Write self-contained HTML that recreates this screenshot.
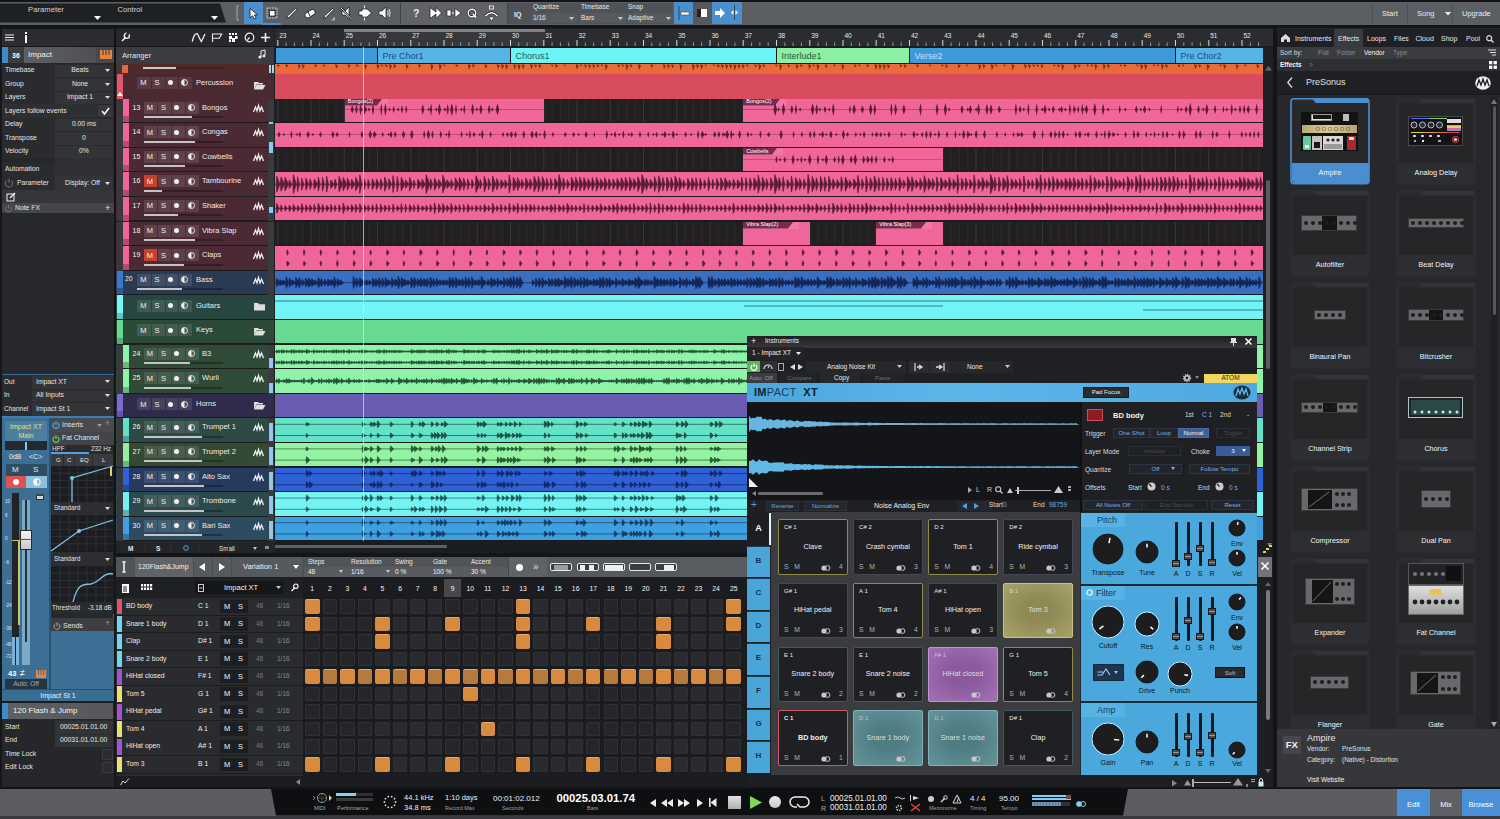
<!DOCTYPE html><html><head><meta charset="utf-8"><style>
html,body{margin:0;padding:0;width:1500px;height:819px;overflow:hidden;background:#1b1c1f;}
body{position:relative;font-family:"Liberation Sans",sans-serif;}
div{position:absolute;box-sizing:border-box;}
.t{white-space:nowrap;line-height:1;}
svg{position:absolute;overflow:visible;}
</style></head><body>

<div style="left:0px;top:0px;width:1500px;height:28px;background:#131417;"></div>
<div style="left:0px;top:2px;width:1500px;height:23px;background:#5b5e63;"></div>
<svg style="left:0px;top:0px;" width="240" height="28" viewBox="0 0 240 28"><polygon points="0,3.5 220,3.5 226,22.5 0,22.5" fill="#1f2024"/></svg>
<div class="t" style="left:28px;top:5.5px;font-size:7.7px;color:#d4d4d4;">Parameter</div>
<div class="t" style="left:117.5px;top:5.5px;font-size:7.7px;color:#d4d4d4;">Control</div>
<svg style="left:94px;top:16px;" width="8" height="5" viewBox="0 0 8 5"><polygon points="0,0 7,0 3.5,4" fill="#fff"/></svg>
<svg style="left:211px;top:16px;" width="8" height="5" viewBox="0 0 8 5"><polygon points="0,0 7,0 3.5,4" fill="#fff"/></svg>
<svg style="left:236px;top:6px;" width="4" height="15" viewBox="0 0 4 15"><path d="M3,0 L1,0 L1,14 L3,14" stroke="#aaa" fill="none" stroke-width="1"/></svg>
<div style="left:244px;top:2px;width:19px;height:22px;background:#4a90d0;"></div>
<svg style="left:249px;top:8px;" width="10" height="12" viewBox="0 0 10 12"><path d="M1,0.5 L1,10 L3.5,7.8 L5.5,11 L7.2,10 L5.3,7 L8.5,6.8 Z" fill="#fff" stroke="#111" stroke-width="0.8"/></svg>
<div style="left:262px;top:23px;width:19px;height:2px;background:#4a90d0;"></div>
<svg style="left:266px;top:7px;" width="13" height="13" viewBox="0 0 13 13"><rect x="1" y="1" width="10" height="10" fill="none" stroke="#eee" stroke-width="1" stroke-dasharray="1.4,1.2"/><rect x="3.5" y="3.5" width="5.5" height="5.5" fill="#fff" stroke="#111" stroke-width="0.7"/></svg>
<svg style="left:285px;top:7px;" width="13" height="13" viewBox="0 0 13 13"><path d="M1.5,11.5 L2.5,9 L10.5,1.5 L11.8,2.6 L4,10.5 Z" fill="#fff" stroke="#111" stroke-width="0.8"/></svg>
<svg style="left:303px;top:7px;" width="14" height="13" viewBox="0 0 14 13"><rect x="1.5" y="4" width="11" height="5.5" rx="2.7" fill="#fff" stroke="#111" stroke-width="0.8" transform="rotate(-32 7 6.7)"/><path d="M5,5 L7,9" stroke="#111" stroke-width="0.9"/></svg>
<svg style="left:322px;top:7px;" width="14" height="15" viewBox="0 0 14 15"><path d="M1.5,11.5 L2.5,9 L10.5,1.5 L11.8,2.6 L4,10.5 Z" fill="#fff" stroke="#111" stroke-width="0.8"/><path d="M9,13.5 L13,13.5 L13,9.5 Z" fill="#aaa"/></svg>
<svg style="left:340px;top:6px;" width="13" height="14" viewBox="0 0 13 14"><path d="M2,5 L5,5 L9,1 L9,13 L5,9 L2,9 Z" fill="#fff" stroke="#111" stroke-width="0.7"/><path d="M1,2 L11.5,13" stroke="#111" stroke-width="2"/><path d="M1,2 L11.5,13" stroke="#eee" stroke-width="1"/></svg>
<svg style="left:358px;top:5px;" width="15" height="16" viewBox="0 0 15 16"><path d="M6.5,0.5 L6.5,15.5" stroke="#eee" stroke-width="1"/><path d="M1,6 L4,6 L4,4 L9,4 L13.5,8 L9,12 L4,12 L4,10 L1,10 Z" fill="#fff" stroke="#111" stroke-width="0.7"/></svg>
<svg style="left:378px;top:6px;" width="13" height="14" viewBox="0 0 13 14"><path d="M1,5 L4,5 L8,1 L8,13 L4,9 L1,9 Z" fill="#fff" stroke="#111" stroke-width="0.7"/><path d="M9.5,4.5 Q11,7 9.5,9.5 M11,3 Q13.5,7 11,11" stroke="#eee" fill="none" stroke-width="0.9"/></svg>
<div style="left:400px;top:3px;width:1px;height:21px;background:#3e4045;"></div>
<div style="left:401px;top:2px;width:106px;height:23px;background:#606267;"></div>
<div class="t" style="left:413px;top:7.5px;font-size:10.5px;color:#ececec;font-weight:bold;">?</div>
<svg style="left:429px;top:6px;" width="14" height="14" viewBox="0 0 14 14"><path d="M1,1.5 L7,6 L7,1.5 L12.5,7 L7,12.5 L7,8 L1,12.5 Z" fill="#fff" stroke="#111" stroke-width="0.7"/></svg>
<svg style="left:446px;top:7px;" width="16" height="12" viewBox="0 0 16 12"><rect x="1" y="3" width="4" height="6" fill="#fff" stroke="#111" stroke-width="0.6"/><circle cx="7" cy="6" r="1" fill="#ddd"/><path d="M9,1.5 L15,6 L9,10.5 Z" fill="#fff" stroke="#111" stroke-width="0.6"/></svg>
<svg style="left:467px;top:8px;" width="11" height="11" viewBox="0 0 11 11"><circle cx="5" cy="5" r="3.8" stroke="#111" fill="none" stroke-width="2.4"/><circle cx="5" cy="5" r="3.8" stroke="#fff" fill="none" stroke-width="1.4"/><path d="M6,6 L9,9.5" stroke="#fff" stroke-width="1.4"/></svg>
<svg style="left:484px;top:5px;" width="15" height="17" viewBox="0 0 15 17"><rect x="5.5" y="1" width="4" height="3" fill="none" stroke="#eee" stroke-width="0.9"/><path d="M1.5,11 Q7.5,4.5 13.5,11" stroke="#111" fill="none" stroke-width="2.6"/><path d="M1.5,11 Q7.5,4.5 13.5,11" stroke="#fff" fill="none" stroke-width="1.6"/><path d="M5,12 L10,12 L7.5,16 Z" fill="#fff" stroke="#111" stroke-width="0.5"/></svg>
<div style="left:507px;top:3px;width:2px;height:21px;background:#46494e;"></div>
<div style="left:509px;top:3px;width:164px;height:21px;background:#4f5257;"></div>
<div class="t" style="left:514px;top:11px;font-size:7px;color:#ececec;font-weight:bold;">IQ</div>
<div class="t" style="left:533px;top:4px;font-size:6.5px;color:#e8e8e8;">Quantize</div>
<div style="left:532px;top:13px;width:45px;height:10px;background:#56595e;"></div>
<div class="t" style="left:533px;top:15px;font-size:6.5px;color:#e8e8e8;">1/16</div>
<svg style="left:569px;top:17px;" width="6" height="4" viewBox="0 0 6 4"><polygon points="0,0 5,0 2.5,3" fill="#ccc"/></svg>
<div class="t" style="left:581px;top:4px;font-size:6.5px;color:#e8e8e8;">Timebase</div>
<div style="left:580px;top:13px;width:46px;height:10px;background:#56595e;"></div>
<div class="t" style="left:581px;top:15px;font-size:6.5px;color:#e8e8e8;">Bars</div>
<svg style="left:618px;top:17px;" width="6" height="4" viewBox="0 0 6 4"><polygon points="0,0 5,0 2.5,3" fill="#ccc"/></svg>
<div class="t" style="left:628px;top:4px;font-size:6.5px;color:#e8e8e8;">Snap</div>
<div style="left:627px;top:13px;width:47px;height:10px;background:#56595e;"></div>
<div class="t" style="left:628px;top:15px;font-size:6.5px;color:#e8e8e8;">Adaptive</div>
<svg style="left:666px;top:17px;" width="6" height="4" viewBox="0 0 6 4"><polygon points="0,0 5,0 2.5,3" fill="#ccc"/></svg>
<div style="left:674px;top:2px;width:19px;height:22px;background:#4a90d0;"></div>
<svg style="left:677px;top:6px;" width="13" height="14" viewBox="0 0 13 14"><path d="M2,0 L2,14" stroke="#333" stroke-width="0.8"/><rect x="4" y="6" width="8" height="3" fill="#fff" stroke="#333" stroke-width="0.5"/></svg>
<div style="left:693px;top:2px;width:19px;height:22px;background:#55585d;"></div>
<svg style="left:696px;top:8px;" width="13" height="10" viewBox="0 0 13 10"><rect x="1" y="1" width="4" height="8" fill="#222"/><rect x="5" y="1" width="6" height="8" fill="#fff"/></svg>
<div style="left:712px;top:2px;width:30px;height:22px;background:#4a90d0;"></div>
<svg style="left:715px;top:7px;" width="11" height="12" viewBox="0 0 11 12"><path d="M0,4 L5,4 L5,1 L10,6 L5,11 L5,8 L0,8 Z" fill="#fff"/></svg>
<svg style="left:729px;top:5px;" width="11" height="15" viewBox="0 0 11 15"><path d="M5.5,0 L5.5,15" stroke="#333" stroke-width="0.8"/><path d="M2,7.5 L4.5,5 L4.5,10 Z M9,7.5 L6.5,5 L6.5,10 Z" fill="#fff"/></svg>
<div style="left:1372px;top:3px;width:1px;height:21px;background:#4b4e53;"></div>
<div style="left:1407px;top:3px;width:1px;height:21px;background:#4b4e53;"></div>
<div style="left:1452px;top:3px;width:1px;height:21px;background:#4b4e53;"></div>
<div class="t" style="left:1382px;top:10px;font-size:7.5px;color:#ececec;">Start</div>
<div class="t" style="left:1417px;top:10px;font-size:7.5px;color:#ececec;">Song</div>
<svg style="left:1445px;top:12px;" width="7" height="4" viewBox="0 0 7 4"><polygon points="0,0 6,0 3,3.5" fill="#eee"/></svg>
<div class="t" style="left:1462px;top:10px;font-size:7.5px;color:#ececec;">Upgrade</div>
<div style="left:0px;top:28px;width:116px;height:761px;background:#161719;"></div>
<div style="left:2px;top:29px;width:112px;height:759px;background:#26272b;"></div>
<div style="left:2px;top:29px;width:112px;height:17px;background:#2c2d31;"></div>
<svg style="left:5px;top:34px;" width="10" height="8" viewBox="0 0 10 8"><path d="M0,1 H9 M0,3.5 H9 M0,6 H9" stroke="#eee" stroke-width="1.2"/></svg>
<div style="left:25px;top:35px;width:2.2px;height:8px;background:#fff;"></div>
<div style="left:25px;top:31.5px;width:2.2px;height:2px;background:#fff;"></div>
<div style="left:2px;top:46px;width:112px;height:1px;background:#161719;"></div>
<div style="left:2px;top:47px;width:6px;height:16px;background:#3a8ccc;"></div>
<div style="left:8px;top:47px;width:16px;height:16px;background:#3b3c40;"></div>
<div class="t" style="left:12px;top:52px;font-size:7px;color:#fff;font-weight:bold;">36</div>
<div style="left:24px;top:47px;width:72px;height:16px;background:linear-gradient(90deg,#5d5f63,#4f5055);"></div>
<div class="t" style="left:28px;top:51px;font-size:8px;color:#f2f2f2;">Impact</div>
<div style="left:96px;top:47px;width:18px;height:16px;background:#47484c;"></div>
<svg style="left:100px;top:50px;" width="12" height="9" viewBox="0 0 12 9"><rect x="0" y="0" width="12" height="9" fill="#e8843a"/><path d="M3,0 V5 M6,0 V5 M9,0 V5" stroke="#47484c" stroke-width="1.2"/></svg>
<div style="left:2px;top:63.5px;width:53px;height:13.5px;background:#2a2b2f;"></div>
<div style="left:55px;top:63.5px;width:58px;height:13.5px;background:#333438;border-top:1px solid #2a2b2e;"></div>
<div class="t" style="left:55px;top:67.0px;width:50px;text-align:center;font-size:6.8px;color:#e4e4e4">Beats</div>
<svg style="left:105px;top:69.0px;" width="6" height="4" viewBox="0 0 6 4"><polygon points="0,0 5,0 2.5,3" fill="#ddd"/></svg>
<div class="t" style="left:5px;top:67.0px;font-size:6.8px;color:#e4e4e4;">Timebase</div>
<div style="left:2px;top:77.0px;width:53px;height:13.5px;background:#2a2b2f;"></div>
<div style="left:55px;top:77.0px;width:58px;height:13.5px;background:#333438;border-top:1px solid #2a2b2e;"></div>
<div class="t" style="left:55px;top:80.5px;width:50px;text-align:center;font-size:6.8px;color:#e4e4e4">None</div>
<svg style="left:105px;top:82.5px;" width="6" height="4" viewBox="0 0 6 4"><polygon points="0,0 5,0 2.5,3" fill="#ddd"/></svg>
<div class="t" style="left:5px;top:80.5px;font-size:6.8px;color:#e4e4e4;">Group</div>
<div style="left:2px;top:90.5px;width:53px;height:13.5px;background:#2a2b2f;"></div>
<div style="left:55px;top:90.5px;width:58px;height:13.5px;background:#333438;border-top:1px solid #2a2b2e;"></div>
<div class="t" style="left:55px;top:94.0px;width:50px;text-align:center;font-size:6.8px;color:#e4e4e4">Impact 1</div>
<svg style="left:105px;top:96.0px;" width="6" height="4" viewBox="0 0 6 4"><polygon points="0,0 5,0 2.5,3" fill="#ddd"/></svg>
<div class="t" style="left:5px;top:94.0px;font-size:6.8px;color:#e4e4e4;">Layers</div>
<div style="left:2px;top:104.0px;width:53px;height:13.5px;background:#2a2b2f;"></div>
<div style="left:2px;top:104.0px;width:96px;height:13.5px;background:#2e2f33;"></div>
<div style="left:98px;top:105.0px;width:15px;height:12px;background:#39393d;"></div>
<svg style="left:101px;top:107.0px;" width="9" height="8" viewBox="0 0 9 8"><path d="M1,4 L3.5,7 L8,1" stroke="#fff" stroke-width="1.5" fill="none"/></svg>
<div class="t" style="left:5px;top:107.5px;font-size:6.8px;color:#e4e4e4;">Layers follow events</div>
<div style="left:2px;top:117.5px;width:53px;height:13.5px;background:#2a2b2f;"></div>
<div style="left:55px;top:117.5px;width:58px;height:13.5px;background:#333438;border-top:1px solid #2a2b2e;"></div>
<div class="t" style="left:55px;top:121.0px;width:58px;text-align:center;font-size:6.8px;color:#e4e4e4">0.00 ms</div>
<div class="t" style="left:5px;top:121.0px;font-size:6.8px;color:#e4e4e4;">Delay</div>
<div style="left:2px;top:131.0px;width:53px;height:13.5px;background:#2a2b2f;"></div>
<div style="left:55px;top:131.0px;width:58px;height:13.5px;background:#333438;border-top:1px solid #2a2b2e;"></div>
<div class="t" style="left:55px;top:134.5px;width:58px;text-align:center;font-size:6.8px;color:#e4e4e4">0</div>
<div class="t" style="left:5px;top:134.5px;font-size:6.8px;color:#e4e4e4;">Transpose</div>
<div style="left:2px;top:144.5px;width:53px;height:13.5px;background:#2a2b2f;"></div>
<div style="left:55px;top:144.5px;width:58px;height:13.5px;background:#333438;border-top:1px solid #2a2b2e;"></div>
<div class="t" style="left:55px;top:148.0px;width:58px;text-align:center;font-size:6.8px;color:#e4e4e4">0%</div>
<div class="t" style="left:5px;top:148.0px;font-size:6.8px;color:#e4e4e4;">Velocity</div>
<div style="left:55px;top:158px;width:58px;height:6px;background:#2f3034;"></div>
<div style="left:2px;top:163px;width:53px;height:13px;background:#2a2b2f;"></div>
<div style="left:55px;top:163px;width:58px;height:13px;background:#2f3034;"></div>
<div class="t" style="left:5px;top:166px;font-size:6.8px;color:#e4e4e4;">Automation</div>
<div style="left:2px;top:176px;width:53px;height:14px;background:#2a2b2f;"></div>
<div style="left:55px;top:176px;width:58px;height:14px;background:#333438;"></div>
<svg style="left:4px;top:178px;" width="10" height="10" viewBox="0 0 10 10"><path d="M3,2.5 A3.6,3.6 0 1 0 7,2.5" stroke="#777" fill="none" stroke-width="1"/><path d="M5,1 V5" stroke="#777"/></svg>
<div class="t" style="left:17px;top:179.5px;font-size:6.8px;color:#e4e4e4;">Parameter</div>
<div class="t" style="left:65px;top:179.5px;font-size:6.8px;color:#e4e4e4;">Display: Off</div>
<svg style="left:105px;top:182px;" width="6" height="4" viewBox="0 0 6 4"><polygon points="0,0 5,0 2.5,3" fill="#ddd"/></svg>
<div style="left:2px;top:190px;width:112px;height:13px;background:#35363a;"></div>
<svg style="left:6px;top:192px;" width="10" height="10" viewBox="0 0 10 10"><rect x="1" y="2" width="7" height="7" fill="none" stroke="#eee"/><path d="M4,6 L9,1" stroke="#eee" stroke-width="1.5"/></svg>
<div style="left:2px;top:203px;width:112px;height:10px;background:#45464b;"></div>
<svg style="left:4px;top:204px;" width="9" height="9" viewBox="0 0 9 9"><path d="M2.5,2.5 A3,3 0 1 0 6.5,2.5" stroke="#777" fill="none"/><path d="M4.5,1 V4.5" stroke="#777"/></svg>
<div class="t" style="left:15px;top:205px;font-size:6.8px;color:#e4e4e4;">Note FX</div>
<div class="t" style="left:105px;top:203.5px;font-size:9px;color:#e4e4e4;">+</div>
<div style="left:2px;top:213px;width:112px;height:158px;background:#27282c;"></div>
<div style="left:2px;top:371px;width:112px;height:3px;background:#1d2a36;"></div>
<div style="left:2px;top:373.5px;width:112px;height:1px;background:#3a6c92;"></div>
<div style="left:2px;top:375.0px;width:30px;height:13.6px;background:#2a2b2f;"></div>
<div style="left:32px;top:375.0px;width:81px;height:13.6px;background:#333438;border-top:1px solid #2a2b2e;"></div>
<div class="t" style="left:4px;top:378.5px;font-size:6.5px;color:#e4e4e4;">Out</div>
<div class="t" style="left:36px;top:378.5px;font-size:6.8px;color:#e4e4e4;">Impact XT</div>
<svg style="left:105px;top:380.0px;" width="6" height="4" viewBox="0 0 6 4"><polygon points="0,0 5,0 2.5,3" fill="#ddd"/></svg>
<div style="left:2px;top:388.6px;width:30px;height:13.6px;background:#2a2b2f;"></div>
<div style="left:32px;top:388.6px;width:81px;height:13.6px;background:#333438;border-top:1px solid #2a2b2e;"></div>
<div class="t" style="left:4px;top:392.1px;font-size:6.5px;color:#e4e4e4;">In</div>
<div class="t" style="left:36px;top:392.1px;font-size:6.8px;color:#e4e4e4;">All Inputs</div>
<svg style="left:105px;top:393.6px;" width="6" height="4" viewBox="0 0 6 4"><polygon points="0,0 5,0 2.5,3" fill="#ddd"/></svg>
<div style="left:2px;top:402.2px;width:30px;height:13.6px;background:#2a2b2f;"></div>
<div style="left:32px;top:402.2px;width:81px;height:13.6px;background:#333438;border-top:1px solid #2a2b2e;"></div>
<div class="t" style="left:4px;top:405.7px;font-size:6.5px;color:#e4e4e4;">Channel</div>
<div class="t" style="left:36px;top:405.7px;font-size:6.8px;color:#e4e4e4;">Impact St 1</div>
<svg style="left:105px;top:407.2px;" width="6" height="4" viewBox="0 0 6 4"><polygon points="0,0 5,0 2.5,3" fill="#ddd"/></svg>
<div style="left:2px;top:416px;width:112px;height:2.5px;background:#3d7fb5;"></div>
<div style="left:2px;top:418px;width:112px;height:283px;background:#3c6f93;"></div>
<div style="left:49px;top:418px;width:2px;height:272px;background:#2c5270;"></div>
<div style="left:5px;top:421px;width:42px;height:20px;background:#4c7e9f;"></div>
<div class="t" style="left:5px;top:423px;font-size:7px;color:#eadf86;width:42px;text-align:center;">Impact XT</div>
<div class="t" style="left:5px;top:432px;font-size:7px;color:#eadf86;width:42px;text-align:center;">Main</div>
<div style="left:5px;top:441px;width:42px;height:9px;background:#23292f;"></div>
<div style="left:25px;top:442px;width:2px;height:8px;background:#8cc6ec;"></div>
<div class="t" style="left:9px;top:453px;font-size:7px;color:#f0f0f0;">0dB</div>
<div class="t" style="left:29px;top:453px;font-size:7px;color:#f0f0f0;">&lt;C&gt;</div>
<div style="left:6px;top:464px;width:41px;height:12px;background:#2e4e66;"></div>
<div class="t" style="left:12px;top:466px;font-size:8px;color:#e8e8e8;">M</div>
<div class="t" style="left:33px;top:466px;font-size:8px;color:#e8e8e8;">S</div>
<div style="left:6px;top:476px;width:20px;height:12px;background:#e05252;"></div>
<div style="left:13px;top:479px;width:6px;height:6px;background:#fff;border-radius:3px;"></div>
<div style="left:26px;top:476px;width:21px;height:12px;background:#8ec2dc;"></div>
<svg style="left:33px;top:478px;" width="8" height="8" viewBox="0 0 8 8"><circle cx="4" cy="4" r="3.3" fill="none" stroke="#fff"/><path d="M4,0.7 A3.3,3.3 0 0 0 4,7.3 Z" fill="#fff"/></svg>
<div style="left:36px;top:494px;width:8px;height:6px;background:#cfd8de;border:1px solid #333;border-top:2px solid #444;"></div>
<div class="t" style="left:5px;top:500px;font-size:4.5px;color:#e0e8f0;">10</div>
<div class="t" style="left:5px;top:514px;font-size:4.5px;color:#e0e8f0;">6</div>
<div class="t" style="left:5px;top:537px;font-size:4.5px;color:#e0e8f0;">0</div>
<div class="t" style="left:5px;top:561px;font-size:4.5px;color:#e0e8f0;">-6</div>
<div class="t" style="left:5px;top:581px;font-size:4.5px;color:#e0e8f0;">-12</div>
<div class="t" style="left:5px;top:604px;font-size:4.5px;color:#e0e8f0;">-24</div>
<div class="t" style="left:5px;top:627px;font-size:4.5px;color:#e0e8f0;">-36</div>
<div class="t" style="left:5px;top:643px;font-size:4.5px;color:#e0e8f0;">-48</div>
<div class="t" style="left:5px;top:655px;font-size:4.5px;color:#e0e8f0;">-72</div>
<div style="left:12px;top:493px;width:7px;height:172px;background:#1f2428;"></div>
<div style="left:18px;top:540px;width:1.5px;height:85px;background:#c8c27a;"></div>
<div style="left:12px;top:540px;width:7px;height:1px;background:#c8c27a;"></div>
<div style="left:12px;top:637px;width:3px;height:28px;background:#79b3db;"></div>
<div style="left:16px;top:637px;width:3px;height:28px;background:#79b3db;"></div>
<div style="left:22px;top:500px;width:8px;height:165px;background:#7aaac6;"></div>
<div style="left:25px;top:500px;width:2px;height:142px;background:#26323b;"></div>
<div style="left:20px;top:530px;width:12px;height:20px;background:linear-gradient(#f4f4f4,#c9c9c9);border:1px solid #2a2a2a;"></div>
<div style="left:20px;top:539px;width:12px;height:1px;background:#555;"></div>
<div class="t" style="left:8px;top:670px;font-size:7.5px;color:#fff;font-weight:bold;">43</div>
<div class="t" style="left:20px;top:669px;font-size:9px;color:#fff;">&#x2260;</div>
<svg style="left:36px;top:670px;" width="10" height="8" viewBox="0 0 10 8"><rect x="0" y="0" width="10" height="8" fill="#e8843a"/><path d="M2.5,0 V5 M5,0 V5 M7.5,0 V5" stroke="#3c6f93" stroke-width="1"/></svg>
<div style="left:5px;top:679px;width:42px;height:10px;background:#243644;"></div>
<div class="t" style="left:5px;top:681px;font-size:6.5px;color:#9fb0bd;width:42px;text-align:center;">Auto: Off</div>
<div style="left:51px;top:418px;width:63px;height:14px;background:#4a4b50;"></div>
<svg style="left:52px;top:421px;" width="8" height="8" viewBox="0 0 8 8"><path d="M2.4,1.8 A3,3 0 1 0 5.6,1.8" stroke="#4aa3e8" fill="none" stroke-width="1.2"/><path d="M4,0.3 V4" stroke="#4aa3e8" stroke-width="1.2"/></svg>
<div class="t" style="left:62px;top:421px;font-size:7px;color:#e4e4e4;">Inserts</div>
<svg style="left:97px;top:424px;" width="6" height="4" viewBox="0 0 6 4"><polygon points="0,0 5,0 2.5,3" fill="#999"/></svg>
<div class="t" style="left:105px;top:419px;font-size:9px;color:#999;">+</div>
<div style="left:51px;top:432px;width:63px;height:13px;background:#434448;"></div>
<svg style="left:52px;top:435px;" width="8" height="8" viewBox="0 0 8 8"><path d="M2.4,1.8 A3,3 0 1 0 5.6,1.8" stroke="#5fd05f" fill="none" stroke-width="1.2"/><path d="M4,0.3 V4" stroke="#5fd05f" stroke-width="1.2"/></svg>
<div class="t" style="left:62px;top:435px;font-size:6.8px;color:#e4e4e4;">Fat Channel</div>
<div style="left:51px;top:445px;width:63px;height:169px;background:#1c1d20;"></div>
<div style="left:51px;top:445px;width:62px;height:9px;background:#2a2b2f;"></div>
<div class="t" style="left:52px;top:446px;font-size:6.3px;color:#e4e4e4;">HPF</div>
<div class="t" style="left:91px;top:446px;font-size:6.3px;color:#e4e4e4;">232 Hz</div>
<div style="left:51px;top:452px;width:38px;height:1.5px;background:#4aa3e8;"></div>
<div style="left:51px;top:454px;width:62px;height:12px;background:#3a3b40;"></div>
<div class="t" style="left:56px;top:457px;font-size:6px;color:#e4e4e4;">G</div>
<div class="t" style="left:67px;top:457px;font-size:6px;color:#e4e4e4;">C</div>
<div class="t" style="left:80px;top:457px;font-size:6px;color:#e4e4e4;">EQ</div>
<div class="t" style="left:102px;top:457px;font-size:6px;color:#e4e4e4;">L</div>
<div style="left:63px;top:454px;width:1px;height:12px;background:#2a2b2f;"></div>
<div style="left:74px;top:454px;width:1px;height:12px;background:#2a2b2f;"></div>
<div style="left:92px;top:454px;width:1px;height:12px;background:#2a2b2f;"></div>
<div style="left:51px;top:466px;width:63px;height:36px;background:#1c1d20;"></div>
<svg style="left:51px;top:466px;" width="62" height="36" viewBox="0 0 62 36"><path d="M9,0 V36" stroke="#2e3034" stroke-width="1"/><path d="M18,0 V36" stroke="#2e3034" stroke-width="1"/><path d="M27,0 V36" stroke="#2e3034" stroke-width="1"/><path d="M36,0 V36" stroke="#2e3034" stroke-width="1"/><path d="M45,0 V36" stroke="#2e3034" stroke-width="1"/><path d="M54,0 V36" stroke="#2e3034" stroke-width="1"/><path d="M0,7.2 H62" stroke="#2e3034" stroke-width="1"/><path d="M0,14.4 H62" stroke="#2e3034" stroke-width="1"/><path d="M0,21.6 H62" stroke="#2e3034" stroke-width="1"/><path d="M0,28.8 H62" stroke="#2e3034" stroke-width="1"/><path d="M21,36 V12 L62,0" stroke="#7fc4e8" fill="none" stroke-width="1.3"/><circle cx="21" cy="12" r="2" fill="#7fc4e8"/></svg>
<div style="left:110px;top:467px;width:2px;height:9px;background:#e5d070;"></div>
<div style="left:51px;top:502px;width:62px;height:13px;background:#2d2e32;"></div>
<div class="t" style="left:54px;top:505px;font-size:6.5px;color:#e4e4e4;">Standard</div>
<svg style="left:105px;top:507px;" width="6" height="4" viewBox="0 0 6 4"><polygon points="0,0 5,0 2.5,3" fill="#ddd"/></svg>
<div style="left:51px;top:515px;width:63px;height:36px;background:#1c1d20;"></div>
<svg style="left:51px;top:515px;" width="62" height="36" viewBox="0 0 62 36"><path d="M9,0 V36" stroke="#2e3034" stroke-width="1"/><path d="M18,0 V36" stroke="#2e3034" stroke-width="1"/><path d="M27,0 V36" stroke="#2e3034" stroke-width="1"/><path d="M36,0 V36" stroke="#2e3034" stroke-width="1"/><path d="M45,0 V36" stroke="#2e3034" stroke-width="1"/><path d="M54,0 V36" stroke="#2e3034" stroke-width="1"/><path d="M0,7.2 H62" stroke="#2e3034" stroke-width="1"/><path d="M0,14.4 H62" stroke="#2e3034" stroke-width="1"/><path d="M0,21.6 H62" stroke="#2e3034" stroke-width="1"/><path d="M0,28.8 H62" stroke="#2e3034" stroke-width="1"/><path d="M0,36 L28,16 L62,5" stroke="#7fc4e8" fill="none" stroke-width="1.3"/><circle cx="28" cy="16" r="2" fill="#7fc4e8"/></svg>
<div style="left:51px;top:552px;width:62px;height:14px;background:#2d2e32;"></div>
<div class="t" style="left:54px;top:556px;font-size:6.5px;color:#e4e4e4;">Standard</div>
<svg style="left:105px;top:558px;" width="6" height="4" viewBox="0 0 6 4"><polygon points="0,0 5,0 2.5,3" fill="#ddd"/></svg>
<div style="left:51px;top:566px;width:63px;height:36px;background:#1c1d20;"></div>
<svg style="left:51px;top:566px;" width="62" height="36" viewBox="0 0 62 36"><path d="M9,0 V36" stroke="#2e3034" stroke-width="1"/><path d="M18,0 V36" stroke="#2e3034" stroke-width="1"/><path d="M27,0 V36" stroke="#2e3034" stroke-width="1"/><path d="M36,0 V36" stroke="#2e3034" stroke-width="1"/><path d="M45,0 V36" stroke="#2e3034" stroke-width="1"/><path d="M54,0 V36" stroke="#2e3034" stroke-width="1"/><path d="M0,7.2 H62" stroke="#2e3034" stroke-width="1"/><path d="M0,14.4 H62" stroke="#2e3034" stroke-width="1"/><path d="M0,21.6 H62" stroke="#2e3034" stroke-width="1"/><path d="M0,28.8 H62" stroke="#2e3034" stroke-width="1"/><path d="M22,36 C26,20 30,18 40,18 C48,17 52,6 62,8" stroke="#7fc4e8" fill="none" stroke-width="1.3"/></svg>
<div style="left:51px;top:602px;width:62px;height:12px;background:#2a2b2f;"></div>
<div class="t" style="left:52px;top:604.5px;font-size:6.3px;color:#e4e4e4;">Threshold</div>
<div class="t" style="left:88px;top:604.5px;font-size:6.3px;color:#e4e4e4;">-3.18 dB</div>
<div style="left:51px;top:613px;width:55px;height:1.5px;background:#4aa3e8;"></div>
<div style="left:51px;top:613px;width:62px;height:5px;background:#27282c;"></div>
<div style="left:51px;top:618px;width:63px;height:13px;background:#3d3e42;"></div>
<svg style="left:53px;top:622px;" width="8" height="8" viewBox="0 0 8 8"><path d="M2.4,1.8 A3,3 0 1 0 5.6,1.8" stroke="#aaa" fill="none" stroke-width="1"/><path d="M4,0.3 V4" stroke="#aaa"/></svg>
<div class="t" style="left:63px;top:621.5px;font-size:7px;color:#e4e4e4;">Sends</div>
<div class="t" style="left:105px;top:619px;font-size:9px;color:#999;">+</div>
<div style="left:51px;top:631px;width:62px;height:59px;background:#3c6f93;"></div>
<div style="left:2px;top:689px;width:112px;height:1px;background:#2a506c;"></div>
<div style="left:2px;top:690px;width:112px;height:11px;background:#3a6d92;"></div>
<div class="t" style="left:2px;top:692px;font-size:7px;color:#e8f0f6;width:112px;text-align:center;">Impact St 1</div>
<div style="left:2px;top:701px;width:112px;height:2px;background:#1c1d20;"></div>
<div style="left:2px;top:703px;width:6px;height:16px;background:#3a8ccc;"></div>
<div style="left:8px;top:703px;width:105px;height:16px;background:linear-gradient(90deg,#5e6065,#55575b);"></div>
<div class="t" style="left:13px;top:707px;font-size:8px;color:#f4f4f4;">120 Flash &amp; Jump</div>
<div style="left:55px;top:720.0px;width:58px;height:13.5px;background:#333438;border-top:1px solid #2a2b2e;"></div>
<div class="t" style="left:5px;top:723.5px;font-size:6.8px;color:#e4e4e4;">Start</div>
<div class="t" style="left:60px;top:723.5px;font-size:6.8px;color:#e4e4e4;">00025.01.01.00</div>
<div style="left:55px;top:733.5px;width:58px;height:13.5px;background:#333438;border-top:1px solid #2a2b2e;"></div>
<div class="t" style="left:5px;top:737.0px;font-size:6.8px;color:#e4e4e4;">End</div>
<div class="t" style="left:60px;top:737.0px;font-size:6.8px;color:#e4e4e4;">00031.01.01.00</div>
<div class="t" style="left:5px;top:750.5px;font-size:6.8px;color:#e4e4e4;">Time Lock</div>
<div style="left:102px;top:748.5px;width:11px;height:11px;background:#2c2d31;border:1px solid #3a3b3f;"></div>
<div class="t" style="left:5px;top:764.0px;font-size:6.8px;color:#e4e4e4;">Edit Lock</div>
<div style="left:102px;top:762.0px;width:11px;height:11px;background:#2c2d31;border:1px solid #3a3b3f;"></div>
<div style="left:114px;top:28px;width:2px;height:526px;background:#131416;"></div>
<div style="left:116px;top:28px;width:159px;height:526px;background:#1e1f22;"></div>
<div style="left:116px;top:29px;width:158px;height:17px;background:#27282c;"></div>
<svg style="left:120px;top:32px;" width="10" height="11" viewBox="0 0 10 11"><path d="M2,9 L6,5" stroke="#eee" stroke-width="1.6"/><circle cx="6.8" cy="3.8" r="2.6" fill="none" stroke="#eee" stroke-width="1.4"/><rect x="6.5" y="0" width="3" height="3" fill="#27282c" transform="rotate(45 8 1.5)"/></svg>
<svg style="left:190px;top:32px;" width="17" height="11" viewBox="0 0 17 11"><path d="M2.3,9.7 Q4,1 7.3,1.7 L11.3,9.7 L15,2" stroke="#eee" fill="none" stroke-width="1.3" stroke-linejoin="round"/></svg>
<svg style="left:210px;top:32px;" width="13" height="11" viewBox="0 0 13 11"><path d="M2.5,10 V2 H11.7 L9.3,6.2 H2.5" stroke="#eee" fill="none" stroke-width="1.1"/></svg>
<svg style="left:228px;top:32px;" width="11" height="11" viewBox="0 0 11 11"><rect x="1" y="1" width="2" height="2" fill="#fff"/><rect x="4" y="1" width="2" height="2" fill="#fff"/><rect x="7" y="1" width="2" height="2" fill="#fff"/><rect x="1" y="4" width="3" height="3" fill="#fff"/><rect x="7" y="4" width="2.5" height="3" fill="#fff"/><rect x="1" y="7.5" width="2" height="2.5" fill="#fff"/><rect x="4" y="6" width="3" height="4" fill="#fff"/></svg>
<svg style="left:244px;top:32px;" width="11" height="11" viewBox="0 0 11 11"><circle cx="5.5" cy="5.5" r="4.3" fill="none" stroke="#eee" stroke-width="1.2"/><path d="M5.5,5.5 L3.5,7.8" stroke="#eee" stroke-width="1.2"/></svg>
<svg style="left:260px;top:32px;" width="11" height="11" viewBox="0 0 11 11"><path d="M5.5,1 V10 M1,5.5 H10" stroke="#eee" stroke-width="1.6"/></svg>
<div style="left:116px;top:46px;width:158px;height:1px;background:#18191b;"></div>
<div style="left:116px;top:47px;width:158px;height:16.5px;background:#3b3c40;"></div>
<div class="t" style="left:122px;top:51.5px;font-size:7.5px;color:#e8e8e8;">Arranger</div>
<svg style="left:258px;top:50px;" width="8" height="9" viewBox="0 0 8 9"><path d="M3,7 V1 L7,0 V5" stroke="#eee" fill="none" stroke-width="1"/><circle cx="2" cy="7" r="1.6" fill="#eee"/><circle cx="6" cy="6" r="1.4" fill="#eee"/></svg>
<div style="left:116px;top:63.5px;width:158px;height:0.5px;background:#18191b;"></div>
<div style="left:275px;top:29px;width:998px;height:17px;background:#2b2c30;"></div>
<div style="left:344px;top:31px;width:201px;height:15px;background:#37383c;"></div>
<div style="left:344px;top:29px;width:201px;height:2.5px;background:#7f8287;"></div>
<svg style="left:275px;top:29px;" width="990" height="17" viewBox="0 0 990 17"><path d="M2.8,11 V17" stroke="#d8d8d8" stroke-width="1"/><path d="M11.1,13.5 V17" stroke="#9a9a9a" stroke-width="1"/><path d="M19.4,13.5 V17" stroke="#9a9a9a" stroke-width="1"/><path d="M27.7,13.5 V17" stroke="#9a9a9a" stroke-width="1"/><path d="M36.0,11 V17" stroke="#d8d8d8" stroke-width="1"/><path d="M44.3,13.5 V17" stroke="#9a9a9a" stroke-width="1"/><path d="M52.6,13.5 V17" stroke="#9a9a9a" stroke-width="1"/><path d="M60.9,13.5 V17" stroke="#9a9a9a" stroke-width="1"/><path d="M69.2,11 V17" stroke="#d8d8d8" stroke-width="1"/><path d="M77.6,13.5 V17" stroke="#9a9a9a" stroke-width="1"/><path d="M85.9,13.5 V17" stroke="#9a9a9a" stroke-width="1"/><path d="M94.2,13.5 V17" stroke="#9a9a9a" stroke-width="1"/><path d="M102.5,11 V17" stroke="#d8d8d8" stroke-width="1"/><path d="M110.8,13.5 V17" stroke="#9a9a9a" stroke-width="1"/><path d="M119.1,13.5 V17" stroke="#9a9a9a" stroke-width="1"/><path d="M127.4,13.5 V17" stroke="#9a9a9a" stroke-width="1"/><path d="M135.8,11 V17" stroke="#d8d8d8" stroke-width="1"/><path d="M144.1,13.5 V17" stroke="#9a9a9a" stroke-width="1"/><path d="M152.4,13.5 V17" stroke="#9a9a9a" stroke-width="1"/><path d="M160.7,13.5 V17" stroke="#9a9a9a" stroke-width="1"/><path d="M169.0,11 V17" stroke="#d8d8d8" stroke-width="1"/><path d="M177.3,13.5 V17" stroke="#9a9a9a" stroke-width="1"/><path d="M185.6,13.5 V17" stroke="#9a9a9a" stroke-width="1"/><path d="M193.9,13.5 V17" stroke="#9a9a9a" stroke-width="1"/><path d="M202.2,11 V17" stroke="#d8d8d8" stroke-width="1"/><path d="M210.6,13.5 V17" stroke="#9a9a9a" stroke-width="1"/><path d="M218.9,13.5 V17" stroke="#9a9a9a" stroke-width="1"/><path d="M227.2,13.5 V17" stroke="#9a9a9a" stroke-width="1"/><path d="M235.5,11 V17" stroke="#d8d8d8" stroke-width="1"/><path d="M243.8,13.5 V17" stroke="#9a9a9a" stroke-width="1"/><path d="M252.1,13.5 V17" stroke="#9a9a9a" stroke-width="1"/><path d="M260.4,13.5 V17" stroke="#9a9a9a" stroke-width="1"/><path d="M268.8,11 V17" stroke="#d8d8d8" stroke-width="1"/><path d="M277.1,13.5 V17" stroke="#9a9a9a" stroke-width="1"/><path d="M285.4,13.5 V17" stroke="#9a9a9a" stroke-width="1"/><path d="M293.7,13.5 V17" stroke="#9a9a9a" stroke-width="1"/><path d="M302.0,11 V17" stroke="#d8d8d8" stroke-width="1"/><path d="M310.3,13.5 V17" stroke="#9a9a9a" stroke-width="1"/><path d="M318.6,13.5 V17" stroke="#9a9a9a" stroke-width="1"/><path d="M326.9,13.5 V17" stroke="#9a9a9a" stroke-width="1"/><path d="M335.2,11 V17" stroke="#d8d8d8" stroke-width="1"/><path d="M343.6,13.5 V17" stroke="#9a9a9a" stroke-width="1"/><path d="M351.9,13.5 V17" stroke="#9a9a9a" stroke-width="1"/><path d="M360.2,13.5 V17" stroke="#9a9a9a" stroke-width="1"/><path d="M368.5,11 V17" stroke="#d8d8d8" stroke-width="1"/><path d="M376.8,13.5 V17" stroke="#9a9a9a" stroke-width="1"/><path d="M385.1,13.5 V17" stroke="#9a9a9a" stroke-width="1"/><path d="M393.4,13.5 V17" stroke="#9a9a9a" stroke-width="1"/><path d="M401.8,11 V17" stroke="#d8d8d8" stroke-width="1"/><path d="M410.1,13.5 V17" stroke="#9a9a9a" stroke-width="1"/><path d="M418.4,13.5 V17" stroke="#9a9a9a" stroke-width="1"/><path d="M426.7,13.5 V17" stroke="#9a9a9a" stroke-width="1"/><path d="M435.0,11 V17" stroke="#d8d8d8" stroke-width="1"/><path d="M443.3,13.5 V17" stroke="#9a9a9a" stroke-width="1"/><path d="M451.6,13.5 V17" stroke="#9a9a9a" stroke-width="1"/><path d="M459.9,13.5 V17" stroke="#9a9a9a" stroke-width="1"/><path d="M468.2,11 V17" stroke="#d8d8d8" stroke-width="1"/><path d="M476.6,13.5 V17" stroke="#9a9a9a" stroke-width="1"/><path d="M484.9,13.5 V17" stroke="#9a9a9a" stroke-width="1"/><path d="M493.2,13.5 V17" stroke="#9a9a9a" stroke-width="1"/><path d="M501.5,11 V17" stroke="#d8d8d8" stroke-width="1"/><path d="M509.8,13.5 V17" stroke="#9a9a9a" stroke-width="1"/><path d="M518.1,13.5 V17" stroke="#9a9a9a" stroke-width="1"/><path d="M526.4,13.5 V17" stroke="#9a9a9a" stroke-width="1"/><path d="M534.8,11 V17" stroke="#d8d8d8" stroke-width="1"/><path d="M543.1,13.5 V17" stroke="#9a9a9a" stroke-width="1"/><path d="M551.4,13.5 V17" stroke="#9a9a9a" stroke-width="1"/><path d="M559.7,13.5 V17" stroke="#9a9a9a" stroke-width="1"/><path d="M568.0,11 V17" stroke="#d8d8d8" stroke-width="1"/><path d="M576.3,13.5 V17" stroke="#9a9a9a" stroke-width="1"/><path d="M584.6,13.5 V17" stroke="#9a9a9a" stroke-width="1"/><path d="M592.9,13.5 V17" stroke="#9a9a9a" stroke-width="1"/><path d="M601.2,11 V17" stroke="#d8d8d8" stroke-width="1"/><path d="M609.6,13.5 V17" stroke="#9a9a9a" stroke-width="1"/><path d="M617.9,13.5 V17" stroke="#9a9a9a" stroke-width="1"/><path d="M626.2,13.5 V17" stroke="#9a9a9a" stroke-width="1"/><path d="M634.5,11 V17" stroke="#d8d8d8" stroke-width="1"/><path d="M642.8,13.5 V17" stroke="#9a9a9a" stroke-width="1"/><path d="M651.1,13.5 V17" stroke="#9a9a9a" stroke-width="1"/><path d="M659.4,13.5 V17" stroke="#9a9a9a" stroke-width="1"/><path d="M667.8,11 V17" stroke="#d8d8d8" stroke-width="1"/><path d="M676.1,13.5 V17" stroke="#9a9a9a" stroke-width="1"/><path d="M684.4,13.5 V17" stroke="#9a9a9a" stroke-width="1"/><path d="M692.7,13.5 V17" stroke="#9a9a9a" stroke-width="1"/><path d="M701.0,11 V17" stroke="#d8d8d8" stroke-width="1"/><path d="M709.3,13.5 V17" stroke="#9a9a9a" stroke-width="1"/><path d="M717.6,13.5 V17" stroke="#9a9a9a" stroke-width="1"/><path d="M725.9,13.5 V17" stroke="#9a9a9a" stroke-width="1"/><path d="M734.2,11 V17" stroke="#d8d8d8" stroke-width="1"/><path d="M742.6,13.5 V17" stroke="#9a9a9a" stroke-width="1"/><path d="M750.9,13.5 V17" stroke="#9a9a9a" stroke-width="1"/><path d="M759.2,13.5 V17" stroke="#9a9a9a" stroke-width="1"/><path d="M767.5,11 V17" stroke="#d8d8d8" stroke-width="1"/><path d="M775.8,13.5 V17" stroke="#9a9a9a" stroke-width="1"/><path d="M784.1,13.5 V17" stroke="#9a9a9a" stroke-width="1"/><path d="M792.4,13.5 V17" stroke="#9a9a9a" stroke-width="1"/><path d="M800.8,11 V17" stroke="#d8d8d8" stroke-width="1"/><path d="M809.1,13.5 V17" stroke="#9a9a9a" stroke-width="1"/><path d="M817.4,13.5 V17" stroke="#9a9a9a" stroke-width="1"/><path d="M825.7,13.5 V17" stroke="#9a9a9a" stroke-width="1"/><path d="M834.0,11 V17" stroke="#d8d8d8" stroke-width="1"/><path d="M842.3,13.5 V17" stroke="#9a9a9a" stroke-width="1"/><path d="M850.6,13.5 V17" stroke="#9a9a9a" stroke-width="1"/><path d="M858.9,13.5 V17" stroke="#9a9a9a" stroke-width="1"/><path d="M867.2,11 V17" stroke="#d8d8d8" stroke-width="1"/><path d="M875.6,13.5 V17" stroke="#9a9a9a" stroke-width="1"/><path d="M883.9,13.5 V17" stroke="#9a9a9a" stroke-width="1"/><path d="M892.2,13.5 V17" stroke="#9a9a9a" stroke-width="1"/><path d="M900.5,11 V17" stroke="#d8d8d8" stroke-width="1"/><path d="M908.8,13.5 V17" stroke="#9a9a9a" stroke-width="1"/><path d="M917.1,13.5 V17" stroke="#9a9a9a" stroke-width="1"/><path d="M925.4,13.5 V17" stroke="#9a9a9a" stroke-width="1"/><path d="M933.8,11 V17" stroke="#d8d8d8" stroke-width="1"/><path d="M942.1,13.5 V17" stroke="#9a9a9a" stroke-width="1"/><path d="M950.4,13.5 V17" stroke="#9a9a9a" stroke-width="1"/><path d="M958.7,13.5 V17" stroke="#9a9a9a" stroke-width="1"/><path d="M967.0,11 V17" stroke="#d8d8d8" stroke-width="1"/><path d="M975.3,13.5 V17" stroke="#9a9a9a" stroke-width="1"/><path d="M983.6,13.5 V17" stroke="#9a9a9a" stroke-width="1"/></svg>
<div class="t" style="left:279.25px;top:33.3px;font-size:6.5px;color:#e6e6e6;">23</div>
<div class="t" style="left:312.5px;top:33.3px;font-size:6.5px;color:#e6e6e6;">24</div>
<div class="t" style="left:345.75px;top:33.3px;font-size:6.5px;color:#e6e6e6;">25</div>
<div class="t" style="left:379.0px;top:33.3px;font-size:6.5px;color:#e6e6e6;">26</div>
<div class="t" style="left:412.25px;top:33.3px;font-size:6.5px;color:#e6e6e6;">27</div>
<div class="t" style="left:445.5px;top:33.3px;font-size:6.5px;color:#e6e6e6;">28</div>
<div class="t" style="left:478.75px;top:33.3px;font-size:6.5px;color:#e6e6e6;">29</div>
<div class="t" style="left:512.0px;top:33.3px;font-size:6.5px;color:#e6e6e6;">30</div>
<div class="t" style="left:545.25px;top:33.3px;font-size:6.5px;color:#e6e6e6;">31</div>
<div class="t" style="left:578.5px;top:33.3px;font-size:6.5px;color:#e6e6e6;">32</div>
<div class="t" style="left:611.75px;top:33.3px;font-size:6.5px;color:#e6e6e6;">33</div>
<div class="t" style="left:645.0px;top:33.3px;font-size:6.5px;color:#e6e6e6;">34</div>
<div class="t" style="left:678.25px;top:33.3px;font-size:6.5px;color:#e6e6e6;">35</div>
<div class="t" style="left:711.5px;top:33.3px;font-size:6.5px;color:#e6e6e6;">36</div>
<div class="t" style="left:744.75px;top:33.3px;font-size:6.5px;color:#e6e6e6;">37</div>
<div class="t" style="left:778.0px;top:33.3px;font-size:6.5px;color:#e6e6e6;">38</div>
<div class="t" style="left:811.25px;top:33.3px;font-size:6.5px;color:#e6e6e6;">39</div>
<div class="t" style="left:844.5px;top:33.3px;font-size:6.5px;color:#e6e6e6;">40</div>
<div class="t" style="left:877.75px;top:33.3px;font-size:6.5px;color:#e6e6e6;">41</div>
<div class="t" style="left:911.0px;top:33.3px;font-size:6.5px;color:#e6e6e6;">42</div>
<div class="t" style="left:944.25px;top:33.3px;font-size:6.5px;color:#e6e6e6;">43</div>
<div class="t" style="left:977.5px;top:33.3px;font-size:6.5px;color:#e6e6e6;">44</div>
<div class="t" style="left:1010.75px;top:33.3px;font-size:6.5px;color:#e6e6e6;">45</div>
<div class="t" style="left:1044.0px;top:33.3px;font-size:6.5px;color:#e6e6e6;">46</div>
<div class="t" style="left:1077.25px;top:33.3px;font-size:6.5px;color:#e6e6e6;">47</div>
<div class="t" style="left:1110.5px;top:33.3px;font-size:6.5px;color:#e6e6e6;">48</div>
<div class="t" style="left:1143.75px;top:33.3px;font-size:6.5px;color:#e6e6e6;">49</div>
<div class="t" style="left:1177.0px;top:33.3px;font-size:6.5px;color:#e6e6e6;">50</div>
<div class="t" style="left:1210.25px;top:33.3px;font-size:6.5px;color:#e6e6e6;">51</div>
<div class="t" style="left:1243.5px;top:33.3px;font-size:6.5px;color:#e6e6e6;">52</div>
<div style="left:1265px;top:29px;width:8px;height:17px;background:#2b2c30;"></div>
<div style="left:275px;top:47px;width:990px;height:16.5px;background:#1c1d20;"></div>
<div style="left:275.5px;top:47.5px;width:101.5px;height:15.5px;background:#3d9ad9;"></div>
<div style="left:378.0px;top:47.5px;width:132.0px;height:15.5px;background:#55b3e6;"></div>
<div class="t" style="left:382.5px;top:51.5px;font-size:9px;color:#1e4f80;">Pre Chor1</div>
<div style="left:511.0px;top:47.5px;width:265.0px;height:15.5px;background:#6df4f6;"></div>
<div class="t" style="left:515.5px;top:51.5px;font-size:9px;color:#1d5a62;">Chorus1</div>
<div style="left:777.0px;top:47.5px;width:132.0px;height:15.5px;background:#8cf0a5;"></div>
<div class="t" style="left:781.5px;top:51.5px;font-size:9px;color:#25613a;">Interlude1</div>
<div style="left:910.0px;top:47.5px;width:265.0px;height:15.5px;background:#3d9ad9;"></div>
<div class="t" style="left:914.5px;top:51.5px;font-size:9px;color:#bfe3ff;">Verse2</div>
<div style="left:1176.0px;top:47.5px;width:86.5px;height:15.5px;background:#55b3e6;"></div>
<div class="t" style="left:1180.5px;top:51.5px;font-size:9px;color:#1e4f80;">Pre Chor2</div>
<div style="left:1263px;top:47px;width:12px;height:507px;background:#1f2023;"></div>
<div style="left:1273px;top:28px;width:4px;height:761px;background:#131416;"></div>
<svg style="left:1265px;top:66px;" width="7" height="5" viewBox="0 0 7 5"><polygon points="3.5,0 7,4.5 0,4.5" fill="#666"/></svg>
<div style="left:1266px;top:180px;width:4px;height:189px;background:#5a5b5f;border-radius:2px;"></div>
<div style="left:116px;top:64px;width:158px;height:10px;background:#50292a;"></div>
<div style="left:117px;top:64px;width:6px;height:10px;background:#38393d;"></div>
<div style="left:122px;top:65px;width:6px;height:8px;background:#e2663c;"></div>
<div style="left:143px;top:67px;width:33px;height:2px;background:#c9c9c9;"></div>
<div style="left:176px;top:67px;width:47px;height:2px;background:#3b2325;"></div>
<div style="left:269px;top:65px;width:2px;height:8px;background:#a8d4f0;"></div>
<div style="left:272px;top:65px;width:2px;height:8px;background:#a8d4f0;"></div>
<div style="left:116px;top:74px;width:158px;height:24.5px;background:#4a2931;"></div>
<div style="left:117px;top:74px;width:6px;height:24.5px;background:#e0566b;"></div>
<svg style="left:117px;top:92px;" width="6" height="5" viewBox="0 0 6 5"><polygon points="3,0 6,4 0,4" fill="#fff"/></svg>
<div style="left:137px;top:76.5px;width:55px;height:12px;background:#5c3a43;border-radius:1px;"></div>
<div style="left:150.75px;top:76.5px;width:1px;height:12px;background:#4a2931;"></div>
<div style="left:164.5px;top:76.5px;width:1px;height:12px;background:#4a2931;"></div>
<div style="left:178.25px;top:76.5px;width:1px;height:12px;background:#4a2931;"></div>
<div class="t" style="left:140.2px;top:79.0px;font-size:7.5px;color:#f0f0f0;">M</div>
<div class="t" style="left:154.5px;top:79.0px;font-size:7.5px;color:#f0f0f0;">S</div>
<div style="left:167.5px;top:80.0px;width:5px;height:5px;background:#f2f2f2;border-radius:3px;"></div>
<svg style="left:181px;top:79.0px;" width="7" height="7" viewBox="0 0 7 7"><circle cx="3.5" cy="3.5" r="3" fill="none" stroke="#eee" stroke-width="0.9"/><path d="M3.5,0.5 A3,3 0 0 0 3.5,6.5 Z" fill="#eee"/></svg>
<div class="t" style="left:196px;top:79px;font-size:7.5px;color:#ececec;">Percussion</div>
<svg style="left:254px;top:81px;" width="12" height="9" viewBox="0 0 12 9"><path d="M0,1 H4 L5,2 H9 V3.5 H2.5 L0,8.5 Z" fill="#ddd"/><path d="M2.5,4 H11.5 L9,8.5 H0 Z" fill="#ddd"/></svg>
<div style="left:275px;top:64px;width:988px;height:10px;background:#ea6a3a;"></div>
<svg style="left:275px;top:64px;" width="988" height="10" viewBox="0 0 988 10"><path d="M2.0,0 L3.0,3.2 L5.0,1.5" fill="#7a2e14" /><path d="M10.3,0 L11.3,3.8 L13.3,1.5" fill="#7a2e14" /><path d="M22.8,0 L23.8,5.1 L25.8,1.5" fill="#7a2e14" /><path d="M26.9,0 L27.9,5.0 L29.9,1.5" fill="#7a2e14" /><path d="M39.3,0 L40.3,3.3 L42.3,1.5" fill="#7a2e14" /><path d="M47.6,0 L48.6,3.0 L50.6,1.5" fill="#7a2e14" /><path d="M60.1,0 L61.1,4.7 L63.1,1.5" fill="#7a2e14" /><path d="M72.5,0 L73.5,4.0 L75.5,1.5" fill="#7a2e14" /><path d="M80.8,0 L81.8,3.2 L83.8,1.5" fill="#7a2e14" /><path d="M89.1,0 L90.1,6.3 L92.1,1.5" fill="#7a2e14" /><path d="M101.6,0 L102.6,5.7 L104.6,1.5" fill="#7a2e14" /><path d="M105.7,0 L106.7,2.8 L108.7,1.5" fill="#7a2e14" /><path d="M109.9,0 L110.9,3.5 L112.9,1.5" fill="#7a2e14" /><path d="M114.0,0 L115.0,6.1 L117.0,1.5" fill="#7a2e14" /><path d="M118.2,0 L119.2,4.4 L121.2,1.5" fill="#7a2e14" /><path d="M130.6,0 L131.6,5.6 L133.6,1.5" fill="#7a2e14" /><path d="M143.1,0 L144.1,4.0 L146.1,1.5" fill="#7a2e14" /><path d="M155.5,0 L156.5,6.8 L158.5,1.5" fill="#7a2e14" /><path d="M163.8,0 L164.8,6.4 L166.8,1.5" fill="#7a2e14" /><path d="M168.0,0 L169.0,2.2 L171.0,1.5" fill="#7a2e14" /><path d="M180.4,0 L181.4,3.1 L183.4,1.5" fill="#7a2e14" /><path d="M192.9,0 L193.9,5.9 L195.9,1.5" fill="#7a2e14" /><path d="M197.0,0 L198.0,4.1 L200.0,1.5" fill="#7a2e14" /><path d="M209.5,0 L210.5,4.9 L212.5,1.5" fill="#7a2e14" /><path d="M221.9,0 L222.9,4.9 L224.9,1.5" fill="#7a2e14" /><path d="M226.1,0 L227.1,5.4 L229.1,1.5" fill="#7a2e14" /><path d="M230.2,0 L231.2,6.3 L233.2,1.5" fill="#7a2e14" /><path d="M238.5,0 L239.5,5.5 L241.5,1.5" fill="#7a2e14" /><path d="M242.7,0 L243.7,6.8 L245.7,1.5" fill="#7a2e14" /><path d="M246.8,0 L247.8,5.6 L249.8,1.5" fill="#7a2e14" /><path d="M255.1,0 L256.1,5.2 L258.1,1.5" fill="#7a2e14" /><path d="M259.3,0 L260.3,3.4 L262.3,1.5" fill="#7a2e14" /><path d="M263.4,0 L264.4,4.4 L266.4,1.5" fill="#7a2e14" /><path d="M275.9,0 L276.9,2.4 L278.9,1.5" fill="#7a2e14" /><path d="M280.0,0 L281.0,4.1 L283.0,1.5" fill="#7a2e14" /><path d="M288.3,0 L289.3,2.1 L291.3,1.5" fill="#7a2e14" /><path d="M300.8,0 L301.8,5.8 L303.8,1.5" fill="#7a2e14" /><path d="M304.9,0 L305.9,2.2 L307.9,1.5" fill="#7a2e14" /><path d="M309.1,0 L310.1,3.9 L312.1,1.5" fill="#7a2e14" /><path d="M313.2,0 L314.2,4.8 L316.2,1.5" fill="#7a2e14" /><path d="M317.4,0 L318.4,4.5 L320.4,1.5" fill="#7a2e14" /><path d="M321.5,0 L322.5,3.5 L324.5,1.5" fill="#7a2e14" /><path d="M325.7,0 L326.7,2.5 L328.7,1.5" fill="#7a2e14" /><path d="M329.8,0 L330.8,6.7 L332.8,1.5" fill="#7a2e14" /><path d="M342.3,0 L343.3,3.5 L345.3,1.5" fill="#7a2e14" /><path d="M346.4,0 L347.4,2.8 L349.4,1.5" fill="#7a2e14" /><path d="M350.6,0 L351.6,6.9 L353.6,1.5" fill="#7a2e14" /><path d="M354.7,0 L355.7,3.6 L357.7,1.5" fill="#7a2e14" /><path d="M363.0,0 L364.0,6.5 L366.0,1.5" fill="#7a2e14" /><path d="M375.5,0 L376.5,3.9 L378.5,1.5" fill="#7a2e14" /><path d="M387.9,0 L388.9,5.2 L390.9,1.5" fill="#7a2e14" /><path d="M392.1,0 L393.1,5.1 L395.1,1.5" fill="#7a2e14" /><path d="M396.2,0 L397.2,4.2 L399.2,1.5" fill="#7a2e14" /><path d="M404.5,0 L405.5,6.7 L407.5,1.5" fill="#7a2e14" /><path d="M417.0,0 L418.0,6.9 L420.0,1.5" fill="#7a2e14" /><path d="M421.1,0 L422.1,4.7 L424.1,1.5" fill="#7a2e14" /><path d="M425.3,0 L426.3,5.9 L428.3,1.5" fill="#7a2e14" /><path d="M429.4,0 L430.4,2.1 L432.4,1.5" fill="#7a2e14" /><path d="M437.7,0 L438.7,2.3 L440.7,1.5" fill="#7a2e14" /><path d="M441.9,0 L442.9,4.3 L444.9,1.5" fill="#7a2e14" /><path d="M446.0,0 L447.0,5.0 L449.0,1.5" fill="#7a2e14" /><path d="M450.2,0 L451.2,5.7 L453.2,1.5" fill="#7a2e14" /><path d="M454.3,0 L455.3,4.9 L457.3,1.5" fill="#7a2e14" /><path d="M458.5,0 L459.5,6.8 L461.5,1.5" fill="#7a2e14" /><path d="M462.6,0 L463.6,5.1 L465.6,1.5" fill="#7a2e14" /><path d="M466.8,0 L467.8,5.0 L469.8,1.5" fill="#7a2e14" /><path d="M470.9,0 L471.9,2.9 L473.9,1.5" fill="#7a2e14" /><path d="M479.2,0 L480.2,3.6 L482.2,1.5" fill="#7a2e14" /><path d="M483.4,0 L484.4,6.2 L486.4,1.5" fill="#7a2e14" /><path d="M487.5,0 L488.5,3.5 L490.5,1.5" fill="#7a2e14" /><path d="M500.0,0 L501.0,2.5 L503.0,1.5" fill="#7a2e14" /><path d="M504.1,0 L505.1,6.9 L507.1,1.5" fill="#7a2e14" /><path d="M512.4,0 L513.4,3.6 L515.4,1.5" fill="#7a2e14" /><path d="M520.7,0 L521.7,5.3 L523.7,1.5" fill="#7a2e14" /><path d="M524.9,0 L525.9,3.2 L527.9,1.5" fill="#7a2e14" /><path d="M533.2,0 L534.2,5.4 L536.2,1.5" fill="#7a2e14" /><path d="M537.3,0 L538.3,2.5 L540.3,1.5" fill="#7a2e14" /><path d="M541.5,0 L542.5,6.7 L544.5,1.5" fill="#7a2e14" /><path d="M549.8,0 L550.8,4.2 L552.8,1.5" fill="#7a2e14" /><path d="M558.1,0 L559.1,2.4 L561.1,1.5" fill="#7a2e14" /><path d="M566.4,0 L567.4,6.4 L569.4,1.5" fill="#7a2e14" /><path d="M578.8,0 L579.8,3.4 L581.8,1.5" fill="#7a2e14" /><path d="M583.0,0 L584.0,2.2 L586.0,1.5" fill="#7a2e14" /><path d="M591.3,0 L592.3,3.6 L594.3,1.5" fill="#7a2e14" /><path d="M599.6,0 L600.6,6.3 L602.6,1.5" fill="#7a2e14" /><path d="M603.7,0 L604.7,6.0 L606.7,1.5" fill="#7a2e14" /><path d="M607.9,0 L608.9,6.0 L610.9,1.5" fill="#7a2e14" /><path d="M612.0,0 L613.0,4.9 L615.0,1.5" fill="#7a2e14" /><path d="M624.5,0 L625.5,3.5 L627.5,1.5" fill="#7a2e14" /><path d="M628.6,0 L629.6,4.3 L631.6,1.5" fill="#7a2e14" /><path d="M641.1,0 L642.1,3.5 L644.1,1.5" fill="#7a2e14" /><path d="M653.5,0 L654.5,2.2 L656.5,1.5" fill="#7a2e14" /><path d="M666.0,0 L667.0,2.8 L669.0,1.5" fill="#7a2e14" /><path d="M670.1,0 L671.1,4.4 L673.1,1.5" fill="#7a2e14" /><path d="M682.6,0 L683.6,4.8 L685.6,1.5" fill="#7a2e14" /><path d="M690.9,0 L691.9,2.2 L693.9,1.5" fill="#7a2e14" /><path d="M703.3,0 L704.3,6.2 L706.3,1.5" fill="#7a2e14" /><path d="M707.5,0 L708.5,4.7 L710.5,1.5" fill="#7a2e14" /><path d="M715.8,0 L716.8,6.3 L718.8,1.5" fill="#7a2e14" /><path d="M719.9,0 L720.9,2.6 L722.9,1.5" fill="#7a2e14" /><path d="M728.2,0 L729.2,2.2 L731.2,1.5" fill="#7a2e14" /><path d="M736.5,0 L737.5,6.5 L739.5,1.5" fill="#7a2e14" /><path d="M749.0,0 L750.0,4.9 L752.0,1.5" fill="#7a2e14" /><path d="M753.1,0 L754.1,4.4 L756.1,1.5" fill="#7a2e14" /><path d="M757.3,0 L758.3,2.9 L760.3,1.5" fill="#7a2e14" /><path d="M761.4,0 L762.4,3.2 L764.4,1.5" fill="#7a2e14" /><path d="M765.6,0 L766.6,4.6 L768.6,1.5" fill="#7a2e14" /><path d="M778.0,0 L779.0,2.3 L781.0,1.5" fill="#7a2e14" /><path d="M782.2,0 L783.2,3.7 L785.2,1.5" fill="#7a2e14" /><path d="M786.3,0 L787.3,6.9 L789.3,1.5" fill="#7a2e14" /><path d="M798.8,0 L799.8,6.1 L801.8,1.5" fill="#7a2e14" /><path d="M802.9,0 L803.9,3.8 L805.9,1.5" fill="#7a2e14" /><path d="M811.2,0 L812.2,2.6 L814.2,1.5" fill="#7a2e14" /><path d="M815.4,0 L816.4,2.9 L818.4,1.5" fill="#7a2e14" /><path d="M819.5,0 L820.5,6.6 L822.5,1.5" fill="#7a2e14" /><path d="M827.8,0 L828.8,6.1 L830.8,1.5" fill="#7a2e14" /><path d="M832.0,0 L833.0,4.4 L835.0,1.5" fill="#7a2e14" /><path d="M844.4,0 L845.4,2.2 L847.4,1.5" fill="#7a2e14" /><path d="M848.6,0 L849.6,3.2 L851.6,1.5" fill="#7a2e14" /><path d="M861.0,0 L862.0,2.3 L864.0,1.5" fill="#7a2e14" /><path d="M865.2,0 L866.2,5.9 L868.2,1.5" fill="#7a2e14" /><path d="M869.3,0 L870.3,6.3 L872.3,1.5" fill="#7a2e14" /><path d="M877.6,0 L878.6,2.2 L880.6,1.5" fill="#7a2e14" /><path d="M881.8,0 L882.8,2.3 L884.8,1.5" fill="#7a2e14" /><path d="M886.0,0 L887.0,6.3 L889.0,1.5" fill="#7a2e14" /><path d="M890.1,0 L891.1,4.6 L893.1,1.5" fill="#7a2e14" /><path d="M902.6,0 L903.6,3.6 L905.6,1.5" fill="#7a2e14" /><path d="M906.7,0 L907.7,2.4 L909.7,1.5" fill="#7a2e14" /><path d="M919.2,0 L920.2,5.2 L922.2,1.5" fill="#7a2e14" /><path d="M923.3,0 L924.3,3.8 L926.3,1.5" fill="#7a2e14" /><path d="M931.6,0 L932.6,6.9 L934.6,1.5" fill="#7a2e14" /><path d="M944.1,0 L945.1,2.6 L947.1,1.5" fill="#7a2e14" /><path d="M948.2,0 L949.2,5.6 L951.2,1.5" fill="#7a2e14" /><path d="M960.7,0 L961.7,6.0 L963.7,1.5" fill="#7a2e14" /><path d="M969.0,0 L970.0,2.2 L972.0,1.5" fill="#7a2e14" /><path d="M981.4,0 L982.4,5.0 L984.4,1.5" fill="#7a2e14" /></svg>
<div style="left:275px;top:74px;width:988px;height:24.5px;background:#d94c5f;"></div>
<div style="left:116px;top:98.5px;width:158px;height:24.6px;background:#4b2a33;"></div>
<div style="left:116px;top:121.89999999999999px;width:158px;height:1.2px;background:#1b1b1d;"></div>
<div style="left:117px;top:98.5px;width:5.5px;height:24.6px;background:#38393d;"></div>
<div style="left:122.5px;top:98.5px;width:6px;height:23.8px;background:#f0649a;"></div>
<div style="left:122.5px;top:116.1px;width:6px;height:6px;background:rgba(0,0,0,0.25);"></div>
<div class="t" style="left:132.5px;top:103.5px;font-size:7px;color:#f4f4f4;">13</div>
<div style="left:143.5px;top:101.5px;width:55px;height:12px;background:rgba(255,255,255,0.11);border-radius:1px;"></div>
<div style="left:157.25px;top:101.5px;width:1px;height:12px;background:#4b2a33;"></div>
<div style="left:171.0px;top:101.5px;width:1px;height:12px;background:#4b2a33;"></div>
<div style="left:184.75px;top:101.5px;width:1px;height:12px;background:#4b2a33;"></div>
<div class="t" style="left:146.7px;top:104.0px;font-size:7.5px;color:#f0f0f0;">M</div>
<div class="t" style="left:161.0px;top:104.0px;font-size:7.5px;color:#f0f0f0;">S</div>
<div style="left:174.0px;top:105.0px;width:5px;height:5px;background:#f2f2f2;border-radius:3px;"></div>
<svg style="left:187.5px;top:104.0px;" width="7" height="7" viewBox="0 0 7 7"><circle cx="3.5" cy="3.5" r="3" fill="none" stroke="#eee" stroke-width="0.9"/><path d="M3.5,0.5 A3,3 0 0 0 3.5,6.5 Z" fill="#eee"/></svg>
<div class="t" style="left:202px;top:103.5px;font-size:7.5px;color:#ececec;">Bongos</div>
<svg style="left:253px;top:104.5px;" width="11" height="8" viewBox="0 0 11 8"><path d="M0.5,7 L2.5,2 L4,6 L5.5,0.5 L7,6 L8.5,2 L10.5,7" stroke="#eee" fill="none" stroke-width="1.3"/></svg>
<div style="left:143.5px;top:116.0px;width:79.5px;height:2px;background:rgba(0,0,0,0.3);"></div>
<div style="left:143.5px;top:116.0px;width:48.5px;height:2px;background:#c4c4c4;"></div>
<div style="left:268px;top:98.5px;width:6px;height:24.6px;background:#3a3b3f;"></div>
<svg style="left:275px;top:98.5px;" width="988" height="23.8" viewBox="0 0 988 23.8"><rect x="0" y="0" width="988" height="23.8" fill="#221f21"/><path d="M2.8,0 V23.8" stroke="#3a3839" stroke-width="1"/><path d="M11.1,0 V23.8" stroke="#2d2a2c" stroke-width="1"/><path d="M19.4,0 V23.8" stroke="#2d2a2c" stroke-width="1"/><path d="M27.7,0 V23.8" stroke="#2d2a2c" stroke-width="1"/><path d="M36.0,0 V23.8" stroke="#3a3839" stroke-width="1"/><path d="M44.3,0 V23.8" stroke="#2d2a2c" stroke-width="1"/><path d="M52.6,0 V23.8" stroke="#2d2a2c" stroke-width="1"/><path d="M60.9,0 V23.8" stroke="#2d2a2c" stroke-width="1"/><path d="M69.2,0 V23.8" stroke="#3a3839" stroke-width="1"/><path d="M77.6,0 V23.8" stroke="#2d2a2c" stroke-width="1"/><path d="M85.9,0 V23.8" stroke="#2d2a2c" stroke-width="1"/><path d="M94.2,0 V23.8" stroke="#2d2a2c" stroke-width="1"/><path d="M102.5,0 V23.8" stroke="#3a3839" stroke-width="1"/><path d="M110.8,0 V23.8" stroke="#2d2a2c" stroke-width="1"/><path d="M119.1,0 V23.8" stroke="#2d2a2c" stroke-width="1"/><path d="M127.4,0 V23.8" stroke="#2d2a2c" stroke-width="1"/><path d="M135.8,0 V23.8" stroke="#3a3839" stroke-width="1"/><path d="M144.1,0 V23.8" stroke="#2d2a2c" stroke-width="1"/><path d="M152.4,0 V23.8" stroke="#2d2a2c" stroke-width="1"/><path d="M160.7,0 V23.8" stroke="#2d2a2c" stroke-width="1"/><path d="M169.0,0 V23.8" stroke="#3a3839" stroke-width="1"/><path d="M177.3,0 V23.8" stroke="#2d2a2c" stroke-width="1"/><path d="M185.6,0 V23.8" stroke="#2d2a2c" stroke-width="1"/><path d="M193.9,0 V23.8" stroke="#2d2a2c" stroke-width="1"/><path d="M202.2,0 V23.8" stroke="#3a3839" stroke-width="1"/><path d="M210.6,0 V23.8" stroke="#2d2a2c" stroke-width="1"/><path d="M218.9,0 V23.8" stroke="#2d2a2c" stroke-width="1"/><path d="M227.2,0 V23.8" stroke="#2d2a2c" stroke-width="1"/><path d="M235.5,0 V23.8" stroke="#3a3839" stroke-width="1"/><path d="M243.8,0 V23.8" stroke="#2d2a2c" stroke-width="1"/><path d="M252.1,0 V23.8" stroke="#2d2a2c" stroke-width="1"/><path d="M260.4,0 V23.8" stroke="#2d2a2c" stroke-width="1"/><path d="M268.8,0 V23.8" stroke="#3a3839" stroke-width="1"/><path d="M277.1,0 V23.8" stroke="#2d2a2c" stroke-width="1"/><path d="M285.4,0 V23.8" stroke="#2d2a2c" stroke-width="1"/><path d="M293.7,0 V23.8" stroke="#2d2a2c" stroke-width="1"/><path d="M302.0,0 V23.8" stroke="#3a3839" stroke-width="1"/><path d="M310.3,0 V23.8" stroke="#2d2a2c" stroke-width="1"/><path d="M318.6,0 V23.8" stroke="#2d2a2c" stroke-width="1"/><path d="M326.9,0 V23.8" stroke="#2d2a2c" stroke-width="1"/><path d="M335.2,0 V23.8" stroke="#3a3839" stroke-width="1"/><path d="M343.6,0 V23.8" stroke="#2d2a2c" stroke-width="1"/><path d="M351.9,0 V23.8" stroke="#2d2a2c" stroke-width="1"/><path d="M360.2,0 V23.8" stroke="#2d2a2c" stroke-width="1"/><path d="M368.5,0 V23.8" stroke="#3a3839" stroke-width="1"/><path d="M376.8,0 V23.8" stroke="#2d2a2c" stroke-width="1"/><path d="M385.1,0 V23.8" stroke="#2d2a2c" stroke-width="1"/><path d="M393.4,0 V23.8" stroke="#2d2a2c" stroke-width="1"/><path d="M401.8,0 V23.8" stroke="#3a3839" stroke-width="1"/><path d="M410.1,0 V23.8" stroke="#2d2a2c" stroke-width="1"/><path d="M418.4,0 V23.8" stroke="#2d2a2c" stroke-width="1"/><path d="M426.7,0 V23.8" stroke="#2d2a2c" stroke-width="1"/><path d="M435.0,0 V23.8" stroke="#3a3839" stroke-width="1"/><path d="M443.3,0 V23.8" stroke="#2d2a2c" stroke-width="1"/><path d="M451.6,0 V23.8" stroke="#2d2a2c" stroke-width="1"/><path d="M459.9,0 V23.8" stroke="#2d2a2c" stroke-width="1"/><path d="M468.2,0 V23.8" stroke="#3a3839" stroke-width="1"/><path d="M476.6,0 V23.8" stroke="#2d2a2c" stroke-width="1"/><path d="M484.9,0 V23.8" stroke="#2d2a2c" stroke-width="1"/><path d="M493.2,0 V23.8" stroke="#2d2a2c" stroke-width="1"/><path d="M501.5,0 V23.8" stroke="#3a3839" stroke-width="1"/><path d="M509.8,0 V23.8" stroke="#2d2a2c" stroke-width="1"/><path d="M518.1,0 V23.8" stroke="#2d2a2c" stroke-width="1"/><path d="M526.4,0 V23.8" stroke="#2d2a2c" stroke-width="1"/><path d="M534.8,0 V23.8" stroke="#3a3839" stroke-width="1"/><path d="M543.1,0 V23.8" stroke="#2d2a2c" stroke-width="1"/><path d="M551.4,0 V23.8" stroke="#2d2a2c" stroke-width="1"/><path d="M559.7,0 V23.8" stroke="#2d2a2c" stroke-width="1"/><path d="M568.0,0 V23.8" stroke="#3a3839" stroke-width="1"/><path d="M576.3,0 V23.8" stroke="#2d2a2c" stroke-width="1"/><path d="M584.6,0 V23.8" stroke="#2d2a2c" stroke-width="1"/><path d="M592.9,0 V23.8" stroke="#2d2a2c" stroke-width="1"/><path d="M601.2,0 V23.8" stroke="#3a3839" stroke-width="1"/><path d="M609.6,0 V23.8" stroke="#2d2a2c" stroke-width="1"/><path d="M617.9,0 V23.8" stroke="#2d2a2c" stroke-width="1"/><path d="M626.2,0 V23.8" stroke="#2d2a2c" stroke-width="1"/><path d="M634.5,0 V23.8" stroke="#3a3839" stroke-width="1"/><path d="M642.8,0 V23.8" stroke="#2d2a2c" stroke-width="1"/><path d="M651.1,0 V23.8" stroke="#2d2a2c" stroke-width="1"/><path d="M659.4,0 V23.8" stroke="#2d2a2c" stroke-width="1"/><path d="M667.8,0 V23.8" stroke="#3a3839" stroke-width="1"/><path d="M676.1,0 V23.8" stroke="#2d2a2c" stroke-width="1"/><path d="M684.4,0 V23.8" stroke="#2d2a2c" stroke-width="1"/><path d="M692.7,0 V23.8" stroke="#2d2a2c" stroke-width="1"/><path d="M701.0,0 V23.8" stroke="#3a3839" stroke-width="1"/><path d="M709.3,0 V23.8" stroke="#2d2a2c" stroke-width="1"/><path d="M717.6,0 V23.8" stroke="#2d2a2c" stroke-width="1"/><path d="M725.9,0 V23.8" stroke="#2d2a2c" stroke-width="1"/><path d="M734.2,0 V23.8" stroke="#3a3839" stroke-width="1"/><path d="M742.6,0 V23.8" stroke="#2d2a2c" stroke-width="1"/><path d="M750.9,0 V23.8" stroke="#2d2a2c" stroke-width="1"/><path d="M759.2,0 V23.8" stroke="#2d2a2c" stroke-width="1"/><path d="M767.5,0 V23.8" stroke="#3a3839" stroke-width="1"/><path d="M775.8,0 V23.8" stroke="#2d2a2c" stroke-width="1"/><path d="M784.1,0 V23.8" stroke="#2d2a2c" stroke-width="1"/><path d="M792.4,0 V23.8" stroke="#2d2a2c" stroke-width="1"/><path d="M800.8,0 V23.8" stroke="#3a3839" stroke-width="1"/><path d="M809.1,0 V23.8" stroke="#2d2a2c" stroke-width="1"/><path d="M817.4,0 V23.8" stroke="#2d2a2c" stroke-width="1"/><path d="M825.7,0 V23.8" stroke="#2d2a2c" stroke-width="1"/><path d="M834.0,0 V23.8" stroke="#3a3839" stroke-width="1"/><path d="M842.3,0 V23.8" stroke="#2d2a2c" stroke-width="1"/><path d="M850.6,0 V23.8" stroke="#2d2a2c" stroke-width="1"/><path d="M858.9,0 V23.8" stroke="#2d2a2c" stroke-width="1"/><path d="M867.2,0 V23.8" stroke="#3a3839" stroke-width="1"/><path d="M875.6,0 V23.8" stroke="#2d2a2c" stroke-width="1"/><path d="M883.9,0 V23.8" stroke="#2d2a2c" stroke-width="1"/><path d="M892.2,0 V23.8" stroke="#2d2a2c" stroke-width="1"/><path d="M900.5,0 V23.8" stroke="#3a3839" stroke-width="1"/><path d="M908.8,0 V23.8" stroke="#2d2a2c" stroke-width="1"/><path d="M917.1,0 V23.8" stroke="#2d2a2c" stroke-width="1"/><path d="M925.4,0 V23.8" stroke="#2d2a2c" stroke-width="1"/><path d="M933.8,0 V23.8" stroke="#3a3839" stroke-width="1"/><path d="M942.1,0 V23.8" stroke="#2d2a2c" stroke-width="1"/><path d="M950.4,0 V23.8" stroke="#2d2a2c" stroke-width="1"/><path d="M958.7,0 V23.8" stroke="#2d2a2c" stroke-width="1"/><path d="M967.0,0 V23.8" stroke="#3a3839" stroke-width="1"/><path d="M975.3,0 V23.8" stroke="#2d2a2c" stroke-width="1"/><path d="M983.6,0 V23.8" stroke="#2d2a2c" stroke-width="1"/></svg>
<div style="left:275px;top:121.89999999999999px;width:988px;height:1.2px;background:#1b1b1d;"></div>
<div style="left:116px;top:123.1px;width:158px;height:24.6px;background:#4b2a33;"></div>
<div style="left:116px;top:146.5px;width:158px;height:1.2px;background:#1b1b1d;"></div>
<div style="left:117px;top:123.1px;width:5.5px;height:24.6px;background:#38393d;"></div>
<div style="left:122.5px;top:123.1px;width:6px;height:23.8px;background:#f0649a;"></div>
<div style="left:122.5px;top:140.7px;width:6px;height:6px;background:rgba(0,0,0,0.25);"></div>
<div class="t" style="left:132.5px;top:128.1px;font-size:7px;color:#f4f4f4;">14</div>
<div style="left:143.5px;top:126.1px;width:55px;height:12px;background:rgba(255,255,255,0.11);border-radius:1px;"></div>
<div style="left:157.25px;top:126.1px;width:1px;height:12px;background:#4b2a33;"></div>
<div style="left:171.0px;top:126.1px;width:1px;height:12px;background:#4b2a33;"></div>
<div style="left:184.75px;top:126.1px;width:1px;height:12px;background:#4b2a33;"></div>
<div class="t" style="left:146.7px;top:128.6px;font-size:7.5px;color:#f0f0f0;">M</div>
<div class="t" style="left:161.0px;top:128.6px;font-size:7.5px;color:#f0f0f0;">S</div>
<div style="left:174.0px;top:129.6px;width:5px;height:5px;background:#f2f2f2;border-radius:3px;"></div>
<svg style="left:187.5px;top:128.6px;" width="7" height="7" viewBox="0 0 7 7"><circle cx="3.5" cy="3.5" r="3" fill="none" stroke="#eee" stroke-width="0.9"/><path d="M3.5,0.5 A3,3 0 0 0 3.5,6.5 Z" fill="#eee"/></svg>
<div class="t" style="left:202px;top:128.1px;font-size:7.5px;color:#ececec;">Congas</div>
<svg style="left:253px;top:129.1px;" width="11" height="8" viewBox="0 0 11 8"><path d="M0.5,7 L2.5,2 L4,6 L5.5,0.5 L7,6 L8.5,2 L10.5,7" stroke="#eee" fill="none" stroke-width="1.3"/></svg>
<div style="left:143.5px;top:140.6px;width:79.5px;height:2px;background:rgba(0,0,0,0.3);"></div>
<div style="left:143.5px;top:140.6px;width:51.5px;height:2px;background:#c4c4c4;"></div>
<div style="left:268px;top:123.1px;width:6px;height:24.6px;background:#3a3b3f;"></div>
<div style="left:275px;top:123.1px;width:988px;height:23.8px;background:#f0669a;"></div>
<div style="left:275px;top:146.5px;width:988px;height:1.2px;background:#1b1b1d;"></div>
<div style="left:116px;top:147.7px;width:158px;height:24.6px;background:#4b2a33;"></div>
<div style="left:116px;top:171.1px;width:158px;height:1.2px;background:#1b1b1d;"></div>
<div style="left:117px;top:147.7px;width:5.5px;height:24.6px;background:#38393d;"></div>
<div style="left:122.5px;top:147.7px;width:6px;height:23.8px;background:#f0649a;"></div>
<div style="left:122.5px;top:165.29999999999998px;width:6px;height:6px;background:rgba(0,0,0,0.25);"></div>
<div class="t" style="left:132.5px;top:152.7px;font-size:7px;color:#f4f4f4;">15</div>
<div style="left:143.5px;top:150.7px;width:55px;height:12px;background:rgba(255,255,255,0.11);border-radius:1px;"></div>
<div style="left:157.25px;top:150.7px;width:1px;height:12px;background:#4b2a33;"></div>
<div style="left:171.0px;top:150.7px;width:1px;height:12px;background:#4b2a33;"></div>
<div style="left:184.75px;top:150.7px;width:1px;height:12px;background:#4b2a33;"></div>
<div class="t" style="left:146.7px;top:153.2px;font-size:7.5px;color:#f0f0f0;">M</div>
<div class="t" style="left:161.0px;top:153.2px;font-size:7.5px;color:#f0f0f0;">S</div>
<div style="left:174.0px;top:154.2px;width:5px;height:5px;background:#f2f2f2;border-radius:3px;"></div>
<svg style="left:187.5px;top:153.2px;" width="7" height="7" viewBox="0 0 7 7"><circle cx="3.5" cy="3.5" r="3" fill="none" stroke="#eee" stroke-width="0.9"/><path d="M3.5,0.5 A3,3 0 0 0 3.5,6.5 Z" fill="#eee"/></svg>
<div class="t" style="left:202px;top:152.7px;font-size:7.5px;color:#ececec;">Cowbells</div>
<svg style="left:253px;top:153.7px;" width="11" height="8" viewBox="0 0 11 8"><path d="M0.5,7 L2.5,2 L4,6 L5.5,0.5 L7,6 L8.5,2 L10.5,7" stroke="#eee" fill="none" stroke-width="1.3"/></svg>
<div style="left:143.5px;top:165.2px;width:79.5px;height:2px;background:rgba(0,0,0,0.3);"></div>
<div style="left:143.5px;top:165.2px;width:41.5px;height:2px;background:#c4c4c4;"></div>
<div style="left:268px;top:147.7px;width:6px;height:24.6px;background:#3a3b3f;"></div>
<svg style="left:275px;top:147.7px;" width="988" height="23.8" viewBox="0 0 988 23.8"><rect x="0" y="0" width="988" height="23.8" fill="#221f21"/><path d="M2.8,0 V23.8" stroke="#3a3839" stroke-width="1"/><path d="M11.1,0 V23.8" stroke="#2d2a2c" stroke-width="1"/><path d="M19.4,0 V23.8" stroke="#2d2a2c" stroke-width="1"/><path d="M27.7,0 V23.8" stroke="#2d2a2c" stroke-width="1"/><path d="M36.0,0 V23.8" stroke="#3a3839" stroke-width="1"/><path d="M44.3,0 V23.8" stroke="#2d2a2c" stroke-width="1"/><path d="M52.6,0 V23.8" stroke="#2d2a2c" stroke-width="1"/><path d="M60.9,0 V23.8" stroke="#2d2a2c" stroke-width="1"/><path d="M69.2,0 V23.8" stroke="#3a3839" stroke-width="1"/><path d="M77.6,0 V23.8" stroke="#2d2a2c" stroke-width="1"/><path d="M85.9,0 V23.8" stroke="#2d2a2c" stroke-width="1"/><path d="M94.2,0 V23.8" stroke="#2d2a2c" stroke-width="1"/><path d="M102.5,0 V23.8" stroke="#3a3839" stroke-width="1"/><path d="M110.8,0 V23.8" stroke="#2d2a2c" stroke-width="1"/><path d="M119.1,0 V23.8" stroke="#2d2a2c" stroke-width="1"/><path d="M127.4,0 V23.8" stroke="#2d2a2c" stroke-width="1"/><path d="M135.8,0 V23.8" stroke="#3a3839" stroke-width="1"/><path d="M144.1,0 V23.8" stroke="#2d2a2c" stroke-width="1"/><path d="M152.4,0 V23.8" stroke="#2d2a2c" stroke-width="1"/><path d="M160.7,0 V23.8" stroke="#2d2a2c" stroke-width="1"/><path d="M169.0,0 V23.8" stroke="#3a3839" stroke-width="1"/><path d="M177.3,0 V23.8" stroke="#2d2a2c" stroke-width="1"/><path d="M185.6,0 V23.8" stroke="#2d2a2c" stroke-width="1"/><path d="M193.9,0 V23.8" stroke="#2d2a2c" stroke-width="1"/><path d="M202.2,0 V23.8" stroke="#3a3839" stroke-width="1"/><path d="M210.6,0 V23.8" stroke="#2d2a2c" stroke-width="1"/><path d="M218.9,0 V23.8" stroke="#2d2a2c" stroke-width="1"/><path d="M227.2,0 V23.8" stroke="#2d2a2c" stroke-width="1"/><path d="M235.5,0 V23.8" stroke="#3a3839" stroke-width="1"/><path d="M243.8,0 V23.8" stroke="#2d2a2c" stroke-width="1"/><path d="M252.1,0 V23.8" stroke="#2d2a2c" stroke-width="1"/><path d="M260.4,0 V23.8" stroke="#2d2a2c" stroke-width="1"/><path d="M268.8,0 V23.8" stroke="#3a3839" stroke-width="1"/><path d="M277.1,0 V23.8" stroke="#2d2a2c" stroke-width="1"/><path d="M285.4,0 V23.8" stroke="#2d2a2c" stroke-width="1"/><path d="M293.7,0 V23.8" stroke="#2d2a2c" stroke-width="1"/><path d="M302.0,0 V23.8" stroke="#3a3839" stroke-width="1"/><path d="M310.3,0 V23.8" stroke="#2d2a2c" stroke-width="1"/><path d="M318.6,0 V23.8" stroke="#2d2a2c" stroke-width="1"/><path d="M326.9,0 V23.8" stroke="#2d2a2c" stroke-width="1"/><path d="M335.2,0 V23.8" stroke="#3a3839" stroke-width="1"/><path d="M343.6,0 V23.8" stroke="#2d2a2c" stroke-width="1"/><path d="M351.9,0 V23.8" stroke="#2d2a2c" stroke-width="1"/><path d="M360.2,0 V23.8" stroke="#2d2a2c" stroke-width="1"/><path d="M368.5,0 V23.8" stroke="#3a3839" stroke-width="1"/><path d="M376.8,0 V23.8" stroke="#2d2a2c" stroke-width="1"/><path d="M385.1,0 V23.8" stroke="#2d2a2c" stroke-width="1"/><path d="M393.4,0 V23.8" stroke="#2d2a2c" stroke-width="1"/><path d="M401.8,0 V23.8" stroke="#3a3839" stroke-width="1"/><path d="M410.1,0 V23.8" stroke="#2d2a2c" stroke-width="1"/><path d="M418.4,0 V23.8" stroke="#2d2a2c" stroke-width="1"/><path d="M426.7,0 V23.8" stroke="#2d2a2c" stroke-width="1"/><path d="M435.0,0 V23.8" stroke="#3a3839" stroke-width="1"/><path d="M443.3,0 V23.8" stroke="#2d2a2c" stroke-width="1"/><path d="M451.6,0 V23.8" stroke="#2d2a2c" stroke-width="1"/><path d="M459.9,0 V23.8" stroke="#2d2a2c" stroke-width="1"/><path d="M468.2,0 V23.8" stroke="#3a3839" stroke-width="1"/><path d="M476.6,0 V23.8" stroke="#2d2a2c" stroke-width="1"/><path d="M484.9,0 V23.8" stroke="#2d2a2c" stroke-width="1"/><path d="M493.2,0 V23.8" stroke="#2d2a2c" stroke-width="1"/><path d="M501.5,0 V23.8" stroke="#3a3839" stroke-width="1"/><path d="M509.8,0 V23.8" stroke="#2d2a2c" stroke-width="1"/><path d="M518.1,0 V23.8" stroke="#2d2a2c" stroke-width="1"/><path d="M526.4,0 V23.8" stroke="#2d2a2c" stroke-width="1"/><path d="M534.8,0 V23.8" stroke="#3a3839" stroke-width="1"/><path d="M543.1,0 V23.8" stroke="#2d2a2c" stroke-width="1"/><path d="M551.4,0 V23.8" stroke="#2d2a2c" stroke-width="1"/><path d="M559.7,0 V23.8" stroke="#2d2a2c" stroke-width="1"/><path d="M568.0,0 V23.8" stroke="#3a3839" stroke-width="1"/><path d="M576.3,0 V23.8" stroke="#2d2a2c" stroke-width="1"/><path d="M584.6,0 V23.8" stroke="#2d2a2c" stroke-width="1"/><path d="M592.9,0 V23.8" stroke="#2d2a2c" stroke-width="1"/><path d="M601.2,0 V23.8" stroke="#3a3839" stroke-width="1"/><path d="M609.6,0 V23.8" stroke="#2d2a2c" stroke-width="1"/><path d="M617.9,0 V23.8" stroke="#2d2a2c" stroke-width="1"/><path d="M626.2,0 V23.8" stroke="#2d2a2c" stroke-width="1"/><path d="M634.5,0 V23.8" stroke="#3a3839" stroke-width="1"/><path d="M642.8,0 V23.8" stroke="#2d2a2c" stroke-width="1"/><path d="M651.1,0 V23.8" stroke="#2d2a2c" stroke-width="1"/><path d="M659.4,0 V23.8" stroke="#2d2a2c" stroke-width="1"/><path d="M667.8,0 V23.8" stroke="#3a3839" stroke-width="1"/><path d="M676.1,0 V23.8" stroke="#2d2a2c" stroke-width="1"/><path d="M684.4,0 V23.8" stroke="#2d2a2c" stroke-width="1"/><path d="M692.7,0 V23.8" stroke="#2d2a2c" stroke-width="1"/><path d="M701.0,0 V23.8" stroke="#3a3839" stroke-width="1"/><path d="M709.3,0 V23.8" stroke="#2d2a2c" stroke-width="1"/><path d="M717.6,0 V23.8" stroke="#2d2a2c" stroke-width="1"/><path d="M725.9,0 V23.8" stroke="#2d2a2c" stroke-width="1"/><path d="M734.2,0 V23.8" stroke="#3a3839" stroke-width="1"/><path d="M742.6,0 V23.8" stroke="#2d2a2c" stroke-width="1"/><path d="M750.9,0 V23.8" stroke="#2d2a2c" stroke-width="1"/><path d="M759.2,0 V23.8" stroke="#2d2a2c" stroke-width="1"/><path d="M767.5,0 V23.8" stroke="#3a3839" stroke-width="1"/><path d="M775.8,0 V23.8" stroke="#2d2a2c" stroke-width="1"/><path d="M784.1,0 V23.8" stroke="#2d2a2c" stroke-width="1"/><path d="M792.4,0 V23.8" stroke="#2d2a2c" stroke-width="1"/><path d="M800.8,0 V23.8" stroke="#3a3839" stroke-width="1"/><path d="M809.1,0 V23.8" stroke="#2d2a2c" stroke-width="1"/><path d="M817.4,0 V23.8" stroke="#2d2a2c" stroke-width="1"/><path d="M825.7,0 V23.8" stroke="#2d2a2c" stroke-width="1"/><path d="M834.0,0 V23.8" stroke="#3a3839" stroke-width="1"/><path d="M842.3,0 V23.8" stroke="#2d2a2c" stroke-width="1"/><path d="M850.6,0 V23.8" stroke="#2d2a2c" stroke-width="1"/><path d="M858.9,0 V23.8" stroke="#2d2a2c" stroke-width="1"/><path d="M867.2,0 V23.8" stroke="#3a3839" stroke-width="1"/><path d="M875.6,0 V23.8" stroke="#2d2a2c" stroke-width="1"/><path d="M883.9,0 V23.8" stroke="#2d2a2c" stroke-width="1"/><path d="M892.2,0 V23.8" stroke="#2d2a2c" stroke-width="1"/><path d="M900.5,0 V23.8" stroke="#3a3839" stroke-width="1"/><path d="M908.8,0 V23.8" stroke="#2d2a2c" stroke-width="1"/><path d="M917.1,0 V23.8" stroke="#2d2a2c" stroke-width="1"/><path d="M925.4,0 V23.8" stroke="#2d2a2c" stroke-width="1"/><path d="M933.8,0 V23.8" stroke="#3a3839" stroke-width="1"/><path d="M942.1,0 V23.8" stroke="#2d2a2c" stroke-width="1"/><path d="M950.4,0 V23.8" stroke="#2d2a2c" stroke-width="1"/><path d="M958.7,0 V23.8" stroke="#2d2a2c" stroke-width="1"/><path d="M967.0,0 V23.8" stroke="#3a3839" stroke-width="1"/><path d="M975.3,0 V23.8" stroke="#2d2a2c" stroke-width="1"/><path d="M983.6,0 V23.8" stroke="#2d2a2c" stroke-width="1"/></svg>
<div style="left:275px;top:171.1px;width:988px;height:1.2px;background:#1b1b1d;"></div>
<div style="left:116px;top:172.3px;width:158px;height:24.6px;background:#4b2a33;"></div>
<div style="left:116px;top:195.70000000000002px;width:158px;height:1.2px;background:#1b1b1d;"></div>
<div style="left:117px;top:172.3px;width:5.5px;height:24.6px;background:#38393d;"></div>
<div style="left:122.5px;top:172.3px;width:6px;height:23.8px;background:#f0649a;"></div>
<div style="left:122.5px;top:189.9px;width:6px;height:6px;background:rgba(0,0,0,0.25);"></div>
<div class="t" style="left:132.5px;top:177.3px;font-size:7px;color:#f4f4f4;">16</div>
<div style="left:143.5px;top:175.3px;width:55px;height:12px;background:rgba(255,255,255,0.11);border-radius:1px;"></div>
<div style="left:157.25px;top:175.3px;width:1px;height:12px;background:#4b2a33;"></div>
<div style="left:171.0px;top:175.3px;width:1px;height:12px;background:#4b2a33;"></div>
<div style="left:184.75px;top:175.3px;width:1px;height:12px;background:#4b2a33;"></div>
<div class="t" style="left:146.7px;top:177.8px;font-size:7.5px;color:#f0f0f0;">M</div>
<div class="t" style="left:161.0px;top:177.8px;font-size:7.5px;color:#f0f0f0;">S</div>
<div style="left:174.0px;top:178.8px;width:5px;height:5px;background:#f2f2f2;border-radius:3px;"></div>
<svg style="left:187.5px;top:177.8px;" width="7" height="7" viewBox="0 0 7 7"><circle cx="3.5" cy="3.5" r="3" fill="none" stroke="#eee" stroke-width="0.9"/><path d="M3.5,0.5 A3,3 0 0 0 3.5,6.5 Z" fill="#eee"/></svg>
<div style="left:143.5px;top:175.3px;width:13.5px;height:12px;background:#c8412e;"></div>
<div class="t" style="left:146.7px;top:177.8px;font-size:7.5px;color:#f0f0f0;">M</div>
<div class="t" style="left:202px;top:177.3px;font-size:7.5px;color:#ececec;">Tambourine</div>
<svg style="left:253px;top:178.3px;" width="11" height="8" viewBox="0 0 11 8"><path d="M0.5,7 L2.5,2 L4,6 L5.5,0.5 L7,6 L8.5,2 L10.5,7" stroke="#eee" fill="none" stroke-width="1.3"/></svg>
<div style="left:143.5px;top:189.8px;width:79.5px;height:2px;background:rgba(0,0,0,0.3);"></div>
<div style="left:143.5px;top:189.8px;width:18.5px;height:2px;background:#c4c4c4;"></div>
<div style="left:268px;top:172.3px;width:6px;height:24.6px;background:#3a3b3f;"></div>
<div style="left:275px;top:172.3px;width:988px;height:23.8px;background:#f0669a;"></div>
<div style="left:275px;top:195.70000000000002px;width:988px;height:1.2px;background:#1b1b1d;"></div>
<div style="left:116px;top:196.9px;width:158px;height:24.6px;background:#4b2a33;"></div>
<div style="left:116px;top:220.3px;width:158px;height:1.2px;background:#1b1b1d;"></div>
<div style="left:117px;top:196.9px;width:5.5px;height:24.6px;background:#38393d;"></div>
<div style="left:122.5px;top:196.9px;width:6px;height:23.8px;background:#f0649a;"></div>
<div style="left:122.5px;top:214.5px;width:6px;height:6px;background:rgba(0,0,0,0.25);"></div>
<div class="t" style="left:132.5px;top:201.9px;font-size:7px;color:#f4f4f4;">17</div>
<div style="left:143.5px;top:199.9px;width:55px;height:12px;background:rgba(255,255,255,0.11);border-radius:1px;"></div>
<div style="left:157.25px;top:199.9px;width:1px;height:12px;background:#4b2a33;"></div>
<div style="left:171.0px;top:199.9px;width:1px;height:12px;background:#4b2a33;"></div>
<div style="left:184.75px;top:199.9px;width:1px;height:12px;background:#4b2a33;"></div>
<div class="t" style="left:146.7px;top:202.4px;font-size:7.5px;color:#f0f0f0;">M</div>
<div class="t" style="left:161.0px;top:202.4px;font-size:7.5px;color:#f0f0f0;">S</div>
<div style="left:174.0px;top:203.4px;width:5px;height:5px;background:#f2f2f2;border-radius:3px;"></div>
<svg style="left:187.5px;top:202.4px;" width="7" height="7" viewBox="0 0 7 7"><circle cx="3.5" cy="3.5" r="3" fill="none" stroke="#eee" stroke-width="0.9"/><path d="M3.5,0.5 A3,3 0 0 0 3.5,6.5 Z" fill="#eee"/></svg>
<div class="t" style="left:202px;top:201.9px;font-size:7.5px;color:#ececec;">Shaker</div>
<svg style="left:253px;top:202.9px;" width="11" height="8" viewBox="0 0 11 8"><path d="M0.5,7 L2.5,2 L4,6 L5.5,0.5 L7,6 L8.5,2 L10.5,7" stroke="#eee" fill="none" stroke-width="1.3"/></svg>
<div style="left:143.5px;top:214.4px;width:79.5px;height:2px;background:rgba(0,0,0,0.3);"></div>
<div style="left:143.5px;top:214.4px;width:34.5px;height:2px;background:#c4c4c4;"></div>
<div style="left:268px;top:196.9px;width:6px;height:24.6px;background:#3a3b3f;"></div>
<div style="left:275px;top:196.9px;width:988px;height:23.8px;background:#f0669a;"></div>
<div style="left:275px;top:220.3px;width:988px;height:1.2px;background:#1b1b1d;"></div>
<div style="left:116px;top:221.5px;width:158px;height:24.6px;background:#4b2a33;"></div>
<div style="left:116px;top:244.9px;width:158px;height:1.2px;background:#1b1b1d;"></div>
<div style="left:117px;top:221.5px;width:5.5px;height:24.6px;background:#38393d;"></div>
<div style="left:122.5px;top:221.5px;width:6px;height:23.8px;background:#f0649a;"></div>
<div style="left:122.5px;top:239.1px;width:6px;height:6px;background:rgba(0,0,0,0.25);"></div>
<div class="t" style="left:132.5px;top:226.5px;font-size:7px;color:#f4f4f4;">18</div>
<div style="left:143.5px;top:224.5px;width:55px;height:12px;background:rgba(255,255,255,0.11);border-radius:1px;"></div>
<div style="left:157.25px;top:224.5px;width:1px;height:12px;background:#4b2a33;"></div>
<div style="left:171.0px;top:224.5px;width:1px;height:12px;background:#4b2a33;"></div>
<div style="left:184.75px;top:224.5px;width:1px;height:12px;background:#4b2a33;"></div>
<div class="t" style="left:146.7px;top:227.0px;font-size:7.5px;color:#f0f0f0;">M</div>
<div class="t" style="left:161.0px;top:227.0px;font-size:7.5px;color:#f0f0f0;">S</div>
<div style="left:174.0px;top:228.0px;width:5px;height:5px;background:#f2f2f2;border-radius:3px;"></div>
<svg style="left:187.5px;top:227.0px;" width="7" height="7" viewBox="0 0 7 7"><circle cx="3.5" cy="3.5" r="3" fill="none" stroke="#eee" stroke-width="0.9"/><path d="M3.5,0.5 A3,3 0 0 0 3.5,6.5 Z" fill="#eee"/></svg>
<div class="t" style="left:202px;top:226.5px;font-size:7.5px;color:#ececec;">Vibra Slap</div>
<svg style="left:253px;top:227.5px;" width="11" height="8" viewBox="0 0 11 8"><path d="M0.5,7 L2.5,2 L4,6 L5.5,0.5 L7,6 L8.5,2 L10.5,7" stroke="#eee" fill="none" stroke-width="1.3"/></svg>
<div style="left:143.5px;top:239.0px;width:79.5px;height:2px;background:rgba(0,0,0,0.3);"></div>
<div style="left:143.5px;top:239.0px;width:51.5px;height:2px;background:#c4c4c4;"></div>
<div style="left:268px;top:221.5px;width:6px;height:24.6px;background:#3a3b3f;"></div>
<svg style="left:275px;top:221.5px;" width="988" height="23.8" viewBox="0 0 988 23.8"><rect x="0" y="0" width="988" height="23.8" fill="#221f21"/><path d="M2.8,0 V23.8" stroke="#3a3839" stroke-width="1"/><path d="M11.1,0 V23.8" stroke="#2d2a2c" stroke-width="1"/><path d="M19.4,0 V23.8" stroke="#2d2a2c" stroke-width="1"/><path d="M27.7,0 V23.8" stroke="#2d2a2c" stroke-width="1"/><path d="M36.0,0 V23.8" stroke="#3a3839" stroke-width="1"/><path d="M44.3,0 V23.8" stroke="#2d2a2c" stroke-width="1"/><path d="M52.6,0 V23.8" stroke="#2d2a2c" stroke-width="1"/><path d="M60.9,0 V23.8" stroke="#2d2a2c" stroke-width="1"/><path d="M69.2,0 V23.8" stroke="#3a3839" stroke-width="1"/><path d="M77.6,0 V23.8" stroke="#2d2a2c" stroke-width="1"/><path d="M85.9,0 V23.8" stroke="#2d2a2c" stroke-width="1"/><path d="M94.2,0 V23.8" stroke="#2d2a2c" stroke-width="1"/><path d="M102.5,0 V23.8" stroke="#3a3839" stroke-width="1"/><path d="M110.8,0 V23.8" stroke="#2d2a2c" stroke-width="1"/><path d="M119.1,0 V23.8" stroke="#2d2a2c" stroke-width="1"/><path d="M127.4,0 V23.8" stroke="#2d2a2c" stroke-width="1"/><path d="M135.8,0 V23.8" stroke="#3a3839" stroke-width="1"/><path d="M144.1,0 V23.8" stroke="#2d2a2c" stroke-width="1"/><path d="M152.4,0 V23.8" stroke="#2d2a2c" stroke-width="1"/><path d="M160.7,0 V23.8" stroke="#2d2a2c" stroke-width="1"/><path d="M169.0,0 V23.8" stroke="#3a3839" stroke-width="1"/><path d="M177.3,0 V23.8" stroke="#2d2a2c" stroke-width="1"/><path d="M185.6,0 V23.8" stroke="#2d2a2c" stroke-width="1"/><path d="M193.9,0 V23.8" stroke="#2d2a2c" stroke-width="1"/><path d="M202.2,0 V23.8" stroke="#3a3839" stroke-width="1"/><path d="M210.6,0 V23.8" stroke="#2d2a2c" stroke-width="1"/><path d="M218.9,0 V23.8" stroke="#2d2a2c" stroke-width="1"/><path d="M227.2,0 V23.8" stroke="#2d2a2c" stroke-width="1"/><path d="M235.5,0 V23.8" stroke="#3a3839" stroke-width="1"/><path d="M243.8,0 V23.8" stroke="#2d2a2c" stroke-width="1"/><path d="M252.1,0 V23.8" stroke="#2d2a2c" stroke-width="1"/><path d="M260.4,0 V23.8" stroke="#2d2a2c" stroke-width="1"/><path d="M268.8,0 V23.8" stroke="#3a3839" stroke-width="1"/><path d="M277.1,0 V23.8" stroke="#2d2a2c" stroke-width="1"/><path d="M285.4,0 V23.8" stroke="#2d2a2c" stroke-width="1"/><path d="M293.7,0 V23.8" stroke="#2d2a2c" stroke-width="1"/><path d="M302.0,0 V23.8" stroke="#3a3839" stroke-width="1"/><path d="M310.3,0 V23.8" stroke="#2d2a2c" stroke-width="1"/><path d="M318.6,0 V23.8" stroke="#2d2a2c" stroke-width="1"/><path d="M326.9,0 V23.8" stroke="#2d2a2c" stroke-width="1"/><path d="M335.2,0 V23.8" stroke="#3a3839" stroke-width="1"/><path d="M343.6,0 V23.8" stroke="#2d2a2c" stroke-width="1"/><path d="M351.9,0 V23.8" stroke="#2d2a2c" stroke-width="1"/><path d="M360.2,0 V23.8" stroke="#2d2a2c" stroke-width="1"/><path d="M368.5,0 V23.8" stroke="#3a3839" stroke-width="1"/><path d="M376.8,0 V23.8" stroke="#2d2a2c" stroke-width="1"/><path d="M385.1,0 V23.8" stroke="#2d2a2c" stroke-width="1"/><path d="M393.4,0 V23.8" stroke="#2d2a2c" stroke-width="1"/><path d="M401.8,0 V23.8" stroke="#3a3839" stroke-width="1"/><path d="M410.1,0 V23.8" stroke="#2d2a2c" stroke-width="1"/><path d="M418.4,0 V23.8" stroke="#2d2a2c" stroke-width="1"/><path d="M426.7,0 V23.8" stroke="#2d2a2c" stroke-width="1"/><path d="M435.0,0 V23.8" stroke="#3a3839" stroke-width="1"/><path d="M443.3,0 V23.8" stroke="#2d2a2c" stroke-width="1"/><path d="M451.6,0 V23.8" stroke="#2d2a2c" stroke-width="1"/><path d="M459.9,0 V23.8" stroke="#2d2a2c" stroke-width="1"/><path d="M468.2,0 V23.8" stroke="#3a3839" stroke-width="1"/><path d="M476.6,0 V23.8" stroke="#2d2a2c" stroke-width="1"/><path d="M484.9,0 V23.8" stroke="#2d2a2c" stroke-width="1"/><path d="M493.2,0 V23.8" stroke="#2d2a2c" stroke-width="1"/><path d="M501.5,0 V23.8" stroke="#3a3839" stroke-width="1"/><path d="M509.8,0 V23.8" stroke="#2d2a2c" stroke-width="1"/><path d="M518.1,0 V23.8" stroke="#2d2a2c" stroke-width="1"/><path d="M526.4,0 V23.8" stroke="#2d2a2c" stroke-width="1"/><path d="M534.8,0 V23.8" stroke="#3a3839" stroke-width="1"/><path d="M543.1,0 V23.8" stroke="#2d2a2c" stroke-width="1"/><path d="M551.4,0 V23.8" stroke="#2d2a2c" stroke-width="1"/><path d="M559.7,0 V23.8" stroke="#2d2a2c" stroke-width="1"/><path d="M568.0,0 V23.8" stroke="#3a3839" stroke-width="1"/><path d="M576.3,0 V23.8" stroke="#2d2a2c" stroke-width="1"/><path d="M584.6,0 V23.8" stroke="#2d2a2c" stroke-width="1"/><path d="M592.9,0 V23.8" stroke="#2d2a2c" stroke-width="1"/><path d="M601.2,0 V23.8" stroke="#3a3839" stroke-width="1"/><path d="M609.6,0 V23.8" stroke="#2d2a2c" stroke-width="1"/><path d="M617.9,0 V23.8" stroke="#2d2a2c" stroke-width="1"/><path d="M626.2,0 V23.8" stroke="#2d2a2c" stroke-width="1"/><path d="M634.5,0 V23.8" stroke="#3a3839" stroke-width="1"/><path d="M642.8,0 V23.8" stroke="#2d2a2c" stroke-width="1"/><path d="M651.1,0 V23.8" stroke="#2d2a2c" stroke-width="1"/><path d="M659.4,0 V23.8" stroke="#2d2a2c" stroke-width="1"/><path d="M667.8,0 V23.8" stroke="#3a3839" stroke-width="1"/><path d="M676.1,0 V23.8" stroke="#2d2a2c" stroke-width="1"/><path d="M684.4,0 V23.8" stroke="#2d2a2c" stroke-width="1"/><path d="M692.7,0 V23.8" stroke="#2d2a2c" stroke-width="1"/><path d="M701.0,0 V23.8" stroke="#3a3839" stroke-width="1"/><path d="M709.3,0 V23.8" stroke="#2d2a2c" stroke-width="1"/><path d="M717.6,0 V23.8" stroke="#2d2a2c" stroke-width="1"/><path d="M725.9,0 V23.8" stroke="#2d2a2c" stroke-width="1"/><path d="M734.2,0 V23.8" stroke="#3a3839" stroke-width="1"/><path d="M742.6,0 V23.8" stroke="#2d2a2c" stroke-width="1"/><path d="M750.9,0 V23.8" stroke="#2d2a2c" stroke-width="1"/><path d="M759.2,0 V23.8" stroke="#2d2a2c" stroke-width="1"/><path d="M767.5,0 V23.8" stroke="#3a3839" stroke-width="1"/><path d="M775.8,0 V23.8" stroke="#2d2a2c" stroke-width="1"/><path d="M784.1,0 V23.8" stroke="#2d2a2c" stroke-width="1"/><path d="M792.4,0 V23.8" stroke="#2d2a2c" stroke-width="1"/><path d="M800.8,0 V23.8" stroke="#3a3839" stroke-width="1"/><path d="M809.1,0 V23.8" stroke="#2d2a2c" stroke-width="1"/><path d="M817.4,0 V23.8" stroke="#2d2a2c" stroke-width="1"/><path d="M825.7,0 V23.8" stroke="#2d2a2c" stroke-width="1"/><path d="M834.0,0 V23.8" stroke="#3a3839" stroke-width="1"/><path d="M842.3,0 V23.8" stroke="#2d2a2c" stroke-width="1"/><path d="M850.6,0 V23.8" stroke="#2d2a2c" stroke-width="1"/><path d="M858.9,0 V23.8" stroke="#2d2a2c" stroke-width="1"/><path d="M867.2,0 V23.8" stroke="#3a3839" stroke-width="1"/><path d="M875.6,0 V23.8" stroke="#2d2a2c" stroke-width="1"/><path d="M883.9,0 V23.8" stroke="#2d2a2c" stroke-width="1"/><path d="M892.2,0 V23.8" stroke="#2d2a2c" stroke-width="1"/><path d="M900.5,0 V23.8" stroke="#3a3839" stroke-width="1"/><path d="M908.8,0 V23.8" stroke="#2d2a2c" stroke-width="1"/><path d="M917.1,0 V23.8" stroke="#2d2a2c" stroke-width="1"/><path d="M925.4,0 V23.8" stroke="#2d2a2c" stroke-width="1"/><path d="M933.8,0 V23.8" stroke="#3a3839" stroke-width="1"/><path d="M942.1,0 V23.8" stroke="#2d2a2c" stroke-width="1"/><path d="M950.4,0 V23.8" stroke="#2d2a2c" stroke-width="1"/><path d="M958.7,0 V23.8" stroke="#2d2a2c" stroke-width="1"/><path d="M967.0,0 V23.8" stroke="#3a3839" stroke-width="1"/><path d="M975.3,0 V23.8" stroke="#2d2a2c" stroke-width="1"/><path d="M983.6,0 V23.8" stroke="#2d2a2c" stroke-width="1"/></svg>
<div style="left:275px;top:244.9px;width:988px;height:1.2px;background:#1b1b1d;"></div>
<div style="left:116px;top:246.10000000000002px;width:158px;height:24.6px;background:#4b2a33;"></div>
<div style="left:116px;top:269.50000000000006px;width:158px;height:1.2px;background:#1b1b1d;"></div>
<div style="left:117px;top:246.10000000000002px;width:5.5px;height:24.6px;background:#38393d;"></div>
<div style="left:122.5px;top:246.10000000000002px;width:6px;height:23.8px;background:#f0649a;"></div>
<div style="left:122.5px;top:263.70000000000005px;width:6px;height:6px;background:rgba(0,0,0,0.25);"></div>
<div class="t" style="left:132.5px;top:251.10000000000002px;font-size:7px;color:#f4f4f4;">19</div>
<div style="left:143.5px;top:249.10000000000002px;width:55px;height:12px;background:rgba(255,255,255,0.11);border-radius:1px;"></div>
<div style="left:157.25px;top:249.10000000000002px;width:1px;height:12px;background:#4b2a33;"></div>
<div style="left:171.0px;top:249.10000000000002px;width:1px;height:12px;background:#4b2a33;"></div>
<div style="left:184.75px;top:249.10000000000002px;width:1px;height:12px;background:#4b2a33;"></div>
<div class="t" style="left:146.7px;top:251.60000000000002px;font-size:7.5px;color:#f0f0f0;">M</div>
<div class="t" style="left:161.0px;top:251.60000000000002px;font-size:7.5px;color:#f0f0f0;">S</div>
<div style="left:174.0px;top:252.60000000000002px;width:5px;height:5px;background:#f2f2f2;border-radius:3px;"></div>
<svg style="left:187.5px;top:251.60000000000002px;" width="7" height="7" viewBox="0 0 7 7"><circle cx="3.5" cy="3.5" r="3" fill="none" stroke="#eee" stroke-width="0.9"/><path d="M3.5,0.5 A3,3 0 0 0 3.5,6.5 Z" fill="#eee"/></svg>
<div style="left:143.5px;top:249.10000000000002px;width:13.5px;height:12px;background:#c8412e;"></div>
<div class="t" style="left:146.7px;top:251.60000000000002px;font-size:7.5px;color:#f0f0f0;">M</div>
<div class="t" style="left:202px;top:251.10000000000002px;font-size:7.5px;color:#ececec;">Claps</div>
<svg style="left:253px;top:252.10000000000002px;" width="11" height="8" viewBox="0 0 11 8"><path d="M0.5,7 L2.5,2 L4,6 L5.5,0.5 L7,6 L8.5,2 L10.5,7" stroke="#eee" fill="none" stroke-width="1.3"/></svg>
<div style="left:143.5px;top:263.6px;width:79.5px;height:2px;background:rgba(0,0,0,0.3);"></div>
<div style="left:143.5px;top:263.6px;width:40.5px;height:2px;background:#c4c4c4;"></div>
<div style="left:268px;top:246.10000000000002px;width:6px;height:24.6px;background:#3a3b3f;"></div>
<div style="left:275px;top:246.10000000000002px;width:988px;height:23.8px;background:#f0669a;"></div>
<div style="left:275px;top:269.50000000000006px;width:988px;height:1.2px;background:#1b1b1d;"></div>
<div style="left:116px;top:270.70000000000005px;width:158px;height:24.6px;background:#293a53;"></div>
<div style="left:116px;top:294.1000000000001px;width:158px;height:1.2px;background:#1b1b1d;"></div>
<div style="left:117px;top:270.70000000000005px;width:5.5px;height:23.8px;background:#3a78c8;"></div>
<div style="left:117px;top:288.30000000000007px;width:5.5px;height:6px;background:rgba(0,0,0,0.25);"></div>
<div class="t" style="left:125px;top:275.70000000000005px;font-size:6.8px;color:#f0f0f0;">20</div>
<div style="left:137px;top:273.70000000000005px;width:55px;height:12px;background:rgba(255,255,255,0.11);border-radius:1px;"></div>
<div style="left:150.75px;top:273.70000000000005px;width:1px;height:12px;background:#293a53;"></div>
<div style="left:164.5px;top:273.70000000000005px;width:1px;height:12px;background:#293a53;"></div>
<div style="left:178.25px;top:273.70000000000005px;width:1px;height:12px;background:#293a53;"></div>
<div class="t" style="left:140.2px;top:276.20000000000005px;font-size:7.5px;color:#f0f0f0;">M</div>
<div class="t" style="left:154.5px;top:276.20000000000005px;font-size:7.5px;color:#f0f0f0;">S</div>
<div style="left:167.5px;top:277.20000000000005px;width:5px;height:5px;background:#f2f2f2;border-radius:3px;"></div>
<svg style="left:181px;top:276.20000000000005px;" width="7" height="7" viewBox="0 0 7 7"><circle cx="3.5" cy="3.5" r="3" fill="none" stroke="#eee" stroke-width="0.9"/><path d="M3.5,0.5 A3,3 0 0 0 3.5,6.5 Z" fill="#eee"/></svg>
<div class="t" style="left:196px;top:275.70000000000005px;font-size:7.5px;color:#ececec;">Bass</div>
<svg style="left:253px;top:276.70000000000005px;" width="11" height="8" viewBox="0 0 11 8"><path d="M0.5,7 L2.5,2 L4,6 L5.5,0.5 L7,6 L8.5,2 L10.5,7" stroke="#eee" fill="none" stroke-width="1.3"/></svg>
<div style="left:137px;top:288.20000000000005px;width:86px;height:2px;background:rgba(0,0,0,0.3);"></div>
<div style="left:137px;top:288.20000000000005px;width:45px;height:2px;background:#c4c4c4;"></div>
<div style="left:268px;top:270.70000000000005px;width:6px;height:24.6px;background:#3a3b3f;"></div>
<div style="left:275px;top:270.70000000000005px;width:988px;height:23.8px;background:#3a6fc0;"></div>
<div style="left:275px;top:294.1000000000001px;width:988px;height:1.2px;background:#1b1b1d;"></div>
<div style="left:116px;top:295.3px;width:158px;height:24.6px;background:#27463f;"></div>
<div style="left:116px;top:318.70000000000005px;width:158px;height:1.2px;background:#1b1b1d;"></div>
<div style="left:117px;top:295.3px;width:5.5px;height:23.8px;background:#7af5f7;"></div>
<div style="left:117px;top:312.90000000000003px;width:5.5px;height:6px;background:rgba(0,0,0,0.2);"></div>
<div style="left:137px;top:299.8px;width:55px;height:12px;background:rgba(255,255,255,0.11);border-radius:1px;"></div>
<div style="left:150.75px;top:299.8px;width:1px;height:12px;background:#27463f;"></div>
<div style="left:164.5px;top:299.8px;width:1px;height:12px;background:#27463f;"></div>
<div style="left:178.25px;top:299.8px;width:1px;height:12px;background:#27463f;"></div>
<div class="t" style="left:140.2px;top:302.3px;font-size:7.5px;color:#f0f0f0;">M</div>
<div class="t" style="left:154.5px;top:302.3px;font-size:7.5px;color:#f0f0f0;">S</div>
<div style="left:167.5px;top:303.3px;width:5px;height:5px;background:#f2f2f2;border-radius:3px;"></div>
<svg style="left:181px;top:302.3px;" width="7" height="7" viewBox="0 0 7 7"><circle cx="3.5" cy="3.5" r="3" fill="none" stroke="#eee" stroke-width="0.9"/><path d="M3.5,0.5 A3,3 0 0 0 3.5,6.5 Z" fill="#eee"/></svg>
<div class="t" style="left:196px;top:301.8px;font-size:7.5px;color:#ececec;">Guitars</div>
<svg style="left:254px;top:302.3px;" width="12" height="9" viewBox="0 0 12 9"><path d="M0,1 H4 L5,2.2 H11 V8.5 H0 Z" fill="#ddd"/></svg>
<div style="left:275px;top:295.3px;width:988px;height:23.8px;background:#72f4f6;"></div>
<div style="left:275px;top:318.70000000000005px;width:988px;height:1.2px;background:#1b1b1d;"></div>
<div style="left:116px;top:319.9px;width:158px;height:24.6px;background:#2b4a38;"></div>
<div style="left:116px;top:343.3px;width:158px;height:1.2px;background:#1b1b1d;"></div>
<div style="left:117px;top:319.9px;width:5.5px;height:23.8px;background:#66db90;"></div>
<div style="left:117px;top:337.5px;width:5.5px;height:6px;background:rgba(0,0,0,0.2);"></div>
<div style="left:137px;top:324.4px;width:55px;height:12px;background:rgba(255,255,255,0.11);border-radius:1px;"></div>
<div style="left:150.75px;top:324.4px;width:1px;height:12px;background:#2b4a38;"></div>
<div style="left:164.5px;top:324.4px;width:1px;height:12px;background:#2b4a38;"></div>
<div style="left:178.25px;top:324.4px;width:1px;height:12px;background:#2b4a38;"></div>
<div class="t" style="left:140.2px;top:326.9px;font-size:7.5px;color:#f0f0f0;">M</div>
<div class="t" style="left:154.5px;top:326.9px;font-size:7.5px;color:#f0f0f0;">S</div>
<div style="left:167.5px;top:327.9px;width:5px;height:5px;background:#f2f2f2;border-radius:3px;"></div>
<svg style="left:181px;top:326.9px;" width="7" height="7" viewBox="0 0 7 7"><circle cx="3.5" cy="3.5" r="3" fill="none" stroke="#eee" stroke-width="0.9"/><path d="M3.5,0.5 A3,3 0 0 0 3.5,6.5 Z" fill="#eee"/></svg>
<div class="t" style="left:196px;top:326.4px;font-size:7.5px;color:#ececec;">Keys</div>
<svg style="left:254px;top:326.9px;" width="12" height="9" viewBox="0 0 12 9"><path d="M0,1 H4 L5,2 H9 V3.5 H2.5 L0,8.5 Z" fill="#ddd"/><path d="M2.5,4 H11.5 L9,8.5 H0 Z" fill="#ddd"/></svg>
<div style="left:275px;top:319.9px;width:988px;height:23.8px;background:#66da90;"></div>
<div style="left:275px;top:343.3px;width:988px;height:1.2px;background:#1b1b1d;"></div>
<div style="left:116px;top:344.5px;width:158px;height:24.6px;background:#2f4a37;"></div>
<div style="left:116px;top:367.90000000000003px;width:158px;height:1.2px;background:#1b1b1d;"></div>
<div style="left:117px;top:344.5px;width:5.5px;height:24.6px;background:#38393d;"></div>
<div style="left:122.5px;top:344.5px;width:6px;height:23.8px;background:#8ff3a8;"></div>
<div style="left:122.5px;top:362.1px;width:6px;height:6px;background:rgba(0,0,0,0.25);"></div>
<div class="t" style="left:132.5px;top:349.5px;font-size:7px;color:#f4f4f4;">24</div>
<div style="left:143.5px;top:347.5px;width:55px;height:12px;background:rgba(255,255,255,0.11);border-radius:1px;"></div>
<div style="left:157.25px;top:347.5px;width:1px;height:12px;background:#2f4a37;"></div>
<div style="left:171.0px;top:347.5px;width:1px;height:12px;background:#2f4a37;"></div>
<div style="left:184.75px;top:347.5px;width:1px;height:12px;background:#2f4a37;"></div>
<div class="t" style="left:146.7px;top:350.0px;font-size:7.5px;color:#f0f0f0;">M</div>
<div class="t" style="left:161.0px;top:350.0px;font-size:7.5px;color:#f0f0f0;">S</div>
<div style="left:174.0px;top:351.0px;width:5px;height:5px;background:#f2f2f2;border-radius:3px;"></div>
<svg style="left:187.5px;top:350.0px;" width="7" height="7" viewBox="0 0 7 7"><circle cx="3.5" cy="3.5" r="3" fill="none" stroke="#eee" stroke-width="0.9"/><path d="M3.5,0.5 A3,3 0 0 0 3.5,6.5 Z" fill="#eee"/></svg>
<div class="t" style="left:202px;top:349.5px;font-size:7.5px;color:#ececec;">B3</div>
<svg style="left:253px;top:350.5px;" width="11" height="8" viewBox="0 0 11 8"><path d="M0.5,7 L2.5,2 L4,6 L5.5,0.5 L7,6 L8.5,2 L10.5,7" stroke="#eee" fill="none" stroke-width="1.3"/></svg>
<div style="left:143.5px;top:362.0px;width:79.5px;height:2px;background:rgba(0,0,0,0.3);"></div>
<div style="left:143.5px;top:362.0px;width:46.5px;height:2px;background:#c4c4c4;"></div>
<div style="left:268px;top:344.5px;width:6px;height:24.6px;background:#3a3b3f;"></div>
<div style="left:275px;top:344.5px;width:988px;height:23.8px;background:#90f4a8;"></div>
<div style="left:275px;top:367.90000000000003px;width:988px;height:1.2px;background:#1b1b1d;"></div>
<div style="left:116px;top:369.1px;width:158px;height:24.6px;background:#2f4a37;"></div>
<div style="left:116px;top:392.50000000000006px;width:158px;height:1.2px;background:#1b1b1d;"></div>
<div style="left:117px;top:369.1px;width:5.5px;height:24.6px;background:#38393d;"></div>
<div style="left:122.5px;top:369.1px;width:6px;height:23.8px;background:#8ff3a8;"></div>
<div style="left:122.5px;top:386.70000000000005px;width:6px;height:6px;background:rgba(0,0,0,0.25);"></div>
<div class="t" style="left:132.5px;top:374.1px;font-size:7px;color:#f4f4f4;">25</div>
<div style="left:143.5px;top:372.1px;width:55px;height:12px;background:rgba(255,255,255,0.11);border-radius:1px;"></div>
<div style="left:157.25px;top:372.1px;width:1px;height:12px;background:#2f4a37;"></div>
<div style="left:171.0px;top:372.1px;width:1px;height:12px;background:#2f4a37;"></div>
<div style="left:184.75px;top:372.1px;width:1px;height:12px;background:#2f4a37;"></div>
<div class="t" style="left:146.7px;top:374.6px;font-size:7.5px;color:#f0f0f0;">M</div>
<div class="t" style="left:161.0px;top:374.6px;font-size:7.5px;color:#f0f0f0;">S</div>
<div style="left:174.0px;top:375.6px;width:5px;height:5px;background:#f2f2f2;border-radius:3px;"></div>
<svg style="left:187.5px;top:374.6px;" width="7" height="7" viewBox="0 0 7 7"><circle cx="3.5" cy="3.5" r="3" fill="none" stroke="#eee" stroke-width="0.9"/><path d="M3.5,0.5 A3,3 0 0 0 3.5,6.5 Z" fill="#eee"/></svg>
<div class="t" style="left:202px;top:374.1px;font-size:7.5px;color:#ececec;">Wurli</div>
<svg style="left:253px;top:375.1px;" width="11" height="8" viewBox="0 0 11 8"><path d="M0.5,7 L2.5,2 L4,6 L5.5,0.5 L7,6 L8.5,2 L10.5,7" stroke="#eee" fill="none" stroke-width="1.3"/></svg>
<div style="left:143.5px;top:386.6px;width:79.5px;height:2px;background:rgba(0,0,0,0.3);"></div>
<div style="left:143.5px;top:386.6px;width:47.5px;height:2px;background:#c4c4c4;"></div>
<div style="left:268px;top:369.1px;width:6px;height:24.6px;background:#3a3b3f;"></div>
<div style="left:275px;top:369.1px;width:988px;height:23.8px;background:#90f4a8;"></div>
<div style="left:275px;top:392.50000000000006px;width:988px;height:1.2px;background:#1b1b1d;"></div>
<div style="left:116px;top:393.70000000000005px;width:158px;height:24.6px;background:#2e2b4b;"></div>
<div style="left:116px;top:417.1000000000001px;width:158px;height:1.2px;background:#1b1b1d;"></div>
<div style="left:117px;top:393.70000000000005px;width:5.5px;height:23.8px;background:#7b6cd0;"></div>
<div style="left:117px;top:411.30000000000007px;width:5.5px;height:6px;background:rgba(0,0,0,0.2);"></div>
<div style="left:137px;top:398.20000000000005px;width:55px;height:12px;background:rgba(255,255,255,0.11);border-radius:1px;"></div>
<div style="left:150.75px;top:398.20000000000005px;width:1px;height:12px;background:#2e2b4b;"></div>
<div style="left:164.5px;top:398.20000000000005px;width:1px;height:12px;background:#2e2b4b;"></div>
<div style="left:178.25px;top:398.20000000000005px;width:1px;height:12px;background:#2e2b4b;"></div>
<div class="t" style="left:140.2px;top:400.70000000000005px;font-size:7.5px;color:#f0f0f0;">M</div>
<div class="t" style="left:154.5px;top:400.70000000000005px;font-size:7.5px;color:#f0f0f0;">S</div>
<div style="left:167.5px;top:401.70000000000005px;width:5px;height:5px;background:#f2f2f2;border-radius:3px;"></div>
<svg style="left:181px;top:400.70000000000005px;" width="7" height="7" viewBox="0 0 7 7"><circle cx="3.5" cy="3.5" r="3" fill="none" stroke="#eee" stroke-width="0.9"/><path d="M3.5,0.5 A3,3 0 0 0 3.5,6.5 Z" fill="#eee"/></svg>
<div class="t" style="left:196px;top:400.20000000000005px;font-size:7.5px;color:#ececec;">Horns</div>
<svg style="left:254px;top:400.70000000000005px;" width="12" height="9" viewBox="0 0 12 9"><path d="M0,1 H4 L5,2 H9 V3.5 H2.5 L0,8.5 Z" fill="#ddd"/><path d="M2.5,4 H11.5 L9,8.5 H0 Z" fill="#ddd"/></svg>
<div style="left:275px;top:393.70000000000005px;width:988px;height:23.8px;background:#6a5cb2;"></div>
<div style="left:275px;top:417.1000000000001px;width:988px;height:1.2px;background:#1b1b1d;"></div>
<div style="left:116px;top:418.3px;width:158px;height:24.6px;background:#2d4a45;"></div>
<div style="left:116px;top:441.70000000000005px;width:158px;height:1.2px;background:#1b1b1d;"></div>
<div style="left:117px;top:418.3px;width:5.5px;height:24.6px;background:#38393d;"></div>
<div style="left:122.5px;top:418.3px;width:6px;height:23.8px;background:#62e0c6;"></div>
<div style="left:122.5px;top:435.90000000000003px;width:6px;height:6px;background:rgba(0,0,0,0.25);"></div>
<div class="t" style="left:132.5px;top:423.3px;font-size:7px;color:#f4f4f4;">26</div>
<div style="left:143.5px;top:421.3px;width:55px;height:12px;background:rgba(255,255,255,0.11);border-radius:1px;"></div>
<div style="left:157.25px;top:421.3px;width:1px;height:12px;background:#2d4a45;"></div>
<div style="left:171.0px;top:421.3px;width:1px;height:12px;background:#2d4a45;"></div>
<div style="left:184.75px;top:421.3px;width:1px;height:12px;background:#2d4a45;"></div>
<div class="t" style="left:146.7px;top:423.8px;font-size:7.5px;color:#f0f0f0;">M</div>
<div class="t" style="left:161.0px;top:423.8px;font-size:7.5px;color:#f0f0f0;">S</div>
<div style="left:174.0px;top:424.8px;width:5px;height:5px;background:#f2f2f2;border-radius:3px;"></div>
<svg style="left:187.5px;top:423.8px;" width="7" height="7" viewBox="0 0 7 7"><circle cx="3.5" cy="3.5" r="3" fill="none" stroke="#eee" stroke-width="0.9"/><path d="M3.5,0.5 A3,3 0 0 0 3.5,6.5 Z" fill="#eee"/></svg>
<div class="t" style="left:202px;top:423.3px;font-size:7.5px;color:#ececec;">Trumpet 1</div>
<svg style="left:253px;top:424.3px;" width="11" height="8" viewBox="0 0 11 8"><path d="M0.5,7 L2.5,2 L4,6 L5.5,0.5 L7,6 L8.5,2 L10.5,7" stroke="#eee" fill="none" stroke-width="1.3"/></svg>
<div style="left:143.5px;top:435.8px;width:79.5px;height:2px;background:rgba(0,0,0,0.3);"></div>
<div style="left:143.5px;top:435.8px;width:58.5px;height:2px;background:#c4c4c4;"></div>
<div style="left:268px;top:418.3px;width:6px;height:24.6px;background:#3a3b3f;"></div>
<div style="left:275px;top:418.3px;width:988px;height:23.8px;background:#62e2c7;"></div>
<div style="left:275px;top:441.70000000000005px;width:988px;height:1.2px;background:#1b1b1d;"></div>
<div style="left:116px;top:442.90000000000003px;width:158px;height:24.6px;background:#334b35;"></div>
<div style="left:116px;top:466.30000000000007px;width:158px;height:1.2px;background:#1b1b1d;"></div>
<div style="left:117px;top:442.90000000000003px;width:5.5px;height:24.6px;background:#38393d;"></div>
<div style="left:122.5px;top:442.90000000000003px;width:6px;height:23.8px;background:#93f0a0;"></div>
<div style="left:122.5px;top:460.50000000000006px;width:6px;height:6px;background:rgba(0,0,0,0.25);"></div>
<div class="t" style="left:132.5px;top:447.90000000000003px;font-size:7px;color:#f4f4f4;">27</div>
<div style="left:143.5px;top:445.90000000000003px;width:55px;height:12px;background:rgba(255,255,255,0.11);border-radius:1px;"></div>
<div style="left:157.25px;top:445.90000000000003px;width:1px;height:12px;background:#334b35;"></div>
<div style="left:171.0px;top:445.90000000000003px;width:1px;height:12px;background:#334b35;"></div>
<div style="left:184.75px;top:445.90000000000003px;width:1px;height:12px;background:#334b35;"></div>
<div class="t" style="left:146.7px;top:448.40000000000003px;font-size:7.5px;color:#f0f0f0;">M</div>
<div class="t" style="left:161.0px;top:448.40000000000003px;font-size:7.5px;color:#f0f0f0;">S</div>
<div style="left:174.0px;top:449.40000000000003px;width:5px;height:5px;background:#f2f2f2;border-radius:3px;"></div>
<svg style="left:187.5px;top:448.40000000000003px;" width="7" height="7" viewBox="0 0 7 7"><circle cx="3.5" cy="3.5" r="3" fill="none" stroke="#eee" stroke-width="0.9"/><path d="M3.5,0.5 A3,3 0 0 0 3.5,6.5 Z" fill="#eee"/></svg>
<div class="t" style="left:202px;top:447.90000000000003px;font-size:7.5px;color:#ececec;">Trumpet 2</div>
<svg style="left:253px;top:448.90000000000003px;" width="11" height="8" viewBox="0 0 11 8"><path d="M0.5,7 L2.5,2 L4,6 L5.5,0.5 L7,6 L8.5,2 L10.5,7" stroke="#eee" fill="none" stroke-width="1.3"/></svg>
<div style="left:143.5px;top:460.40000000000003px;width:79.5px;height:2px;background:rgba(0,0,0,0.3);"></div>
<div style="left:143.5px;top:460.40000000000003px;width:58.5px;height:2px;background:#c4c4c4;"></div>
<div style="left:268px;top:442.90000000000003px;width:6px;height:24.6px;background:#3a3b3f;"></div>
<div style="left:275px;top:442.90000000000003px;width:988px;height:23.8px;background:#93f3a2;"></div>
<div style="left:275px;top:466.30000000000007px;width:988px;height:1.2px;background:#1b1b1d;"></div>
<div style="left:116px;top:467.5px;width:158px;height:24.6px;background:#263a5e;"></div>
<div style="left:116px;top:490.90000000000003px;width:158px;height:1.2px;background:#1b1b1d;"></div>
<div style="left:117px;top:467.5px;width:5.5px;height:24.6px;background:#38393d;"></div>
<div style="left:122.5px;top:467.5px;width:6px;height:23.8px;background:#2f62d8;"></div>
<div style="left:122.5px;top:485.1px;width:6px;height:6px;background:rgba(0,0,0,0.25);"></div>
<div class="t" style="left:132.5px;top:472.5px;font-size:7px;color:#f4f4f4;">28</div>
<div style="left:143.5px;top:470.5px;width:55px;height:12px;background:rgba(255,255,255,0.11);border-radius:1px;"></div>
<div style="left:157.25px;top:470.5px;width:1px;height:12px;background:#263a5e;"></div>
<div style="left:171.0px;top:470.5px;width:1px;height:12px;background:#263a5e;"></div>
<div style="left:184.75px;top:470.5px;width:1px;height:12px;background:#263a5e;"></div>
<div class="t" style="left:146.7px;top:473.0px;font-size:7.5px;color:#f0f0f0;">M</div>
<div class="t" style="left:161.0px;top:473.0px;font-size:7.5px;color:#f0f0f0;">S</div>
<div style="left:174.0px;top:474.0px;width:5px;height:5px;background:#f2f2f2;border-radius:3px;"></div>
<svg style="left:187.5px;top:473.0px;" width="7" height="7" viewBox="0 0 7 7"><circle cx="3.5" cy="3.5" r="3" fill="none" stroke="#eee" stroke-width="0.9"/><path d="M3.5,0.5 A3,3 0 0 0 3.5,6.5 Z" fill="#eee"/></svg>
<div class="t" style="left:202px;top:472.5px;font-size:7.5px;color:#ececec;">Alto Sax</div>
<svg style="left:253px;top:473.5px;" width="11" height="8" viewBox="0 0 11 8"><path d="M0.5,7 L2.5,2 L4,6 L5.5,0.5 L7,6 L8.5,2 L10.5,7" stroke="#eee" fill="none" stroke-width="1.3"/></svg>
<div style="left:143.5px;top:485.0px;width:79.5px;height:2px;background:rgba(0,0,0,0.3);"></div>
<div style="left:143.5px;top:485.0px;width:60.5px;height:2px;background:#c4c4c4;"></div>
<div style="left:268px;top:467.5px;width:6px;height:24.6px;background:#3a3b3f;"></div>
<div style="left:275px;top:467.5px;width:988px;height:23.8px;background:#2e60d6;"></div>
<div style="left:275px;top:490.90000000000003px;width:988px;height:1.2px;background:#1b1b1d;"></div>
<div style="left:116px;top:492.1px;width:158px;height:24.6px;background:#2c4a4d;"></div>
<div style="left:116px;top:515.5px;width:158px;height:1.2px;background:#1b1b1d;"></div>
<div style="left:117px;top:492.1px;width:5.5px;height:24.6px;background:#38393d;"></div>
<div style="left:122.5px;top:492.1px;width:6px;height:23.8px;background:#74f0f2;"></div>
<div style="left:122.5px;top:509.70000000000005px;width:6px;height:6px;background:rgba(0,0,0,0.25);"></div>
<div class="t" style="left:132.5px;top:497.1px;font-size:7px;color:#f4f4f4;">29</div>
<div style="left:143.5px;top:495.1px;width:55px;height:12px;background:rgba(255,255,255,0.11);border-radius:1px;"></div>
<div style="left:157.25px;top:495.1px;width:1px;height:12px;background:#2c4a4d;"></div>
<div style="left:171.0px;top:495.1px;width:1px;height:12px;background:#2c4a4d;"></div>
<div style="left:184.75px;top:495.1px;width:1px;height:12px;background:#2c4a4d;"></div>
<div class="t" style="left:146.7px;top:497.6px;font-size:7.5px;color:#f0f0f0;">M</div>
<div class="t" style="left:161.0px;top:497.6px;font-size:7.5px;color:#f0f0f0;">S</div>
<div style="left:174.0px;top:498.6px;width:5px;height:5px;background:#f2f2f2;border-radius:3px;"></div>
<svg style="left:187.5px;top:497.6px;" width="7" height="7" viewBox="0 0 7 7"><circle cx="3.5" cy="3.5" r="3" fill="none" stroke="#eee" stroke-width="0.9"/><path d="M3.5,0.5 A3,3 0 0 0 3.5,6.5 Z" fill="#eee"/></svg>
<div class="t" style="left:202px;top:497.1px;font-size:7.5px;color:#ececec;">Trombone</div>
<svg style="left:253px;top:498.1px;" width="11" height="8" viewBox="0 0 11 8"><path d="M0.5,7 L2.5,2 L4,6 L5.5,0.5 L7,6 L8.5,2 L10.5,7" stroke="#eee" fill="none" stroke-width="1.3"/></svg>
<div style="left:143.5px;top:509.6px;width:79.5px;height:2px;background:rgba(0,0,0,0.3);"></div>
<div style="left:143.5px;top:509.6px;width:60.5px;height:2px;background:#c4c4c4;"></div>
<div style="left:268px;top:492.1px;width:6px;height:24.6px;background:#3a3b3f;"></div>
<div style="left:275px;top:492.1px;width:988px;height:23.8px;background:#74f3f3;"></div>
<div style="left:275px;top:515.5px;width:988px;height:1.2px;background:#1b1b1d;"></div>
<div style="left:116px;top:516.7px;width:158px;height:24.6px;background:#2c4a60;"></div>
<div style="left:116px;top:540.1px;width:158px;height:1.2px;background:#1b1b1d;"></div>
<div style="left:117px;top:516.7px;width:5.5px;height:24.6px;background:#38393d;"></div>
<div style="left:122.5px;top:516.7px;width:6px;height:23.8px;background:#3ea0e2;"></div>
<div style="left:122.5px;top:534.3000000000001px;width:6px;height:6px;background:rgba(0,0,0,0.25);"></div>
<div class="t" style="left:132.5px;top:521.7px;font-size:7px;color:#f4f4f4;">30</div>
<div style="left:143.5px;top:519.7px;width:55px;height:12px;background:rgba(255,255,255,0.11);border-radius:1px;"></div>
<div style="left:157.25px;top:519.7px;width:1px;height:12px;background:#2c4a60;"></div>
<div style="left:171.0px;top:519.7px;width:1px;height:12px;background:#2c4a60;"></div>
<div style="left:184.75px;top:519.7px;width:1px;height:12px;background:#2c4a60;"></div>
<div class="t" style="left:146.7px;top:522.2px;font-size:7.5px;color:#f0f0f0;">M</div>
<div class="t" style="left:161.0px;top:522.2px;font-size:7.5px;color:#f0f0f0;">S</div>
<div style="left:174.0px;top:523.2px;width:5px;height:5px;background:#f2f2f2;border-radius:3px;"></div>
<svg style="left:187.5px;top:522.2px;" width="7" height="7" viewBox="0 0 7 7"><circle cx="3.5" cy="3.5" r="3" fill="none" stroke="#eee" stroke-width="0.9"/><path d="M3.5,0.5 A3,3 0 0 0 3.5,6.5 Z" fill="#eee"/></svg>
<div class="t" style="left:202px;top:521.7px;font-size:7.5px;color:#ececec;">Bari Sax</div>
<svg style="left:253px;top:522.7px;" width="11" height="8" viewBox="0 0 11 8"><path d="M0.5,7 L2.5,2 L4,6 L5.5,0.5 L7,6 L8.5,2 L10.5,7" stroke="#eee" fill="none" stroke-width="1.3"/></svg>
<div style="left:143.5px;top:534.2px;width:79.5px;height:2px;background:rgba(0,0,0,0.3);"></div>
<div style="left:143.5px;top:534.2px;width:58.5px;height:2px;background:#c4c4c4;"></div>
<div style="left:268px;top:516.7px;width:6px;height:24.6px;background:#3a3b3f;"></div>
<div style="left:275px;top:516.7px;width:988px;height:23.8px;background:#3ea0e0;"></div>
<div style="left:275px;top:540.1px;width:988px;height:1.2px;background:#1b1b1d;"></div>
<div style="left:269px;top:122px;width:4px;height:2px;background:#8cc8ee;"></div>
<div style="left:269px;top:142px;width:4px;height:11px;background:#8cc8ee;"></div>
<div style="left:269px;top:207px;width:4px;height:6px;background:#8cc8ee;"></div>
<div style="left:269px;top:358px;width:4px;height:10px;background:#8cc8ee;"></div>
<div style="left:269px;top:383px;width:4px;height:10px;background:#8cc8ee;"></div>
<div style="left:269px;top:423px;width:4px;height:18px;background:#8cc8ee;"></div>
<div style="left:269px;top:447px;width:4px;height:18px;background:#8cc8ee;"></div>
<div style="left:269px;top:472px;width:4px;height:18px;background:#8cc8ee;"></div>
<div style="left:269px;top:496px;width:4px;height:18px;background:#8cc8ee;"></div>
<div style="left:269px;top:521px;width:4px;height:18px;background:#8cc8ee;"></div>
<div style="left:344.75px;top:98.5px;width:199.0px;height:23.8px;background:#f0669a;"></div>
<div style="left:344.75px;top:98.5px;width:42.8px;height:7px;background:rgba(255,255,255,0.12);"></div>
<svg style="left:344.75px;top:98.5px;" width="42.8" height="7" viewBox="0 0 42.8 7"><polygon points="0,0 37,0 32,6.5 0,6.5" fill="#6a2444" opacity="0.9"/></svg>
<div class="t" style="left:347.75px;top:99.3px;font-size:5.5px;color:#fff;">Bongos(2)</div>
<div style="left:743.25px;top:98.5px;width:519.75px;height:23.8px;background:#f0669a;"></div>
<div style="left:743.25px;top:98.5px;width:42.8px;height:7px;background:rgba(255,255,255,0.12);"></div>
<svg style="left:743.25px;top:98.5px;" width="42.8" height="7" viewBox="0 0 42.8 7"><polygon points="0,0 37,0 32,6.5 0,6.5" fill="#6a2444" opacity="0.9"/></svg>
<div class="t" style="left:746.25px;top:99.3px;font-size:5.5px;color:#fff;">Bongos(2)</div>
<div style="left:743.25px;top:147.7px;width:199.5px;height:23.8px;background:#f0669a;"></div>
<div style="left:743.25px;top:147.7px;width:39.6px;height:7px;background:rgba(255,255,255,0.12);"></div>
<svg style="left:743.25px;top:147.7px;" width="39.6" height="7" viewBox="0 0 39.6 7"><polygon points="0,0 34,0 29,6.5 0,6.5" fill="#6a2444" opacity="0.9"/></svg>
<div class="t" style="left:746.25px;top:148.5px;font-size:5.5px;color:#fff;">Cowbells</div>
<div style="left:743.25px;top:221.5px;width:66.5px;height:23.8px;background:#f0669a;"></div>
<div style="left:743.25px;top:221.5px;width:55.6px;height:7px;background:rgba(255,255,255,0.12);"></div>
<svg style="left:743.25px;top:221.5px;" width="55.6" height="7" viewBox="0 0 55.6 7"><polygon points="0,0 50,0 45,6.5 0,6.5" fill="#6a2444" opacity="0.9"/></svg>
<div class="t" style="left:746.25px;top:222.3px;font-size:5.5px;color:#fff;">Vibra Slap(2)</div>
<div style="left:876.25px;top:221.5px;width:66.5px;height:23.8px;background:#f0669a;"></div>
<div style="left:876.25px;top:221.5px;width:55.6px;height:7px;background:rgba(255,255,255,0.12);"></div>
<svg style="left:876.25px;top:221.5px;" width="55.6" height="7" viewBox="0 0 55.6 7"><polygon points="0,0 50,0 45,6.5 0,6.5" fill="#6a2444" opacity="0.9"/></svg>
<div class="t" style="left:879.25px;top:222.3px;font-size:5.5px;color:#fff;">Vibra Slap(3)</div>
<svg style="left:0px;top:0px;" width="1500" height="819" viewBox="0 0 1500 819"><path d="M344.25,109.5H543.75" stroke="#5c1c36" stroke-width="0.6" opacity="0.6"/><path d="M352.2,105.5l1.7 4.0-1.7 4.0-1.7-4.0zM356.4,105.1l1.4 4.4-1.4 4.4-1.4-4.4zM361.4,107.4l1.2 2.1-1.2 2.1-1.2-2.1zM360.5,103.2l1.1 6.3-1.1 6.3-1.1-6.3zM366.1,107.4l1.2 2.1-1.2 2.1-1.2-2.1zM364.7,104.5l1.6 5.0-1.6 5.0-1.6-5.0zM369.0,107.4l1.2 2.1-1.2 2.1-1.2-2.1zM373.0,103.5l1.2 6.0-1.2 6.0-1.2-6.0zM381.3,102.8l1.0 6.7-1.0 6.7-1.0-6.7zM385.9,107.4l1.2 2.1-1.2 2.1-1.2-2.1zM385.4,102.7l1.3 6.8-1.3 6.8-1.3-6.8zM389.7,107.4l1.2 2.1-1.2 2.1-1.2-2.1zM393.7,105.9l1.2 3.6-1.2 3.6-1.2-3.6zM398.2,107.4l1.2 2.1-1.2 2.1-1.2-2.1zM402.0,105.2l1.2 4.3-1.2 4.3-1.2-4.3zM406.4,107.4l1.2 2.1-1.2 2.1-1.2-2.1zM406.2,105.0l1.0 4.5-1.0 4.5-1.0-4.5zM422.8,104.1l1.5 5.4-1.5 5.4-1.5-5.4zM428.8,107.4l1.2 2.1-1.2 2.1-1.2-2.1zM431.1,103.0l1.1 6.5-1.1 6.5-1.1-6.5zM436.3,107.4l1.2 2.1-1.2 2.1-1.2-2.1zM439.4,103.5l1.7 6.0-1.7 6.0-1.7-6.0zM444.9,107.4l1.2 2.1-1.2 2.1-1.2-2.1zM447.7,103.7l1.2 5.8-1.2 5.8-1.2-5.8zM451.8,102.9l1.7 6.6-1.7 6.6-1.7-6.6zM456.0,103.9l1.0 5.6-1.0 5.6-1.0-5.6zM461.4,107.4l1.2 2.1-1.2 2.1-1.2-2.1zM464.3,104.5l1.1 5.0-1.1 5.0-1.1-5.0zM472.6,103.5l1.5 6.0-1.5 6.0-1.5-6.0zM476.9,107.4l1.2 2.1-1.2 2.1-1.2-2.1zM480.9,104.2l1.6 5.3-1.6 5.3-1.6-5.3zM489.2,104.6l1.4 4.9-1.4 4.9-1.4-4.9zM492.3,107.4l1.2 2.1-1.2 2.1-1.2-2.1zM497.5,103.5l1.8 6.0-1.8 6.0-1.8-6.0z" fill="#5c1c36"/><path d="M743.25,109.5H1263" stroke="#5c1c36" stroke-width="0.6" opacity="0.6"/><path d="M775.2,102.7l1.8 6.8-1.8 6.8-1.8-6.8zM778.5,107.4l1.2 2.1-1.2 2.1-1.2-2.1zM783.5,103.1l1.6 6.4-1.6 6.4-1.6-6.4zM791.8,104.9l1.5 4.6-1.5 4.6-1.5-4.6zM796.0,104.0l1.1 5.5-1.1 5.5-1.1-5.5zM800.2,107.4l1.2 2.1-1.2 2.1-1.2-2.1zM812.6,103.5l1.8 6.0-1.8 6.0-1.8-6.0zM816.7,104.1l1.4 5.4-1.4 5.4-1.4-5.4zM819.9,107.4l1.2 2.1-1.2 2.1-1.2-2.1zM825.0,105.9l1.4 3.6-1.4 3.6-1.4-3.6zM829.2,107.4l1.2 2.1-1.2 2.1-1.2-2.1zM833.3,102.9l1.4 6.6-1.4 6.6-1.4-6.6zM849.9,105.2l1.0 4.3-1.0 4.3-1.0-4.3zM853.4,107.4l1.2 2.1-1.2 2.1-1.2-2.1zM854.1,104.2l1.8 5.3-1.8 5.3-1.8-5.3zM862.4,105.4l1.7 4.1-1.7 4.1-1.7-4.1zM870.7,103.4l1.7 6.1-1.7 6.1-1.7-6.1zM874.8,103.2l1.3 6.3-1.3 6.3-1.3-6.3zM891.4,102.6l1.1 6.9-1.1 6.9-1.1-6.9zM895.6,103.5l1.4 6.0-1.4 6.0-1.4-6.0zM903.9,104.3l1.7 5.2-1.7 5.2-1.7-5.2zM920.5,103.1l1.3 6.4-1.3 6.4-1.3-6.4zM937.1,102.9l1.4 6.6-1.4 6.6-1.4-6.6zM945.4,102.8l1.6 6.7-1.6 6.7-1.6-6.7zM949.1,107.4l1.2 2.1-1.2 2.1-1.2-2.1zM962.0,104.9l1.6 4.6-1.6 4.6-1.6-4.6zM967.7,107.4l1.2 2.1-1.2 2.1-1.2-2.1zM970.3,105.1l1.7 4.4-1.7 4.4-1.7-4.4zM976.2,107.4l1.2 2.1-1.2 2.1-1.2-2.1zM978.6,103.5l1.4 6.0-1.4 6.0-1.4-6.0zM986.9,103.7l1.5 5.8-1.5 5.8-1.5-5.8zM990.5,107.4l1.2 2.1-1.2 2.1-1.2-2.1zM991.0,104.2l1.7 5.3-1.7 5.3-1.7-5.3zM999.3,105.7l1.7 3.8-1.7 3.8-1.7-3.8zM1015.9,102.8l1.2 6.7-1.2 6.7-1.2-6.7zM1020.1,105.8l1.5 3.7-1.5 3.7-1.5-3.7zM1023.8,107.4l1.2 2.1-1.2 2.1-1.2-2.1zM1028.4,102.9l1.1 6.6-1.1 6.6-1.1-6.6zM1036.7,103.0l1.2 6.5-1.2 6.5-1.2-6.5zM1042.3,107.4l1.2 2.1-1.2 2.1-1.2-2.1zM1045.0,104.5l1.6 5.0-1.6 5.0-1.6-5.0zM1049.1,107.4l1.2 2.1-1.2 2.1-1.2-2.1zM1053.3,105.4l1.5 4.1-1.5 4.1-1.5-4.1zM1059.2,107.4l1.2 2.1-1.2 2.1-1.2-2.1zM1061.6,105.9l1.6 3.6-1.6 3.6-1.6-3.6zM1065.4,107.4l1.2 2.1-1.2 2.1-1.2-2.1zM1069.9,103.2l1.1 6.3-1.1 6.3-1.1-6.3zM1075.0,107.4l1.2 2.1-1.2 2.1-1.2-2.1zM1074.0,104.7l1.0 4.8-1.0 4.8-1.0-4.8zM1078.2,105.5l1.0 4.0-1.0 4.0-1.0-4.0zM1083.0,107.4l1.2 2.1-1.2 2.1-1.2-2.1zM1082.3,103.4l1.1 6.1-1.1 6.1-1.1-6.1zM1085.4,107.4l1.2 2.1-1.2 2.1-1.2-2.1zM1086.5,104.4l1.6 5.1-1.6 5.1-1.6-5.1zM1094.8,102.8l1.6 6.7-1.6 6.7-1.6-6.7zM1103.1,103.5l1.4 6.0-1.4 6.0-1.4-6.0zM1108.1,107.4l1.2 2.1-1.2 2.1-1.2-2.1zM1119.7,104.9l1.1 4.6-1.1 4.6-1.1-4.6zM1125.3,107.4l1.2 2.1-1.2 2.1-1.2-2.1zM1136.3,105.6l1.5 3.9-1.5 3.9-1.5-3.9zM1140.8,107.4l1.2 2.1-1.2 2.1-1.2-2.1zM1144.6,105.5l1.8 4.0-1.8 4.0-1.8-4.0zM1149.4,107.4l1.2 2.1-1.2 2.1-1.2-2.1zM1161.2,104.5l1.0 5.0-1.0 5.0-1.0-5.0zM1177.8,105.5l1.0 4.0-1.0 4.0-1.0-4.0zM1181.3,107.4l1.2 2.1-1.2 2.1-1.2-2.1zM1186.1,105.7l1.5 3.8-1.5 3.8-1.5-3.8zM1190.2,102.6l1.7 6.9-1.7 6.9-1.7-6.9zM1198.5,105.2l1.4 4.3-1.4 4.3-1.4-4.3zM1203.3,107.4l1.2 2.1-1.2 2.1-1.2-2.1zM1206.8,103.8l1.6 5.7-1.6 5.7-1.6-5.7zM1215.1,105.1l1.3 4.4-1.3 4.4-1.3-4.4zM1223.4,106.0l1.0 3.5-1.0 3.5-1.0-3.5zM1226.8,107.4l1.2 2.1-1.2 2.1-1.2-2.1zM1231.7,103.5l1.2 6.0-1.2 6.0-1.2-6.0zM1235.3,107.4l1.2 2.1-1.2 2.1-1.2-2.1zM1240.0,105.2l1.2 4.3-1.2 4.3-1.2-4.3zM1244.2,104.4l1.2 5.1-1.2 5.1-1.2-5.1zM1248.3,105.3l1.7 4.2-1.7 4.2-1.7-4.2zM1256.6,103.4l1.3 6.1-1.3 6.1-1.3-6.1z" fill="#5c1c36"/><path d="M275,134.6H1263" stroke="#5c1c36" stroke-width="0.6" opacity="0.6"/><path d="M279.0,131.5l1.4 3.1-1.4 3.1-1.4-3.1zM283.8,133.1l1.2 1.5-1.2 1.5-1.2-1.5zM291.4,130.5l1.1 4.1-1.1 4.1-1.1-4.1zM297.0,133.1l1.2 1.5-1.2 1.5-1.2-1.5zM299.8,131.5l1.2 3.1-1.2 3.1-1.2-3.1zM308.1,130.9l1.7 3.7-1.7 3.7-1.7-3.7zM313.0,133.1l1.2 1.5-1.2 1.5-1.2-1.5zM320.5,131.7l1.5 2.9-1.5 2.9-1.5-2.9zM332.9,130.8l1.6 3.8-1.6 3.8-1.6-3.8zM337.1,131.9l1.6 2.7-1.6 2.7-1.6-2.7zM349.5,131.3l1.0 3.3-1.0 3.3-1.0-3.3zM362.0,130.9l1.6 3.7-1.6 3.7-1.6-3.7zM370.3,130.3l1.7 4.3-1.7 4.3-1.7-4.3zM375.7,133.1l1.2 1.5-1.2 1.5-1.2-1.5zM374.4,131.0l1.7 3.6-1.7 3.6-1.7-3.6zM382.7,131.9l1.1 2.7-1.1 2.7-1.1-2.7zM388.6,133.1l1.2 1.5-1.2 1.5-1.2-1.5zM391.0,131.0l1.5 3.6-1.5 3.6-1.5-3.6zM395.6,133.1l1.2 1.5-1.2 1.5-1.2-1.5zM395.2,131.1l1.3 3.5-1.3 3.5-1.3-3.5zM403.5,130.6l1.7 4.0-1.7 4.0-1.7-4.0zM411.8,129.8l1.7 4.8-1.7 4.8-1.7-4.8zM424.2,130.4l1.1 4.2-1.1 4.2-1.1-4.2zM428.4,129.7l1.7 4.9-1.7 4.9-1.7-4.9zM432.5,130.3l1.2 4.3-1.2 4.3-1.2-4.3zM440.8,130.7l1.2 3.9-1.2 3.9-1.2-3.9zM446.4,133.1l1.2 1.5-1.2 1.5-1.2-1.5zM449.1,129.6l1.1 5.0-1.1 5.0-1.1-5.0zM461.6,131.1l1.1 3.5-1.1 3.5-1.1-3.5zM466.9,133.1l1.2 1.5-1.2 1.5-1.2-1.5zM469.9,129.9l1.0 4.7-1.0 4.7-1.0-4.7zM474.0,132.0l1.6 2.6-1.6 2.6-1.6-2.6zM479.7,133.1l1.2 1.5-1.2 1.5-1.2-1.5zM482.3,129.6l1.4 5.0-1.4 5.0-1.4-5.0zM490.6,131.3l1.1 3.3-1.1 3.3-1.1-3.3zM503.1,132.0l1.2 2.6-1.2 2.6-1.2-2.6zM507.9,133.1l1.2 1.5-1.2 1.5-1.2-1.5zM507.2,131.7l1.0 2.9-1.0 2.9-1.0-2.9zM511.4,131.3l1.8 3.3-1.8 3.3-1.8-3.3zM515.5,131.2l1.4 3.4-1.4 3.4-1.4-3.4zM523.8,130.5l1.5 4.1-1.5 4.1-1.5-4.1zM532.1,130.5l1.8 4.1-1.8 4.1-1.8-4.1zM536.3,131.0l1.6 3.6-1.6 3.6-1.6-3.6zM540.2,133.1l1.2 1.5-1.2 1.5-1.2-1.5zM544.6,129.7l1.4 4.9-1.4 4.9-1.4-4.9zM552.9,132.1l1.3 2.5-1.3 2.5-1.3-2.5zM565.3,132.0l1.5 2.6-1.5 2.6-1.5-2.6zM573.6,131.9l1.5 2.7-1.5 2.7-1.5-2.7zM578.7,133.1l1.2 1.5-1.2 1.5-1.2-1.5zM586.1,131.2l1.6 3.4-1.6 3.4-1.6-3.4zM594.4,132.0l1.0 2.6-1.0 2.6-1.0-2.6zM606.8,129.7l1.2 4.9-1.2 4.9-1.2-4.9zM611.6,133.1l1.2 1.5-1.2 1.5-1.2-1.5zM615.1,131.3l1.3 3.3-1.3 3.3-1.3-3.3zM619.3,133.1l1.2 1.5-1.2 1.5-1.2-1.5zM623.4,130.6l1.2 4.0-1.2 4.0-1.2-4.0zM628.8,133.1l1.2 1.5-1.2 1.5-1.2-1.5zM631.7,132.0l1.5 2.6-1.5 2.6-1.5-2.6zM640.0,131.3l1.2 3.3-1.2 3.3-1.2-3.3zM648.3,131.5l1.1 3.1-1.1 3.1-1.1-3.1zM653.4,133.1l1.2 1.5-1.2 1.5-1.2-1.5zM656.6,131.8l1.3 2.8-1.3 2.8-1.3-2.8zM662.2,133.1l1.2 1.5-1.2 1.5-1.2-1.5zM664.9,131.0l1.7 3.6-1.7 3.6-1.7-3.6zM669.0,133.1l1.2 1.5-1.2 1.5-1.2-1.5zM673.2,130.5l1.7 4.1-1.7 4.1-1.7-4.1zM676.9,133.1l1.2 1.5-1.2 1.5-1.2-1.5zM685.7,131.8l1.4 2.8-1.4 2.8-1.4-2.8zM691.1,133.1l1.2 1.5-1.2 1.5-1.2-1.5zM698.1,130.0l1.1 4.6-1.1 4.6-1.1-4.6zM703.6,133.1l1.2 1.5-1.2 1.5-1.2-1.5zM702.3,130.5l1.6 4.1-1.6 4.1-1.6-4.1zM705.7,133.1l1.2 1.5-1.2 1.5-1.2-1.5zM714.7,131.4l1.6 3.2-1.6 3.2-1.6-3.2zM718.8,133.1l1.2 1.5-1.2 1.5-1.2-1.5zM718.9,131.1l1.3 3.5-1.3 3.5-1.3-3.5zM724.7,133.1l1.2 1.5-1.2 1.5-1.2-1.5zM723.0,131.7l1.0 2.9-1.0 2.9-1.0-2.9zM727.2,129.9l1.8 4.7-1.8 4.7-1.8-4.7zM733.1,133.1l1.2 1.5-1.2 1.5-1.2-1.5zM731.3,129.8l1.2 4.8-1.2 4.8-1.2-4.8zM739.6,130.0l1.5 4.6-1.5 4.6-1.5-4.6zM747.9,131.4l1.3 3.2-1.3 3.2-1.3-3.2zM751.2,133.1l1.2 1.5-1.2 1.5-1.2-1.5zM760.4,130.6l1.2 4.0-1.2 4.0-1.2-4.0zM768.7,132.0l1.7 2.6-1.7 2.6-1.7-2.6zM781.1,129.8l1.7 4.8-1.7 4.8-1.7-4.8zM793.6,130.7l1.0 3.9-1.0 3.9-1.0-3.9zM801.9,131.7l1.2 2.9-1.2 2.9-1.2-2.9zM810.2,130.8l1.3 3.8-1.3 3.8-1.3-3.8zM814.3,130.6l1.3 4.0-1.3 4.0-1.3-4.0zM819.9,133.1l1.2 1.5-1.2 1.5-1.2-1.5zM822.6,130.9l1.6 3.7-1.6 3.7-1.6-3.7zM826.2,133.1l1.2 1.5-1.2 1.5-1.2-1.5zM830.9,130.8l1.7 3.8-1.7 3.8-1.7-3.8zM836.3,133.1l1.2 1.5-1.2 1.5-1.2-1.5zM843.4,129.8l1.6 4.8-1.6 4.8-1.6-4.8zM847.5,132.1l1.5 2.5-1.5 2.5-1.5-2.5zM855.8,132.0l1.2 2.6-1.2 2.6-1.2-2.6zM860.4,133.1l1.2 1.5-1.2 1.5-1.2-1.5zM864.1,131.0l1.4 3.6-1.4 3.6-1.4-3.6zM872.4,132.1l1.0 2.5-1.0 2.5-1.0-2.5zM875.8,133.1l1.2 1.5-1.2 1.5-1.2-1.5zM876.6,131.9l1.8 2.7-1.8 2.7-1.8-2.7zM880.7,131.9l1.4 2.7-1.4 2.7-1.4-2.7zM884.7,133.1l1.2 1.5-1.2 1.5-1.2-1.5zM889.0,131.2l1.5 3.4-1.5 3.4-1.5-3.4zM901.5,131.2l1.2 3.4-1.2 3.4-1.2-3.4zM904.9,133.1l1.2 1.5-1.2 1.5-1.2-1.5zM913.9,130.7l1.6 3.9-1.6 3.9-1.6-3.9zM917.2,133.1l1.2 1.5-1.2 1.5-1.2-1.5zM922.2,131.7l1.3 2.9-1.3 2.9-1.3-2.9zM926.4,130.1l1.3 4.5-1.3 4.5-1.3-4.5zM930.5,130.5l1.3 4.1-1.3 4.1-1.3-4.1zM935.0,133.1l1.2 1.5-1.2 1.5-1.2-1.5zM938.8,130.3l1.3 4.3-1.3 4.3-1.3-4.3zM947.1,130.9l1.2 3.7-1.2 3.7-1.2-3.7zM955.4,130.4l1.1 4.2-1.1 4.2-1.1-4.2zM959.7,133.1l1.2 1.5-1.2 1.5-1.2-1.5zM963.7,129.9l1.7 4.7-1.7 4.7-1.7-4.7zM969.4,133.1l1.2 1.5-1.2 1.5-1.2-1.5zM967.9,130.1l1.2 4.5-1.2 4.5-1.2-4.5zM971.3,133.1l1.2 1.5-1.2 1.5-1.2-1.5zM976.2,130.1l1.5 4.5-1.5 4.5-1.5-4.5zM984.5,130.1l1.5 4.5-1.5 4.5-1.5-4.5zM996.9,130.7l1.1 3.9-1.1 3.9-1.1-3.9zM1005.2,132.1l1.1 2.5-1.1 2.5-1.1-2.5zM1013.5,132.0l1.1 2.6-1.1 2.6-1.1-2.6zM1019.2,133.1l1.2 1.5-1.2 1.5-1.2-1.5zM1017.7,131.7l1.0 2.9-1.0 2.9-1.0-2.9zM1021.8,131.8l1.7 2.8-1.7 2.8-1.7-2.8zM1034.3,130.0l1.8 4.6-1.8 4.6-1.8-4.6zM1042.6,130.1l1.0 4.5-1.0 4.5-1.0-4.5zM1050.9,130.8l1.6 3.8-1.6 3.8-1.6-3.8zM1056.1,133.1l1.2 1.5-1.2 1.5-1.2-1.5zM1055.0,129.8l1.0 4.8-1.0 4.8-1.0-4.8zM1059.7,133.1l1.2 1.5-1.2 1.5-1.2-1.5zM1059.2,130.0l1.2 4.6-1.2 4.6-1.2-4.6zM1062.9,133.1l1.2 1.5-1.2 1.5-1.2-1.5zM1063.3,130.6l1.6 4.0-1.6 4.0-1.6-4.0zM1067.5,133.1l1.2 1.5-1.2 1.5-1.2-1.5zM1075.8,131.1l1.3 3.5-1.3 3.5-1.3-3.5zM1079.0,133.1l1.2 1.5-1.2 1.5-1.2-1.5zM1079.9,130.8l1.8 3.8-1.8 3.8-1.8-3.8zM1085.2,133.1l1.2 1.5-1.2 1.5-1.2-1.5zM1088.2,131.7l1.6 2.9-1.6 2.9-1.6-2.9zM1096.5,130.4l1.4 4.2-1.4 4.2-1.4-4.2zM1101.5,133.1l1.2 1.5-1.2 1.5-1.2-1.5zM1104.8,129.9l1.1 4.7-1.1 4.7-1.1-4.7zM1110.1,133.1l1.2 1.5-1.2 1.5-1.2-1.5zM1109.0,129.8l1.4 4.8-1.4 4.8-1.4-4.8zM1114.2,133.1l1.2 1.5-1.2 1.5-1.2-1.5zM1113.1,131.6l1.2 3.0-1.2 3.0-1.2-3.0zM1117.9,133.1l1.2 1.5-1.2 1.5-1.2-1.5zM1125.6,131.3l1.2 3.3-1.2 3.3-1.2-3.3zM1133.9,129.7l1.2 4.9-1.2 4.9-1.2-4.9zM1138.0,131.1l1.7 3.5-1.7 3.5-1.7-3.5zM1146.3,131.4l1.2 3.2-1.2 3.2-1.2-3.2zM1150.8,133.1l1.2 1.5-1.2 1.5-1.2-1.5zM1154.6,131.1l1.1 3.5-1.1 3.5-1.1-3.5zM1158.6,133.1l1.2 1.5-1.2 1.5-1.2-1.5zM1162.9,130.2l1.1 4.4-1.1 4.4-1.1-4.4zM1167.1,130.9l1.5 3.7-1.5 3.7-1.5-3.7zM1172.6,133.1l1.2 1.5-1.2 1.5-1.2-1.5zM1179.5,130.0l1.4 4.6-1.4 4.6-1.4-4.6zM1184.7,133.1l1.2 1.5-1.2 1.5-1.2-1.5zM1183.7,130.0l1.3 4.6-1.3 4.6-1.3-4.6zM1196.1,129.7l1.4 4.9-1.4 4.9-1.4-4.9zM1199.9,133.1l1.2 1.5-1.2 1.5-1.2-1.5zM1200.3,130.3l1.5 4.3-1.5 4.3-1.5-4.3zM1212.7,130.0l1.2 4.6-1.2 4.6-1.2-4.6zM1216.5,133.1l1.2 1.5-1.2 1.5-1.2-1.5zM1216.9,131.6l1.6 3.0-1.6 3.0-1.6-3.0zM1229.3,129.9l1.2 4.7-1.2 4.7-1.2-4.7zM1241.8,131.3l1.3 3.3-1.3 3.3-1.3-3.3zM1245.9,131.9l1.1 2.7-1.1 2.7-1.1-2.7zM1250.1,131.4l1.3 3.2-1.3 3.2-1.3-3.2zM1254.2,130.4l1.0 4.2-1.0 4.2-1.0-4.2zM1258.6,133.1l1.2 1.5-1.2 1.5-1.2-1.5zM1258.4,130.9l1.2 3.7-1.2 3.7-1.2-3.7z" fill="#5c1c36"/><path d="M743.25,159.7H942.75" stroke="#5c1c36" stroke-width="0.6" opacity="0.6"/><path d="M776.5,156.0l1.1 3.7-1.1 3.7-1.1-3.7zM780.0,157.9l1.2 1.8-1.2 1.8-1.2-1.8zM784.8,156.5l1.3 3.2-1.3 3.2-1.3-3.2zM793.1,154.3l1.6 5.4-1.6 5.4-1.6-5.4zM797.7,157.9l1.2 1.8-1.2 1.8-1.2-1.8zM801.4,155.9l1.1 3.8-1.1 3.8-1.1-3.8zM805.0,157.9l1.2 1.8-1.2 1.8-1.2-1.8zM809.7,153.9l1.7 5.8-1.7 5.8-1.7-5.8zM818.0,154.3l1.2 5.4-1.2 5.4-1.2-5.4zM822.9,157.9l1.2 1.8-1.2 1.8-1.2-1.8zM826.3,154.5l1.7 5.2-1.7 5.2-1.7-5.2zM834.6,156.4l1.5 3.3-1.5 3.3-1.5-3.3zM838.7,155.2l1.1 4.5-1.1 4.5-1.1-4.5zM842.0,157.9l1.2 1.8-1.2 1.8-1.2-1.8zM842.9,153.9l1.7 5.8-1.7 5.8-1.7-5.8zM851.2,155.8l1.7 3.9-1.7 3.9-1.7-3.9zM855.3,154.1l1.7 5.6-1.7 5.6-1.7-5.6zM863.6,155.5l1.5 4.2-1.5 4.2-1.5-4.2zM867.1,157.9l1.2 1.8-1.2 1.8-1.2-1.8zM867.8,155.8l1.7 3.9-1.7 3.9-1.7-3.9zM870.9,157.9l1.2 1.8-1.2 1.8-1.2-1.8zM871.9,154.8l1.2 4.9-1.2 4.9-1.2-4.9zM876.1,155.3l1.3 4.4-1.3 4.4-1.3-4.4zM884.4,156.1l1.3 3.6-1.3 3.6-1.3-3.6zM889.3,157.9l1.2 1.8-1.2 1.8-1.2-1.8zM892.7,155.9l1.3 3.8-1.3 3.8-1.3-3.8z" fill="#5c1c36"/><path d="M275,184.3H1263M276.2,184.3l.6-8.3 3.1 8.3-3.1 7.9zM280.4,184.3l.6-7.3 3.4 7.3-3.4 6.9zM284.5,184.3l.6-7.1 3.4 7.1-3.4 6.7zM288.7,184.3l.6-4.5 2.5 4.5-2.5 4.3zM292.8,184.3l.6-9.7 2.9 9.7-2.9 9.3zM297.0,184.3l.6-7.6 1.9 7.6-1.9 7.3zM301.1,184.3l.6-6.1 2.1 6.1-2.1 5.8zM305.3,184.3l.6-6.4 2.7 6.4-2.7 6.0zM309.4,184.3l.6-5.6 2.1 5.6-2.1 5.3zM313.6,184.3l.6-5.4 3.4 5.4-3.4 5.1zM317.7,184.3l.6-7.2 1.9 7.2-1.9 6.8zM321.9,184.3l.6-7.3 1.9 7.3-1.9 6.9zM326.0,184.3l.6-8.3 1.9 8.3-1.9 7.9zM330.2,184.3l.6-4.4 3.3 4.4-3.3 4.2zM334.3,184.3l.6-5.2 2.1 5.2-2.1 4.9zM338.5,184.3l.6-7.9 3.3 7.9-3.3 7.5zM342.6,184.3l.6-6.8 3.5 6.8-3.5 6.5zM346.8,184.3l.6-6.3 2.9 6.3-2.9 6.0zM350.9,184.3l.6-5.1 3.4 5.1-3.4 4.9zM355.1,184.3l.6-6.9 3.5 6.9-3.5 6.5zM359.2,184.3l.6-9.5 2.2 9.5-2.2 9.0zM363.4,184.3l.6-5.7 2.0 5.7-2.0 5.4zM367.5,184.3l.6-4.9 1.8 4.9-1.8 4.7zM371.7,184.3l.6-5.5 2.8 5.5-2.8 5.2zM375.8,184.3l.6-5.5 2.9 5.5-2.9 5.2zM380.0,184.3l.6-5.6 2.2 5.6-2.2 5.3zM384.1,184.3l.6-7.3 2.6 7.3-2.6 7.0zM388.3,184.3l.6-5.5 2.6 5.5-2.6 5.3zM392.4,184.3l.6-8.7 1.7 8.7-1.7 8.2zM396.6,184.3l.6-7.9 1.7 7.9-1.7 7.5zM400.7,184.3l.6-7.1 3.3 7.1-3.3 6.7zM404.9,184.3l.6-4.5 3.2 4.5-3.2 4.2zM409.0,184.3l.6-7.1 2.8 7.1-2.8 6.8zM413.2,184.3l.6-4.4 1.7 4.4-1.7 4.2zM417.3,184.3l.6-5.1 3.5 5.1-3.5 4.8zM421.5,184.3l.6-5.1 3.1 5.1-3.1 4.9zM425.6,184.3l.6-9.7 3.4 9.7-3.4 9.2zM429.8,184.3l.6-5.6 2.3 5.6-2.3 5.4zM433.9,184.3l.6-6.3 3.1 6.3-3.1 6.0zM438.1,184.3l.6-4.8 3.1 4.8-3.1 4.5zM442.2,184.3l.6-9.1 3.3 9.1-3.3 8.6zM446.4,184.3l.6-4.5 3.5 4.5-3.5 4.3zM450.5,184.3l.6-4.7 2.3 4.7-2.3 4.5zM454.7,184.3l.6-6.6 3.4 6.6-3.4 6.3zM458.8,184.3l.6-7.0 3.4 7.0-3.4 6.7zM463.0,184.3l.6-6.4 2.2 6.4-2.2 6.0zM467.1,184.3l.6-5.5 2.0 5.5-2.0 5.3zM471.3,184.3l.6-4.7 1.9 4.7-1.9 4.4zM475.4,184.3l.6-8.6 3.6 8.6-3.6 8.2zM479.6,184.3l.6-5.0 1.7 5.0-1.7 4.7zM483.7,184.3l.6-8.0 2.7 8.0-2.7 7.6zM487.9,184.3l.6-5.9 2.1 5.9-2.1 5.6zM492.0,184.3l.6-8.2 3.2 8.2-3.2 7.8zM496.2,184.3l.6-6.0 2.4 6.0-2.4 5.7zM500.3,184.3l.6-4.6 3.4 4.6-3.4 4.4zM504.5,184.3l.6-4.5 2.6 4.5-2.6 4.3zM508.6,184.3l.6-9.3 1.9 9.3-1.9 8.8zM512.8,184.3l.6-7.0 3.5 7.0-3.5 6.7zM516.9,184.3l.6-6.7 3.2 6.7-3.2 6.3zM521.1,184.3l.6-4.8 2.5 4.8-2.5 4.5zM525.2,184.3l.6-6.2 3.3 6.2-3.3 5.9zM529.4,184.3l.6-5.5 2.5 5.5-2.5 5.2zM533.5,184.3l.6-8.0 3.3 8.0-3.3 7.6zM537.7,184.3l.6-7.9 2.5 7.9-2.5 7.5zM541.8,184.3l.6-7.7 3.0 7.7-3.0 7.3zM546.0,184.3l.6-6.1 2.2 6.1-2.2 5.8zM550.1,184.3l.6-5.9 1.9 5.9-1.9 5.6zM554.3,184.3l.6-5.8 3.5 5.8-3.5 5.5zM558.4,184.3l.6-9.8 2.8 9.8-2.8 9.3zM562.6,184.3l.6-6.2 2.3 6.2-2.3 5.9zM566.7,184.3l.6-4.7 2.2 4.7-2.2 4.5zM570.9,184.3l.6-7.2 3.3 7.2-3.3 6.9zM575.0,184.3l.6-7.1 3.1 7.1-3.1 6.8zM579.2,184.3l.6-7.2 3.0 7.2-3.0 6.8zM583.3,184.3l.6-6.8 3.1 6.8-3.1 6.5zM587.5,184.3l.6-5.7 3.0 5.7-3.0 5.4zM591.6,184.3l.6-6.8 2.6 6.8-2.6 6.4zM595.8,184.3l.6-7.2 3.0 7.2-3.0 6.8zM599.9,184.3l.6-5.5 3.5 5.5-3.5 5.2zM604.1,184.3l.6-6.7 2.8 6.7-2.8 6.4zM608.2,184.3l.6-5.6 2.7 5.6-2.7 5.3zM612.4,184.3l.6-5.3 2.9 5.3-2.9 5.0zM616.5,184.3l.6-6.1 3.2 6.1-3.2 5.8zM620.7,184.3l.6-6.7 3.2 6.7-3.2 6.4zM624.8,184.3l.6-7.1 2.9 7.1-2.9 6.7zM629.0,184.3l.6-7.1 3.2 7.1-3.2 6.7zM633.1,184.3l.6-5.7 3.3 5.7-3.3 5.4zM637.3,184.3l.6-7.5 3.0 7.5-3.0 7.2zM641.4,184.3l.6-9.9 3.5 9.9-3.5 9.4zM645.6,184.3l.6-6.3 2.7 6.3-2.7 6.0zM649.7,184.3l.6-5.0 3.2 5.0-3.2 4.7zM653.9,184.3l.6-7.8 2.6 7.8-2.6 7.4zM658.0,184.3l.6-8.6 3.0 8.6-3.0 8.2zM662.2,184.3l.6-7.0 2.0 7.0-2.0 6.7zM666.3,184.3l.6-7.2 2.8 7.2-2.8 6.8zM670.5,184.3l.6-6.8 2.4 6.8-2.4 6.5zM674.6,184.3l.6-8.3 3.1 8.3-3.1 7.9zM678.8,184.3l.6-6.7 3.0 6.7-3.0 6.4zM682.9,184.3l.6-4.5 1.9 4.5-1.9 4.3zM687.1,184.3l.6-6.0 2.9 6.0-2.9 5.7zM691.2,184.3l.6-6.5 3.0 6.5-3.0 6.2zM695.4,184.3l.6-6.7 1.7 6.7-1.7 6.3zM699.5,184.3l.6-6.1 2.1 6.1-2.1 5.8zM703.7,184.3l.6-4.6 1.9 4.6-1.9 4.4zM707.8,184.3l.6-6.9 2.0 6.9-2.0 6.6zM712.0,184.3l.6-5.1 1.7 5.1-1.7 4.8zM716.1,184.3l.6-6.1 2.4 6.1-2.4 5.8zM720.3,184.3l.6-6.6 2.8 6.6-2.8 6.3zM724.4,184.3l.6-6.6 3.4 6.6-3.4 6.2zM728.6,184.3l.6-4.4 2.4 4.4-2.4 4.2zM732.7,184.3l.6-5.4 2.4 5.4-2.4 5.1zM736.9,184.3l.6-4.8 3.2 4.8-3.2 4.6zM741.0,184.3l.6-7.2 1.7 7.2-1.7 6.8zM745.2,184.3l.6-6.6 1.8 6.6-1.8 6.3zM749.3,184.3l.6-6.4 2.3 6.4-2.3 6.0zM753.5,184.3l.6-6.5 3.5 6.5-3.5 6.2zM757.6,184.3l.6-9.2 2.4 9.2-2.4 8.7zM761.8,184.3l.6-7.3 2.9 7.3-2.9 7.0zM765.9,184.3l.6-5.7 1.9 5.7-1.9 5.4zM770.1,184.3l.6-6.5 2.7 6.5-2.7 6.2zM774.2,184.3l.6-9.8 3.5 9.8-3.5 9.3zM778.4,184.3l.6-6.6 2.3 6.6-2.3 6.3zM782.5,184.3l.6-7.6 1.6 7.6-1.6 7.2zM786.7,184.3l.6-4.8 2.7 4.8-2.7 4.5zM790.8,184.3l.6-8.3 1.9 8.3-1.9 7.9zM795.0,184.3l.6-6.7 3.4 6.7-3.4 6.3zM799.1,184.3l.6-5.8 2.5 5.8-2.5 5.5zM803.3,184.3l.6-5.2 2.2 5.2-2.2 5.0zM807.4,184.3l.6-9.9 2.4 9.9-2.4 9.4zM811.6,184.3l.6-7.9 3.4 7.9-3.4 7.5zM815.7,184.3l.6-6.5 2.1 6.5-2.1 6.2zM819.9,184.3l.6-7.9 2.6 7.9-2.6 7.5zM824.0,184.3l.6-7.4 2.3 7.4-2.3 7.0zM828.2,184.3l.6-7.9 2.6 7.9-2.6 7.5zM832.3,184.3l.6-5.4 2.6 5.4-2.6 5.2zM836.5,184.3l.6-4.8 2.8 4.8-2.8 4.6zM840.6,184.3l.6-7.5 2.2 7.5-2.2 7.1zM844.8,184.3l.6-7.2 3.2 7.2-3.2 6.9zM848.9,184.3l.6-4.4 2.7 4.4-2.7 4.2zM853.1,184.3l.6-5.4 3.4 5.4-3.4 5.1zM857.2,184.3l.6-9.0 2.1 9.0-2.1 8.6zM861.4,184.3l.6-5.4 1.9 5.4-1.9 5.1zM865.5,184.3l.6-8.0 2.2 8.0-2.2 7.6zM869.7,184.3l.6-6.6 2.6 6.6-2.6 6.3zM873.8,184.3l.6-8.4 2.8 8.4-2.8 8.0zM878.0,184.3l.6-7.1 1.9 7.1-1.9 6.7zM882.1,184.3l.6-7.1 2.2 7.1-2.2 6.8zM886.3,184.3l.6-6.3 2.3 6.3-2.3 6.0zM890.4,184.3l.6-6.8 2.7 6.8-2.7 6.5zM894.6,184.3l.6-6.1 2.3 6.1-2.3 5.8zM898.7,184.3l.6-7.1 2.8 7.1-2.8 6.7zM902.9,184.3l.6-4.5 2.1 4.5-2.1 4.3zM907.0,184.3l.6-7.6 3.4 7.6-3.4 7.2zM911.2,184.3l.6-7.6 2.7 7.6-2.7 7.2zM915.3,184.3l.6-4.5 3.1 4.5-3.1 4.2zM919.5,184.3l.6-5.9 2.7 5.9-2.7 5.6zM923.6,184.3l.6-8.7 2.9 8.7-2.9 8.3zM927.8,184.3l.6-6.1 3.4 6.1-3.4 5.8zM931.9,184.3l.6-5.8 2.4 5.8-2.4 5.5zM936.1,184.3l.6-7.5 2.0 7.5-2.0 7.1zM940.2,184.3l.6-6.8 3.2 6.8-3.2 6.5zM944.4,184.3l.6-4.6 3.2 4.6-3.2 4.4zM948.5,184.3l.6-6.9 2.5 6.9-2.5 6.6zM952.7,184.3l.6-5.4 3.1 5.4-3.1 5.2zM956.8,184.3l.6-9.6 1.9 9.6-1.9 9.1zM961.0,184.3l.6-6.1 2.7 6.1-2.7 5.8zM965.1,184.3l.6-6.2 2.3 6.2-2.3 5.9zM969.3,184.3l.6-5.0 2.8 5.0-2.8 4.7zM973.4,184.3l.6-9.2 1.8 9.2-1.8 8.7zM977.6,184.3l.6-5.2 3.2 5.2-3.2 5.0zM981.7,184.3l.6-7.3 2.9 7.3-2.9 6.9zM985.9,184.3l.6-4.5 3.0 4.5-3.0 4.3zM990.0,184.3l.6-9.9 3.6 9.9-3.6 9.4zM994.2,184.3l.6-6.9 1.7 6.9-1.7 6.6zM998.3,184.3l.6-7.4 2.1 7.4-2.1 7.1zM1002.5,184.3l.6-6.7 3.5 6.7-3.5 6.4zM1006.6,184.3l.6-8.7 1.9 8.7-1.9 8.3zM1010.8,184.3l.6-5.5 3.4 5.5-3.4 5.2zM1014.9,184.3l.6-4.9 2.8 4.9-2.8 4.7zM1019.1,184.3l.6-5.9 1.9 5.9-1.9 5.6zM1023.2,184.3l.6-8.3 1.7 8.3-1.7 7.9zM1027.4,184.3l.6-4.8 2.4 4.8-2.4 4.6zM1031.5,184.3l.6-4.7 1.8 4.7-1.8 4.4zM1035.7,184.3l.6-6.5 3.1 6.5-3.1 6.1zM1039.8,184.3l.6-9.5 1.9 9.5-1.9 9.0zM1044.0,184.3l.6-6.0 2.2 6.0-2.2 5.7zM1048.1,184.3l.6-6.6 2.6 6.6-2.6 6.2zM1052.3,184.3l.6-7.8 2.4 7.8-2.4 7.4zM1056.4,184.3l.6-5.8 3.0 5.8-3.0 5.5zM1060.6,184.3l.6-4.9 2.9 4.9-2.9 4.7zM1064.7,184.3l.6-6.2 3.4 6.2-3.4 5.9zM1068.9,184.3l.6-6.4 2.8 6.4-2.8 6.1zM1073.0,184.3l.6-6.7 2.7 6.7-2.7 6.4zM1077.2,184.3l.6-5.3 3.1 5.3-3.1 5.0zM1081.3,184.3l.6-6.3 1.9 6.3-1.9 5.9zM1085.5,184.3l.6-5.2 2.4 5.2-2.4 5.0zM1089.6,184.3l.6-8.8 2.0 8.8-2.0 8.4zM1093.8,184.3l.6-7.0 2.9 7.0-2.9 6.6zM1097.9,184.3l.6-4.7 2.9 4.7-2.9 4.5zM1102.1,184.3l.6-4.7 1.9 4.7-1.9 4.5zM1106.2,184.3l.6-8.2 2.1 8.2-2.1 7.8zM1110.4,184.3l.6-7.6 2.6 7.6-2.6 7.2zM1114.5,184.3l.6-5.6 3.2 5.6-3.2 5.3zM1118.7,184.3l.6-4.5 3.0 4.5-3.0 4.3zM1122.8,184.3l.6-5.7 1.9 5.7-1.9 5.5zM1127.0,184.3l.6-7.8 2.9 7.8-2.9 7.4zM1131.1,184.3l.6-5.2 1.9 5.2-1.9 4.9zM1135.3,184.3l.6-7.9 2.9 7.9-2.9 7.5zM1139.4,184.3l.6-9.2 1.9 9.2-1.9 8.7zM1143.6,184.3l.6-6.6 2.3 6.6-2.3 6.3zM1147.7,184.3l.6-5.2 2.3 5.2-2.3 5.0zM1151.9,184.3l.6-6.6 2.3 6.6-2.3 6.3zM1156.0,184.3l.6-7.2 1.9 7.2-1.9 6.9zM1160.2,184.3l.6-7.4 2.9 7.4-2.9 7.0zM1164.3,184.3l.6-7.3 2.5 7.3-2.5 6.9zM1168.5,184.3l.6-7.5 2.6 7.5-2.6 7.1zM1172.6,184.3l.6-8.2 2.7 8.2-2.7 7.8zM1176.8,184.3l.6-7.1 2.4 7.1-2.4 6.7zM1180.9,184.3l.6-4.7 1.7 4.7-1.7 4.5zM1185.1,184.3l.6-5.1 1.7 5.1-1.7 4.9zM1189.2,184.3l.6-9.5 2.6 9.5-2.6 9.0zM1193.4,184.3l.6-7.1 1.6 7.1-1.6 6.8zM1197.5,184.3l.6-6.1 3.3 6.1-3.3 5.8zM1201.7,184.3l.6-6.6 2.5 6.6-2.5 6.3zM1205.8,184.3l.6-7.6 1.8 7.6-1.8 7.2zM1210.0,184.3l.6-5.0 1.9 5.0-1.9 4.7zM1214.1,184.3l.6-5.7 2.4 5.7-2.4 5.5zM1218.3,184.3l.6-7.6 1.9 7.6-1.9 7.2zM1222.4,184.3l.6-6.6 2.2 6.6-2.2 6.3zM1226.6,184.3l.6-5.0 2.2 5.0-2.2 4.7zM1230.7,184.3l.6-5.2 2.6 5.2-2.6 5.0zM1234.9,184.3l.6-4.5 3.4 4.5-3.4 4.3zM1239.0,184.3l.6-7.2 3.4 7.2-3.4 6.8zM1243.2,184.3l.6-6.9 2.9 6.9-2.9 6.5zM1247.3,184.3l.6-6.1 3.5 6.1-3.5 5.8zM1251.5,184.3l.6-4.8 2.9 4.8-2.9 4.6zM1255.6,184.3l.6-6.8 2.9 6.8-2.9 6.5zM1259.8,184.3l.6-7.0 2.0 7.0-2.0 6.7z" stroke="#5c1c36" stroke-width="0.7" fill="#5c1c36"/><path d="M275,208.4H1263M276.2,208.4l.6-5.1 2.4 5.1-2.4 4.8zM280.4,208.4l.6-3.5 1.5 3.5-1.5 3.3zM284.5,208.4l.6-3.1 2.1 3.1-2.1 2.9zM288.7,208.4l.6-3.4 2.3 3.4-2.3 3.3zM292.8,208.4l.6-4.0 2.3 4.0-2.3 3.8zM297.0,208.4l.6-3.0 2.4 3.0-2.4 2.9zM301.1,208.4l.6-4.9 1.8 4.9-1.8 4.7zM305.3,208.4l.6-3.6 2.2 3.6-2.2 3.4zM309.4,208.4l.6-3.6 2.0 3.6-2.0 3.4zM313.6,208.4l.6-4.1 1.5 4.1-1.5 3.9zM317.7,208.4l.6-5.1 2.2 5.1-2.2 4.9zM321.9,208.4l.6-4.2 1.7 4.2-1.7 4.0zM326.0,208.4l.6-3.3 2.4 3.3-2.4 3.2zM330.2,208.4l.6-4.1 1.8 4.1-1.8 3.9zM334.3,208.4l.6-3.3 1.4 3.3-1.4 3.2zM338.5,208.4l.6-3.8 1.6 3.8-1.6 3.6zM342.6,208.4l.6-5.5 2.0 5.5-2.0 5.2zM346.8,208.4l.6-2.9 2.1 2.9-2.1 2.7zM350.9,208.4l.6-4.0 2.5 4.0-2.5 3.8zM355.1,208.4l.6-4.3 1.9 4.3-1.9 4.1zM359.2,208.4l.6-4.7 2.2 4.7-2.2 4.5zM363.4,208.4l.6-4.1 2.6 4.1-2.6 3.9zM367.5,208.4l.6-3.2 1.7 3.2-1.7 3.0zM371.7,208.4l.6-3.7 1.6 3.7-1.6 3.5zM375.8,208.4l.6-4.6 1.3 4.6-1.3 4.4zM380.0,208.4l.6-4.3 1.9 4.3-1.9 4.0zM384.1,208.4l.6-3.4 2.1 3.4-2.1 3.2zM388.3,208.4l.6-3.1 1.4 3.1-1.4 3.0zM392.4,208.4l.6-4.3 1.4 4.3-1.4 4.1zM396.6,208.4l.6-2.9 2.4 2.9-2.4 2.8zM400.7,208.4l.6-4.9 1.2 4.9-1.2 4.6zM404.9,208.4l.6-4.1 1.2 4.1-1.2 3.8zM409.0,208.4l.6-3.9 2.5 3.9-2.5 3.7zM413.2,208.4l.6-3.7 1.6 3.7-1.6 3.5zM417.3,208.4l.6-4.0 1.7 4.0-1.7 3.8zM421.5,208.4l.6-2.7 2.6 2.7-2.6 2.6zM425.6,208.4l.6-3.2 1.8 3.2-1.8 3.1zM429.8,208.4l.6-4.0 1.7 4.0-1.7 3.8zM433.9,208.4l.6-5.6 1.5 5.6-1.5 5.3zM438.1,208.4l.6-4.5 2.5 4.5-2.5 4.2zM442.2,208.4l.6-4.8 2.5 4.8-2.5 4.6zM446.4,208.4l.6-3.4 2.4 3.4-2.4 3.2zM450.5,208.4l.6-5.1 1.9 5.1-1.9 4.9zM454.7,208.4l.6-3.4 2.2 3.4-2.2 3.3zM458.8,208.4l.6-4.1 1.3 4.1-1.3 3.9zM463.0,208.4l.6-4.0 1.5 4.0-1.5 3.8zM467.1,208.4l.6-4.3 2.3 4.3-2.3 4.1zM471.3,208.4l.6-2.8 1.2 2.8-1.2 2.7zM475.4,208.4l.6-3.4 2.0 3.4-2.0 3.2zM479.6,208.4l.6-3.2 1.5 3.2-1.5 3.0zM483.7,208.4l.6-4.2 2.5 4.2-2.5 4.0zM487.9,208.4l.6-3.0 1.8 3.0-1.8 2.8zM492.0,208.4l.6-5.3 2.1 5.3-2.1 5.1zM496.2,208.4l.6-3.0 1.9 3.0-1.9 2.9zM500.3,208.4l.6-4.3 1.4 4.3-1.4 4.1zM504.5,208.4l.6-3.2 1.6 3.2-1.6 3.1zM508.6,208.4l.6-5.1 1.6 5.1-1.6 4.9zM512.8,208.4l.6-3.8 2.6 3.8-2.6 3.6zM516.9,208.4l.6-5.4 1.7 5.4-1.7 5.2zM521.1,208.4l.6-3.7 1.6 3.7-1.6 3.5zM525.2,208.4l.6-4.1 1.9 4.1-1.9 3.9zM529.4,208.4l.6-4.1 2.6 4.1-2.6 3.9zM533.5,208.4l.6-3.8 1.2 3.8-1.2 3.6zM537.7,208.4l.6-3.4 1.2 3.4-1.2 3.2zM541.8,208.4l.6-3.2 2.3 3.2-2.3 3.0zM546.0,208.4l.6-2.7 2.2 2.7-2.2 2.6zM550.1,208.4l.6-4.0 2.6 4.0-2.6 3.8zM554.3,208.4l.6-4.2 1.2 4.2-1.2 4.0zM558.4,208.4l.6-3.6 2.6 3.6-2.6 3.4zM562.6,208.4l.6-3.7 1.8 3.7-1.8 3.5zM566.7,208.4l.6-5.1 2.4 5.1-2.4 4.8zM570.9,208.4l.6-3.5 1.9 3.5-1.9 3.3zM575.0,208.4l.6-3.3 1.7 3.3-1.7 3.2zM579.2,208.4l.6-2.8 2.1 2.8-2.1 2.6zM583.3,208.4l.6-4.6 1.4 4.6-1.4 4.4zM587.5,208.4l.6-3.7 1.3 3.7-1.3 3.6zM591.6,208.4l.6-3.4 2.1 3.4-2.1 3.2zM595.8,208.4l.6-3.4 2.5 3.4-2.5 3.2zM599.9,208.4l.6-4.7 2.2 4.7-2.2 4.5zM604.1,208.4l.6-2.7 2.4 2.7-2.4 2.6zM608.2,208.4l.6-3.3 2.1 3.3-2.1 3.1zM612.4,208.4l.6-4.3 2.5 4.3-2.5 4.1zM616.5,208.4l.6-5.4 1.8 5.4-1.8 5.1zM620.7,208.4l.6-3.9 2.3 3.9-2.3 3.7zM624.8,208.4l.6-3.4 2.6 3.4-2.6 3.3zM629.0,208.4l.6-4.3 1.8 4.3-1.8 4.1zM633.1,208.4l.6-5.1 1.8 5.1-1.8 4.8zM637.3,208.4l.6-3.0 2.2 3.0-2.2 2.9zM641.4,208.4l.6-3.3 2.4 3.3-2.4 3.1zM645.6,208.4l.6-4.5 1.6 4.5-1.6 4.2zM649.7,208.4l.6-5.5 1.3 5.5-1.3 5.2zM653.9,208.4l.6-4.2 1.6 4.2-1.6 4.0zM658.0,208.4l.6-5.5 1.8 5.5-1.8 5.3zM662.2,208.4l.6-4.3 1.2 4.3-1.2 4.1zM666.3,208.4l.6-3.3 2.4 3.3-2.4 3.1zM670.5,208.4l.6-3.8 2.0 3.8-2.0 3.6zM674.6,208.4l.6-3.2 1.4 3.2-1.4 3.0zM678.8,208.4l.6-3.2 1.2 3.2-1.2 3.1zM682.9,208.4l.6-5.6 2.3 5.6-2.3 5.3zM687.1,208.4l.6-4.4 2.2 4.4-2.2 4.2zM691.2,208.4l.6-4.0 1.3 4.0-1.3 3.8zM695.4,208.4l.6-4.0 1.3 4.0-1.3 3.8zM699.5,208.4l.6-4.5 1.8 4.5-1.8 4.3zM703.7,208.4l.6-3.5 1.3 3.5-1.3 3.3zM707.8,208.4l.6-3.3 1.9 3.3-1.9 3.1zM712.0,208.4l.6-2.5 1.9 2.5-1.9 2.4zM716.1,208.4l.6-3.5 1.6 3.5-1.6 3.3zM720.3,208.4l.6-2.8 2.0 2.8-2.0 2.6zM724.4,208.4l.6-4.1 1.5 4.1-1.5 3.9zM728.6,208.4l.6-2.9 2.0 2.9-2.0 2.8zM732.7,208.4l.6-5.4 1.8 5.4-1.8 5.1zM736.9,208.4l.6-2.8 1.6 2.8-1.6 2.7zM741.0,208.4l.6-3.7 2.0 3.7-2.0 3.5zM745.2,208.4l.6-4.1 2.0 4.1-2.0 3.9zM749.3,208.4l.6-3.6 1.6 3.6-1.6 3.4zM753.5,208.4l.6-3.2 1.8 3.2-1.8 3.1zM757.6,208.4l.6-4.1 2.6 4.1-2.6 3.9zM761.8,208.4l.6-3.6 2.1 3.6-2.1 3.4zM765.9,208.4l.6-4.9 2.1 4.9-2.1 4.7zM770.1,208.4l.6-4.1 1.7 4.1-1.7 3.9zM774.2,208.4l.6-4.8 2.6 4.8-2.6 4.5zM778.4,208.4l.6-2.8 2.1 2.8-2.1 2.7zM782.5,208.4l.6-4.1 1.2 4.1-1.2 3.9zM786.7,208.4l.6-2.6 2.3 2.6-2.3 2.4zM790.8,208.4l.6-3.4 2.2 3.4-2.2 3.2zM795.0,208.4l.6-2.7 1.7 2.7-1.7 2.5zM799.1,208.4l.6-3.2 2.0 3.2-2.0 3.0zM803.3,208.4l.6-4.1 1.5 4.1-1.5 3.9zM807.4,208.4l.6-4.5 2.5 4.5-2.5 4.3zM811.6,208.4l.6-3.1 1.9 3.1-1.9 2.9zM815.7,208.4l.6-4.9 2.4 4.9-2.4 4.7zM819.9,208.4l.6-2.8 2.1 2.8-2.1 2.7zM824.0,208.4l.6-3.4 1.3 3.4-1.3 3.2zM828.2,208.4l.6-4.5 1.2 4.5-1.2 4.2zM832.3,208.4l.6-5.4 2.3 5.4-2.3 5.2zM836.5,208.4l.6-3.8 2.2 3.8-2.2 3.7zM840.6,208.4l.6-4.7 1.6 4.7-1.6 4.5zM844.8,208.4l.6-3.4 1.5 3.4-1.5 3.2zM848.9,208.4l.6-5.3 2.3 5.3-2.3 5.0zM853.1,208.4l.6-4.1 1.5 4.1-1.5 3.9zM857.2,208.4l.6-4.6 1.5 4.6-1.5 4.4zM861.4,208.4l.6-4.1 2.3 4.1-2.3 3.9zM865.5,208.4l.6-5.6 2.2 5.6-2.2 5.3zM869.7,208.4l.6-3.9 2.3 3.9-2.3 3.7zM873.8,208.4l.6-3.3 2.0 3.3-2.0 3.2zM878.0,208.4l.6-2.5 1.7 2.5-1.7 2.4zM882.1,208.4l.6-3.4 2.6 3.4-2.6 3.2zM886.3,208.4l.6-2.5 2.5 2.5-2.5 2.4zM890.4,208.4l.6-5.5 1.8 5.5-1.8 5.2zM894.6,208.4l.6-4.2 1.2 4.2-1.2 4.0zM898.7,208.4l.6-3.4 1.2 3.4-1.2 3.3zM902.9,208.4l.6-2.6 1.2 2.6-1.2 2.5zM907.0,208.4l.6-5.2 1.3 5.2-1.3 4.9zM911.2,208.4l.6-3.7 1.6 3.7-1.6 3.5zM915.3,208.4l.6-3.4 1.8 3.4-1.8 3.3zM919.5,208.4l.6-2.8 2.6 2.8-2.6 2.7zM923.6,208.4l.6-4.1 2.0 4.1-2.0 3.9zM927.8,208.4l.6-3.6 2.1 3.6-2.1 3.4zM931.9,208.4l.6-4.3 1.6 4.3-1.6 4.1zM936.1,208.4l.6-2.8 2.5 2.8-2.5 2.6zM940.2,208.4l.6-3.6 1.8 3.6-1.8 3.4zM944.4,208.4l.6-4.1 2.0 4.1-2.0 3.9zM948.5,208.4l.6-5.5 2.4 5.5-2.4 5.2zM952.7,208.4l.6-3.5 1.3 3.5-1.3 3.3zM956.8,208.4l.6-4.6 1.9 4.6-1.9 4.4zM961.0,208.4l.6-4.2 1.9 4.2-1.9 4.0zM965.1,208.4l.6-4.9 2.4 4.9-2.4 4.6zM969.3,208.4l.6-3.4 2.4 3.4-2.4 3.3zM973.4,208.4l.6-5.4 1.4 5.4-1.4 5.1zM977.6,208.4l.6-4.3 2.5 4.3-2.5 4.1zM981.7,208.4l.6-5.3 1.7 5.3-1.7 5.0zM985.9,208.4l.6-3.0 1.3 3.0-1.3 2.8zM990.0,208.4l.6-4.0 2.4 4.0-2.4 3.8zM994.2,208.4l.6-3.2 1.2 3.2-1.2 3.0zM998.3,208.4l.6-3.9 1.3 3.9-1.3 3.7zM1002.5,208.4l.6-3.7 2.3 3.7-2.3 3.5zM1006.6,208.4l.6-5.4 1.3 5.4-1.3 5.2zM1010.8,208.4l.6-3.2 1.3 3.2-1.3 3.1zM1014.9,208.4l.6-5.4 2.4 5.4-2.4 5.1zM1019.1,208.4l.6-3.5 2.6 3.5-2.6 3.4zM1023.2,208.4l.6-4.4 2.3 4.4-2.3 4.2zM1027.4,208.4l.6-3.5 1.7 3.5-1.7 3.3zM1031.5,208.4l.6-5.6 2.4 5.6-2.4 5.3zM1035.7,208.4l.6-3.7 2.5 3.7-2.5 3.5zM1039.8,208.4l.6-4.7 2.3 4.7-2.3 4.5zM1044.0,208.4l.6-2.6 1.3 2.6-1.3 2.5zM1048.1,208.4l.6-3.4 2.1 3.4-2.1 3.2zM1052.3,208.4l.6-3.9 1.4 3.9-1.4 3.7zM1056.4,208.4l.6-4.4 1.3 4.4-1.3 4.2zM1060.6,208.4l.6-3.9 2.3 3.9-2.3 3.7zM1064.7,208.4l.6-3.3 2.6 3.3-2.6 3.1zM1068.9,208.4l.6-3.8 1.3 3.8-1.3 3.6zM1073.0,208.4l.6-4.0 1.4 4.0-1.4 3.8zM1077.2,208.4l.6-3.9 2.5 3.9-2.5 3.8zM1081.3,208.4l.6-3.5 1.4 3.5-1.4 3.4zM1085.5,208.4l.6-3.7 2.4 3.7-2.4 3.6zM1089.6,208.4l.6-5.0 1.8 5.0-1.8 4.7zM1093.8,208.4l.6-2.7 2.1 2.7-2.1 2.6zM1097.9,208.4l.6-4.2 2.4 4.2-2.4 4.0zM1102.1,208.4l.6-3.6 2.3 3.6-2.3 3.5zM1106.2,208.4l.6-5.6 2.1 5.6-2.1 5.3zM1110.4,208.4l.6-4.3 1.6 4.3-1.6 4.1zM1114.5,208.4l.6-3.1 2.5 3.1-2.5 2.9zM1118.7,208.4l.6-2.5 2.6 2.5-2.6 2.4zM1122.8,208.4l.6-4.2 1.2 4.2-1.2 4.0zM1127.0,208.4l.6-3.0 2.2 3.0-2.2 2.9zM1131.1,208.4l.6-4.1 2.1 4.1-2.1 3.9zM1135.3,208.4l.6-2.7 2.4 2.7-2.4 2.5zM1139.4,208.4l.6-4.0 2.4 4.0-2.4 3.8zM1143.6,208.4l.6-2.8 2.2 2.8-2.2 2.6zM1147.7,208.4l.6-4.3 1.8 4.3-1.8 4.1zM1151.9,208.4l.6-2.5 1.9 2.5-1.9 2.4zM1156.0,208.4l.6-5.2 1.3 5.2-1.3 5.0zM1160.2,208.4l.6-3.4 1.2 3.4-1.2 3.2zM1164.3,208.4l.6-5.6 2.6 5.6-2.6 5.3zM1168.5,208.4l.6-3.8 1.9 3.8-1.9 3.7zM1172.6,208.4l.6-3.3 1.3 3.3-1.3 3.1zM1176.8,208.4l.6-3.9 2.3 3.9-2.3 3.7zM1180.9,208.4l.6-5.6 2.4 5.6-2.4 5.3zM1185.1,208.4l.6-3.4 1.5 3.4-1.5 3.2zM1189.2,208.4l.6-4.5 1.7 4.5-1.7 4.2zM1193.4,208.4l.6-3.6 2.5 3.6-2.5 3.4zM1197.5,208.4l.6-4.2 2.6 4.2-2.6 4.0zM1201.7,208.4l.6-3.9 1.2 3.9-1.2 3.7zM1205.8,208.4l.6-5.0 2.1 5.0-2.1 4.7zM1210.0,208.4l.6-3.7 1.2 3.7-1.2 3.5zM1214.1,208.4l.6-5.3 1.9 5.3-1.9 5.1zM1218.3,208.4l.6-3.6 1.4 3.6-1.4 3.4zM1222.4,208.4l.6-3.2 1.2 3.2-1.2 3.0zM1226.6,208.4l.6-2.9 1.6 2.9-1.6 2.8zM1230.7,208.4l.6-3.5 1.2 3.5-1.2 3.3zM1234.9,208.4l.6-3.9 2.2 3.9-2.2 3.8zM1239.0,208.4l.6-5.3 1.5 5.3-1.5 5.1zM1243.2,208.4l.6-4.0 2.0 4.0-2.0 3.8zM1247.3,208.4l.6-3.3 2.5 3.3-2.5 3.2zM1251.5,208.4l.6-3.2 1.4 3.2-1.4 3.0zM1255.6,208.4l.6-3.6 2.5 3.6-2.5 3.4zM1259.8,208.4l.6-2.9 1.7 2.9-1.7 2.8z" stroke="#5c1c36" stroke-width="0.7" fill="#5c1c36"/><path d="M286.7,252.6l.6-2.8 1.1 2.8-1.1 2.6zM303.4,252.6l.6-3.0 1.0 3.0-1.0 2.8zM320.0,252.6l.6-2.9 1.4 2.9-1.4 2.8zM336.6,252.6l.6-2.6 1.6 2.6-1.6 2.5zM353.2,252.6l.6-2.6 1.5 2.6-1.5 2.5zM369.9,252.6l.6-2.6 1.1 2.6-1.1 2.5zM386.5,252.6l.6-2.8 2.0 2.8-2.0 2.7zM403.1,252.6l.6-2.6 1.2 2.6-1.2 2.5zM419.7,252.6l.6-3.0 2.2 3.0-2.2 2.8zM436.4,252.6l.6-2.9 1.5 2.9-1.5 2.8zM453.0,252.6l.6-3.2 1.0 3.2-1.0 3.0zM469.6,252.6l.6-3.1 1.3 3.1-1.3 3.0zM486.2,252.6l.6-2.7 1.1 2.7-1.1 2.5zM502.9,252.6l.6-2.8 2.0 2.8-2.0 2.6zM519.5,252.6l.6-2.7 1.7 2.7-1.7 2.5zM536.1,252.6l.6-3.0 1.4 3.0-1.4 2.8zM552.7,252.6l.6-2.9 1.0 2.9-1.0 2.8zM569.4,252.6l.6-2.6 1.2 2.6-1.2 2.5zM586.0,252.6l.6-3.0 1.5 3.0-1.5 2.8zM602.6,252.6l.6-2.8 1.7 2.8-1.7 2.6zM619.2,252.6l.6-2.9 1.3 2.9-1.3 2.7zM635.9,252.6l.6-3.1 1.9 3.1-1.9 2.9zM652.5,252.6l.6-2.7 1.7 2.7-1.7 2.6zM669.1,252.6l.6-2.9 2.1 2.9-2.1 2.8zM685.7,252.6l.6-3.0 1.3 3.0-1.3 2.9zM702.4,252.6l.6-3.2 1.1 3.2-1.1 3.0zM719.0,252.6l.6-2.8 1.9 2.8-1.9 2.7zM735.6,252.6l.6-2.7 1.6 2.7-1.6 2.5zM752.2,252.6l.6-2.6 1.8 2.6-1.8 2.5zM768.9,252.6l.6-3.0 1.7 3.0-1.7 2.9zM785.5,252.6l.6-3.1 1.4 3.1-1.4 3.0zM802.1,252.6l.6-3.0 1.7 3.0-1.7 2.9zM818.7,252.6l.6-2.9 1.5 2.9-1.5 2.8zM835.4,252.6l.6-3.1 2.2 3.1-2.2 2.9zM852.0,252.6l.6-2.9 1.8 2.9-1.8 2.7zM868.6,252.6l.6-2.6 1.9 2.6-1.9 2.5zM885.2,252.6l.6-3.0 2.3 3.0-2.3 2.8zM901.9,252.6l.6-3.1 1.3 3.1-1.3 2.9zM918.5,252.6l.6-2.8 1.8 2.8-1.8 2.7zM935.1,252.6l.6-2.6 1.5 2.6-1.5 2.4zM951.7,252.6l.6-2.7 1.1 2.7-1.1 2.5zM968.4,252.6l.6-2.6 2.0 2.6-2.0 2.5zM985.0,252.6l.6-2.6 1.3 2.6-1.3 2.5zM1001.6,252.6l.6-2.8 2.1 2.8-2.1 2.7zM1018.2,252.6l.6-2.6 1.5 2.6-1.5 2.5zM1034.9,252.6l.6-2.9 2.1 2.9-2.1 2.8zM1051.5,252.6l.6-3.1 2.1 3.1-2.1 2.9zM1068.1,252.6l.6-2.7 1.5 2.7-1.5 2.6zM1084.7,252.6l.6-2.8 2.1 2.8-2.1 2.7zM1101.4,252.6l.6-3.2 1.1 3.2-1.1 3.0zM1118.0,252.6l.6-2.7 1.2 2.7-1.2 2.5zM1134.6,252.6l.6-2.7 1.6 2.7-1.6 2.6zM1151.2,252.6l.6-2.9 1.3 2.9-1.3 2.8zM1167.9,252.6l.6-2.6 1.5 2.6-1.5 2.4zM1184.5,252.6l.6-2.8 1.7 2.8-1.7 2.7zM1201.1,252.6l.6-3.2 1.9 3.2-1.9 3.0zM1217.7,252.6l.6-2.9 1.8 2.9-1.8 2.7zM1234.4,252.6l.6-3.0 1.0 3.0-1.0 2.8zM1251.0,252.6l.6-3.1 2.0 3.1-2.0 3.0z" stroke="#5c1c36" stroke-width="0.7" fill="#5c1c36"/><path d="M286.7,263.6l.6-2.7 2.2 2.7-2.2 2.6zM303.4,263.6l.6-2.6 1.9 2.6-1.9 2.5zM320.0,263.6l.6-2.6 1.3 2.6-1.3 2.5zM336.6,263.6l.6-3.2 1.2 3.2-1.2 3.0zM353.2,263.6l.6-3.0 1.5 3.0-1.5 2.8zM369.9,263.6l.6-2.9 1.6 2.9-1.6 2.7zM386.5,263.6l.6-2.7 2.0 2.7-2.0 2.5zM403.1,263.6l.6-2.6 1.2 2.6-1.2 2.5zM419.7,263.6l.6-2.6 1.3 2.6-1.3 2.4zM436.4,263.6l.6-2.8 2.1 2.8-2.1 2.7zM453.0,263.6l.6-2.8 1.1 2.8-1.1 2.7zM469.6,263.6l.6-2.7 2.2 2.7-2.2 2.6zM486.2,263.6l.6-2.6 1.8 2.6-1.8 2.5zM502.9,263.6l.6-2.8 1.8 2.8-1.8 2.7zM519.5,263.6l.6-2.8 1.9 2.8-1.9 2.6zM536.1,263.6l.6-2.9 1.8 2.9-1.8 2.7zM552.7,263.6l.6-3.1 1.7 3.1-1.7 3.0zM569.4,263.6l.6-2.7 1.0 2.7-1.0 2.5zM586.0,263.6l.6-3.2 1.6 3.2-1.6 3.0zM602.6,263.6l.6-2.7 2.2 2.7-2.2 2.5zM619.2,263.6l.6-2.9 1.9 2.9-1.9 2.8zM635.9,263.6l.6-3.1 1.3 3.1-1.3 3.0zM652.5,263.6l.6-2.8 2.1 2.8-2.1 2.6zM669.1,263.6l.6-2.6 1.9 2.6-1.9 2.5zM685.7,263.6l.6-2.6 1.9 2.6-1.9 2.5zM702.4,263.6l.6-3.0 2.2 3.0-2.2 2.9zM719.0,263.6l.6-3.1 1.6 3.1-1.6 2.9zM735.6,263.6l.6-2.7 1.1 2.7-1.1 2.6zM752.2,263.6l.6-2.9 1.6 2.9-1.6 2.8zM768.9,263.6l.6-2.6 2.1 2.6-2.1 2.5zM785.5,263.6l.6-2.9 1.9 2.9-1.9 2.7zM802.1,263.6l.6-2.7 1.3 2.7-1.3 2.6zM818.7,263.6l.6-2.6 1.4 2.6-1.4 2.4zM835.4,263.6l.6-2.7 1.5 2.7-1.5 2.6zM852.0,263.6l.6-2.8 2.0 2.8-2.0 2.7zM868.6,263.6l.6-3.1 1.2 3.1-1.2 3.0zM885.2,263.6l.6-2.8 1.2 2.8-1.2 2.7zM901.9,263.6l.6-3.0 2.2 3.0-2.2 2.8zM918.5,263.6l.6-2.7 2.0 2.7-2.0 2.6zM935.1,263.6l.6-2.8 1.0 2.8-1.0 2.6zM951.7,263.6l.6-3.0 1.4 3.0-1.4 2.9zM968.4,263.6l.6-2.7 1.5 2.7-1.5 2.5zM985.0,263.6l.6-2.7 1.5 2.7-1.5 2.6zM1001.6,263.6l.6-2.8 1.5 2.8-1.5 2.7zM1018.2,263.6l.6-2.9 1.3 2.9-1.3 2.8zM1034.9,263.6l.6-2.6 1.1 2.6-1.1 2.5zM1051.5,263.6l.6-2.6 1.6 2.6-1.6 2.5zM1068.1,263.6l.6-2.8 2.0 2.8-2.0 2.7zM1084.7,263.6l.6-2.9 1.9 2.9-1.9 2.7zM1101.4,263.6l.6-3.2 1.0 3.2-1.0 3.0zM1118.0,263.6l.6-2.6 1.1 2.6-1.1 2.4zM1134.6,263.6l.6-2.8 1.7 2.8-1.7 2.7zM1151.2,263.6l.6-3.0 1.4 3.0-1.4 2.9zM1167.9,263.6l.6-3.2 0.9 3.2-0.9 3.0zM1184.5,263.6l.6-3.1 1.2 3.1-1.2 2.9zM1201.1,263.6l.6-3.1 1.0 3.1-1.0 3.0zM1217.7,263.6l.6-3.2 1.9 3.2-1.9 3.0zM1234.4,263.6l.6-3.2 1.7 3.2-1.7 3.0zM1251.0,263.6l.6-2.7 2.2 2.7-2.2 2.5z" stroke="#5c1c36" stroke-width="0.7" fill="#5c1c36"/><path d="M275,282.7H1263M276.0,282.7l.6-4.4 3.1 4.4-3.1 4.2zM279.2,282.7l.6-3.1 4.3 3.1-4.3 3.0zM282.4,282.7l.6-2.6 3.4 2.6-3.4 2.5zM285.6,282.7l.6-6.1 2.4 6.1-2.4 5.8zM288.8,282.7l.6-4.8 3.7 4.8-3.7 4.5zM292.0,282.7l.6-2.8 3.1 2.8-3.1 2.6zM295.2,282.7l.6-5.3 3.3 5.3-3.3 5.1zM298.4,282.7l.6-5.4 2.6 5.4-2.6 5.2zM301.6,282.7l.6-3.5 2.5 3.5-2.5 3.4zM304.8,282.7l.6-4.6 4.4 4.6-4.4 4.3zM308.0,282.7l.6-4.9 4.1 4.9-4.1 4.7zM311.2,282.7l.6-4.1 4.0 4.1-4.0 3.9zM314.4,282.7l.6-3.0 2.9 3.0-2.9 2.8zM317.6,282.7l.6-5.2 3.9 5.2-3.9 5.0zM320.8,282.7l.6-4.2 2.4 4.2-2.4 4.0zM324.0,282.7l.6-3.6 2.7 3.6-2.7 3.5zM327.2,282.7l.6-3.7 4.1 3.7-4.1 3.5zM330.4,282.7l.6-3.4 4.3 3.4-4.3 3.2zM333.6,282.7l.6-6.0 2.3 6.0-2.3 5.7zM336.8,282.7l.6-4.1 3.4 4.1-3.4 3.9zM340.0,282.7l.6-2.7 3.2 2.7-3.2 2.6zM352.8,282.7l.6-6.1 2.5 6.1-2.5 5.8zM356.0,282.7l.6-4.9 2.5 4.9-2.5 4.7zM359.2,282.7l.6-4.9 4.3 4.9-4.3 4.6zM362.4,282.7l.6-3.4 2.2 3.4-2.2 3.2zM365.6,282.7l.6-2.9 3.5 2.9-3.5 2.8zM368.8,282.7l.6-2.7 2.4 2.7-2.4 2.5zM372.0,282.7l.6-4.5 4.4 4.5-4.4 4.3zM375.2,282.7l.6-4.2 3.2 4.2-3.2 4.0zM378.4,282.7l.6-5.1 2.4 5.1-2.4 4.8zM381.6,282.7l.6-4.9 2.6 4.9-2.6 4.6zM384.8,282.7l.6-5.0 4.5 5.0-4.5 4.7zM388.0,282.7l.6-2.8 3.5 2.8-3.5 2.7zM391.2,282.7l.6-5.0 2.6 5.0-2.6 4.7zM394.4,282.7l.6-3.6 4.6 3.6-4.6 3.5zM397.6,282.7l.6-6.5 2.5 6.5-2.5 6.2zM400.8,282.7l.6-5.4 4.5 5.4-4.5 5.1zM404.0,282.7l.6-3.5 3.7 3.5-3.7 3.3zM407.2,282.7l.6-2.8 3.1 2.8-3.1 2.6zM410.4,282.7l.6-5.2 3.6 5.2-3.6 5.0zM413.6,282.7l.6-5.6 2.4 5.6-2.4 5.3zM416.8,282.7l.6-4.0 4.3 4.0-4.3 3.8zM420.0,282.7l.6-4.9 3.3 4.9-3.3 4.6zM423.2,282.7l.6-4.2 4.6 4.2-4.6 4.0zM426.4,282.7l.6-4.8 2.2 4.8-2.2 4.6zM429.6,282.7l.6-5.7 3.0 5.7-3.0 5.4zM432.8,282.7l.6-4.3 2.7 4.3-2.7 4.1zM436.0,282.7l.6-4.3 3.0 4.3-3.0 4.1zM439.2,282.7l.6-2.9 3.7 2.9-3.7 2.8zM442.4,282.7l.6-3.0 4.1 3.0-4.1 2.9zM445.6,282.7l.6-2.7 4.1 2.7-4.1 2.6zM448.8,282.7l.6-5.7 3.4 5.7-3.4 5.5zM452.0,282.7l.6-5.4 2.8 5.4-2.8 5.1zM455.2,282.7l.6-5.5 3.2 5.5-3.2 5.2zM458.4,282.7l.6-3.5 4.5 3.5-4.5 3.3zM461.6,282.7l.6-4.2 3.1 4.2-3.1 4.0zM464.8,282.7l.6-6.0 3.1 6.0-3.1 5.7zM468.0,282.7l.6-5.2 2.6 5.2-2.6 4.9zM471.2,282.7l.6-5.9 2.8 5.9-2.8 5.6zM474.4,282.7l.6-2.8 4.5 2.8-4.5 2.7zM477.6,282.7l.6-3.3 4.5 3.3-4.5 3.1zM480.8,282.7l.6-6.4 3.7 6.4-3.7 6.1zM484.0,282.7l.6-2.6 2.3 2.6-2.3 2.5zM487.2,282.7l.6-3.4 3.1 3.4-3.1 3.2zM490.4,282.7l.6-5.0 4.5 5.0-4.5 4.7zM493.6,282.7l.6-4.0 2.5 4.0-2.5 3.8zM496.8,282.7l.6-4.8 2.5 4.8-2.5 4.6zM500.0,282.7l.6-2.9 3.5 2.9-3.5 2.8zM503.2,282.7l.6-5.3 2.4 5.3-2.4 5.0zM506.4,282.7l.6-4.4 3.9 4.4-3.9 4.1zM509.6,282.7l.6-5.6 3.1 5.6-3.1 5.3zM512.8,282.7l.6-6.1 2.6 6.1-2.6 5.8zM516.0,282.7l.6-5.4 4.1 5.4-4.1 5.1zM519.2,282.7l.6-6.0 3.4 6.0-3.4 5.7zM532.0,282.7l.6-3.0 2.3 3.0-2.3 2.8zM535.2,282.7l.6-4.7 2.6 4.7-2.6 4.4zM538.4,282.7l.6-5.1 2.4 5.1-2.4 4.8zM541.6,282.7l.6-5.6 2.7 5.6-2.7 5.4zM544.8,282.7l.6-2.7 2.6 2.7-2.6 2.5zM548.0,282.7l.6-4.4 3.5 4.4-3.5 4.2zM551.2,282.7l.6-4.1 2.6 4.1-2.6 3.9zM554.4,282.7l.6-4.5 4.5 4.5-4.5 4.3zM557.6,282.7l.6-4.7 4.5 4.7-4.5 4.5zM560.8,282.7l.6-2.7 4.6 2.7-4.6 2.6zM564.0,282.7l.6-6.1 3.5 6.1-3.5 5.8zM567.2,282.7l.6-4.6 3.5 4.6-3.5 4.4zM570.4,282.7l.6-6.1 2.4 6.1-2.4 5.8zM573.6,282.7l.6-5.1 3.5 5.1-3.5 4.9zM576.8,282.7l.6-3.8 3.9 3.8-3.9 3.6zM580.0,282.7l.6-5.4 2.4 5.4-2.4 5.1zM583.2,282.7l.6-5.3 3.3 5.3-3.3 5.1zM586.4,282.7l.6-4.5 3.7 4.5-3.7 4.3zM589.6,282.7l.6-2.8 3.6 2.8-3.6 2.7zM592.8,282.7l.6-4.1 4.3 4.1-4.3 3.9zM596.0,282.7l.6-3.5 4.2 3.5-4.2 3.3zM599.2,282.7l.6-5.4 3.7 5.4-3.7 5.2zM602.4,282.7l.6-6.0 2.3 6.0-2.3 5.7zM605.6,282.7l.6-4.9 3.7 4.9-3.7 4.7zM608.8,282.7l.6-5.2 3.2 5.2-3.2 5.0zM612.0,282.7l.6-2.9 2.7 2.9-2.7 2.7zM615.2,282.7l.6-5.0 2.6 5.0-2.6 4.7zM618.4,282.7l.6-2.9 3.1 2.9-3.1 2.7zM621.6,282.7l.6-4.4 3.5 4.4-3.5 4.2zM624.8,282.7l.6-2.7 4.1 2.7-4.1 2.6zM628.0,282.7l.6-3.9 4.1 3.9-4.1 3.7zM631.2,282.7l.6-2.6 4.5 2.6-4.5 2.5zM634.4,282.7l.6-4.9 4.5 4.9-4.5 4.7zM637.6,282.7l.6-6.4 4.2 6.4-4.2 6.1zM640.8,282.7l.6-3.0 3.0 3.0-3.0 2.9zM644.0,282.7l.6-3.5 4.1 3.5-4.1 3.3zM647.2,282.7l.6-3.3 2.7 3.3-2.7 3.2zM650.4,282.7l.6-3.0 2.5 3.0-2.5 2.9zM653.6,282.7l.6-6.3 4.5 6.3-4.5 5.9zM656.8,282.7l.6-4.1 4.0 4.1-4.0 3.8zM660.0,282.7l.6-4.4 3.5 4.4-3.5 4.2zM663.2,282.7l.6-4.0 3.7 4.0-3.7 3.8zM666.4,282.7l.6-3.5 2.8 3.5-2.8 3.3zM669.6,282.7l.6-4.6 2.7 4.6-2.7 4.4zM672.8,282.7l.6-4.3 4.5 4.3-4.5 4.1zM676.0,282.7l.6-2.7 2.4 2.7-2.4 2.6zM679.2,282.7l.6-5.7 2.3 5.7-2.3 5.4zM682.4,282.7l.6-3.6 4.2 3.6-4.2 3.4zM685.6,282.7l.6-5.0 2.7 5.0-2.7 4.7zM688.8,282.7l.6-2.8 2.9 2.8-2.9 2.7zM692.0,282.7l.6-3.8 4.1 3.8-4.1 3.6zM695.2,282.7l.6-6.4 4.1 6.4-4.1 6.1zM698.4,282.7l.6-6.1 4.4 6.1-4.4 5.8zM708.0,282.7l.6-6.0 4.4 6.0-4.4 5.7zM711.2,282.7l.6-6.4 2.4 6.4-2.4 6.1zM714.4,282.7l.6-3.8 2.8 3.8-2.8 3.6zM717.6,282.7l.6-5.0 3.4 5.0-3.4 4.7zM720.8,282.7l.6-4.0 4.2 4.0-4.2 3.8zM724.0,282.7l.6-4.2 2.7 4.2-2.7 3.9zM727.2,282.7l.6-3.7 3.3 3.7-3.3 3.5zM730.4,282.7l.6-5.0 3.6 5.0-3.6 4.7zM733.6,282.7l.6-4.3 2.6 4.3-2.6 4.1zM736.8,282.7l.6-4.2 3.0 4.2-3.0 4.0zM740.0,282.7l.6-3.3 3.5 3.3-3.5 3.1zM743.2,282.7l.6-3.3 3.9 3.3-3.9 3.2zM746.4,282.7l.6-5.2 2.5 5.2-2.5 4.9zM749.6,282.7l.6-5.0 3.0 5.0-3.0 4.8zM752.8,282.7l.6-4.3 3.7 4.3-3.7 4.1zM756.0,282.7l.6-5.6 4.3 5.6-4.3 5.3zM759.2,282.7l.6-5.5 2.7 5.5-2.7 5.2zM762.4,282.7l.6-4.7 3.0 4.7-3.0 4.5zM765.6,282.7l.6-2.7 3.5 2.7-3.5 2.5zM768.8,282.7l.6-4.4 4.3 4.4-4.3 4.2zM772.0,282.7l.6-3.9 4.2 3.9-4.2 3.7zM775.2,282.7l.6-4.6 2.4 4.6-2.4 4.4zM778.4,282.7l.6-5.4 2.9 5.4-2.9 5.1zM781.6,282.7l.6-4.7 2.4 4.7-2.4 4.4zM784.8,282.7l.6-2.6 4.4 2.6-4.4 2.5zM788.0,282.7l.6-2.8 2.6 2.8-2.6 2.6zM791.2,282.7l.6-3.2 2.4 3.2-2.4 3.1zM794.4,282.7l.6-5.8 4.6 5.8-4.6 5.5zM797.6,282.7l.6-5.1 3.1 5.1-3.1 4.9zM800.8,282.7l.6-6.1 3.4 6.1-3.4 5.8zM804.0,282.7l.6-3.1 3.9 3.1-3.9 3.0zM807.2,282.7l.6-4.0 2.8 4.0-2.8 3.8zM810.4,282.7l.6-3.8 3.1 3.8-3.1 3.7zM813.6,282.7l.6-3.3 3.7 3.3-3.7 3.1zM816.8,282.7l.6-6.0 3.6 6.0-3.6 5.7zM820.0,282.7l.6-2.6 3.8 2.6-3.8 2.5zM823.2,282.7l.6-2.7 3.3 2.7-3.3 2.5zM826.4,282.7l.6-6.0 3.8 6.0-3.8 5.7zM829.6,282.7l.6-6.1 4.0 6.1-4.0 5.8zM832.8,282.7l.6-3.7 2.5 3.7-2.5 3.5zM836.0,282.7l.6-4.4 3.8 4.4-3.8 4.1zM839.2,282.7l.6-3.5 3.0 3.5-3.0 3.3zM842.4,282.7l.6-5.5 3.0 5.5-3.0 5.2zM845.6,282.7l.6-4.9 3.5 4.9-3.5 4.7zM848.8,282.7l.6-6.2 2.3 6.2-2.3 5.9zM852.0,282.7l.6-3.3 4.1 3.3-4.1 3.2zM855.2,282.7l.6-5.2 2.4 5.2-2.4 4.9zM858.4,282.7l.6-3.1 2.7 3.1-2.7 3.0zM861.6,282.7l.6-4.7 4.4 4.7-4.4 4.5zM864.8,282.7l.6-3.4 2.7 3.4-2.7 3.3zM868.0,282.7l.6-5.3 3.2 5.3-3.2 5.0zM871.2,282.7l.6-5.9 4.6 5.9-4.6 5.6zM874.4,282.7l.6-6.3 3.9 6.3-3.9 5.9zM877.6,282.7l.6-4.5 2.3 4.5-2.3 4.3zM880.8,282.7l.6-5.8 3.2 5.8-3.2 5.5zM884.0,282.7l.6-4.4 3.7 4.4-3.7 4.2zM887.2,282.7l.6-6.4 3.5 6.4-3.5 6.0zM890.4,282.7l.6-6.2 4.5 6.2-4.5 5.9zM893.6,282.7l.6-2.9 3.1 2.9-3.1 2.8zM896.8,282.7l.6-6.1 4.0 6.1-4.0 5.8zM900.0,282.7l.6-6.4 2.6 6.4-2.6 6.1zM903.2,282.7l.6-4.7 4.4 4.7-4.4 4.4zM912.8,282.7l.6-4.7 3.8 4.7-3.8 4.5zM916.0,282.7l.6-6.4 2.6 6.4-2.6 6.1zM919.2,282.7l.6-2.8 4.2 2.8-4.2 2.7zM922.4,282.7l.6-4.9 2.7 4.9-2.7 4.6zM925.6,282.7l.6-5.8 2.9 5.8-2.9 5.6zM928.8,282.7l.6-3.1 2.9 3.1-2.9 3.0zM932.0,282.7l.6-2.7 3.2 2.7-3.2 2.6zM935.2,282.7l.6-5.6 3.3 5.6-3.3 5.4zM938.4,282.7l.6-6.4 2.3 6.4-2.3 6.0zM941.6,282.7l.6-3.3 2.5 3.3-2.5 3.1zM944.8,282.7l.6-4.8 2.7 4.8-2.7 4.6zM948.0,282.7l.6-5.2 3.5 5.2-3.5 4.9zM951.2,282.7l.6-4.9 4.2 4.9-4.2 4.6zM954.4,282.7l.6-5.7 4.4 5.7-4.4 5.4zM957.6,282.7l.6-3.2 3.1 3.2-3.1 3.0zM960.8,282.7l.6-6.3 3.2 6.3-3.2 6.0zM964.0,282.7l.6-3.7 3.4 3.7-3.4 3.5zM967.2,282.7l.6-3.3 4.2 3.3-4.2 3.1zM970.4,282.7l.6-5.1 2.4 5.1-2.4 4.8zM973.6,282.7l.6-6.4 3.4 6.4-3.4 6.0zM976.8,282.7l.6-3.6 3.7 3.6-3.7 3.4zM980.0,282.7l.6-6.3 3.0 6.3-3.0 6.0zM983.2,282.7l.6-2.7 2.7 2.7-2.7 2.5zM986.4,282.7l.6-2.8 3.5 2.8-3.5 2.7zM989.6,282.7l.6-3.8 4.2 3.8-4.2 3.6zM992.8,282.7l.6-3.4 2.2 3.4-2.2 3.2zM996.0,282.7l.6-4.4 2.5 4.4-2.5 4.2zM999.2,282.7l.6-3.8 2.7 3.8-2.7 3.6zM1005.6,282.7l.6-3.3 3.7 3.3-3.7 3.1zM1008.8,282.7l.6-6.3 3.1 6.3-3.1 5.9zM1012.0,282.7l.6-5.1 3.0 5.1-3.0 4.8zM1015.2,282.7l.6-6.2 3.5 6.2-3.5 5.9zM1018.4,282.7l.6-2.7 4.0 2.7-4.0 2.6zM1021.6,282.7l.6-3.4 2.3 3.4-2.3 3.2zM1024.8,282.7l.6-2.7 4.2 2.7-4.2 2.5zM1028.0,282.7l.6-5.4 3.1 5.4-3.1 5.1zM1031.2,282.7l.6-4.8 3.9 4.8-3.9 4.5zM1034.4,282.7l.6-2.9 3.9 2.9-3.9 2.7zM1037.6,282.7l.6-5.4 4.5 5.4-4.5 5.1zM1040.8,282.7l.6-2.8 3.6 2.8-3.6 2.7zM1044.0,282.7l.6-4.6 4.2 4.6-4.2 4.4zM1047.2,282.7l.6-4.0 3.8 4.0-3.8 3.8zM1050.4,282.7l.6-6.1 3.0 6.1-3.0 5.8zM1053.6,282.7l.6-4.6 4.3 4.6-4.3 4.4zM1056.8,282.7l.6-2.7 4.5 2.7-4.5 2.6zM1060.0,282.7l.6-3.8 3.3 3.8-3.3 3.6zM1063.2,282.7l.6-3.7 4.1 3.7-4.1 3.5zM1066.4,282.7l.6-4.7 4.0 4.7-4.0 4.4zM1069.6,282.7l.6-3.0 4.3 3.0-4.3 2.9zM1072.8,282.7l.6-5.8 3.8 5.8-3.8 5.5zM1076.0,282.7l.6-3.5 2.8 3.5-2.8 3.3zM1079.2,282.7l.6-4.4 2.4 4.4-2.4 4.1zM1082.4,282.7l.6-6.3 3.2 6.3-3.2 6.0zM1085.6,282.7l.6-6.3 2.6 6.3-2.6 6.0zM1088.8,282.7l.6-5.1 4.1 5.1-4.1 4.9zM1092.0,282.7l.6-5.1 3.2 5.1-3.2 4.9zM1095.2,282.7l.6-2.7 3.2 2.7-3.2 2.5zM1098.4,282.7l.6-4.1 4.5 4.1-4.5 3.9zM1101.6,282.7l.6-6.4 4.5 6.4-4.5 6.1zM1104.8,282.7l.6-6.4 2.6 6.4-2.6 6.1zM1108.0,282.7l.6-2.7 2.9 2.7-2.9 2.6zM1111.2,282.7l.6-2.6 2.5 2.6-2.5 2.5zM1114.4,282.7l.6-4.9 2.7 4.9-2.7 4.6zM1117.6,282.7l.6-5.0 3.1 5.0-3.1 4.7zM1120.8,282.7l.6-3.7 4.5 3.7-4.5 3.5zM1124.0,282.7l.6-3.3 4.3 3.3-4.3 3.2zM1127.2,282.7l.6-4.7 3.8 4.7-3.8 4.4zM1130.4,282.7l.6-3.2 4.0 3.2-4.0 3.0zM1133.6,282.7l.6-6.1 2.7 6.1-2.7 5.8zM1136.8,282.7l.6-4.4 3.8 4.4-3.8 4.2zM1140.0,282.7l.6-4.5 4.0 4.5-4.0 4.2zM1143.2,282.7l.6-5.1 3.0 5.1-3.0 4.9zM1146.4,282.7l.6-5.3 4.1 5.3-4.1 5.0zM1149.6,282.7l.6-4.4 3.6 4.4-3.6 4.2zM1152.8,282.7l.6-5.1 3.3 5.1-3.3 4.8zM1156.0,282.7l.6-2.9 3.2 2.9-3.2 2.8zM1159.2,282.7l.6-5.6 3.9 5.6-3.9 5.4zM1162.4,282.7l.6-2.9 3.3 2.9-3.3 2.7zM1165.6,282.7l.6-4.9 3.5 4.9-3.5 4.6zM1168.8,282.7l.6-3.2 3.8 3.2-3.8 3.0zM1172.0,282.7l.6-5.3 3.5 5.3-3.5 5.1zM1175.2,282.7l.6-6.3 3.6 6.3-3.6 6.0zM1178.4,282.7l.6-2.6 2.9 2.6-2.9 2.5zM1181.6,282.7l.6-5.3 2.4 5.3-2.4 5.1zM1184.8,282.7l.6-6.4 3.9 6.4-3.9 6.0zM1188.0,282.7l.6-5.6 2.6 5.6-2.6 5.3zM1191.2,282.7l.6-2.6 4.3 2.6-4.3 2.5zM1194.4,282.7l.6-4.6 3.3 4.6-3.3 4.4zM1197.6,282.7l.6-4.6 4.0 4.6-4.0 4.4zM1200.8,282.7l.6-4.1 4.1 4.1-4.1 3.9zM1204.0,282.7l.6-3.2 4.6 3.2-4.6 3.1zM1207.2,282.7l.6-5.3 3.0 5.3-3.0 5.0zM1210.4,282.7l.6-4.5 4.3 4.5-4.3 4.2zM1213.6,282.7l.6-3.9 3.9 3.9-3.9 3.7zM1216.8,282.7l.6-6.1 4.5 6.1-4.5 5.8zM1220.0,282.7l.6-3.6 4.1 3.6-4.1 3.4zM1223.2,282.7l.6-5.0 4.1 5.0-4.1 4.7zM1226.4,282.7l.6-2.9 3.2 2.9-3.2 2.7zM1229.6,282.7l.6-4.4 4.2 4.4-4.2 4.1zM1232.8,282.7l.6-4.4 2.3 4.4-2.3 4.1zM1236.0,282.7l.6-3.4 4.2 3.4-4.2 3.2zM1239.2,282.7l.6-6.0 3.6 6.0-3.6 5.7zM1242.4,282.7l.6-2.9 4.1 2.9-4.1 2.8zM1245.6,282.7l.6-6.0 2.9 6.0-2.9 5.7zM1248.8,282.7l.6-4.5 2.9 4.5-2.9 4.3zM1252.0,282.7l.6-2.8 4.0 2.8-4.0 2.7zM1255.2,282.7l.6-3.2 2.4 3.2-2.4 3.1zM1258.4,282.7l.6-6.1 2.4 6.1-2.4 5.8z" stroke="#13275a" stroke-width="0.7" fill="#13275a"/><path d="M275,301.0 H1263" stroke="#2c7f86" stroke-width="1"/><path d="M744,306.0 H943 M1143,310.0 H1263" stroke="#2c7f86" stroke-width="1"/><path d="M275,351.5H1263M275.8,351.5l.6-1.5 2.3 1.5-2.3 1.5zM278.2,351.5l.6-1.6 1.9 1.6-1.9 1.5zM280.8,351.5l.6-1.9 3.0 1.9-3.0 1.8zM283.2,351.5l.6-1.7 1.8 1.7-1.8 1.6zM285.8,351.5l.6-1.5 2.1 1.5-2.1 1.4zM288.2,351.5l.6-1.0 3.2 1.0-3.2 1.0zM290.8,351.5l.6-2.2 1.6 2.2-1.6 2.1zM293.2,351.5l.6-2.0 2.6 2.0-2.6 1.9zM295.8,351.5l.6-1.2 2.0 1.2-2.0 1.2zM298.2,351.5l.6-1.7 2.3 1.7-2.3 1.6zM300.8,351.5l.6-1.7 2.7 1.7-2.7 1.6zM303.2,351.5l.6-0.9 2.9 0.9-2.9 0.8zM305.8,351.5l.6-2.2 3.2 2.2-3.2 2.1zM308.2,351.5l.6-1.6 1.6 1.6-1.6 1.5zM310.8,351.5l.6-0.8 1.7 0.8-1.7 0.8zM313.2,351.5l.6-2.1 2.0 2.1-2.0 2.0zM315.8,351.5l.6-1.2 3.1 1.2-3.1 1.2zM318.2,351.5l.6-1.1 2.5 1.1-2.5 1.1zM320.8,351.5l.6-1.3 1.6 1.3-1.6 1.3zM323.2,351.5l.6-1.6 3.0 1.6-3.0 1.5zM325.8,351.5l.6-0.9 1.9 0.9-1.9 0.9zM328.2,351.5l.6-1.3 1.6 1.3-1.6 1.2zM330.8,351.5l.6-1.4 3.0 1.4-3.0 1.4zM333.2,351.5l.6-1.7 2.5 1.7-2.5 1.6zM335.8,351.5l.6-2.0 1.8 2.0-1.8 1.9zM338.2,351.5l.6-1.5 2.2 1.5-2.2 1.5zM340.8,351.5l.6-1.6 1.7 1.6-1.7 1.5zM343.2,351.5l.6-1.9 1.7 1.9-1.7 1.8zM345.8,351.5l.6-0.9 3.0 0.9-3.0 0.9zM348.2,351.5l.6-2.1 2.3 2.1-2.3 2.0zM350.8,351.5l.6-1.3 1.9 1.3-1.9 1.2zM353.2,351.5l.6-1.1 2.6 1.1-2.6 1.0zM355.8,351.5l.6-0.9 1.7 0.9-1.7 0.9zM358.2,351.5l.6-1.4 1.8 1.4-1.8 1.3zM360.8,351.5l.6-1.7 3.0 1.7-3.0 1.6zM363.2,351.5l.6-1.9 2.4 1.9-2.4 1.8zM365.8,351.5l.6-1.2 2.3 1.2-2.3 1.1zM368.2,351.5l.6-0.8 2.8 0.8-2.8 0.8zM370.8,351.5l.6-1.2 2.1 1.2-2.1 1.1zM373.2,351.5l.6-0.8 2.3 0.8-2.3 0.8zM375.8,351.5l.6-1.6 2.2 1.6-2.2 1.5zM378.2,351.5l.6-2.0 2.7 2.0-2.7 1.9zM380.8,351.5l.6-1.0 2.4 1.0-2.4 1.0zM383.2,351.5l.6-2.1 2.4 2.1-2.4 2.0zM385.8,351.5l.6-1.6 1.6 1.6-1.6 1.5zM388.2,351.5l.6-1.4 2.3 1.4-2.3 1.3zM390.8,351.5l.6-1.3 2.3 1.3-2.3 1.2zM393.2,351.5l.6-1.6 2.5 1.6-2.5 1.5zM395.8,351.5l.6-1.4 1.8 1.4-1.8 1.3zM398.2,351.5l.6-1.3 3.2 1.3-3.2 1.3zM400.8,351.5l.6-1.3 1.6 1.3-1.6 1.2zM403.2,351.5l.6-0.8 2.5 0.8-2.5 0.8zM405.8,351.5l.6-0.8 1.7 0.8-1.7 0.8zM408.2,351.5l.6-0.8 2.3 0.8-2.3 0.8zM410.8,351.5l.6-2.2 2.4 2.2-2.4 2.1zM413.2,351.5l.6-1.4 2.3 1.4-2.3 1.3zM415.8,351.5l.6-1.4 2.3 1.4-2.3 1.4zM418.2,351.5l.6-1.8 3.1 1.8-3.1 1.7zM420.8,351.5l.6-1.7 2.3 1.7-2.3 1.6zM423.2,351.5l.6-1.7 3.1 1.7-3.1 1.6zM425.8,351.5l.6-0.9 1.9 0.9-1.9 0.9zM428.2,351.5l.6-1.6 2.7 1.6-2.7 1.5zM430.8,351.5l.6-1.6 2.6 1.6-2.6 1.6zM433.2,351.5l.6-1.9 2.4 1.9-2.4 1.8zM435.8,351.5l.6-1.9 3.2 1.9-3.2 1.8zM438.2,351.5l.6-1.3 3.0 1.3-3.0 1.3zM440.8,351.5l.6-1.8 3.1 1.8-3.1 1.7zM443.2,351.5l.6-0.8 3.1 0.8-3.1 0.8zM445.8,351.5l.6-1.8 3.2 1.8-3.2 1.7zM448.2,351.5l.6-2.2 2.0 2.2-2.0 2.1zM450.8,351.5l.6-1.7 1.8 1.7-1.8 1.6zM453.2,351.5l.6-1.6 3.2 1.6-3.2 1.5zM455.8,351.5l.6-1.0 2.1 1.0-2.1 0.9zM458.2,351.5l.6-0.8 1.9 0.8-1.9 0.8zM460.8,351.5l.6-1.0 1.7 1.0-1.7 0.9zM463.2,351.5l.6-2.2 3.1 2.2-3.1 2.1zM465.8,351.5l.6-1.4 2.8 1.4-2.8 1.3zM468.2,351.5l.6-1.7 2.4 1.7-2.4 1.6zM470.8,351.5l.6-1.3 2.7 1.3-2.7 1.2zM473.2,351.5l.6-1.5 2.0 1.5-2.0 1.4zM475.8,351.5l.6-1.2 2.6 1.2-2.6 1.2zM478.2,351.5l.6-1.6 1.9 1.6-1.9 1.5zM480.8,351.5l.6-1.6 3.1 1.6-3.1 1.5zM483.2,351.5l.6-2.0 2.7 2.0-2.7 1.9zM485.8,351.5l.6-0.8 2.3 0.8-2.3 0.8zM488.2,351.5l.6-0.8 1.6 0.8-1.6 0.8zM490.8,351.5l.6-1.1 2.3 1.1-2.3 1.0zM493.2,351.5l.6-1.8 2.6 1.8-2.6 1.7zM495.8,351.5l.6-1.1 2.8 1.1-2.8 1.0zM498.2,351.5l.6-1.4 2.4 1.4-2.4 1.4zM500.8,351.5l.6-1.1 2.3 1.1-2.3 1.0zM503.2,351.5l.6-1.2 2.8 1.2-2.8 1.1zM505.8,351.5l.6-1.4 2.3 1.4-2.3 1.3zM508.2,351.5l.6-1.4 2.4 1.4-2.4 1.3zM510.8,351.5l.6-1.7 2.8 1.7-2.8 1.6zM513.2,351.5l.6-1.9 2.2 1.9-2.2 1.8zM515.8,351.5l.6-1.9 3.2 1.9-3.2 1.8zM518.2,351.5l.6-2.2 2.8 2.2-2.8 2.1zM520.8,351.5l.6-0.8 3.0 0.8-3.0 0.8zM523.2,351.5l.6-1.9 1.5 1.9-1.5 1.9zM525.8,351.5l.6-1.2 2.1 1.2-2.1 1.1zM528.2,351.5l.6-1.8 2.6 1.8-2.6 1.7zM530.8,351.5l.6-1.1 1.8 1.1-1.8 1.0zM533.2,351.5l.6-0.9 1.7 0.9-1.7 0.9zM535.8,351.5l.6-1.9 3.2 1.9-3.2 1.8zM538.2,351.5l.6-1.0 2.8 1.0-2.8 0.9zM540.8,351.5l.6-2.1 1.8 2.1-1.8 2.0zM543.2,351.5l.6-1.5 2.3 1.5-2.3 1.5zM545.8,351.5l.6-2.2 3.1 2.2-3.1 2.1zM548.2,351.5l.6-0.8 1.9 0.8-1.9 0.8zM550.8,351.5l.6-2.0 2.5 2.0-2.5 1.9zM553.2,351.5l.6-1.5 3.0 1.5-3.0 1.4zM555.8,351.5l.6-1.8 3.2 1.8-3.2 1.7zM558.2,351.5l.6-1.2 1.6 1.2-1.6 1.1zM560.8,351.5l.6-1.7 1.6 1.7-1.6 1.6zM563.2,351.5l.6-1.5 3.0 1.5-3.0 1.5zM565.8,351.5l.6-1.3 2.6 1.3-2.6 1.2zM568.2,351.5l.6-0.9 1.8 0.9-1.8 0.9zM570.8,351.5l.6-1.6 3.1 1.6-3.1 1.5zM573.2,351.5l.6-2.2 1.6 2.2-1.6 2.1zM575.8,351.5l.6-2.1 2.4 2.1-2.4 2.0zM578.2,351.5l.6-1.2 2.2 1.2-2.2 1.1zM580.8,351.5l.6-1.5 2.1 1.5-2.1 1.5zM583.2,351.5l.6-0.9 3.1 0.9-3.1 0.8zM585.8,351.5l.6-1.7 2.6 1.7-2.6 1.7zM588.2,351.5l.6-1.8 3.3 1.8-3.3 1.7zM590.8,351.5l.6-0.9 3.0 0.9-3.0 0.9zM593.2,351.5l.6-1.9 2.1 1.9-2.1 1.8zM595.8,351.5l.6-1.5 2.3 1.5-2.3 1.4zM598.2,351.5l.6-1.0 2.3 1.0-2.3 0.9zM600.8,351.5l.6-0.9 3.2 0.9-3.2 0.9zM603.2,351.5l.6-0.9 2.6 0.9-2.6 0.9zM605.8,351.5l.6-1.5 3.3 1.5-3.3 1.5zM608.2,351.5l.6-1.9 2.1 1.9-2.1 1.8zM610.8,351.5l.6-1.2 1.6 1.2-1.6 1.2zM613.2,351.5l.6-0.8 2.1 0.8-2.1 0.8zM615.8,351.5l.6-2.1 1.6 2.1-1.6 2.0zM618.2,351.5l.6-0.9 2.6 0.9-2.6 0.9zM620.8,351.5l.6-1.2 1.8 1.2-1.8 1.2zM623.2,351.5l.6-2.1 1.6 2.1-1.6 2.0zM625.8,351.5l.6-1.6 2.3 1.6-2.3 1.5zM628.2,351.5l.6-1.2 1.9 1.2-1.9 1.1zM630.8,351.5l.6-0.9 2.2 0.9-2.2 0.9zM633.2,351.5l.6-1.8 2.3 1.8-2.3 1.7zM635.8,351.5l.6-1.9 3.1 1.9-3.1 1.8zM638.2,351.5l.6-0.9 3.1 0.9-3.1 0.9zM640.8,351.5l.6-1.6 2.3 1.6-2.3 1.5zM643.2,351.5l.6-1.5 3.1 1.5-3.1 1.4zM645.8,351.5l.6-1.3 1.7 1.3-1.7 1.2zM648.2,351.5l.6-2.1 1.7 2.1-1.7 2.0zM650.8,351.5l.6-0.8 2.8 0.8-2.8 0.8zM653.2,351.5l.6-1.1 2.0 1.1-2.0 1.1zM655.8,351.5l.6-1.7 3.1 1.7-3.1 1.6zM658.2,351.5l.6-1.2 3.1 1.2-3.1 1.1zM660.8,351.5l.6-1.6 2.6 1.6-2.6 1.5zM663.2,351.5l.6-1.5 1.5 1.5-1.5 1.4zM665.8,351.5l.6-0.9 2.7 0.9-2.7 0.9zM668.2,351.5l.6-1.7 1.7 1.7-1.7 1.6zM670.8,351.5l.6-1.6 2.4 1.6-2.4 1.6zM673.2,351.5l.6-1.5 2.2 1.5-2.2 1.5zM675.8,351.5l.6-1.0 2.1 1.0-2.1 0.9zM678.2,351.5l.6-2.2 1.8 2.2-1.8 2.0zM680.8,351.5l.6-2.0 2.5 2.0-2.5 1.9zM683.2,351.5l.6-0.8 3.0 0.8-3.0 0.8zM685.8,351.5l.6-0.8 3.0 0.8-3.0 0.8zM688.2,351.5l.6-1.2 3.2 1.2-3.2 1.1zM690.8,351.5l.6-1.8 2.1 1.8-2.1 1.7zM693.2,351.5l.6-1.6 3.3 1.6-3.3 1.5zM695.8,351.5l.6-0.9 1.9 0.9-1.9 0.9zM698.2,351.5l.6-1.1 3.0 1.1-3.0 1.1zM700.8,351.5l.6-1.0 1.9 1.0-1.9 1.0zM703.2,351.5l.6-1.6 2.6 1.6-2.6 1.5zM705.8,351.5l.6-1.3 2.5 1.3-2.5 1.2zM708.2,351.5l.6-0.8 1.5 0.8-1.5 0.8zM710.8,351.5l.6-0.8 1.6 0.8-1.6 0.8zM713.2,351.5l.6-1.8 3.3 1.8-3.3 1.8zM715.8,351.5l.6-0.9 2.2 0.9-2.2 0.8zM718.2,351.5l.6-0.8 2.3 0.8-2.3 0.8zM720.8,351.5l.6-1.7 2.6 1.7-2.6 1.6zM723.2,351.5l.6-2.0 2.5 2.0-2.5 1.9zM725.8,351.5l.6-0.8 2.2 0.8-2.2 0.8zM728.2,351.5l.6-1.4 2.1 1.4-2.1 1.3zM730.8,351.5l.6-0.8 2.6 0.8-2.6 0.8zM733.2,351.5l.6-1.4 2.8 1.4-2.8 1.3zM735.8,351.5l.6-1.2 1.6 1.2-1.6 1.2zM738.2,351.5l.6-1.1 1.8 1.1-1.8 1.0zM740.8,351.5l.6-1.4 1.8 1.4-1.8 1.3zM743.2,351.5l.6-0.8 2.4 0.8-2.4 0.8zM745.8,351.5l.6-0.9 1.7 0.9-1.7 0.8zM748.2,351.5l.6-0.8 2.8 0.8-2.8 0.8zM750.8,351.5l.6-1.9 3.0 1.9-3.0 1.8zM753.2,351.5l.6-1.5 2.6 1.5-2.6 1.5zM755.8,351.5l.6-1.8 2.3 1.8-2.3 1.7zM758.2,351.5l.6-1.4 2.8 1.4-2.8 1.4zM760.8,351.5l.6-1.6 2.6 1.6-2.6 1.6zM763.2,351.5l.6-1.7 2.5 1.7-2.5 1.6zM765.8,351.5l.6-1.0 2.1 1.0-2.1 0.9zM768.2,351.5l.6-1.7 2.3 1.7-2.3 1.6zM770.8,351.5l.6-2.0 2.2 2.0-2.2 1.9zM773.2,351.5l.6-1.7 1.7 1.7-1.7 1.6zM775.8,351.5l.6-1.1 3.0 1.1-3.0 1.1zM778.2,351.5l.6-0.9 2.6 0.9-2.6 0.9zM780.8,351.5l.6-0.8 2.6 0.8-2.6 0.8zM783.2,351.5l.6-1.4 3.1 1.4-3.1 1.3zM785.8,351.5l.6-1.9 2.9 1.9-2.9 1.8zM788.2,351.5l.6-1.2 2.7 1.2-2.7 1.1zM790.8,351.5l.6-0.9 2.4 0.9-2.4 0.9zM793.2,351.5l.6-1.3 2.3 1.3-2.3 1.2zM795.8,351.5l.6-1.1 1.9 1.1-1.9 1.0zM798.2,351.5l.6-1.5 2.7 1.5-2.7 1.4zM800.8,351.5l.6-1.5 3.2 1.5-3.2 1.5zM803.2,351.5l.6-1.5 1.8 1.5-1.8 1.4zM805.8,351.5l.6-1.6 2.1 1.6-2.1 1.6zM808.2,351.5l.6-2.1 1.7 2.1-1.7 2.0zM810.8,351.5l.6-1.4 2.7 1.4-2.7 1.3zM813.2,351.5l.6-2.2 2.4 2.2-2.4 2.0zM815.8,351.5l.6-1.2 2.9 1.2-2.9 1.2zM818.2,351.5l.6-1.9 3.1 1.9-3.1 1.8zM820.8,351.5l.6-1.8 1.7 1.8-1.7 1.7zM823.2,351.5l.6-2.2 3.2 2.2-3.2 2.1zM825.8,351.5l.6-1.3 2.7 1.3-2.7 1.3zM828.2,351.5l.6-1.9 3.2 1.9-3.2 1.8zM830.8,351.5l.6-1.8 1.7 1.8-1.7 1.7zM833.2,351.5l.6-0.8 2.2 0.8-2.2 0.8zM835.8,351.5l.6-1.4 2.1 1.4-2.1 1.3zM838.2,351.5l.6-1.8 2.9 1.8-2.9 1.7zM840.8,351.5l.6-1.3 2.8 1.3-2.8 1.2zM843.2,351.5l.6-1.0 3.2 1.0-3.2 0.9zM845.8,351.5l.6-1.0 1.8 1.0-1.8 1.0zM848.2,351.5l.6-1.2 3.1 1.2-3.1 1.2zM850.8,351.5l.6-1.6 2.7 1.6-2.7 1.5zM853.2,351.5l.6-1.9 2.2 1.9-2.2 1.8zM855.8,351.5l.6-2.1 3.3 2.1-3.3 2.0zM858.2,351.5l.6-1.5 2.8 1.5-2.8 1.4zM860.8,351.5l.6-2.0 2.6 2.0-2.6 1.9zM863.2,351.5l.6-0.9 2.7 0.9-2.7 0.8zM865.8,351.5l.6-1.4 3.0 1.4-3.0 1.3zM868.2,351.5l.6-1.0 1.5 1.0-1.5 0.9zM870.8,351.5l.6-0.9 1.8 0.9-1.8 0.9zM873.2,351.5l.6-1.3 1.9 1.3-1.9 1.2zM875.8,351.5l.6-1.2 2.6 1.2-2.6 1.1zM878.2,351.5l.6-0.9 2.4 0.9-2.4 0.9zM880.8,351.5l.6-1.2 1.5 1.2-1.5 1.1zM883.2,351.5l.6-1.7 2.4 1.7-2.4 1.6zM885.8,351.5l.6-1.9 3.1 1.9-3.1 1.8zM888.2,351.5l.6-0.8 2.8 0.8-2.8 0.8zM890.8,351.5l.6-1.4 3.1 1.4-3.1 1.3zM893.2,351.5l.6-0.8 3.0 0.8-3.0 0.8zM895.8,351.5l.6-1.3 1.7 1.3-1.7 1.3zM898.2,351.5l.6-1.4 3.1 1.4-3.1 1.3zM900.8,351.5l.6-0.8 2.2 0.8-2.2 0.8zM903.2,351.5l.6-0.8 1.5 0.8-1.5 0.8zM905.8,351.5l.6-1.9 2.5 1.9-2.5 1.8zM908.2,351.5l.6-1.5 3.1 1.5-3.1 1.5zM910.8,351.5l.6-0.8 3.2 0.8-3.2 0.8zM913.2,351.5l.6-1.8 3.0 1.8-3.0 1.7zM915.8,351.5l.6-1.9 2.2 1.9-2.2 1.8zM918.2,351.5l.6-0.8 3.3 0.8-3.3 0.8zM920.8,351.5l.6-1.6 2.8 1.6-2.8 1.6zM923.2,351.5l.6-1.7 2.0 1.7-2.0 1.6zM925.8,351.5l.6-1.7 2.3 1.7-2.3 1.6zM928.2,351.5l.6-1.0 2.4 1.0-2.4 1.0zM930.8,351.5l.6-1.4 2.0 1.4-2.0 1.3zM933.2,351.5l.6-1.8 3.1 1.8-3.1 1.7zM935.8,351.5l.6-1.6 1.5 1.6-1.5 1.5zM938.2,351.5l.6-1.5 2.6 1.5-2.6 1.4zM940.8,351.5l.6-1.9 2.0 1.9-2.0 1.8zM943.2,351.5l.6-1.0 2.2 1.0-2.2 1.0zM945.8,351.5l.6-0.9 2.9 0.9-2.9 0.9zM948.2,351.5l.6-0.8 2.5 0.8-2.5 0.8zM950.8,351.5l.6-1.9 1.6 1.9-1.6 1.8zM953.2,351.5l.6-0.9 3.3 0.9-3.3 0.9zM955.8,351.5l.6-1.1 2.9 1.1-2.9 1.1zM958.2,351.5l.6-0.8 2.3 0.8-2.3 0.8zM960.8,351.5l.6-0.8 1.9 0.8-1.9 0.8zM963.2,351.5l.6-0.8 2.7 0.8-2.7 0.8zM965.8,351.5l.6-1.4 2.1 1.4-2.1 1.3zM968.2,351.5l.6-1.3 2.7 1.3-2.7 1.2zM970.8,351.5l.6-1.1 1.8 1.1-1.8 1.0zM973.2,351.5l.6-0.8 2.7 0.8-2.7 0.8zM975.8,351.5l.6-1.7 1.9 1.7-1.9 1.6zM978.2,351.5l.6-1.5 3.2 1.5-3.2 1.4zM980.8,351.5l.6-1.4 2.9 1.4-2.9 1.3zM983.2,351.5l.6-1.2 2.5 1.2-2.5 1.1zM985.8,351.5l.6-1.9 2.8 1.9-2.8 1.8zM988.2,351.5l.6-1.6 2.0 1.6-2.0 1.5zM990.8,351.5l.6-0.8 2.4 0.8-2.4 0.8zM993.2,351.5l.6-1.8 2.1 1.8-2.1 1.7zM995.8,351.5l.6-1.8 2.3 1.8-2.3 1.7zM998.2,351.5l.6-0.8 2.5 0.8-2.5 0.8zM1000.8,351.5l.6-1.5 2.1 1.5-2.1 1.4zM1003.2,351.5l.6-1.0 3.3 1.0-3.3 0.9zM1005.8,351.5l.6-1.6 2.8 1.6-2.8 1.5zM1008.2,351.5l.6-0.8 2.8 0.8-2.8 0.8zM1010.8,351.5l.6-0.9 2.4 0.9-2.4 0.9zM1013.2,351.5l.6-1.3 2.2 1.3-2.2 1.2zM1015.8,351.5l.6-1.9 1.9 1.9-1.9 1.8zM1018.2,351.5l.6-2.1 3.0 2.1-3.0 2.0zM1020.8,351.5l.6-1.4 3.1 1.4-3.1 1.3zM1023.2,351.5l.6-1.5 3.2 1.5-3.2 1.4zM1025.8,351.5l.6-1.4 3.3 1.4-3.3 1.3zM1028.2,351.5l.6-1.8 2.7 1.8-2.7 1.7zM1030.8,351.5l.6-2.2 2.8 2.2-2.8 2.1zM1033.2,351.5l.6-1.0 2.7 1.0-2.7 1.0zM1035.8,351.5l.6-0.9 2.2 0.9-2.2 0.9zM1038.2,351.5l.6-1.7 1.8 1.7-1.8 1.7zM1040.8,351.5l.6-1.3 1.9 1.3-1.9 1.2zM1043.2,351.5l.6-1.3 1.9 1.3-1.9 1.2zM1045.8,351.5l.6-1.7 3.0 1.7-3.0 1.7zM1048.2,351.5l.6-1.4 2.8 1.4-2.8 1.3zM1050.8,351.5l.6-1.8 3.0 1.8-3.0 1.7zM1053.2,351.5l.6-1.9 2.7 1.9-2.7 1.8zM1055.8,351.5l.6-1.8 2.8 1.8-2.8 1.7zM1058.2,351.5l.6-1.5 2.9 1.5-2.9 1.4zM1060.8,351.5l.6-1.0 2.8 1.0-2.8 0.9zM1063.2,351.5l.6-1.6 2.5 1.6-2.5 1.6zM1065.8,351.5l.6-1.6 3.2 1.6-3.2 1.5zM1068.2,351.5l.6-1.9 2.7 1.9-2.7 1.8zM1070.8,351.5l.6-2.0 3.1 2.0-3.1 1.9zM1073.2,351.5l.6-1.2 3.0 1.2-3.0 1.1zM1075.8,351.5l.6-2.0 2.5 2.0-2.5 1.9zM1078.2,351.5l.6-2.1 1.8 2.1-1.8 2.0zM1080.8,351.5l.6-1.9 1.9 1.9-1.9 1.8zM1083.2,351.5l.6-1.3 2.4 1.3-2.4 1.2zM1085.8,351.5l.6-1.3 2.4 1.3-2.4 1.2zM1088.2,351.5l.6-0.8 1.6 0.8-1.6 0.8zM1090.8,351.5l.6-1.8 2.0 1.8-2.0 1.7zM1093.2,351.5l.6-1.1 2.8 1.1-2.8 1.0zM1095.8,351.5l.6-1.8 2.5 1.8-2.5 1.7zM1098.2,351.5l.6-1.9 2.1 1.9-2.1 1.8zM1100.8,351.5l.6-2.0 2.6 2.0-2.6 1.9zM1103.2,351.5l.6-2.0 3.0 2.0-3.0 1.9zM1105.8,351.5l.6-1.7 3.2 1.7-3.2 1.7zM1108.2,351.5l.6-1.8 2.3 1.8-2.3 1.7zM1110.8,351.5l.6-0.8 2.2 0.8-2.2 0.8zM1113.2,351.5l.6-1.6 1.5 1.6-1.5 1.5zM1115.8,351.5l.6-1.6 2.2 1.6-2.2 1.5zM1118.2,351.5l.6-1.4 1.6 1.4-1.6 1.3zM1120.8,351.5l.6-0.8 2.7 0.8-2.7 0.8zM1123.2,351.5l.6-1.1 1.8 1.1-1.8 1.0zM1125.8,351.5l.6-2.0 1.6 2.0-1.6 1.9zM1128.2,351.5l.6-1.7 3.0 1.7-3.0 1.7zM1130.8,351.5l.6-2.0 2.7 2.0-2.7 1.9zM1133.2,351.5l.6-0.8 2.3 0.8-2.3 0.8zM1135.8,351.5l.6-2.0 2.2 2.0-2.2 1.9zM1138.2,351.5l.6-1.5 2.8 1.5-2.8 1.4zM1140.8,351.5l.6-1.5 2.1 1.5-2.1 1.5zM1143.2,351.5l.6-1.6 2.3 1.6-2.3 1.5zM1145.8,351.5l.6-1.2 1.6 1.2-1.6 1.1zM1148.2,351.5l.6-1.1 3.3 1.1-3.3 1.0zM1150.8,351.5l.6-1.1 2.1 1.1-2.1 1.1zM1153.2,351.5l.6-2.2 1.7 2.2-1.7 2.1zM1155.8,351.5l.6-1.0 2.2 1.0-2.2 1.0zM1158.2,351.5l.6-1.4 2.2 1.4-2.2 1.3zM1160.8,351.5l.6-1.1 1.8 1.1-1.8 1.0zM1163.2,351.5l.6-1.5 1.8 1.5-1.8 1.4zM1165.8,351.5l.6-0.8 2.9 0.8-2.9 0.8zM1168.2,351.5l.6-1.8 2.2 1.8-2.2 1.7zM1170.8,351.5l.6-2.0 1.8 2.0-1.8 1.9zM1173.2,351.5l.6-2.0 2.7 2.0-2.7 1.9zM1175.8,351.5l.6-1.7 1.6 1.7-1.6 1.6zM1178.2,351.5l.6-1.8 1.8 1.8-1.8 1.7zM1180.8,351.5l.6-1.5 2.5 1.5-2.5 1.4zM1183.2,351.5l.6-0.8 2.0 0.8-2.0 0.8zM1185.8,351.5l.6-2.1 2.9 2.1-2.9 2.0zM1188.2,351.5l.6-1.1 3.3 1.1-3.3 1.1zM1190.8,351.5l.6-0.8 2.7 0.8-2.7 0.8zM1193.2,351.5l.6-1.9 3.0 1.9-3.0 1.8zM1195.8,351.5l.6-1.7 2.8 1.7-2.8 1.6zM1198.2,351.5l.6-1.0 2.9 1.0-2.9 1.0zM1200.8,351.5l.6-1.7 2.5 1.7-2.5 1.6zM1203.2,351.5l.6-1.1 2.7 1.1-2.7 1.0zM1205.8,351.5l.6-0.8 2.4 0.8-2.4 0.8zM1208.2,351.5l.6-1.7 2.1 1.7-2.1 1.6zM1210.8,351.5l.6-1.6 1.6 1.6-1.6 1.5zM1213.2,351.5l.6-1.2 2.4 1.2-2.4 1.1zM1215.8,351.5l.6-1.9 2.5 1.9-2.5 1.8zM1218.2,351.5l.6-2.1 2.2 2.1-2.2 2.0zM1220.8,351.5l.6-2.0 2.5 2.0-2.5 1.9zM1223.2,351.5l.6-1.4 1.8 1.4-1.8 1.3zM1225.8,351.5l.6-1.9 2.9 1.9-2.9 1.8zM1228.2,351.5l.6-1.3 2.1 1.3-2.1 1.2zM1230.8,351.5l.6-1.1 2.1 1.1-2.1 1.0zM1233.2,351.5l.6-0.8 3.0 0.8-3.0 0.8zM1235.8,351.5l.6-1.3 1.8 1.3-1.8 1.3zM1238.2,351.5l.6-1.7 1.8 1.7-1.8 1.6zM1240.8,351.5l.6-2.0 1.5 2.0-1.5 1.9zM1243.2,351.5l.6-1.5 2.7 1.5-2.7 1.4zM1245.8,351.5l.6-1.2 1.8 1.2-1.8 1.1zM1248.2,351.5l.6-2.0 2.6 2.0-2.6 1.9zM1250.8,351.5l.6-1.7 1.8 1.7-1.8 1.6zM1253.2,351.5l.6-0.8 3.1 0.8-3.1 0.8zM1255.8,351.5l.6-0.9 1.6 0.9-1.6 0.9zM1258.2,351.5l.6-1.9 2.5 1.9-2.5 1.8zM1260.8,351.5l.6-0.8 2.5 0.8-2.5 0.8z" stroke="#27553a" stroke-width="0.7" fill="#27553a"/><path d="M275,362.5H1263M275.8,362.5l.6-1.5 2.3 1.5-2.3 1.5zM278.2,362.5l.6-1.6 1.9 1.6-1.9 1.5zM280.8,362.5l.6-1.9 3.0 1.9-3.0 1.8zM283.2,362.5l.6-1.7 1.8 1.7-1.8 1.6zM285.8,362.5l.6-1.5 2.1 1.5-2.1 1.4zM288.2,362.5l.6-1.0 3.2 1.0-3.2 1.0zM290.8,362.5l.6-2.2 1.6 2.2-1.6 2.1zM293.2,362.5l.6-2.0 2.6 2.0-2.6 1.9zM295.8,362.5l.6-1.2 2.0 1.2-2.0 1.2zM298.2,362.5l.6-1.7 2.3 1.7-2.3 1.6zM300.8,362.5l.6-1.7 2.7 1.7-2.7 1.6zM303.2,362.5l.6-0.9 2.9 0.9-2.9 0.8zM305.8,362.5l.6-2.2 3.2 2.2-3.2 2.1zM308.2,362.5l.6-1.6 1.6 1.6-1.6 1.5zM310.8,362.5l.6-0.8 1.7 0.8-1.7 0.8zM313.2,362.5l.6-2.1 2.0 2.1-2.0 2.0zM315.8,362.5l.6-1.2 3.1 1.2-3.1 1.2zM318.2,362.5l.6-1.1 2.5 1.1-2.5 1.1zM320.8,362.5l.6-1.3 1.6 1.3-1.6 1.3zM323.2,362.5l.6-1.6 3.0 1.6-3.0 1.5zM325.8,362.5l.6-0.9 1.9 0.9-1.9 0.9zM328.2,362.5l.6-1.3 1.6 1.3-1.6 1.2zM330.8,362.5l.6-1.4 3.0 1.4-3.0 1.4zM333.2,362.5l.6-1.7 2.5 1.7-2.5 1.6zM335.8,362.5l.6-2.0 1.8 2.0-1.8 1.9zM338.2,362.5l.6-1.5 2.2 1.5-2.2 1.5zM340.8,362.5l.6-1.6 1.7 1.6-1.7 1.5zM343.2,362.5l.6-1.9 1.7 1.9-1.7 1.8zM345.8,362.5l.6-0.9 3.0 0.9-3.0 0.9zM348.2,362.5l.6-2.1 2.3 2.1-2.3 2.0zM350.8,362.5l.6-1.3 1.9 1.3-1.9 1.2zM353.2,362.5l.6-1.1 2.6 1.1-2.6 1.0zM355.8,362.5l.6-0.9 1.7 0.9-1.7 0.9zM358.2,362.5l.6-1.4 1.8 1.4-1.8 1.3zM360.8,362.5l.6-1.7 3.0 1.7-3.0 1.6zM363.2,362.5l.6-1.9 2.4 1.9-2.4 1.8zM365.8,362.5l.6-1.2 2.3 1.2-2.3 1.1zM368.2,362.5l.6-0.8 2.8 0.8-2.8 0.8zM370.8,362.5l.6-1.2 2.1 1.2-2.1 1.1zM373.2,362.5l.6-0.8 2.3 0.8-2.3 0.8zM375.8,362.5l.6-1.6 2.2 1.6-2.2 1.5zM378.2,362.5l.6-2.0 2.7 2.0-2.7 1.9zM380.8,362.5l.6-1.0 2.4 1.0-2.4 1.0zM383.2,362.5l.6-2.1 2.4 2.1-2.4 2.0zM385.8,362.5l.6-1.6 1.6 1.6-1.6 1.5zM388.2,362.5l.6-1.4 2.3 1.4-2.3 1.3zM390.8,362.5l.6-1.3 2.3 1.3-2.3 1.2zM393.2,362.5l.6-1.6 2.5 1.6-2.5 1.5zM395.8,362.5l.6-1.4 1.8 1.4-1.8 1.3zM398.2,362.5l.6-1.3 3.2 1.3-3.2 1.3zM400.8,362.5l.6-1.3 1.6 1.3-1.6 1.2zM403.2,362.5l.6-0.8 2.5 0.8-2.5 0.8zM405.8,362.5l.6-0.8 1.7 0.8-1.7 0.8zM408.2,362.5l.6-0.8 2.3 0.8-2.3 0.8zM410.8,362.5l.6-2.2 2.4 2.2-2.4 2.1zM413.2,362.5l.6-1.4 2.3 1.4-2.3 1.3zM415.8,362.5l.6-1.4 2.3 1.4-2.3 1.4zM418.2,362.5l.6-1.8 3.1 1.8-3.1 1.7zM420.8,362.5l.6-1.7 2.3 1.7-2.3 1.6zM423.2,362.5l.6-1.7 3.1 1.7-3.1 1.6zM425.8,362.5l.6-0.9 1.9 0.9-1.9 0.9zM428.2,362.5l.6-1.6 2.7 1.6-2.7 1.5zM430.8,362.5l.6-1.6 2.6 1.6-2.6 1.6zM433.2,362.5l.6-1.9 2.4 1.9-2.4 1.8zM435.8,362.5l.6-1.9 3.2 1.9-3.2 1.8zM438.2,362.5l.6-1.3 3.0 1.3-3.0 1.3zM440.8,362.5l.6-1.8 3.1 1.8-3.1 1.7zM443.2,362.5l.6-0.8 3.1 0.8-3.1 0.8zM445.8,362.5l.6-1.8 3.2 1.8-3.2 1.7zM448.2,362.5l.6-2.2 2.0 2.2-2.0 2.1zM450.8,362.5l.6-1.7 1.8 1.7-1.8 1.6zM453.2,362.5l.6-1.6 3.2 1.6-3.2 1.5zM455.8,362.5l.6-1.0 2.1 1.0-2.1 0.9zM458.2,362.5l.6-0.8 1.9 0.8-1.9 0.8zM460.8,362.5l.6-1.0 1.7 1.0-1.7 0.9zM463.2,362.5l.6-2.2 3.1 2.2-3.1 2.1zM465.8,362.5l.6-1.4 2.8 1.4-2.8 1.3zM468.2,362.5l.6-1.7 2.4 1.7-2.4 1.6zM470.8,362.5l.6-1.3 2.7 1.3-2.7 1.2zM473.2,362.5l.6-1.5 2.0 1.5-2.0 1.4zM475.8,362.5l.6-1.2 2.6 1.2-2.6 1.2zM478.2,362.5l.6-1.6 1.9 1.6-1.9 1.5zM480.8,362.5l.6-1.6 3.1 1.6-3.1 1.5zM483.2,362.5l.6-2.0 2.7 2.0-2.7 1.9zM485.8,362.5l.6-0.8 2.3 0.8-2.3 0.8zM488.2,362.5l.6-0.8 1.6 0.8-1.6 0.8zM490.8,362.5l.6-1.1 2.3 1.1-2.3 1.0zM493.2,362.5l.6-1.8 2.6 1.8-2.6 1.7zM495.8,362.5l.6-1.1 2.8 1.1-2.8 1.0zM498.2,362.5l.6-1.4 2.4 1.4-2.4 1.4zM500.8,362.5l.6-1.1 2.3 1.1-2.3 1.0zM503.2,362.5l.6-1.2 2.8 1.2-2.8 1.1zM505.8,362.5l.6-1.4 2.3 1.4-2.3 1.3zM508.2,362.5l.6-1.4 2.4 1.4-2.4 1.3zM510.8,362.5l.6-1.7 2.8 1.7-2.8 1.6zM513.2,362.5l.6-1.9 2.2 1.9-2.2 1.8zM515.8,362.5l.6-1.9 3.2 1.9-3.2 1.8zM518.2,362.5l.6-2.2 2.8 2.2-2.8 2.1zM520.8,362.5l.6-0.8 3.0 0.8-3.0 0.8zM523.2,362.5l.6-1.9 1.5 1.9-1.5 1.9zM525.8,362.5l.6-1.2 2.1 1.2-2.1 1.1zM528.2,362.5l.6-1.8 2.6 1.8-2.6 1.7zM530.8,362.5l.6-1.1 1.8 1.1-1.8 1.0zM533.2,362.5l.6-0.9 1.7 0.9-1.7 0.9zM535.8,362.5l.6-1.9 3.2 1.9-3.2 1.8zM538.2,362.5l.6-1.0 2.8 1.0-2.8 0.9zM540.8,362.5l.6-2.1 1.8 2.1-1.8 2.0zM543.2,362.5l.6-1.5 2.3 1.5-2.3 1.5zM545.8,362.5l.6-2.2 3.1 2.2-3.1 2.1zM548.2,362.5l.6-0.8 1.9 0.8-1.9 0.8zM550.8,362.5l.6-2.0 2.5 2.0-2.5 1.9zM553.2,362.5l.6-1.5 3.0 1.5-3.0 1.4zM555.8,362.5l.6-1.8 3.2 1.8-3.2 1.7zM558.2,362.5l.6-1.2 1.6 1.2-1.6 1.1zM560.8,362.5l.6-1.7 1.6 1.7-1.6 1.6zM563.2,362.5l.6-1.5 3.0 1.5-3.0 1.5zM565.8,362.5l.6-1.3 2.6 1.3-2.6 1.2zM568.2,362.5l.6-0.9 1.8 0.9-1.8 0.9zM570.8,362.5l.6-1.6 3.1 1.6-3.1 1.5zM573.2,362.5l.6-2.2 1.6 2.2-1.6 2.1zM575.8,362.5l.6-2.1 2.4 2.1-2.4 2.0zM578.2,362.5l.6-1.2 2.2 1.2-2.2 1.1zM580.8,362.5l.6-1.5 2.1 1.5-2.1 1.5zM583.2,362.5l.6-0.9 3.1 0.9-3.1 0.8zM585.8,362.5l.6-1.7 2.6 1.7-2.6 1.7zM588.2,362.5l.6-1.8 3.3 1.8-3.3 1.7zM590.8,362.5l.6-0.9 3.0 0.9-3.0 0.9zM593.2,362.5l.6-1.9 2.1 1.9-2.1 1.8zM595.8,362.5l.6-1.5 2.3 1.5-2.3 1.4zM598.2,362.5l.6-1.0 2.3 1.0-2.3 0.9zM600.8,362.5l.6-0.9 3.2 0.9-3.2 0.9zM603.2,362.5l.6-0.9 2.6 0.9-2.6 0.9zM605.8,362.5l.6-1.5 3.3 1.5-3.3 1.5zM608.2,362.5l.6-1.9 2.1 1.9-2.1 1.8zM610.8,362.5l.6-1.2 1.6 1.2-1.6 1.2zM613.2,362.5l.6-0.8 2.1 0.8-2.1 0.8zM615.8,362.5l.6-2.1 1.6 2.1-1.6 2.0zM618.2,362.5l.6-0.9 2.6 0.9-2.6 0.9zM620.8,362.5l.6-1.2 1.8 1.2-1.8 1.2zM623.2,362.5l.6-2.1 1.6 2.1-1.6 2.0zM625.8,362.5l.6-1.6 2.3 1.6-2.3 1.5zM628.2,362.5l.6-1.2 1.9 1.2-1.9 1.1zM630.8,362.5l.6-0.9 2.2 0.9-2.2 0.9zM633.2,362.5l.6-1.8 2.3 1.8-2.3 1.7zM635.8,362.5l.6-1.9 3.1 1.9-3.1 1.8zM638.2,362.5l.6-0.9 3.1 0.9-3.1 0.9zM640.8,362.5l.6-1.6 2.3 1.6-2.3 1.5zM643.2,362.5l.6-1.5 3.1 1.5-3.1 1.4zM645.8,362.5l.6-1.3 1.7 1.3-1.7 1.2zM648.2,362.5l.6-2.1 1.7 2.1-1.7 2.0zM650.8,362.5l.6-0.8 2.8 0.8-2.8 0.8zM653.2,362.5l.6-1.1 2.0 1.1-2.0 1.1zM655.8,362.5l.6-1.7 3.1 1.7-3.1 1.6zM658.2,362.5l.6-1.2 3.1 1.2-3.1 1.1zM660.8,362.5l.6-1.6 2.6 1.6-2.6 1.5zM663.2,362.5l.6-1.5 1.5 1.5-1.5 1.4zM665.8,362.5l.6-0.9 2.7 0.9-2.7 0.9zM668.2,362.5l.6-1.7 1.7 1.7-1.7 1.6zM670.8,362.5l.6-1.6 2.4 1.6-2.4 1.6zM673.2,362.5l.6-1.5 2.2 1.5-2.2 1.5zM675.8,362.5l.6-1.0 2.1 1.0-2.1 0.9zM678.2,362.5l.6-2.2 1.8 2.2-1.8 2.0zM680.8,362.5l.6-2.0 2.5 2.0-2.5 1.9zM683.2,362.5l.6-0.8 3.0 0.8-3.0 0.8zM685.8,362.5l.6-0.8 3.0 0.8-3.0 0.8zM688.2,362.5l.6-1.2 3.2 1.2-3.2 1.1zM690.8,362.5l.6-1.8 2.1 1.8-2.1 1.7zM693.2,362.5l.6-1.6 3.3 1.6-3.3 1.5zM695.8,362.5l.6-0.9 1.9 0.9-1.9 0.9zM698.2,362.5l.6-1.1 3.0 1.1-3.0 1.1zM700.8,362.5l.6-1.0 1.9 1.0-1.9 1.0zM703.2,362.5l.6-1.6 2.6 1.6-2.6 1.5zM705.8,362.5l.6-1.3 2.5 1.3-2.5 1.2zM708.2,362.5l.6-0.8 1.5 0.8-1.5 0.8zM710.8,362.5l.6-0.8 1.6 0.8-1.6 0.8zM713.2,362.5l.6-1.8 3.3 1.8-3.3 1.8zM715.8,362.5l.6-0.9 2.2 0.9-2.2 0.8zM718.2,362.5l.6-0.8 2.3 0.8-2.3 0.8zM720.8,362.5l.6-1.7 2.6 1.7-2.6 1.6zM723.2,362.5l.6-2.0 2.5 2.0-2.5 1.9zM725.8,362.5l.6-0.8 2.2 0.8-2.2 0.8zM728.2,362.5l.6-1.4 2.1 1.4-2.1 1.3zM730.8,362.5l.6-0.8 2.6 0.8-2.6 0.8zM733.2,362.5l.6-1.4 2.8 1.4-2.8 1.3zM735.8,362.5l.6-1.2 1.6 1.2-1.6 1.2zM738.2,362.5l.6-1.1 1.8 1.1-1.8 1.0zM740.8,362.5l.6-1.4 1.8 1.4-1.8 1.3zM743.2,362.5l.6-0.8 2.4 0.8-2.4 0.8zM745.8,362.5l.6-0.9 1.7 0.9-1.7 0.8zM748.2,362.5l.6-0.8 2.8 0.8-2.8 0.8zM750.8,362.5l.6-1.9 3.0 1.9-3.0 1.8zM753.2,362.5l.6-1.5 2.6 1.5-2.6 1.5zM755.8,362.5l.6-1.8 2.3 1.8-2.3 1.7zM758.2,362.5l.6-1.4 2.8 1.4-2.8 1.4zM760.8,362.5l.6-1.6 2.6 1.6-2.6 1.6zM763.2,362.5l.6-1.7 2.5 1.7-2.5 1.6zM765.8,362.5l.6-1.0 2.1 1.0-2.1 0.9zM768.2,362.5l.6-1.7 2.3 1.7-2.3 1.6zM770.8,362.5l.6-2.0 2.2 2.0-2.2 1.9zM773.2,362.5l.6-1.7 1.7 1.7-1.7 1.6zM775.8,362.5l.6-1.1 3.0 1.1-3.0 1.1zM778.2,362.5l.6-0.9 2.6 0.9-2.6 0.9zM780.8,362.5l.6-0.8 2.6 0.8-2.6 0.8zM783.2,362.5l.6-1.4 3.1 1.4-3.1 1.3zM785.8,362.5l.6-1.9 2.9 1.9-2.9 1.8zM788.2,362.5l.6-1.2 2.7 1.2-2.7 1.1zM790.8,362.5l.6-0.9 2.4 0.9-2.4 0.9zM793.2,362.5l.6-1.3 2.3 1.3-2.3 1.2zM795.8,362.5l.6-1.1 1.9 1.1-1.9 1.0zM798.2,362.5l.6-1.5 2.7 1.5-2.7 1.4zM800.8,362.5l.6-1.5 3.2 1.5-3.2 1.5zM803.2,362.5l.6-1.5 1.8 1.5-1.8 1.4zM805.8,362.5l.6-1.6 2.1 1.6-2.1 1.6zM808.2,362.5l.6-2.1 1.7 2.1-1.7 2.0zM810.8,362.5l.6-1.4 2.7 1.4-2.7 1.3zM813.2,362.5l.6-2.2 2.4 2.2-2.4 2.0zM815.8,362.5l.6-1.2 2.9 1.2-2.9 1.2zM818.2,362.5l.6-1.9 3.1 1.9-3.1 1.8zM820.8,362.5l.6-1.8 1.7 1.8-1.7 1.7zM823.2,362.5l.6-2.2 3.2 2.2-3.2 2.1zM825.8,362.5l.6-1.3 2.7 1.3-2.7 1.3zM828.2,362.5l.6-1.9 3.2 1.9-3.2 1.8zM830.8,362.5l.6-1.8 1.7 1.8-1.7 1.7zM833.2,362.5l.6-0.8 2.2 0.8-2.2 0.8zM835.8,362.5l.6-1.4 2.1 1.4-2.1 1.3zM838.2,362.5l.6-1.8 2.9 1.8-2.9 1.7zM840.8,362.5l.6-1.3 2.8 1.3-2.8 1.2zM843.2,362.5l.6-1.0 3.2 1.0-3.2 0.9zM845.8,362.5l.6-1.0 1.8 1.0-1.8 1.0zM848.2,362.5l.6-1.2 3.1 1.2-3.1 1.2zM850.8,362.5l.6-1.6 2.7 1.6-2.7 1.5zM853.2,362.5l.6-1.9 2.2 1.9-2.2 1.8zM855.8,362.5l.6-2.1 3.3 2.1-3.3 2.0zM858.2,362.5l.6-1.5 2.8 1.5-2.8 1.4zM860.8,362.5l.6-2.0 2.6 2.0-2.6 1.9zM863.2,362.5l.6-0.9 2.7 0.9-2.7 0.8zM865.8,362.5l.6-1.4 3.0 1.4-3.0 1.3zM868.2,362.5l.6-1.0 1.5 1.0-1.5 0.9zM870.8,362.5l.6-0.9 1.8 0.9-1.8 0.9zM873.2,362.5l.6-1.3 1.9 1.3-1.9 1.2zM875.8,362.5l.6-1.2 2.6 1.2-2.6 1.1zM878.2,362.5l.6-0.9 2.4 0.9-2.4 0.9zM880.8,362.5l.6-1.2 1.5 1.2-1.5 1.1zM883.2,362.5l.6-1.7 2.4 1.7-2.4 1.6zM885.8,362.5l.6-1.9 3.1 1.9-3.1 1.8zM888.2,362.5l.6-0.8 2.8 0.8-2.8 0.8zM890.8,362.5l.6-1.4 3.1 1.4-3.1 1.3zM893.2,362.5l.6-0.8 3.0 0.8-3.0 0.8zM895.8,362.5l.6-1.3 1.7 1.3-1.7 1.3zM898.2,362.5l.6-1.4 3.1 1.4-3.1 1.3zM900.8,362.5l.6-0.8 2.2 0.8-2.2 0.8zM903.2,362.5l.6-0.8 1.5 0.8-1.5 0.8zM905.8,362.5l.6-1.9 2.5 1.9-2.5 1.8zM908.2,362.5l.6-1.5 3.1 1.5-3.1 1.5zM910.8,362.5l.6-0.8 3.2 0.8-3.2 0.8zM913.2,362.5l.6-1.8 3.0 1.8-3.0 1.7zM915.8,362.5l.6-1.9 2.2 1.9-2.2 1.8zM918.2,362.5l.6-0.8 3.3 0.8-3.3 0.8zM920.8,362.5l.6-1.6 2.8 1.6-2.8 1.6zM923.2,362.5l.6-1.7 2.0 1.7-2.0 1.6zM925.8,362.5l.6-1.7 2.3 1.7-2.3 1.6zM928.2,362.5l.6-1.0 2.4 1.0-2.4 1.0zM930.8,362.5l.6-1.4 2.0 1.4-2.0 1.3zM933.2,362.5l.6-1.8 3.1 1.8-3.1 1.7zM935.8,362.5l.6-1.6 1.5 1.6-1.5 1.5zM938.2,362.5l.6-1.5 2.6 1.5-2.6 1.4zM940.8,362.5l.6-1.9 2.0 1.9-2.0 1.8zM943.2,362.5l.6-1.0 2.2 1.0-2.2 1.0zM945.8,362.5l.6-0.9 2.9 0.9-2.9 0.9zM948.2,362.5l.6-0.8 2.5 0.8-2.5 0.8zM950.8,362.5l.6-1.9 1.6 1.9-1.6 1.8zM953.2,362.5l.6-0.9 3.3 0.9-3.3 0.9zM955.8,362.5l.6-1.1 2.9 1.1-2.9 1.1zM958.2,362.5l.6-0.8 2.3 0.8-2.3 0.8zM960.8,362.5l.6-0.8 1.9 0.8-1.9 0.8zM963.2,362.5l.6-0.8 2.7 0.8-2.7 0.8zM965.8,362.5l.6-1.4 2.1 1.4-2.1 1.3zM968.2,362.5l.6-1.3 2.7 1.3-2.7 1.2zM970.8,362.5l.6-1.1 1.8 1.1-1.8 1.0zM973.2,362.5l.6-0.8 2.7 0.8-2.7 0.8zM975.8,362.5l.6-1.7 1.9 1.7-1.9 1.6zM978.2,362.5l.6-1.5 3.2 1.5-3.2 1.4zM980.8,362.5l.6-1.4 2.9 1.4-2.9 1.3zM983.2,362.5l.6-1.2 2.5 1.2-2.5 1.1zM985.8,362.5l.6-1.9 2.8 1.9-2.8 1.8zM988.2,362.5l.6-1.6 2.0 1.6-2.0 1.5zM990.8,362.5l.6-0.8 2.4 0.8-2.4 0.8zM993.2,362.5l.6-1.8 2.1 1.8-2.1 1.7zM995.8,362.5l.6-1.8 2.3 1.8-2.3 1.7zM998.2,362.5l.6-0.8 2.5 0.8-2.5 0.8zM1000.8,362.5l.6-1.5 2.1 1.5-2.1 1.4zM1003.2,362.5l.6-1.0 3.3 1.0-3.3 0.9zM1005.8,362.5l.6-1.6 2.8 1.6-2.8 1.5zM1008.2,362.5l.6-0.8 2.8 0.8-2.8 0.8zM1010.8,362.5l.6-0.9 2.4 0.9-2.4 0.9zM1013.2,362.5l.6-1.3 2.2 1.3-2.2 1.2zM1015.8,362.5l.6-1.9 1.9 1.9-1.9 1.8zM1018.2,362.5l.6-2.1 3.0 2.1-3.0 2.0zM1020.8,362.5l.6-1.4 3.1 1.4-3.1 1.3zM1023.2,362.5l.6-1.5 3.2 1.5-3.2 1.4zM1025.8,362.5l.6-1.4 3.3 1.4-3.3 1.3zM1028.2,362.5l.6-1.8 2.7 1.8-2.7 1.7zM1030.8,362.5l.6-2.2 2.8 2.2-2.8 2.1zM1033.2,362.5l.6-1.0 2.7 1.0-2.7 1.0zM1035.8,362.5l.6-0.9 2.2 0.9-2.2 0.9zM1038.2,362.5l.6-1.7 1.8 1.7-1.8 1.7zM1040.8,362.5l.6-1.3 1.9 1.3-1.9 1.2zM1043.2,362.5l.6-1.3 1.9 1.3-1.9 1.2zM1045.8,362.5l.6-1.7 3.0 1.7-3.0 1.7zM1048.2,362.5l.6-1.4 2.8 1.4-2.8 1.3zM1050.8,362.5l.6-1.8 3.0 1.8-3.0 1.7zM1053.2,362.5l.6-1.9 2.7 1.9-2.7 1.8zM1055.8,362.5l.6-1.8 2.8 1.8-2.8 1.7zM1058.2,362.5l.6-1.5 2.9 1.5-2.9 1.4zM1060.8,362.5l.6-1.0 2.8 1.0-2.8 0.9zM1063.2,362.5l.6-1.6 2.5 1.6-2.5 1.6zM1065.8,362.5l.6-1.6 3.2 1.6-3.2 1.5zM1068.2,362.5l.6-1.9 2.7 1.9-2.7 1.8zM1070.8,362.5l.6-2.0 3.1 2.0-3.1 1.9zM1073.2,362.5l.6-1.2 3.0 1.2-3.0 1.1zM1075.8,362.5l.6-2.0 2.5 2.0-2.5 1.9zM1078.2,362.5l.6-2.1 1.8 2.1-1.8 2.0zM1080.8,362.5l.6-1.9 1.9 1.9-1.9 1.8zM1083.2,362.5l.6-1.3 2.4 1.3-2.4 1.2zM1085.8,362.5l.6-1.3 2.4 1.3-2.4 1.2zM1088.2,362.5l.6-0.8 1.6 0.8-1.6 0.8zM1090.8,362.5l.6-1.8 2.0 1.8-2.0 1.7zM1093.2,362.5l.6-1.1 2.8 1.1-2.8 1.0zM1095.8,362.5l.6-1.8 2.5 1.8-2.5 1.7zM1098.2,362.5l.6-1.9 2.1 1.9-2.1 1.8zM1100.8,362.5l.6-2.0 2.6 2.0-2.6 1.9zM1103.2,362.5l.6-2.0 3.0 2.0-3.0 1.9zM1105.8,362.5l.6-1.7 3.2 1.7-3.2 1.7zM1108.2,362.5l.6-1.8 2.3 1.8-2.3 1.7zM1110.8,362.5l.6-0.8 2.2 0.8-2.2 0.8zM1113.2,362.5l.6-1.6 1.5 1.6-1.5 1.5zM1115.8,362.5l.6-1.6 2.2 1.6-2.2 1.5zM1118.2,362.5l.6-1.4 1.6 1.4-1.6 1.3zM1120.8,362.5l.6-0.8 2.7 0.8-2.7 0.8zM1123.2,362.5l.6-1.1 1.8 1.1-1.8 1.0zM1125.8,362.5l.6-2.0 1.6 2.0-1.6 1.9zM1128.2,362.5l.6-1.7 3.0 1.7-3.0 1.7zM1130.8,362.5l.6-2.0 2.7 2.0-2.7 1.9zM1133.2,362.5l.6-0.8 2.3 0.8-2.3 0.8zM1135.8,362.5l.6-2.0 2.2 2.0-2.2 1.9zM1138.2,362.5l.6-1.5 2.8 1.5-2.8 1.4zM1140.8,362.5l.6-1.5 2.1 1.5-2.1 1.5zM1143.2,362.5l.6-1.6 2.3 1.6-2.3 1.5zM1145.8,362.5l.6-1.2 1.6 1.2-1.6 1.1zM1148.2,362.5l.6-1.1 3.3 1.1-3.3 1.0zM1150.8,362.5l.6-1.1 2.1 1.1-2.1 1.1zM1153.2,362.5l.6-2.2 1.7 2.2-1.7 2.1zM1155.8,362.5l.6-1.0 2.2 1.0-2.2 1.0zM1158.2,362.5l.6-1.4 2.2 1.4-2.2 1.3zM1160.8,362.5l.6-1.1 1.8 1.1-1.8 1.0zM1163.2,362.5l.6-1.5 1.8 1.5-1.8 1.4zM1165.8,362.5l.6-0.8 2.9 0.8-2.9 0.8zM1168.2,362.5l.6-1.8 2.2 1.8-2.2 1.7zM1170.8,362.5l.6-2.0 1.8 2.0-1.8 1.9zM1173.2,362.5l.6-2.0 2.7 2.0-2.7 1.9zM1175.8,362.5l.6-1.7 1.6 1.7-1.6 1.6zM1178.2,362.5l.6-1.8 1.8 1.8-1.8 1.7zM1180.8,362.5l.6-1.5 2.5 1.5-2.5 1.4zM1183.2,362.5l.6-0.8 2.0 0.8-2.0 0.8zM1185.8,362.5l.6-2.1 2.9 2.1-2.9 2.0zM1188.2,362.5l.6-1.1 3.3 1.1-3.3 1.1zM1190.8,362.5l.6-0.8 2.7 0.8-2.7 0.8zM1193.2,362.5l.6-1.9 3.0 1.9-3.0 1.8zM1195.8,362.5l.6-1.7 2.8 1.7-2.8 1.6zM1198.2,362.5l.6-1.0 2.9 1.0-2.9 1.0zM1200.8,362.5l.6-1.7 2.5 1.7-2.5 1.6zM1203.2,362.5l.6-1.1 2.7 1.1-2.7 1.0zM1205.8,362.5l.6-0.8 2.4 0.8-2.4 0.8zM1208.2,362.5l.6-1.7 2.1 1.7-2.1 1.6zM1210.8,362.5l.6-1.6 1.6 1.6-1.6 1.5zM1213.2,362.5l.6-1.2 2.4 1.2-2.4 1.1zM1215.8,362.5l.6-1.9 2.5 1.9-2.5 1.8zM1218.2,362.5l.6-2.1 2.2 2.1-2.2 2.0zM1220.8,362.5l.6-2.0 2.5 2.0-2.5 1.9zM1223.2,362.5l.6-1.4 1.8 1.4-1.8 1.3zM1225.8,362.5l.6-1.9 2.9 1.9-2.9 1.8zM1228.2,362.5l.6-1.3 2.1 1.3-2.1 1.2zM1230.8,362.5l.6-1.1 2.1 1.1-2.1 1.0zM1233.2,362.5l.6-0.8 3.0 0.8-3.0 0.8zM1235.8,362.5l.6-1.3 1.8 1.3-1.8 1.3zM1238.2,362.5l.6-1.7 1.8 1.7-1.8 1.6zM1240.8,362.5l.6-2.0 1.5 2.0-1.5 1.9zM1243.2,362.5l.6-1.5 2.7 1.5-2.7 1.4zM1245.8,362.5l.6-1.2 1.8 1.2-1.8 1.1zM1248.2,362.5l.6-2.0 2.6 2.0-2.6 1.9zM1250.8,362.5l.6-1.7 1.8 1.7-1.8 1.6zM1253.2,362.5l.6-0.8 3.1 0.8-3.1 0.8zM1255.8,362.5l.6-0.9 1.6 0.9-1.6 0.9zM1258.2,362.5l.6-1.9 2.5 1.9-2.5 1.8zM1260.8,362.5l.6-0.8 2.5 0.8-2.5 0.8z" stroke="#27553a" stroke-width="0.7" fill="#27553a"/><path d="M275,381.1H1263M275.8,381.1l.6-2.0 2.7 2.0-2.7 1.9zM278.2,381.1l.6-2.6 1.8 2.6-1.8 2.4zM280.8,381.1l.6-0.8 2.2 0.8-2.2 0.8zM283.2,381.1l.6-1.5 3.0 1.5-3.0 1.4zM285.8,381.1l.6-2.6 2.6 2.6-2.6 2.5zM288.2,381.1l.6-2.3 2.7 2.3-2.7 2.1zM290.8,381.1l.6-1.1 2.3 1.1-2.3 1.1zM293.2,381.1l.6-1.2 3.1 1.2-3.1 1.1zM295.8,381.1l.6-0.9 3.0 0.9-3.0 0.8zM298.2,381.1l.6-0.9 2.7 0.9-2.7 0.9zM300.8,381.1l.6-1.6 2.2 1.6-2.2 1.6zM303.2,381.1l.6-3.1 1.5 3.1-1.5 2.9zM305.8,381.1l.6-0.9 3.1 0.9-3.1 0.8zM308.2,381.1l.6-2.1 1.7 2.1-1.7 2.0zM310.8,381.1l.6-3.5 3.2 3.5-3.2 3.3zM313.2,381.1l.6-1.0 2.3 1.0-2.3 1.0zM315.8,381.1l.6-1.1 2.1 1.1-2.1 1.0zM318.2,381.1l.6-2.4 1.8 2.4-1.8 2.3zM320.8,381.1l.6-2.7 1.6 2.7-1.6 2.5zM323.2,381.1l.6-1.2 3.0 1.2-3.0 1.1zM325.8,381.1l.6-1.8 2.3 1.8-2.3 1.7zM328.2,381.1l.6-2.4 2.4 2.4-2.4 2.3zM330.8,381.1l.6-1.8 1.6 1.8-1.6 1.7zM333.2,381.1l.6-2.7 3.2 2.7-3.2 2.6zM335.8,381.1l.6-3.4 2.7 3.4-2.7 3.3zM338.2,381.1l.6-1.7 2.2 1.7-2.2 1.6zM340.8,381.1l.6-2.6 2.7 2.6-2.7 2.5zM343.2,381.1l.6-1.0 1.9 1.0-1.9 1.0zM345.8,381.1l.6-1.7 2.4 1.7-2.4 1.6zM348.2,381.1l.6-3.0 2.4 3.0-2.4 2.8zM350.8,381.1l.6-0.8 3.0 0.8-3.0 0.8zM353.2,381.1l.6-1.9 2.4 1.9-2.4 1.8zM355.8,381.1l.6-1.3 2.3 1.3-2.3 1.3zM358.2,381.1l.6-1.8 2.9 1.8-2.9 1.7zM360.8,381.1l.6-1.0 2.5 1.0-2.5 0.9zM363.2,381.1l.6-1.2 2.8 1.2-2.8 1.1zM365.8,381.1l.6-0.8 2.0 0.8-2.0 0.8zM368.2,381.1l.6-1.7 2.6 1.7-2.6 1.6zM370.8,381.1l.6-0.8 2.3 0.8-2.3 0.8zM373.2,381.1l.6-1.3 2.0 1.3-2.0 1.2zM375.8,381.1l.6-2.0 3.2 2.0-3.2 1.9zM378.2,381.1l.6-2.0 3.2 2.0-3.2 1.9zM380.8,381.1l.6-1.2 3.2 1.2-3.2 1.1zM383.2,381.1l.6-1.7 1.8 1.7-1.8 1.6zM385.8,381.1l.6-2.8 3.1 2.8-3.1 2.7zM388.2,381.1l.6-0.8 2.0 0.8-2.0 0.8zM390.8,381.1l.6-2.9 2.1 2.9-2.1 2.7zM393.2,381.1l.6-1.4 1.5 1.4-1.5 1.3zM395.8,381.1l.6-0.8 2.6 0.8-2.6 0.8zM398.2,381.1l.6-3.5 3.3 3.5-3.3 3.3zM400.8,381.1l.6-2.1 1.5 2.1-1.5 2.0zM403.2,381.1l.6-1.6 2.9 1.6-2.9 1.5zM405.8,381.1l.6-3.0 2.7 3.0-2.7 2.9zM408.2,381.1l.6-1.3 2.4 1.3-2.4 1.3zM410.8,381.1l.6-2.0 2.6 2.0-2.6 1.9zM413.2,381.1l.6-1.4 3.2 1.4-3.2 1.4zM415.8,381.1l.6-3.2 1.8 3.2-1.8 3.0zM418.2,381.1l.6-1.5 3.1 1.5-3.1 1.4zM420.8,381.1l.6-1.5 3.2 1.5-3.2 1.4zM423.2,381.1l.6-2.1 2.8 2.1-2.8 2.0zM425.8,381.1l.6-2.7 1.9 2.7-1.9 2.5zM428.2,381.1l.6-1.5 2.0 1.5-2.0 1.4zM430.8,381.1l.6-2.6 2.7 2.6-2.7 2.5zM433.2,381.1l.6-1.1 3.1 1.1-3.1 1.0zM435.8,381.1l.6-1.9 1.9 1.9-1.9 1.8zM438.2,381.1l.6-1.9 3.3 1.9-3.3 1.8zM440.8,381.1l.6-2.3 2.6 2.3-2.6 2.2zM443.2,381.1l.6-3.3 3.2 3.3-3.2 3.1zM445.8,381.1l.6-2.8 2.3 2.8-2.3 2.7zM448.2,381.1l.6-2.3 3.1 2.3-3.1 2.2zM450.8,381.1l.6-2.9 2.5 2.9-2.5 2.8zM453.2,381.1l.6-1.7 2.2 1.7-2.2 1.6zM455.8,381.1l.6-2.8 2.5 2.8-2.5 2.6zM458.2,381.1l.6-0.8 2.8 0.8-2.8 0.8zM460.8,381.1l.6-3.2 2.9 3.2-2.9 3.1zM463.2,381.1l.6-3.2 3.1 3.2-3.1 3.1zM465.8,381.1l.6-2.2 2.9 2.2-2.9 2.1zM468.2,381.1l.6-1.8 1.7 1.8-1.7 1.7zM470.8,381.1l.6-1.7 2.1 1.7-2.1 1.6zM473.2,381.1l.6-3.3 2.7 3.3-2.7 3.1zM475.8,381.1l.6-2.2 2.6 2.2-2.6 2.1zM478.2,381.1l.6-1.0 2.5 1.0-2.5 1.0zM480.8,381.1l.6-2.7 2.2 2.7-2.2 2.5zM483.2,381.1l.6-1.4 2.2 1.4-2.2 1.3zM485.8,381.1l.6-1.6 2.7 1.6-2.7 1.5zM488.2,381.1l.6-1.1 1.7 1.1-1.7 1.0zM490.8,381.1l.6-1.6 2.8 1.6-2.8 1.5zM493.2,381.1l.6-2.8 2.7 2.8-2.7 2.7zM495.8,381.1l.6-3.3 2.2 3.3-2.2 3.2zM498.2,381.1l.6-0.8 2.4 0.8-2.4 0.8zM500.8,381.1l.6-1.9 1.8 1.9-1.8 1.8zM503.2,381.1l.6-2.6 2.1 2.6-2.1 2.4zM505.8,381.1l.6-1.4 2.1 1.4-2.1 1.3zM508.2,381.1l.6-3.3 1.5 3.3-1.5 3.2zM510.8,381.1l.6-1.7 2.0 1.7-2.0 1.6zM513.2,381.1l.6-1.3 2.3 1.3-2.3 1.2zM515.8,381.1l.6-1.3 3.2 1.3-3.2 1.3zM518.2,381.1l.6-2.1 2.8 2.1-2.8 2.0zM520.8,381.1l.6-1.2 2.3 1.2-2.3 1.1zM523.2,381.1l.6-2.4 3.0 2.4-3.0 2.3zM525.8,381.1l.6-1.4 2.3 1.4-2.3 1.3zM528.2,381.1l.6-3.1 3.0 3.1-3.0 2.9zM530.8,381.1l.6-1.3 2.5 1.3-2.5 1.3zM533.2,381.1l.6-2.8 2.2 2.8-2.2 2.7zM535.8,381.1l.6-2.6 2.7 2.6-2.7 2.5zM538.2,381.1l.6-3.4 2.5 3.4-2.5 3.3zM540.8,381.1l.6-2.6 2.1 2.6-2.1 2.5zM543.2,381.1l.6-2.8 2.1 2.8-2.1 2.6zM545.8,381.1l.6-2.1 2.1 2.1-2.1 2.0zM548.2,381.1l.6-1.6 1.7 1.6-1.7 1.5zM550.8,381.1l.6-1.3 2.5 1.3-2.5 1.3zM553.2,381.1l.6-1.4 1.6 1.4-1.6 1.3zM555.8,381.1l.6-3.0 2.0 3.0-2.0 2.8zM558.2,381.1l.6-3.3 2.6 3.3-2.6 3.2zM560.8,381.1l.6-1.8 3.1 1.8-3.1 1.7zM563.2,381.1l.6-3.2 2.1 3.2-2.1 3.1zM565.8,381.1l.6-1.1 2.7 1.1-2.7 1.0zM568.2,381.1l.6-3.1 2.6 3.1-2.6 2.9zM570.8,381.1l.6-2.9 2.2 2.9-2.2 2.8zM573.2,381.1l.6-2.4 2.0 2.4-2.0 2.3zM575.8,381.1l.6-1.8 2.2 1.8-2.2 1.7zM578.2,381.1l.6-1.8 2.2 1.8-2.2 1.7zM580.8,381.1l.6-3.0 1.8 3.0-1.8 2.8zM583.2,381.1l.6-1.3 2.0 1.3-2.0 1.2zM585.8,381.1l.6-3.4 2.4 3.4-2.4 3.2zM588.2,381.1l.6-0.8 3.0 0.8-3.0 0.8zM590.8,381.1l.6-3.1 3.0 3.1-3.0 3.0zM593.2,381.1l.6-1.7 2.8 1.7-2.8 1.6zM595.8,381.1l.6-1.6 1.7 1.6-1.7 1.5zM598.2,381.1l.6-3.1 3.0 3.1-3.0 3.0zM600.8,381.1l.6-1.3 3.1 1.3-3.1 1.2zM603.2,381.1l.6-0.8 2.1 0.8-2.1 0.8zM605.8,381.1l.6-0.8 1.8 0.8-1.8 0.8zM608.2,381.1l.6-1.2 2.8 1.2-2.8 1.1zM610.8,381.1l.6-1.5 1.8 1.5-1.8 1.5zM613.2,381.1l.6-1.2 2.1 1.2-2.1 1.2zM615.8,381.1l.6-3.1 2.6 3.1-2.6 3.0zM618.2,381.1l.6-1.0 2.7 1.0-2.7 0.9zM620.8,381.1l.6-2.2 2.3 2.2-2.3 2.1zM623.2,381.1l.6-2.2 2.7 2.2-2.7 2.1zM625.8,381.1l.6-2.9 2.4 2.9-2.4 2.8zM628.2,381.1l.6-2.5 2.3 2.5-2.3 2.4zM630.8,381.1l.6-2.5 2.2 2.5-2.2 2.4zM633.2,381.1l.6-1.9 2.4 1.9-2.4 1.8zM635.8,381.1l.6-2.7 2.0 2.7-2.0 2.6zM638.2,381.1l.6-3.3 2.4 3.3-2.4 3.1zM640.8,381.1l.6-3.1 2.7 3.1-2.7 2.9zM643.2,381.1l.6-3.4 2.7 3.4-2.7 3.2zM645.8,381.1l.6-1.9 2.2 1.9-2.2 1.8zM648.2,381.1l.6-2.4 2.9 2.4-2.9 2.3zM650.8,381.1l.6-3.0 1.7 3.0-1.7 2.9zM653.2,381.1l.6-0.9 1.7 0.9-1.7 0.8zM655.8,381.1l.6-0.9 1.6 0.9-1.6 0.9zM658.2,381.1l.6-0.8 1.9 0.8-1.9 0.8zM660.8,381.1l.6-1.0 2.7 1.0-2.7 1.0zM663.2,381.1l.6-2.4 3.2 2.4-3.2 2.3zM665.8,381.1l.6-3.4 2.8 3.4-2.8 3.2zM668.2,381.1l.6-3.4 1.6 3.4-1.6 3.2zM670.8,381.1l.6-1.3 3.2 1.3-3.2 1.3zM673.2,381.1l.6-2.0 1.9 2.0-1.9 1.9zM675.8,381.1l.6-2.8 2.3 2.8-2.3 2.7zM678.2,381.1l.6-2.2 2.1 2.2-2.1 2.1zM680.8,381.1l.6-1.4 1.7 1.4-1.7 1.3zM683.2,381.1l.6-2.4 3.2 2.4-3.2 2.3zM685.8,381.1l.6-3.5 2.9 3.5-2.9 3.3zM688.2,381.1l.6-3.3 2.2 3.3-2.2 3.1zM690.8,381.1l.6-1.5 3.2 1.5-3.2 1.5zM693.2,381.1l.6-2.4 2.7 2.4-2.7 2.3zM695.8,381.1l.6-0.8 1.9 0.8-1.9 0.8zM698.2,381.1l.6-2.1 2.8 2.1-2.8 1.9zM700.8,381.1l.6-3.0 2.9 3.0-2.9 2.9zM703.2,381.1l.6-1.7 2.2 1.7-2.2 1.6zM705.8,381.1l.6-3.1 3.3 3.1-3.3 3.0zM708.2,381.1l.6-2.1 1.9 2.1-1.9 2.0zM710.8,381.1l.6-2.4 2.5 2.4-2.5 2.3zM713.2,381.1l.6-1.7 1.9 1.7-1.9 1.6zM715.8,381.1l.6-1.8 2.6 1.8-2.6 1.7zM718.2,381.1l.6-1.1 2.5 1.1-2.5 1.0zM720.8,381.1l.6-3.4 2.8 3.4-2.8 3.2zM723.2,381.1l.6-1.4 2.3 1.4-2.3 1.3zM725.8,381.1l.6-1.0 2.8 1.0-2.8 0.9zM728.2,381.1l.6-2.5 1.8 2.5-1.8 2.3zM730.8,381.1l.6-2.2 2.6 2.2-2.6 2.1zM733.2,381.1l.6-2.3 2.2 2.3-2.2 2.2zM735.8,381.1l.6-1.6 2.1 1.6-2.1 1.5zM738.2,381.1l.6-3.5 2.1 3.5-2.1 3.3zM740.8,381.1l.6-2.1 2.3 2.1-2.3 2.0zM743.2,381.1l.6-1.2 2.2 1.2-2.2 1.1zM745.8,381.1l.6-1.3 2.1 1.3-2.1 1.2zM748.2,381.1l.6-1.7 2.1 1.7-2.1 1.6zM750.8,381.1l.6-3.3 2.0 3.3-2.0 3.2zM753.2,381.1l.6-1.6 2.7 1.6-2.7 1.5zM755.8,381.1l.6-1.8 2.4 1.8-2.4 1.7zM758.2,381.1l.6-2.5 1.6 2.5-1.6 2.4zM760.8,381.1l.6-2.6 1.7 2.6-1.7 2.5zM763.2,381.1l.6-1.4 3.0 1.4-3.0 1.3zM765.8,381.1l.6-3.5 2.7 3.5-2.7 3.3zM768.2,381.1l.6-1.2 2.3 1.2-2.3 1.1zM770.8,381.1l.6-1.5 3.0 1.5-3.0 1.4zM773.2,381.1l.6-1.4 1.9 1.4-1.9 1.3zM775.8,381.1l.6-2.5 2.6 2.5-2.6 2.4zM778.2,381.1l.6-2.4 2.4 2.4-2.4 2.2zM780.8,381.1l.6-3.4 2.3 3.4-2.3 3.2zM783.2,381.1l.6-3.3 2.2 3.3-2.2 3.2zM785.8,381.1l.6-2.0 2.1 2.0-2.1 1.9zM788.2,381.1l.6-2.7 2.9 2.7-2.9 2.6zM790.8,381.1l.6-1.4 2.4 1.4-2.4 1.3zM793.2,381.1l.6-2.7 2.4 2.7-2.4 2.6zM795.8,381.1l.6-2.6 2.6 2.6-2.6 2.4zM798.2,381.1l.6-2.7 2.1 2.7-2.1 2.6zM800.8,381.1l.6-1.6 1.5 1.6-1.5 1.5zM803.2,381.1l.6-3.2 2.9 3.2-2.9 3.0zM805.8,381.1l.6-1.8 3.2 1.8-3.2 1.7zM808.2,381.1l.6-3.2 1.8 3.2-1.8 3.1zM810.8,381.1l.6-3.0 2.3 3.0-2.3 2.9zM813.2,381.1l.6-1.6 2.0 1.6-2.0 1.5zM815.8,381.1l.6-1.9 1.6 1.9-1.6 1.8zM818.2,381.1l.6-0.8 1.7 0.8-1.7 0.8zM820.8,381.1l.6-1.6 1.8 1.6-1.8 1.5zM823.2,381.1l.6-1.0 3.0 1.0-3.0 1.0zM825.8,381.1l.6-1.8 2.4 1.8-2.4 1.7zM828.2,381.1l.6-2.4 3.2 2.4-3.2 2.3zM830.8,381.1l.6-1.1 1.9 1.1-1.9 1.1zM833.2,381.1l.6-3.1 3.1 3.1-3.1 3.0zM835.8,381.1l.6-3.3 2.5 3.3-2.5 3.1zM838.2,381.1l.6-1.7 1.8 1.7-1.8 1.6zM840.8,381.1l.6-3.2 2.9 3.2-2.9 3.1zM843.2,381.1l.6-2.2 2.9 2.2-2.9 2.1zM845.8,381.1l.6-1.4 2.5 1.4-2.5 1.4zM848.2,381.1l.6-3.2 1.7 3.2-1.7 3.1zM850.8,381.1l.6-2.4 1.8 2.4-1.8 2.3zM853.2,381.1l.6-3.0 3.0 3.0-3.0 2.9zM855.8,381.1l.6-2.5 2.3 2.5-2.3 2.4zM858.2,381.1l.6-0.8 2.4 0.8-2.4 0.8zM860.8,381.1l.6-1.7 2.2 1.7-2.2 1.6zM863.2,381.1l.6-0.9 3.2 0.9-3.2 0.9zM865.8,381.1l.6-2.2 2.5 2.2-2.5 2.1zM868.2,381.1l.6-3.1 3.1 3.1-3.1 2.9zM870.8,381.1l.6-2.2 2.5 2.2-2.5 2.1zM873.2,381.1l.6-3.1 2.2 3.1-2.2 2.9zM875.8,381.1l.6-3.2 1.5 3.2-1.5 3.1zM878.2,381.1l.6-2.9 2.4 2.9-2.4 2.8zM880.8,381.1l.6-2.4 3.3 2.4-3.3 2.3zM883.2,381.1l.6-1.3 2.2 1.3-2.2 1.2zM885.8,381.1l.6-2.9 2.8 2.9-2.8 2.8zM888.2,381.1l.6-2.2 2.9 2.2-2.9 2.1zM890.8,381.1l.6-2.6 3.1 2.6-3.1 2.5zM893.2,381.1l.6-2.5 2.2 2.5-2.2 2.4zM895.8,381.1l.6-1.5 1.6 1.5-1.6 1.4zM898.2,381.1l.6-1.0 1.6 1.0-1.6 1.0zM900.8,381.1l.6-3.4 1.8 3.4-1.8 3.3zM903.2,381.1l.6-2.4 1.7 2.4-1.7 2.3zM905.8,381.1l.6-3.4 2.5 3.4-2.5 3.2zM908.2,381.1l.6-1.2 3.0 1.2-3.0 1.1zM910.8,381.1l.6-3.1 3.3 3.1-3.3 3.0zM913.2,381.1l.6-1.3 2.2 1.3-2.2 1.3zM915.8,381.1l.6-2.6 2.0 2.6-2.0 2.4zM918.2,381.1l.6-2.3 2.8 2.3-2.8 2.2zM920.8,381.1l.6-2.8 3.0 2.8-3.0 2.7zM923.2,381.1l.6-2.8 2.0 2.8-2.0 2.7zM925.8,381.1l.6-2.8 2.3 2.8-2.3 2.7zM928.2,381.1l.6-1.2 1.5 1.2-1.5 1.1zM930.8,381.1l.6-2.4 2.1 2.4-2.1 2.3zM933.2,381.1l.6-1.0 2.4 1.0-2.4 0.9zM935.8,381.1l.6-1.9 2.1 1.9-2.1 1.8zM938.2,381.1l.6-2.3 2.5 2.3-2.5 2.2zM940.8,381.1l.6-2.2 3.3 2.2-3.3 2.1zM943.2,381.1l.6-3.2 2.0 3.2-2.0 3.1zM945.8,381.1l.6-3.1 2.1 3.1-2.1 3.0zM948.2,381.1l.6-3.3 1.6 3.3-1.6 3.2zM950.8,381.1l.6-1.6 3.2 1.6-3.2 1.5zM953.2,381.1l.6-2.6 2.8 2.6-2.8 2.4zM955.8,381.1l.6-1.3 1.7 1.3-1.7 1.2zM958.2,381.1l.6-3.4 1.6 3.4-1.6 3.2zM960.8,381.1l.6-1.2 2.3 1.2-2.3 1.1zM963.2,381.1l.6-3.0 2.7 3.0-2.7 2.8zM965.8,381.1l.6-3.5 2.9 3.5-2.9 3.3zM968.2,381.1l.6-1.9 3.1 1.9-3.1 1.8zM970.8,381.1l.6-1.6 1.6 1.6-1.6 1.5zM973.2,381.1l.6-3.4 3.1 3.4-3.1 3.2zM975.8,381.1l.6-2.5 2.4 2.5-2.4 2.4zM978.2,381.1l.6-1.3 1.9 1.3-1.9 1.2zM980.8,381.1l.6-0.9 1.7 0.9-1.7 0.8zM983.2,381.1l.6-2.0 3.1 2.0-3.1 1.9zM985.8,381.1l.6-3.3 2.4 3.3-2.4 3.1zM988.2,381.1l.6-2.6 2.3 2.6-2.3 2.5zM990.8,381.1l.6-2.9 2.8 2.9-2.8 2.7zM993.2,381.1l.6-3.5 3.0 3.5-3.0 3.3zM995.8,381.1l.6-2.6 2.6 2.6-2.6 2.5zM998.2,381.1l.6-1.2 2.3 1.2-2.3 1.1zM1000.8,381.1l.6-2.0 1.8 2.0-1.8 1.9zM1003.2,381.1l.6-1.3 2.2 1.3-2.2 1.2zM1005.8,381.1l.6-1.2 2.6 1.2-2.6 1.1zM1008.2,381.1l.6-1.6 3.3 1.6-3.3 1.5zM1010.8,381.1l.6-2.6 2.4 2.6-2.4 2.5zM1013.2,381.1l.6-1.9 2.2 1.9-2.2 1.8zM1015.8,381.1l.6-1.3 3.2 1.3-3.2 1.2zM1018.2,381.1l.6-3.3 2.7 3.3-2.7 3.1zM1020.8,381.1l.6-2.5 1.8 2.5-1.8 2.4zM1023.2,381.1l.6-2.2 1.8 2.2-1.8 2.1zM1025.8,381.1l.6-1.6 2.6 1.6-2.6 1.5zM1028.2,381.1l.6-1.2 1.9 1.2-1.9 1.1zM1030.8,381.1l.6-2.7 2.4 2.7-2.4 2.6zM1033.2,381.1l.6-3.2 1.8 3.2-1.8 3.0zM1035.8,381.1l.6-0.9 3.2 0.9-3.2 0.9zM1038.2,381.1l.6-2.4 2.7 2.4-2.7 2.3zM1040.8,381.1l.6-2.3 1.8 2.3-1.8 2.1zM1043.2,381.1l.6-3.4 2.4 3.4-2.4 3.3zM1045.8,381.1l.6-3.2 1.8 3.2-1.8 3.1zM1048.2,381.1l.6-1.5 2.5 1.5-2.5 1.4zM1050.8,381.1l.6-1.4 3.0 1.4-3.0 1.3zM1053.2,381.1l.6-1.4 1.6 1.4-1.6 1.4zM1055.8,381.1l.6-1.2 2.0 1.2-2.0 1.1zM1058.2,381.1l.6-3.4 3.1 3.4-3.1 3.2zM1060.8,381.1l.6-2.6 2.3 2.6-2.3 2.4zM1063.2,381.1l.6-0.8 3.0 0.8-3.0 0.8zM1065.8,381.1l.6-1.1 1.9 1.1-1.9 1.0zM1068.2,381.1l.6-1.9 3.1 1.9-3.1 1.8zM1070.8,381.1l.6-1.2 1.6 1.2-1.6 1.2zM1073.2,381.1l.6-3.2 1.5 3.2-1.5 3.1zM1075.8,381.1l.6-2.8 1.8 2.8-1.8 2.6zM1078.2,381.1l.6-1.5 1.9 1.5-1.9 1.5zM1080.8,381.1l.6-1.9 3.2 1.9-3.2 1.8zM1083.2,381.1l.6-3.1 2.5 3.1-2.5 2.9zM1085.8,381.1l.6-0.9 1.8 0.9-1.8 0.9zM1088.2,381.1l.6-1.5 2.9 1.5-2.9 1.5zM1090.8,381.1l.6-3.3 1.5 3.3-1.5 3.1zM1093.2,381.1l.6-1.6 3.2 1.6-3.2 1.6zM1095.8,381.1l.6-1.1 1.6 1.1-1.6 1.1zM1098.2,381.1l.6-1.4 3.1 1.4-3.1 1.4zM1100.8,381.1l.6-1.4 2.8 1.4-2.8 1.4zM1103.2,381.1l.6-1.0 2.7 1.0-2.7 1.0zM1105.8,381.1l.6-1.2 2.6 1.2-2.6 1.1zM1108.2,381.1l.6-2.8 3.1 2.8-3.1 2.6zM1110.8,381.1l.6-1.9 3.3 1.9-3.3 1.8zM1113.2,381.1l.6-1.8 3.2 1.8-3.2 1.7zM1115.8,381.1l.6-3.3 3.3 3.3-3.3 3.1zM1118.2,381.1l.6-1.0 2.0 1.0-2.0 0.9zM1120.8,381.1l.6-2.6 3.1 2.6-3.1 2.5zM1123.2,381.1l.6-1.4 2.9 1.4-2.9 1.3zM1125.8,381.1l.6-2.0 1.5 2.0-1.5 1.9zM1128.2,381.1l.6-0.9 1.5 0.9-1.5 0.9zM1130.8,381.1l.6-1.3 3.2 1.3-3.2 1.3zM1133.2,381.1l.6-2.6 3.1 2.6-3.1 2.5zM1135.8,381.1l.6-3.3 2.2 3.3-2.2 3.1zM1138.2,381.1l.6-2.6 2.7 2.6-2.7 2.5zM1140.8,381.1l.6-2.6 1.7 2.6-1.7 2.5zM1143.2,381.1l.6-3.2 1.8 3.2-1.8 3.0zM1145.8,381.1l.6-1.9 2.7 1.9-2.7 1.8zM1148.2,381.1l.6-2.8 3.0 2.8-3.0 2.6zM1150.8,381.1l.6-1.6 2.0 1.6-2.0 1.5zM1153.2,381.1l.6-2.7 1.6 2.7-1.6 2.6zM1155.8,381.1l.6-3.1 2.1 3.1-2.1 3.0zM1158.2,381.1l.6-1.8 2.1 1.8-2.1 1.7zM1160.8,381.1l.6-2.7 1.8 2.7-1.8 2.6zM1163.2,381.1l.6-1.1 1.6 1.1-1.6 1.0zM1165.8,381.1l.6-1.1 2.6 1.1-2.6 1.0zM1168.2,381.1l.6-3.5 1.5 3.5-1.5 3.3zM1170.8,381.1l.6-2.0 2.1 2.0-2.1 1.9zM1173.2,381.1l.6-1.6 2.1 1.6-2.1 1.5zM1175.8,381.1l.6-1.0 2.3 1.0-2.3 1.0zM1178.2,381.1l.6-1.4 1.6 1.4-1.6 1.4zM1180.8,381.1l.6-1.1 3.2 1.1-3.2 1.0zM1183.2,381.1l.6-2.7 3.3 2.7-3.3 2.6zM1185.8,381.1l.6-3.0 2.8 3.0-2.8 2.8zM1188.2,381.1l.6-1.3 1.7 1.3-1.7 1.3zM1190.8,381.1l.6-3.5 2.7 3.5-2.7 3.3zM1193.2,381.1l.6-2.7 1.8 2.7-1.8 2.6zM1195.8,381.1l.6-2.9 2.5 2.9-2.5 2.8zM1198.2,381.1l.6-0.9 1.9 0.9-1.9 0.9zM1200.8,381.1l.6-3.4 2.6 3.4-2.6 3.2zM1203.2,381.1l.6-1.0 1.6 1.0-1.6 0.9zM1205.8,381.1l.6-2.8 2.1 2.8-2.1 2.7zM1208.2,381.1l.6-2.0 1.7 2.0-1.7 1.9zM1210.8,381.1l.6-1.2 2.4 1.2-2.4 1.1zM1213.2,381.1l.6-1.9 1.8 1.9-1.8 1.8zM1215.8,381.1l.6-1.1 2.3 1.1-2.3 1.1zM1218.2,381.1l.6-1.0 1.6 1.0-1.6 1.0zM1220.8,381.1l.6-2.0 1.6 2.0-1.6 1.9zM1223.2,381.1l.6-2.8 2.9 2.8-2.9 2.6zM1225.8,381.1l.6-2.7 3.2 2.7-3.2 2.5zM1228.2,381.1l.6-1.2 2.3 1.2-2.3 1.1zM1230.8,381.1l.6-1.9 1.6 1.9-1.6 1.8zM1233.2,381.1l.6-3.1 1.6 3.1-1.6 3.0zM1235.8,381.1l.6-3.5 2.7 3.5-2.7 3.3zM1238.2,381.1l.6-3.5 1.6 3.5-1.6 3.3zM1240.8,381.1l.6-3.2 3.2 3.2-3.2 3.0zM1243.2,381.1l.6-2.9 2.5 2.9-2.5 2.7zM1245.8,381.1l.6-2.5 2.4 2.5-2.4 2.4zM1248.2,381.1l.6-3.1 2.5 3.1-2.5 2.9zM1250.8,381.1l.6-2.2 2.2 2.2-2.2 2.1zM1253.2,381.1l.6-2.5 2.6 2.5-2.6 2.3zM1255.8,381.1l.6-3.3 2.9 3.3-2.9 3.2zM1258.2,381.1l.6-1.6 2.8 1.6-2.8 1.5zM1260.8,381.1l.6-1.4 2.4 1.4-2.4 1.3z" stroke="#27553a" stroke-width="0.7" fill="#27553a"/><path d="M275,424.3H747M306.0,424.3l.6-1.7 3.3 1.7-3.3 1.7zM362.0,424.3l.6-2.1 2.7 2.1-2.7 2.1zM370.0,424.3l.6-2.1 3.3 2.1-3.3 2.1zM373.0,424.3l.6-2.2 2.9 2.2-2.9 2.2zM377.0,424.3l.6-3.5 2.5 3.5-2.5 3.5zM390.0,424.3l.6-2.4 2.7 2.4-2.7 2.4zM411.0,424.3l.6-3.1 2.1 3.1-2.1 3.1zM419.0,424.3l.6-1.9 2.9 1.9-2.9 1.9zM422.0,424.3l.6-2.8 3.0 2.8-3.0 2.8zM431.0,424.3l.6-2.5 2.4 2.5-2.4 2.5zM436.0,424.3l.6-2.2 2.3 2.2-2.3 2.2zM441.0,424.3l.6-1.6 2.7 1.6-2.7 1.6zM444.0,424.3l.6-3.0 3.3 3.0-3.3 3.0zM477.0,424.3l.6-2.7 2.9 2.7-2.9 2.7zM480.0,424.3l.6-1.9 3.4 1.9-3.4 1.9zM483.0,424.3l.6-3.1 3.2 3.1-3.2 3.1zM497.0,424.3l.6-1.8 3.0 1.8-3.0 1.8zM500.0,424.3l.6-2.0 2.8 2.0-2.8 2.0zM505.0,424.3l.6-2.2 2.1 2.2-2.1 2.2zM509.0,424.3l.6-1.8 3.4 1.8-3.4 1.8zM514.0,424.3l.6-2.8 2.4 2.8-2.4 2.8zM519.0,424.3l.6-2.1 2.3 2.1-2.3 2.1zM544.0,424.3l.6-3.2 3.1 3.2-3.1 3.2zM547.0,424.3l.6-3.2 2.9 3.2-2.9 3.2zM551.0,424.3l.6-2.1 2.1 2.1-2.1 2.1zM576.0,424.3l.6-3.4 3.1 3.4-3.1 3.4zM580.0,424.3l.6-1.9 2.9 1.9-2.9 1.9zM584.0,424.3l.6-2.2 3.1 2.2-3.1 2.2zM614.0,424.3l.6-1.6 2.6 1.6-2.6 1.6zM622.0,424.3l.6-2.4 2.9 2.4-2.9 2.4zM630.0,424.3l.6-2.0 2.1 2.0-2.1 2.0zM634.0,424.3l.6-2.5 2.9 2.5-2.9 2.5zM638.0,424.3l.6-2.7 2.7 2.7-2.7 2.7zM642.0,424.3l.6-3.3 3.2 3.3-3.2 3.3zM645.0,424.3l.6-1.9 2.3 1.9-2.3 1.9zM649.0,424.3l.6-3.3 2.7 3.3-2.7 3.3zM676.0,424.3l.6-2.6 3.0 2.6-3.0 2.6zM681.0,424.3l.6-2.7 3.4 2.7-3.4 2.7zM685.0,424.3l.6-3.5 2.6 3.5-2.6 3.5zM710.0,424.3l.6-2.3 3.3 2.3-3.3 2.3zM715.0,424.3l.6-3.2 2.9 3.2-2.9 3.2zM719.0,424.3l.6-3.1 3.4 3.1-3.4 3.1z" stroke="#1f4e44" stroke-width="0.7" fill="#1f4e44"/><path d="M275,435.5H747M306.0,435.5l.6-2.1 2.1 2.1-2.1 2.1zM362.0,435.5l.6-1.8 3.5 1.8-3.5 1.8zM370.0,435.5l.6-1.9 2.3 1.9-2.3 1.9zM377.0,435.5l.6-2.1 3.0 2.1-3.0 2.1zM390.0,435.5l.6-2.6 3.1 2.6-3.1 2.6zM411.0,435.5l.6-2.3 3.2 2.3-3.2 2.3zM419.0,435.5l.6-2.2 3.5 2.2-3.5 2.2zM431.0,435.5l.6-2.8 2.5 2.8-2.5 2.8zM434.0,435.5l.6-3.1 2.9 3.1-2.9 3.1zM437.0,435.5l.6-3.2 2.6 3.2-2.6 3.2zM441.0,435.5l.6-3.1 2.5 3.1-2.5 3.1zM444.0,435.5l.6-3.2 2.3 3.2-2.3 3.2zM477.0,435.5l.6-1.9 2.6 1.9-2.6 1.9zM481.0,435.5l.6-2.3 2.0 2.3-2.0 2.3zM484.0,435.5l.6-1.7 2.0 1.7-2.0 1.7zM497.0,435.5l.6-2.3 2.7 2.3-2.7 2.3zM500.0,435.5l.6-2.7 3.3 2.7-3.3 2.7zM505.0,435.5l.6-3.3 2.8 3.3-2.8 3.3zM508.0,435.5l.6-2.3 2.3 2.3-2.3 2.3zM512.0,435.5l.6-2.2 2.9 2.2-2.9 2.2zM516.0,435.5l.6-2.5 2.6 2.5-2.6 2.5zM519.0,435.5l.6-2.3 2.9 2.3-2.9 2.3zM544.0,435.5l.6-2.7 2.1 2.7-2.1 2.7zM548.0,435.5l.6-1.9 2.0 1.9-2.0 1.9zM576.0,435.5l.6-2.9 3.4 2.9-3.4 2.9zM580.0,435.5l.6-2.5 2.8 2.5-2.8 2.5zM585.0,435.5l.6-1.8 3.0 1.8-3.0 1.8zM614.0,435.5l.6-2.5 2.8 2.5-2.8 2.5zM622.0,435.5l.6-2.8 2.1 2.8-2.1 2.8zM625.0,435.5l.6-2.4 2.5 2.4-2.5 2.4zM630.0,435.5l.6-1.7 3.1 1.7-3.1 1.7zM633.0,435.5l.6-2.2 2.6 2.2-2.6 2.2zM637.0,435.5l.6-2.1 3.4 2.1-3.4 2.1zM641.0,435.5l.6-3.1 3.4 3.1-3.4 3.1zM646.0,435.5l.6-3.5 3.0 3.5-3.0 3.5zM649.0,435.5l.6-3.4 3.1 3.4-3.1 3.4zM676.0,435.5l.6-2.8 3.1 2.8-3.1 2.8zM679.0,435.5l.6-1.8 2.7 1.8-2.7 1.8zM684.0,435.5l.6-3.1 2.2 3.1-2.2 3.1zM710.0,435.5l.6-2.9 2.9 2.9-2.9 2.9zM715.0,435.5l.6-1.7 2.2 1.7-2.2 1.7z" stroke="#1f4e44" stroke-width="0.7" fill="#1f4e44"/><path d="M275,448.9H747M306.0,448.9l.6-2.1 2.1 2.1-2.1 2.1zM362.0,448.9l.6-3.5 2.9 3.5-2.9 3.5zM365.0,448.9l.6-1.9 3.5 1.9-3.5 1.9zM370.0,448.9l.6-2.6 2.9 2.6-2.9 2.6zM377.0,448.9l.6-3.3 3.3 3.3-3.3 3.3zM390.0,448.9l.6-3.0 3.2 3.0-3.2 3.0zM411.0,448.9l.6-3.4 2.7 3.4-2.7 3.4zM414.0,448.9l.6-2.8 3.4 2.8-3.4 2.8zM419.0,448.9l.6-2.2 2.6 2.2-2.6 2.2zM431.0,448.9l.6-2.9 2.7 2.9-2.7 2.9zM435.0,448.9l.6-2.1 3.4 2.1-3.4 2.1zM438.0,448.9l.6-3.3 2.5 3.3-2.5 3.3zM442.0,448.9l.6-3.5 3.0 3.5-3.0 3.5zM477.0,448.9l.6-3.5 3.3 3.5-3.3 3.5zM482.0,448.9l.6-2.9 2.4 2.9-2.4 2.9zM485.0,448.9l.6-3.1 3.2 3.1-3.2 3.1zM497.0,448.9l.6-2.6 2.1 2.6-2.1 2.6zM500.0,448.9l.6-1.8 3.3 1.8-3.3 1.8zM503.0,448.9l.6-2.0 2.1 2.0-2.1 2.0zM507.0,448.9l.6-1.8 2.4 1.8-2.4 1.8zM511.0,448.9l.6-1.8 2.8 1.8-2.8 1.8zM515.0,448.9l.6-2.3 2.2 2.3-2.2 2.3zM519.0,448.9l.6-2.7 3.1 2.7-3.1 2.7zM544.0,448.9l.6-2.1 3.4 2.1-3.4 2.1zM547.0,448.9l.6-2.8 2.1 2.8-2.1 2.8zM551.0,448.9l.6-2.3 3.5 2.3-3.5 2.3zM576.0,448.9l.6-2.5 2.4 2.5-2.4 2.5zM580.0,448.9l.6-2.6 2.7 2.6-2.7 2.6zM584.0,448.9l.6-2.3 2.2 2.3-2.2 2.3zM614.0,448.9l.6-2.6 2.6 2.6-2.6 2.6zM617.0,448.9l.6-3.3 3.0 3.3-3.0 3.3zM622.0,448.9l.6-1.7 3.5 1.7-3.5 1.7zM630.0,448.9l.6-3.1 2.6 3.1-2.6 3.1zM634.0,448.9l.6-2.0 3.2 2.0-3.2 2.0zM639.0,448.9l.6-3.6 3.1 3.6-3.1 3.6zM642.0,448.9l.6-2.0 3.1 2.0-3.1 2.0zM646.0,448.9l.6-1.8 3.3 1.8-3.3 1.8zM649.0,448.9l.6-3.2 2.7 3.2-2.7 3.2zM676.0,448.9l.6-2.9 2.7 2.9-2.7 2.9zM680.0,448.9l.6-2.9 2.5 2.9-2.5 2.9zM684.0,448.9l.6-2.3 2.1 2.3-2.1 2.3zM710.0,448.9l.6-1.6 2.6 1.6-2.6 1.6zM714.0,448.9l.6-2.0 3.3 2.0-3.3 2.0zM717.0,448.9l.6-2.2 3.4 2.2-3.4 2.2z" stroke="#2a5a30" stroke-width="0.7" fill="#2a5a30"/><path d="M275,460.1H747M306.0,460.1l.6-3.4 3.3 3.4-3.3 3.4zM362.0,460.1l.6-2.3 2.5 2.3-2.5 2.3zM365.0,460.1l.6-3.5 3.0 3.5-3.0 3.5zM370.0,460.1l.6-2.9 2.8 2.9-2.8 2.9zM377.0,460.1l.6-3.5 2.6 3.5-2.6 3.5zM390.0,460.1l.6-2.5 2.1 2.5-2.1 2.5zM411.0,460.1l.6-2.2 3.4 2.2-3.4 2.2zM419.0,460.1l.6-3.4 3.1 3.4-3.1 3.4zM431.0,460.1l.6-2.8 2.5 2.8-2.5 2.8zM436.0,460.1l.6-2.0 2.9 2.0-2.9 2.0zM441.0,460.1l.6-2.8 2.0 2.8-2.0 2.8zM444.0,460.1l.6-3.4 3.3 3.4-3.3 3.4zM477.0,460.1l.6-2.2 2.8 2.2-2.8 2.2zM482.0,460.1l.6-3.4 3.5 3.4-3.5 3.4zM497.0,460.1l.6-3.2 2.4 3.2-2.4 3.2zM500.0,460.1l.6-2.8 3.5 2.8-3.5 2.8zM503.0,460.1l.6-2.1 3.2 2.1-3.2 2.1zM507.0,460.1l.6-2.9 2.6 2.9-2.6 2.9zM510.0,460.1l.6-2.5 2.6 2.5-2.6 2.5zM513.0,460.1l.6-3.5 3.3 3.5-3.3 3.5zM517.0,460.1l.6-1.8 3.3 1.8-3.3 1.8zM544.0,460.1l.6-2.5 2.7 2.5-2.7 2.5zM547.0,460.1l.6-3.5 3.5 3.5-3.5 3.5zM552.0,460.1l.6-2.7 3.0 2.7-3.0 2.7zM576.0,460.1l.6-3.5 3.4 3.5-3.4 3.5zM579.0,460.1l.6-2.7 3.0 2.7-3.0 2.7zM583.0,460.1l.6-2.1 2.6 2.1-2.6 2.1zM614.0,460.1l.6-2.0 2.6 2.0-2.6 2.0zM622.0,460.1l.6-3.2 2.5 3.2-2.5 3.2zM630.0,460.1l.6-1.9 3.3 1.9-3.3 1.9zM633.0,460.1l.6-3.2 2.6 3.2-2.6 3.2zM636.0,460.1l.6-3.0 2.5 3.0-2.5 3.0zM639.0,460.1l.6-2.1 2.9 2.1-2.9 2.1zM644.0,460.1l.6-1.7 3.4 1.7-3.4 1.7zM647.0,460.1l.6-2.0 2.6 2.0-2.6 2.0zM650.0,460.1l.6-2.9 2.1 2.9-2.1 2.9zM676.0,460.1l.6-3.6 2.0 3.6-2.0 3.6zM680.0,460.1l.6-3.4 3.2 3.4-3.2 3.4zM684.0,460.1l.6-3.3 2.8 3.3-2.8 3.3zM710.0,460.1l.6-3.1 3.1 3.1-3.1 3.1zM714.0,460.1l.6-2.8 2.5 2.8-2.5 2.8zM717.0,460.1l.6-1.8 2.8 1.8-2.8 1.8z" stroke="#2a5a30" stroke-width="0.7" fill="#2a5a30"/><path d="M275,473.5H747M306.0,473.5l.6-3.4 2.3 3.4-2.3 3.4zM309.0,473.5l.6-2.7 2.5 2.7-2.5 2.7zM362.0,473.5l.6-3.6 3.0 3.6-3.0 3.6zM370.0,473.5l.6-2.2 2.5 2.2-2.5 2.2zM373.0,473.5l.6-2.7 2.2 2.7-2.2 2.7zM377.0,473.5l.6-2.2 3.2 2.2-3.2 2.2zM380.0,473.5l.6-3.5 3.1 3.5-3.1 3.5zM390.0,473.5l.6-2.1 2.3 2.1-2.3 2.1zM411.0,473.5l.6-2.7 3.3 2.7-3.3 2.7zM414.0,473.5l.6-3.2 2.9 3.2-2.9 3.2zM419.0,473.5l.6-2.5 3.1 2.5-3.1 2.5zM431.0,473.5l.6-2.3 2.4 2.3-2.4 2.3zM436.0,473.5l.6-3.0 2.9 3.0-2.9 3.0zM439.0,473.5l.6-2.1 3.5 2.1-3.5 2.1zM443.0,473.5l.6-2.7 2.3 2.7-2.3 2.7zM477.0,473.5l.6-3.0 2.3 3.0-2.3 3.0zM482.0,473.5l.6-3.5 2.9 3.5-2.9 3.5zM497.0,473.5l.6-2.7 3.1 2.7-3.1 2.7zM501.0,473.5l.6-3.5 2.3 3.5-2.3 3.5zM506.0,473.5l.6-2.9 3.4 2.9-3.4 2.9zM510.0,473.5l.6-2.6 2.8 2.6-2.8 2.6zM515.0,473.5l.6-2.8 2.1 2.8-2.1 2.8zM518.0,473.5l.6-2.4 2.4 2.4-2.4 2.4zM544.0,473.5l.6-1.9 3.4 1.9-3.4 1.9zM549.0,473.5l.6-2.2 3.5 2.2-3.5 2.2zM576.0,473.5l.6-2.1 3.4 2.1-3.4 2.1zM580.0,473.5l.6-3.5 2.3 3.5-2.3 3.5zM583.0,473.5l.6-2.6 2.2 2.6-2.2 2.6zM614.0,473.5l.6-2.3 3.3 2.3-3.3 2.3zM617.0,473.5l.6-3.2 3.3 3.2-3.3 3.2zM622.0,473.5l.6-2.3 3.2 2.3-3.2 2.3zM625.0,473.5l.6-2.1 2.8 2.1-2.8 2.1zM630.0,473.5l.6-2.7 3.1 2.7-3.1 2.7zM635.0,473.5l.6-3.2 2.5 3.2-2.5 3.2zM640.0,473.5l.6-2.3 2.8 2.3-2.8 2.3zM643.0,473.5l.6-1.9 2.9 1.9-2.9 1.9zM646.0,473.5l.6-3.5 2.2 3.5-2.2 3.5zM651.0,473.5l.6-2.1 3.4 2.1-3.4 2.1zM676.0,473.5l.6-1.7 2.2 1.7-2.2 1.7zM681.0,473.5l.6-3.3 2.6 3.3-2.6 3.3zM684.0,473.5l.6-3.5 3.4 3.5-3.4 3.5zM710.0,473.5l.6-2.5 3.3 2.5-3.3 2.5zM714.0,473.5l.6-3.5 2.9 3.5-2.9 3.5zM719.0,473.5l.6-2.8 3.0 2.8-3.0 2.8z" stroke="#132a66" stroke-width="0.7" fill="#132a66"/><path d="M275,484.7H747M306.0,484.7l.6-3.3 2.5 3.3-2.5 3.3zM309.0,484.7l.6-3.3 3.5 3.3-3.5 3.3zM362.0,484.7l.6-2.7 2.0 2.7-2.0 2.7zM370.0,484.7l.6-1.6 3.1 1.6-3.1 1.6zM373.0,484.7l.6-3.2 2.4 3.2-2.4 3.2zM377.0,484.7l.6-3.4 2.4 3.4-2.4 3.4zM380.0,484.7l.6-3.1 2.1 3.1-2.1 3.1zM390.0,484.7l.6-2.3 2.7 2.3-2.7 2.3zM411.0,484.7l.6-1.6 2.0 1.6-2.0 1.6zM419.0,484.7l.6-2.6 3.5 2.6-3.5 2.6zM431.0,484.7l.6-3.4 3.4 3.4-3.4 3.4zM436.0,484.7l.6-2.9 2.6 2.9-2.6 2.9zM440.0,484.7l.6-2.0 2.5 2.0-2.5 2.0zM477.0,484.7l.6-2.8 2.4 2.8-2.4 2.8zM481.0,484.7l.6-3.2 2.4 3.2-2.4 3.2zM484.0,484.7l.6-2.5 2.2 2.5-2.2 2.5zM497.0,484.7l.6-2.4 2.7 2.4-2.7 2.4zM500.0,484.7l.6-2.3 2.9 2.3-2.9 2.3zM503.0,484.7l.6-3.5 2.4 3.5-2.4 3.5zM507.0,484.7l.6-2.1 2.6 2.1-2.6 2.1zM511.0,484.7l.6-2.9 2.0 2.9-2.0 2.9zM516.0,484.7l.6-1.7 2.4 1.7-2.4 1.7zM544.0,484.7l.6-3.2 3.2 3.2-3.2 3.2zM547.0,484.7l.6-3.3 2.4 3.3-2.4 3.3zM552.0,484.7l.6-3.0 3.2 3.0-3.2 3.0zM576.0,484.7l.6-2.8 2.9 2.8-2.9 2.8zM581.0,484.7l.6-3.6 2.5 3.6-2.5 3.6zM584.0,484.7l.6-2.9 2.0 2.9-2.0 2.9zM614.0,484.7l.6-2.5 3.2 2.5-3.2 2.5zM622.0,484.7l.6-3.2 2.8 3.2-2.8 3.2zM630.0,484.7l.6-2.7 2.4 2.7-2.4 2.7zM634.0,484.7l.6-2.6 2.4 2.6-2.4 2.6zM639.0,484.7l.6-2.6 2.3 2.6-2.3 2.6zM643.0,484.7l.6-2.7 3.1 2.7-3.1 2.7zM648.0,484.7l.6-2.3 2.5 2.3-2.5 2.3zM676.0,484.7l.6-3.3 2.8 3.3-2.8 3.3zM681.0,484.7l.6-2.7 2.1 2.7-2.1 2.7zM685.0,484.7l.6-3.5 3.1 3.5-3.1 3.5zM710.0,484.7l.6-2.5 2.4 2.5-2.4 2.5zM715.0,484.7l.6-1.9 2.8 1.9-2.8 1.9zM718.0,484.7l.6-3.6 2.5 3.6-2.5 3.6z" stroke="#132a66" stroke-width="0.7" fill="#132a66"/><path d="M275,498.1H747M306.0,498.1l.6-3.2 2.9 3.2-2.9 3.2zM362.0,498.1l.6-2.2 3.1 2.2-3.1 2.2zM365.0,498.1l.6-3.1 2.7 3.1-2.7 3.1zM370.0,498.1l.6-3.5 2.4 3.5-2.4 3.5zM377.0,498.1l.6-2.4 3.4 2.4-3.4 2.4zM380.0,498.1l.6-2.5 2.5 2.5-2.5 2.5zM390.0,498.1l.6-2.2 2.1 2.2-2.1 2.2zM411.0,498.1l.6-3.2 2.2 3.2-2.2 3.2zM419.0,498.1l.6-2.5 3.0 2.5-3.0 2.5zM431.0,498.1l.6-1.9 2.8 1.9-2.8 1.9zM436.0,498.1l.6-2.5 2.3 2.5-2.3 2.5zM440.0,498.1l.6-2.7 3.5 2.7-3.5 2.7zM444.0,498.1l.6-3.3 2.1 3.3-2.1 3.3zM477.0,498.1l.6-1.6 3.0 1.6-3.0 1.6zM482.0,498.1l.6-3.0 2.5 3.0-2.5 3.0zM497.0,498.1l.6-3.4 2.2 3.4-2.2 3.4zM502.0,498.1l.6-2.4 2.4 2.4-2.4 2.4zM506.0,498.1l.6-2.6 2.3 2.6-2.3 2.6zM511.0,498.1l.6-3.2 3.1 3.2-3.1 3.2zM516.0,498.1l.6-3.1 2.6 3.1-2.6 3.1zM519.0,498.1l.6-3.4 2.1 3.4-2.1 3.4zM544.0,498.1l.6-3.6 2.4 3.6-2.4 3.6zM548.0,498.1l.6-3.5 2.2 3.5-2.2 3.5zM552.0,498.1l.6-2.6 2.0 2.6-2.0 2.6zM576.0,498.1l.6-3.5 2.2 3.5-2.2 3.5zM579.0,498.1l.6-2.7 3.4 2.7-3.4 2.7zM583.0,498.1l.6-3.0 3.4 3.0-3.4 3.0zM614.0,498.1l.6-2.9 2.8 2.9-2.8 2.9zM622.0,498.1l.6-2.4 2.1 2.4-2.1 2.4zM630.0,498.1l.6-1.8 2.9 1.8-2.9 1.8zM634.0,498.1l.6-2.7 2.2 2.7-2.2 2.7zM638.0,498.1l.6-2.1 2.4 2.1-2.4 2.1zM642.0,498.1l.6-3.2 2.3 3.2-2.3 3.2zM646.0,498.1l.6-2.3 2.1 2.3-2.1 2.3zM651.0,498.1l.6-1.7 2.2 1.7-2.2 1.7zM676.0,498.1l.6-3.2 3.3 3.2-3.3 3.2zM679.0,498.1l.6-2.1 3.2 2.1-3.2 2.1zM682.0,498.1l.6-3.1 3.0 3.1-3.0 3.1zM710.0,498.1l.6-2.5 2.8 2.5-2.8 2.5zM715.0,498.1l.6-3.2 2.8 3.2-2.8 3.2z" stroke="#1f5a5c" stroke-width="0.7" fill="#1f5a5c"/><path d="M275,509.3H747M306.0,509.3l.6-2.4 2.5 2.4-2.5 2.4zM362.0,509.3l.6-2.4 2.4 2.4-2.4 2.4zM365.0,509.3l.6-3.3 3.0 3.3-3.0 3.3zM370.0,509.3l.6-1.8 3.2 1.8-3.2 1.8zM377.0,509.3l.6-2.6 3.0 2.6-3.0 2.6zM390.0,509.3l.6-2.4 2.0 2.4-2.0 2.4zM411.0,509.3l.6-2.0 2.3 2.0-2.3 2.0zM414.0,509.3l.6-3.0 2.9 3.0-2.9 3.0zM419.0,509.3l.6-2.1 2.8 2.1-2.8 2.1zM422.0,509.3l.6-2.1 2.6 2.1-2.6 2.1zM431.0,509.3l.6-3.4 2.2 3.4-2.2 3.4zM435.0,509.3l.6-3.5 2.4 3.5-2.4 3.5zM439.0,509.3l.6-3.2 3.5 3.2-3.5 3.2zM444.0,509.3l.6-3.2 2.4 3.2-2.4 3.2zM477.0,509.3l.6-1.6 3.1 1.6-3.1 1.6zM481.0,509.3l.6-1.6 3.3 1.6-3.3 1.6zM485.0,509.3l.6-3.1 3.3 3.1-3.3 3.1zM497.0,509.3l.6-3.3 2.4 3.3-2.4 3.3zM501.0,509.3l.6-3.0 2.5 3.0-2.5 3.0zM505.0,509.3l.6-2.6 2.3 2.6-2.3 2.6zM509.0,509.3l.6-3.0 2.1 3.0-2.1 3.0zM513.0,509.3l.6-1.6 2.8 1.6-2.8 1.6zM518.0,509.3l.6-2.6 3.1 2.6-3.1 2.6zM544.0,509.3l.6-2.5 2.7 2.5-2.7 2.5zM549.0,509.3l.6-2.9 2.1 2.9-2.1 2.9zM552.0,509.3l.6-1.9 3.1 1.9-3.1 1.9zM576.0,509.3l.6-2.2 3.4 2.2-3.4 2.2zM579.0,509.3l.6-2.6 2.1 2.6-2.1 2.6zM583.0,509.3l.6-2.0 3.0 2.0-3.0 2.0zM614.0,509.3l.6-1.8 2.3 1.8-2.3 1.8zM617.0,509.3l.6-1.7 2.0 1.7-2.0 1.7zM622.0,509.3l.6-2.7 2.4 2.7-2.4 2.7zM630.0,509.3l.6-2.7 2.6 2.7-2.6 2.7zM635.0,509.3l.6-3.5 3.0 3.5-3.0 3.5zM640.0,509.3l.6-1.8 3.5 1.8-3.5 1.8zM645.0,509.3l.6-2.7 3.3 2.7-3.3 2.7zM650.0,509.3l.6-1.9 3.2 1.9-3.2 1.9zM676.0,509.3l.6-3.5 2.1 3.5-2.1 3.5zM680.0,509.3l.6-1.7 3.0 1.7-3.0 1.7zM683.0,509.3l.6-3.2 3.4 3.2-3.4 3.2zM710.0,509.3l.6-3.4 2.4 3.4-2.4 3.4zM714.0,509.3l.6-2.3 2.1 2.3-2.1 2.3zM717.0,509.3l.6-2.5 2.5 2.5-2.5 2.5z" stroke="#1f5a5c" stroke-width="0.7" fill="#1f5a5c"/><path d="M275,522.7H747M306.0,522.7l.6-2.1 2.2 2.1-2.2 2.1zM362.0,522.7l.6-3.3 2.8 3.3-2.8 3.3zM370.0,522.7l.6-1.8 2.8 1.8-2.8 1.8zM377.0,522.7l.6-2.3 2.7 2.3-2.7 2.3zM390.0,522.7l.6-1.7 3.5 1.7-3.5 1.7zM411.0,522.7l.6-1.7 2.7 1.7-2.7 1.7zM419.0,522.7l.6-2.4 2.0 2.4-2.0 2.4zM431.0,522.7l.6-2.4 2.3 2.4-2.3 2.4zM436.0,522.7l.6-2.9 3.4 2.9-3.4 2.9zM440.0,522.7l.6-3.1 2.7 3.1-2.7 3.1zM444.0,522.7l.6-3.4 2.3 3.4-2.3 3.4zM477.0,522.7l.6-2.8 2.1 2.8-2.1 2.8zM482.0,522.7l.6-1.6 2.3 1.6-2.3 1.6zM497.0,522.7l.6-2.3 3.0 2.3-3.0 2.3zM501.0,522.7l.6-2.2 2.8 2.2-2.8 2.2zM504.0,522.7l.6-3.0 3.4 3.0-3.4 3.0zM507.0,522.7l.6-2.1 2.8 2.1-2.8 2.1zM510.0,522.7l.6-2.8 2.5 2.8-2.5 2.8zM514.0,522.7l.6-2.5 2.1 2.5-2.1 2.5zM519.0,522.7l.6-3.3 2.6 3.3-2.6 3.3zM544.0,522.7l.6-3.1 2.7 3.1-2.7 3.1zM548.0,522.7l.6-2.9 3.4 2.9-3.4 2.9zM576.0,522.7l.6-2.2 2.8 2.2-2.8 2.2zM580.0,522.7l.6-1.7 3.4 1.7-3.4 1.7zM583.0,522.7l.6-3.6 2.6 3.6-2.6 3.6zM614.0,522.7l.6-3.3 3.3 3.3-3.3 3.3zM622.0,522.7l.6-3.2 2.5 3.2-2.5 3.2zM630.0,522.7l.6-2.0 2.9 2.0-2.9 2.0zM635.0,522.7l.6-2.5 3.2 2.5-3.2 2.5zM640.0,522.7l.6-3.0 2.7 3.0-2.7 3.0zM645.0,522.7l.6-3.5 2.9 3.5-2.9 3.5zM650.0,522.7l.6-3.5 2.6 3.5-2.6 3.5zM676.0,522.7l.6-1.7 2.9 1.7-2.9 1.7zM681.0,522.7l.6-3.3 2.5 3.3-2.5 3.3zM710.0,522.7l.6-2.2 2.9 2.2-2.9 2.2zM715.0,522.7l.6-1.8 2.1 1.8-2.1 1.8z" stroke="#163e66" stroke-width="0.7" fill="#163e66"/><path d="M275,533.9H747M306.0,533.9l.6-2.7 2.2 2.7-2.2 2.7zM362.0,533.9l.6-3.1 2.9 3.1-2.9 3.1zM370.0,533.9l.6-2.8 2.0 2.8-2.0 2.8zM377.0,533.9l.6-3.4 3.1 3.4-3.1 3.4zM390.0,533.9l.6-2.5 2.8 2.5-2.8 2.5zM411.0,533.9l.6-2.0 3.0 2.0-3.0 2.0zM419.0,533.9l.6-2.7 2.2 2.7-2.2 2.7zM422.0,533.9l.6-2.0 2.2 2.0-2.2 2.0zM431.0,533.9l.6-2.6 3.4 2.6-3.4 2.6zM436.0,533.9l.6-3.5 3.1 3.5-3.1 3.5zM439.0,533.9l.6-2.6 2.4 2.6-2.4 2.6zM442.0,533.9l.6-3.1 2.8 3.1-2.8 3.1zM477.0,533.9l.6-1.8 2.4 1.8-2.4 1.8zM480.0,533.9l.6-2.4 2.4 2.4-2.4 2.4zM485.0,533.9l.6-3.5 3.1 3.5-3.1 3.5zM497.0,533.9l.6-2.8 3.1 2.8-3.1 2.8zM502.0,533.9l.6-2.6 2.7 2.6-2.7 2.6zM505.0,533.9l.6-1.6 2.7 1.6-2.7 1.6zM508.0,533.9l.6-2.4 3.3 2.4-3.3 2.4zM512.0,533.9l.6-1.7 3.4 1.7-3.4 1.7zM516.0,533.9l.6-2.7 2.5 2.7-2.5 2.7zM544.0,533.9l.6-2.8 3.4 2.8-3.4 2.8zM549.0,533.9l.6-2.3 2.1 2.3-2.1 2.3zM552.0,533.9l.6-2.6 2.7 2.6-2.7 2.6zM576.0,533.9l.6-1.7 3.2 1.7-3.2 1.7zM581.0,533.9l.6-3.1 3.2 3.1-3.2 3.1zM584.0,533.9l.6-2.5 3.1 2.5-3.1 2.5zM614.0,533.9l.6-3.0 3.0 3.0-3.0 3.0zM622.0,533.9l.6-3.2 3.4 3.2-3.4 3.2zM625.0,533.9l.6-2.1 2.0 2.1-2.0 2.1zM630.0,533.9l.6-2.4 2.6 2.4-2.6 2.4zM633.0,533.9l.6-2.6 2.9 2.6-2.9 2.6zM636.0,533.9l.6-2.9 2.5 2.9-2.5 2.9zM639.0,533.9l.6-2.6 3.0 2.6-3.0 2.6zM644.0,533.9l.6-2.9 2.1 2.9-2.1 2.9zM649.0,533.9l.6-3.5 3.4 3.5-3.4 3.5zM676.0,533.9l.6-1.8 2.2 1.8-2.2 1.8zM681.0,533.9l.6-2.7 3.2 2.7-3.2 2.7zM710.0,533.9l.6-3.2 2.4 3.2-2.4 3.2zM714.0,533.9l.6-1.6 2.8 1.6-2.8 1.6zM717.0,533.9l.6-3.4 2.5 3.4-2.5 3.4z" stroke="#163e66" stroke-width="0.7" fill="#163e66"/></svg>
<div style="left:363px;top:47px;width:1px;height:494px;background:rgba(230,230,230,0.7);"></div>
<div style="left:116px;top:541px;width:159px;height:13px;background:#242528;"></div>
<div style="left:275px;top:541px;width:990px;height:13px;background:#1c1d20;"></div>
<div style="left:275px;top:545px;width:172px;height:3px;background:#5f6064;border-radius:1px;"></div>
<div class="t" style="left:128px;top:545.5px;font-size:6.5px;color:#e8e8e8;font-weight:bold;">M</div>
<div class="t" style="left:156px;top:545.5px;font-size:6.5px;color:#e8e8e8;font-weight:bold;">S</div>
<svg style="left:183px;top:545px;" width="6" height="6" viewBox="0 0 6 6"><circle cx="3" cy="3" r="2.3" stroke="#4aa3e8" fill="none" stroke-width="1"/></svg>
<div class="t" style="left:219px;top:545.5px;font-size:6.3px;color:#e0e0e0;">Small</div>
<svg style="left:253px;top:547px;" width="5" height="3" viewBox="0 0 5 3"><polygon points="0,0 4,0 2,3" fill="#ccc"/></svg>
<div style="left:265px;top:546px;width:4px;height:3px;background:#888;"></div>
<div style="left:145px;top:542px;width:1px;height:11px;background:#2f3034;"></div>
<div style="left:170px;top:542px;width:1px;height:11px;background:#2f3034;"></div>
<div style="left:198px;top:542px;width:1px;height:11px;background:#2f3034;"></div>
<div style="left:228px;top:542px;width:1px;height:11px;background:#2f3034;"></div>
<div style="left:116px;top:553px;width:631px;height:4px;background:#141517;"></div>
<div style="left:116px;top:557px;width:631px;height:20px;background:#56595e;"></div>
<div style="left:116px;top:557px;width:19px;height:20px;background:#505358;"></div>
<svg style="left:120px;top:560px;" width="8" height="14" viewBox="0 0 8 14"><path d="M4,1 V13" stroke="#eee" stroke-width="1.6"/><path d="M2,2 H6 M2,12 H6" stroke="#eee" stroke-width="1"/></svg>
<div style="left:135px;top:557px;width:58px;height:20px;background:#606368;"></div>
<div class="t" style="left:138px;top:563px;font-size:7px;color:#f0f0f0;">120Flash&amp;Jump</div>
<div style="left:193px;top:557px;width:1px;height:20px;background:#4a4d52;"></div>
<div style="left:212px;top:557px;width:1px;height:20px;background:#4a4d52;"></div>
<div style="left:231px;top:557px;width:1px;height:20px;background:#4a4d52;"></div>
<svg style="left:199px;top:563px;" width="7" height="9" viewBox="0 0 7 9"><polygon points="6,0 6,8 0,4" fill="#fff"/></svg>
<svg style="left:219px;top:563px;" width="7" height="9" viewBox="0 0 7 9"><polygon points="0,0 0,8 6,4" fill="#fff"/></svg>
<div class="t" style="left:243px;top:563px;font-size:7.5px;color:#f0f0f0;">Variation 1</div>
<svg style="left:293px;top:565px;" width="7" height="5" viewBox="0 0 7 5"><polygon points="0,0 6,0 3,4" fill="#fff"/></svg>
<div style="left:303px;top:557px;width:1px;height:20px;background:#4a4d52;"></div>
<div style="left:304px;top:557px;width:204px;height:20px;background:#505358;"></div>
<div class="t" style="left:308px;top:559px;font-size:6.5px;color:#e8e8e8;">Steps</div>
<div class="t" style="left:308px;top:568.5px;font-size:6.5px;color:#f4f4f4;">48</div>
<svg style="left:339px;top:570px;" width="5" height="4" viewBox="0 0 5 4"><polygon points="0,0 4,0 2,3" fill="#ccc"/></svg>
<div class="t" style="left:351px;top:559px;font-size:6.5px;color:#e8e8e8;">Resolution</div>
<div class="t" style="left:351px;top:568.5px;font-size:6.5px;color:#f4f4f4;">1/16</div>
<svg style="left:386px;top:570px;" width="5" height="4" viewBox="0 0 5 4"><polygon points="0,0 4,0 2,3" fill="#ccc"/></svg>
<div class="t" style="left:395px;top:559px;font-size:6.5px;color:#e8e8e8;">Swing</div>
<div class="t" style="left:395px;top:568.5px;font-size:6.5px;color:#f4f4f4;">0 %</div>
<div class="t" style="left:433px;top:559px;font-size:6.5px;color:#e8e8e8;">Gate</div>
<div class="t" style="left:433px;top:568.5px;font-size:6.5px;color:#f4f4f4;">100 %</div>
<div class="t" style="left:471px;top:559px;font-size:6.5px;color:#e8e8e8;">Accent</div>
<div class="t" style="left:471px;top:568.5px;font-size:6.5px;color:#f4f4f4;">30 %</div>
<div style="left:304px;top:567px;width:204px;height:10px;background:#585b60;"></div>
<div class="t" style="left:308px;top:568.5px;font-size:6.5px;color:#f4f4f4;">48</div>
<svg style="left:339px;top:570px;" width="5" height="4" viewBox="0 0 5 4"><polygon points="0,0 4,0 2,3" fill="#ccc"/></svg>
<div class="t" style="left:351px;top:568.5px;font-size:6.5px;color:#f4f4f4;">1/16</div>
<svg style="left:386px;top:570px;" width="5" height="4" viewBox="0 0 5 4"><polygon points="0,0 4,0 2,3" fill="#ccc"/></svg>
<div class="t" style="left:395px;top:568.5px;font-size:6.5px;color:#f4f4f4;">0 %</div>
<div class="t" style="left:433px;top:568.5px;font-size:6.5px;color:#f4f4f4;">100 %</div>
<div class="t" style="left:471px;top:568.5px;font-size:6.5px;color:#f4f4f4;">30 %</div>
<div style="left:508px;top:557px;width:1px;height:20px;background:#44474c;"></div>
<div style="left:509px;top:557px;width:38px;height:20px;background:#5f6267;"></div>
<div style="left:516px;top:564px;width:7px;height:7px;background:#fff;border-radius:4px;"></div>
<div class="t" style="left:533px;top:561.5px;font-size:10px;color:#ddd;">&#187;</div>
<div style="left:550px;top:563px;width:22px;height:8px;background:#3a3d42;border:1px solid #e8e8e8;border-radius:2px;"></div>
<div style="left:554px;top:564.5px;width:14px;height:5px;background:#9a9da2;"></div>
<div style="left:577px;top:563px;width:22px;height:8px;background:#3a3d42;border:1px solid #e8e8e8;border-radius:2px;"></div>
<div style="left:580px;top:564.5px;width:5px;height:5px;background:#eee;"></div>
<div style="left:589px;top:564.5px;width:5px;height:5px;background:#eee;"></div>
<div style="left:603px;top:563px;width:22px;height:8px;background:#3a3d42;border:1px solid #e8e8e8;border-radius:2px;"></div>
<div style="left:605px;top:564.5px;width:18px;height:5px;background:#eee;"></div>
<div style="left:629px;top:563px;width:22px;height:8px;background:#3a3d42;border:1px solid #e8e8e8;border-radius:2px;"></div>
<div style="left:655px;top:563px;width:22px;height:8px;background:#3a3d42;border:1px solid #e8e8e8;border-radius:2px;"></div>
<div style="left:664px;top:564.5px;width:10px;height:5px;background:#eee;"></div>
<div style="left:680px;top:557px;width:67px;height:20px;background:#5a5d62;"></div>
<div style="left:116px;top:577px;width:631px;height:21px;background:#1f2023;"></div>
<svg style="left:122px;top:584px;" width="7" height="9" viewBox="0 0 7 9"><rect x="0" y="0" width="7" height="9" fill="#fff"/><path d="M1,3 H5 M1,5 H5 M1,7 H5" stroke="#1f2023"/></svg>
<svg style="left:141px;top:584px;" width="12" height="7" viewBox="0 0 12 7"><rect x="0" y="0.0" width="2.2" height="2.5" fill="#fff"/><rect x="0" y="3.5" width="2.2" height="2.5" fill="#fff"/><rect x="3" y="0.0" width="2.2" height="2.5" fill="#fff"/><rect x="3" y="3.5" width="2.2" height="2.5" fill="#fff"/><rect x="6" y="0.0" width="2.2" height="2.5" fill="#fff"/><rect x="6" y="3.5" width="2.2" height="2.5" fill="#fff"/><rect x="9" y="0.0" width="2.2" height="2.5" fill="#fff"/><rect x="9" y="3.5" width="2.2" height="2.5" fill="#fff"/></svg>
<div style="left:195px;top:581px;width:88px;height:13px;background:#151618;"></div>
<svg style="left:198px;top:584px;" width="6" height="8" viewBox="0 0 6 8"><rect x="0.5" y="0.5" width="5" height="7" fill="none" stroke="#ccc"/><path d="M1.5,4 H4.5" stroke="#ccc"/></svg>
<div class="t" style="left:224px;top:583.5px;font-size:7.5px;color:#f0f0f0;">Impact XT</div>
<svg style="left:276px;top:586px;" width="6" height="4" viewBox="0 0 6 4"><polygon points="0,0 5,0 2.5,3" fill="#ccc"/></svg>
<svg style="left:290px;top:583px;" width="9" height="9" viewBox="0 0 9 9"><path d="M1.5,8 L5,4.5" stroke="#eee" stroke-width="1.5"/><circle cx="5.8" cy="3.2" r="2.2" fill="none" stroke="#eee" stroke-width="1.2"/></svg>
<div style="left:303px;top:577px;width:444px;height:21px;background:#1b1c1f;"></div>
<div class="t" style="left:302.0px;top:585.5px;font-size:6.8px;color:#f4f4f4;width:20.5px;text-align:center;">1</div>
<div class="t" style="left:319.56px;top:585.5px;font-size:6.8px;color:#f4f4f4;width:20.5px;text-align:center;">2</div>
<div class="t" style="left:337.12px;top:585.5px;font-size:6.8px;color:#f4f4f4;width:20.5px;text-align:center;">3</div>
<div class="t" style="left:354.68px;top:585.5px;font-size:6.8px;color:#f4f4f4;width:20.5px;text-align:center;">4</div>
<div class="t" style="left:372.24px;top:585.5px;font-size:6.8px;color:#f4f4f4;width:20.5px;text-align:center;">5</div>
<div class="t" style="left:389.8px;top:585.5px;font-size:6.8px;color:#f4f4f4;width:20.5px;text-align:center;">6</div>
<div class="t" style="left:407.36px;top:585.5px;font-size:6.8px;color:#f4f4f4;width:20.5px;text-align:center;">7</div>
<div class="t" style="left:424.91999999999996px;top:585.5px;font-size:6.8px;color:#f4f4f4;width:20.5px;text-align:center;">8</div>
<div style="left:444.48px;top:579px;width:16.5px;height:18px;background:#47484c;"></div>
<div class="t" style="left:442.48px;top:585.5px;font-size:6.8px;color:#f4f4f4;width:20.5px;text-align:center;">9</div>
<div class="t" style="left:460.03999999999996px;top:585.5px;font-size:6.8px;color:#f4f4f4;width:20.5px;text-align:center;">10</div>
<div class="t" style="left:477.6px;top:585.5px;font-size:6.8px;color:#f4f4f4;width:20.5px;text-align:center;">11</div>
<div class="t" style="left:495.15999999999997px;top:585.5px;font-size:6.8px;color:#f4f4f4;width:20.5px;text-align:center;">12</div>
<div class="t" style="left:512.72px;top:585.5px;font-size:6.8px;color:#f4f4f4;width:20.5px;text-align:center;">13</div>
<div class="t" style="left:530.28px;top:585.5px;font-size:6.8px;color:#f4f4f4;width:20.5px;text-align:center;">14</div>
<div class="t" style="left:547.8399999999999px;top:585.5px;font-size:6.8px;color:#f4f4f4;width:20.5px;text-align:center;">15</div>
<div class="t" style="left:565.4px;top:585.5px;font-size:6.8px;color:#f4f4f4;width:20.5px;text-align:center;">16</div>
<div class="t" style="left:582.96px;top:585.5px;font-size:6.8px;color:#f4f4f4;width:20.5px;text-align:center;">17</div>
<div class="t" style="left:600.52px;top:585.5px;font-size:6.8px;color:#f4f4f4;width:20.5px;text-align:center;">18</div>
<div class="t" style="left:618.0799999999999px;top:585.5px;font-size:6.8px;color:#f4f4f4;width:20.5px;text-align:center;">19</div>
<div class="t" style="left:635.64px;top:585.5px;font-size:6.8px;color:#f4f4f4;width:20.5px;text-align:center;">20</div>
<div class="t" style="left:653.2px;top:585.5px;font-size:6.8px;color:#f4f4f4;width:20.5px;text-align:center;">21</div>
<div class="t" style="left:670.76px;top:585.5px;font-size:6.8px;color:#f4f4f4;width:20.5px;text-align:center;">22</div>
<div class="t" style="left:688.3199999999999px;top:585.5px;font-size:6.8px;color:#f4f4f4;width:20.5px;text-align:center;">23</div>
<div class="t" style="left:705.88px;top:585.5px;font-size:6.8px;color:#f4f4f4;width:20.5px;text-align:center;">24</div>
<div class="t" style="left:723.4399999999999px;top:585.5px;font-size:6.8px;color:#f4f4f4;width:20.5px;text-align:center;">25</div>
<div style="left:116px;top:598px;width:631px;height:190px;background:#1b1c1f;"></div>
<div style="left:116px;top:598.0px;width:187px;height:16.8px;background:#2a2b2f;"></div>
<div style="left:117px;top:598.5px;width:4.5px;height:15.8px;background:#e4506b;"></div>
<div class="t" style="left:126px;top:603.0px;font-size:6.8px;color:#ececec;">BD body</div>
<div class="t" style="left:198px;top:603.0px;font-size:6.8px;color:#ececec;">C 1</div>
<div style="left:220px;top:599.5px;width:28px;height:13.5px;background:#1d1e21;"></div>
<div class="t" style="left:224px;top:602.5px;font-size:7.5px;color:#f4f4f4;">M</div>
<div class="t" style="left:238px;top:602.5px;font-size:7.5px;color:#f4f4f4;">S</div>
<div class="t" style="left:256px;top:603.0px;font-size:6.5px;color:#77787c;">48</div>
<div class="t" style="left:277px;top:603.0px;font-size:6.5px;color:#8a8b8f;">1/16</div>
<div style="left:116px;top:615.56px;width:187px;height:16.8px;background:#2a2b2f;"></div>
<div style="left:117px;top:616.06px;width:4.5px;height:15.8px;background:#6fd6ee;"></div>
<div class="t" style="left:126px;top:620.56px;font-size:6.8px;color:#ececec;">Snare 1 body</div>
<div class="t" style="left:198px;top:620.56px;font-size:6.8px;color:#ececec;">D 1</div>
<div style="left:220px;top:617.06px;width:28px;height:13.5px;background:#1d1e21;"></div>
<div class="t" style="left:224px;top:620.06px;font-size:7.5px;color:#f4f4f4;">M</div>
<div class="t" style="left:238px;top:620.06px;font-size:7.5px;color:#f4f4f4;">S</div>
<div class="t" style="left:256px;top:620.56px;font-size:6.5px;color:#77787c;">48</div>
<div class="t" style="left:277px;top:620.56px;font-size:6.5px;color:#8a8b8f;">1/16</div>
<div style="left:116px;top:633.12px;width:187px;height:16.8px;background:#2a2b2f;"></div>
<div style="left:117px;top:633.62px;width:4.5px;height:15.8px;background:#6fd6ee;"></div>
<div class="t" style="left:126px;top:638.12px;font-size:6.8px;color:#ececec;">Clap</div>
<div class="t" style="left:198px;top:638.12px;font-size:6.8px;color:#ececec;">D# 1</div>
<div style="left:220px;top:634.62px;width:28px;height:13.5px;background:#1d1e21;"></div>
<div class="t" style="left:224px;top:637.62px;font-size:7.5px;color:#f4f4f4;">M</div>
<div class="t" style="left:238px;top:637.62px;font-size:7.5px;color:#f4f4f4;">S</div>
<div class="t" style="left:256px;top:638.12px;font-size:6.5px;color:#77787c;">48</div>
<div class="t" style="left:277px;top:638.12px;font-size:6.5px;color:#8a8b8f;">1/16</div>
<div style="left:116px;top:650.68px;width:187px;height:16.8px;background:#2a2b2f;"></div>
<div style="left:117px;top:651.18px;width:4.5px;height:15.8px;background:#6fd6ee;"></div>
<div class="t" style="left:126px;top:655.68px;font-size:6.8px;color:#ececec;">Snare 2 body</div>
<div class="t" style="left:198px;top:655.68px;font-size:6.8px;color:#ececec;">E 1</div>
<div style="left:220px;top:652.18px;width:28px;height:13.5px;background:#1d1e21;"></div>
<div class="t" style="left:224px;top:655.18px;font-size:7.5px;color:#f4f4f4;">M</div>
<div class="t" style="left:238px;top:655.18px;font-size:7.5px;color:#f4f4f4;">S</div>
<div class="t" style="left:256px;top:655.68px;font-size:6.5px;color:#77787c;">48</div>
<div class="t" style="left:277px;top:655.68px;font-size:6.5px;color:#8a8b8f;">1/16</div>
<div style="left:116px;top:668.24px;width:187px;height:16.8px;background:#2a2b2f;"></div>
<div style="left:117px;top:668.74px;width:4.5px;height:15.8px;background:#a552d2;"></div>
<div class="t" style="left:126px;top:673.24px;font-size:6.8px;color:#ececec;">HiHat closed</div>
<div class="t" style="left:198px;top:673.24px;font-size:6.8px;color:#ececec;">F# 1</div>
<div style="left:220px;top:669.74px;width:28px;height:13.5px;background:#1d1e21;"></div>
<div class="t" style="left:224px;top:672.74px;font-size:7.5px;color:#f4f4f4;">M</div>
<div class="t" style="left:238px;top:672.74px;font-size:7.5px;color:#f4f4f4;">S</div>
<div class="t" style="left:256px;top:673.24px;font-size:6.5px;color:#77787c;">48</div>
<div class="t" style="left:277px;top:673.24px;font-size:6.5px;color:#8a8b8f;">1/16</div>
<div style="left:116px;top:685.8px;width:187px;height:16.8px;background:#2a2b2f;"></div>
<div style="left:117px;top:686.3px;width:4.5px;height:15.8px;background:#e9e272;"></div>
<div class="t" style="left:126px;top:690.8px;font-size:6.8px;color:#ececec;">Tom 5</div>
<div class="t" style="left:198px;top:690.8px;font-size:6.8px;color:#ececec;">G 1</div>
<div style="left:220px;top:687.3px;width:28px;height:13.5px;background:#1d1e21;"></div>
<div class="t" style="left:224px;top:690.3px;font-size:7.5px;color:#f4f4f4;">M</div>
<div class="t" style="left:238px;top:690.3px;font-size:7.5px;color:#f4f4f4;">S</div>
<div class="t" style="left:256px;top:690.8px;font-size:6.5px;color:#77787c;">48</div>
<div class="t" style="left:277px;top:690.8px;font-size:6.5px;color:#8a8b8f;">1/16</div>
<div style="left:116px;top:703.36px;width:187px;height:16.8px;background:#2a2b2f;"></div>
<div style="left:117px;top:703.86px;width:4.5px;height:15.8px;background:#a552d2;"></div>
<div class="t" style="left:126px;top:708.36px;font-size:6.8px;color:#ececec;">HiHat pedal</div>
<div class="t" style="left:198px;top:708.36px;font-size:6.8px;color:#ececec;">G# 1</div>
<div style="left:220px;top:704.86px;width:28px;height:13.5px;background:#1d1e21;"></div>
<div class="t" style="left:224px;top:707.86px;font-size:7.5px;color:#f4f4f4;">M</div>
<div class="t" style="left:238px;top:707.86px;font-size:7.5px;color:#f4f4f4;">S</div>
<div class="t" style="left:256px;top:708.36px;font-size:6.5px;color:#77787c;">48</div>
<div class="t" style="left:277px;top:708.36px;font-size:6.5px;color:#8a8b8f;">1/16</div>
<div style="left:116px;top:720.92px;width:187px;height:16.8px;background:#2a2b2f;"></div>
<div style="left:117px;top:721.42px;width:4.5px;height:15.8px;background:#e9e272;"></div>
<div class="t" style="left:126px;top:725.92px;font-size:6.8px;color:#ececec;">Tom 4</div>
<div class="t" style="left:198px;top:725.92px;font-size:6.8px;color:#ececec;">A 1</div>
<div style="left:220px;top:722.42px;width:28px;height:13.5px;background:#1d1e21;"></div>
<div class="t" style="left:224px;top:725.42px;font-size:7.5px;color:#f4f4f4;">M</div>
<div class="t" style="left:238px;top:725.42px;font-size:7.5px;color:#f4f4f4;">S</div>
<div class="t" style="left:256px;top:725.92px;font-size:6.5px;color:#77787c;">48</div>
<div class="t" style="left:277px;top:725.92px;font-size:6.5px;color:#8a8b8f;">1/16</div>
<div style="left:116px;top:738.48px;width:187px;height:16.8px;background:#2a2b2f;"></div>
<div style="left:117px;top:738.98px;width:4.5px;height:15.8px;background:#a552d2;"></div>
<div class="t" style="left:126px;top:743.48px;font-size:6.8px;color:#ececec;">HiHat open</div>
<div class="t" style="left:198px;top:743.48px;font-size:6.8px;color:#ececec;">A# 1</div>
<div style="left:220px;top:739.98px;width:28px;height:13.5px;background:#1d1e21;"></div>
<div class="t" style="left:224px;top:742.98px;font-size:7.5px;color:#f4f4f4;">M</div>
<div class="t" style="left:238px;top:742.98px;font-size:7.5px;color:#f4f4f4;">S</div>
<div class="t" style="left:256px;top:743.48px;font-size:6.5px;color:#77787c;">48</div>
<div class="t" style="left:277px;top:743.48px;font-size:6.5px;color:#8a8b8f;">1/16</div>
<div style="left:116px;top:756.04px;width:187px;height:16.8px;background:#2a2b2f;"></div>
<div style="left:117px;top:756.54px;width:4.5px;height:15.8px;background:#e9e272;"></div>
<div class="t" style="left:126px;top:761.04px;font-size:6.8px;color:#ececec;">Tom 3</div>
<div class="t" style="left:198px;top:761.04px;font-size:6.8px;color:#ececec;">B 1</div>
<div style="left:220px;top:757.54px;width:28px;height:13.5px;background:#1d1e21;"></div>
<div class="t" style="left:224px;top:760.54px;font-size:7.5px;color:#f4f4f4;">M</div>
<div class="t" style="left:238px;top:760.54px;font-size:7.5px;color:#f4f4f4;">S</div>
<div class="t" style="left:256px;top:761.04px;font-size:6.5px;color:#77787c;">48</div>
<div class="t" style="left:277px;top:761.04px;font-size:6.5px;color:#8a8b8f;">1/16</div>
<div style="left:116px;top:773.5px;width:187px;height:2px;background:#2a2b2f;"></div>
<div style="left:305.0px;top:599.0px;width:14.5px;height:14.5px;background:#d88a3e;border-radius:2px;border-top:1px solid #e8a868;"></div>
<div style="left:305.0px;top:616.56px;width:14.5px;height:14.5px;background:#d88a3e;border-radius:2px;border-top:1px solid #e8a868;"></div>
<div style="left:305.0px;top:634.12px;width:14.5px;height:14.5px;background:#25262a;border-radius:1px;border:1px solid #303135;"></div>
<div style="left:305.0px;top:651.68px;width:14.5px;height:14.5px;background:#25262a;border-radius:1px;border:1px solid #303135;"></div>
<div style="left:305.0px;top:669.24px;width:14.5px;height:14.5px;background:#d88a3e;border-radius:2px;border-top:1px solid #e8a868;"></div>
<div style="left:305.0px;top:686.8px;width:14.5px;height:14.5px;background:#25262a;border-radius:1px;border:1px solid #303135;"></div>
<div style="left:305.0px;top:704.36px;width:14.5px;height:14.5px;background:#25262a;border-radius:1px;border:1px solid #303135;"></div>
<div style="left:305.0px;top:721.92px;width:14.5px;height:14.5px;background:#25262a;border-radius:1px;border:1px solid #303135;"></div>
<div style="left:305.0px;top:739.48px;width:14.5px;height:14.5px;background:#25262a;border-radius:1px;border:1px solid #303135;"></div>
<div style="left:305.0px;top:757.04px;width:14.5px;height:14.5px;background:#d88a3e;border-radius:2px;border-top:1px solid #e8a868;"></div>
<div style="left:322.56px;top:599.0px;width:14.5px;height:14.5px;background:#25262a;border-radius:1px;border:1px solid #303135;"></div>
<div style="left:322.56px;top:616.56px;width:14.5px;height:14.5px;background:#25262a;border-radius:1px;border:1px solid #303135;"></div>
<div style="left:322.56px;top:634.12px;width:14.5px;height:14.5px;background:#25262a;border-radius:1px;border:1px solid #303135;"></div>
<div style="left:322.56px;top:651.68px;width:14.5px;height:14.5px;background:#25262a;border-radius:1px;border:1px solid #303135;"></div>
<div style="left:322.56px;top:669.24px;width:14.5px;height:14.5px;background:#b57a3c;border-radius:2px;border-top:1px solid #e8a868;"></div>
<div style="left:322.56px;top:686.8px;width:14.5px;height:14.5px;background:#25262a;border-radius:1px;border:1px solid #303135;"></div>
<div style="left:322.56px;top:704.36px;width:14.5px;height:14.5px;background:#25262a;border-radius:1px;border:1px solid #303135;"></div>
<div style="left:322.56px;top:721.92px;width:14.5px;height:14.5px;background:#25262a;border-radius:1px;border:1px solid #303135;"></div>
<div style="left:322.56px;top:739.48px;width:14.5px;height:14.5px;background:#25262a;border-radius:1px;border:1px solid #303135;"></div>
<div style="left:322.56px;top:757.04px;width:14.5px;height:14.5px;background:#25262a;border-radius:1px;border:1px solid #303135;"></div>
<div style="left:340.12px;top:599.0px;width:14.5px;height:14.5px;background:#25262a;border-radius:1px;border:1px solid #303135;"></div>
<div style="left:340.12px;top:616.56px;width:14.5px;height:14.5px;background:#25262a;border-radius:1px;border:1px solid #303135;"></div>
<div style="left:340.12px;top:634.12px;width:14.5px;height:14.5px;background:#25262a;border-radius:1px;border:1px solid #303135;"></div>
<div style="left:340.12px;top:651.68px;width:14.5px;height:14.5px;background:#25262a;border-radius:1px;border:1px solid #303135;"></div>
<div style="left:340.12px;top:669.24px;width:14.5px;height:14.5px;background:#d88a3e;border-radius:2px;border-top:1px solid #e8a868;"></div>
<div style="left:340.12px;top:686.8px;width:14.5px;height:14.5px;background:#25262a;border-radius:1px;border:1px solid #303135;"></div>
<div style="left:340.12px;top:704.36px;width:14.5px;height:14.5px;background:#25262a;border-radius:1px;border:1px solid #303135;"></div>
<div style="left:340.12px;top:721.92px;width:14.5px;height:14.5px;background:#25262a;border-radius:1px;border:1px solid #303135;"></div>
<div style="left:340.12px;top:739.48px;width:14.5px;height:14.5px;background:#25262a;border-radius:1px;border:1px solid #303135;"></div>
<div style="left:340.12px;top:757.04px;width:14.5px;height:14.5px;background:#25262a;border-radius:1px;border:1px solid #303135;"></div>
<div style="left:357.68px;top:599.0px;width:14.5px;height:14.5px;background:#25262a;border-radius:1px;border:1px solid #303135;"></div>
<div style="left:357.68px;top:616.56px;width:14.5px;height:14.5px;background:#25262a;border-radius:1px;border:1px solid #303135;"></div>
<div style="left:357.68px;top:634.12px;width:14.5px;height:14.5px;background:#25262a;border-radius:1px;border:1px solid #303135;"></div>
<div style="left:357.68px;top:651.68px;width:14.5px;height:14.5px;background:#25262a;border-radius:1px;border:1px solid #303135;"></div>
<div style="left:357.68px;top:669.24px;width:14.5px;height:14.5px;background:#b57a3c;border-radius:2px;border-top:1px solid #e8a868;"></div>
<div style="left:357.68px;top:686.8px;width:14.5px;height:14.5px;background:#25262a;border-radius:1px;border:1px solid #303135;"></div>
<div style="left:357.68px;top:704.36px;width:14.5px;height:14.5px;background:#25262a;border-radius:1px;border:1px solid #303135;"></div>
<div style="left:357.68px;top:721.92px;width:14.5px;height:14.5px;background:#25262a;border-radius:1px;border:1px solid #303135;"></div>
<div style="left:357.68px;top:739.48px;width:14.5px;height:14.5px;background:#25262a;border-radius:1px;border:1px solid #303135;"></div>
<div style="left:357.68px;top:757.04px;width:14.5px;height:14.5px;background:#25262a;border-radius:1px;border:1px solid #303135;"></div>
<div style="left:375.24px;top:599.0px;width:14.5px;height:14.5px;background:#2a2b2f;border-radius:1px;border:1px solid #303135;"></div>
<div style="left:375.24px;top:616.56px;width:14.5px;height:14.5px;background:#d88a3e;border-radius:2px;border-top:1px solid #e8a868;"></div>
<div style="left:375.24px;top:634.12px;width:14.5px;height:14.5px;background:#d88a3e;border-radius:2px;border-top:1px solid #e8a868;"></div>
<div style="left:375.24px;top:651.68px;width:14.5px;height:14.5px;background:#2a2b2f;border-radius:1px;border:1px solid #303135;"></div>
<div style="left:375.24px;top:669.24px;width:14.5px;height:14.5px;background:#d88a3e;border-radius:2px;border-top:1px solid #e8a868;"></div>
<div style="left:375.24px;top:686.8px;width:14.5px;height:14.5px;background:#2a2b2f;border-radius:1px;border:1px solid #303135;"></div>
<div style="left:375.24px;top:704.36px;width:14.5px;height:14.5px;background:#2a2b2f;border-radius:1px;border:1px solid #303135;"></div>
<div style="left:375.24px;top:721.92px;width:14.5px;height:14.5px;background:#2a2b2f;border-radius:1px;border:1px solid #303135;"></div>
<div style="left:375.24px;top:739.48px;width:14.5px;height:14.5px;background:#2a2b2f;border-radius:1px;border:1px solid #303135;"></div>
<div style="left:375.24px;top:757.04px;width:14.5px;height:14.5px;background:#d88a3e;border-radius:2px;border-top:1px solid #e8a868;"></div>
<div style="left:392.8px;top:599.0px;width:14.5px;height:14.5px;background:#2a2b2f;border-radius:1px;border:1px solid #303135;"></div>
<div style="left:392.8px;top:616.56px;width:14.5px;height:14.5px;background:#2a2b2f;border-radius:1px;border:1px solid #303135;"></div>
<div style="left:392.8px;top:634.12px;width:14.5px;height:14.5px;background:#2a2b2f;border-radius:1px;border:1px solid #303135;"></div>
<div style="left:392.8px;top:651.68px;width:14.5px;height:14.5px;background:#2a2b2f;border-radius:1px;border:1px solid #303135;"></div>
<div style="left:392.8px;top:669.24px;width:14.5px;height:14.5px;background:#b57a3c;border-radius:2px;border-top:1px solid #e8a868;"></div>
<div style="left:392.8px;top:686.8px;width:14.5px;height:14.5px;background:#2a2b2f;border-radius:1px;border:1px solid #303135;"></div>
<div style="left:392.8px;top:704.36px;width:14.5px;height:14.5px;background:#2a2b2f;border-radius:1px;border:1px solid #303135;"></div>
<div style="left:392.8px;top:721.92px;width:14.5px;height:14.5px;background:#2a2b2f;border-radius:1px;border:1px solid #303135;"></div>
<div style="left:392.8px;top:739.48px;width:14.5px;height:14.5px;background:#2a2b2f;border-radius:1px;border:1px solid #303135;"></div>
<div style="left:392.8px;top:757.04px;width:14.5px;height:14.5px;background:#2a2b2f;border-radius:1px;border:1px solid #303135;"></div>
<div style="left:410.36px;top:599.0px;width:14.5px;height:14.5px;background:#2a2b2f;border-radius:1px;border:1px solid #303135;"></div>
<div style="left:410.36px;top:616.56px;width:14.5px;height:14.5px;background:#2a2b2f;border-radius:1px;border:1px solid #303135;"></div>
<div style="left:410.36px;top:634.12px;width:14.5px;height:14.5px;background:#2a2b2f;border-radius:1px;border:1px solid #303135;"></div>
<div style="left:410.36px;top:651.68px;width:14.5px;height:14.5px;background:#2a2b2f;border-radius:1px;border:1px solid #303135;"></div>
<div style="left:410.36px;top:669.24px;width:14.5px;height:14.5px;background:#d88a3e;border-radius:2px;border-top:1px solid #e8a868;"></div>
<div style="left:410.36px;top:686.8px;width:14.5px;height:14.5px;background:#2a2b2f;border-radius:1px;border:1px solid #303135;"></div>
<div style="left:410.36px;top:704.36px;width:14.5px;height:14.5px;background:#2a2b2f;border-radius:1px;border:1px solid #303135;"></div>
<div style="left:410.36px;top:721.92px;width:14.5px;height:14.5px;background:#2a2b2f;border-radius:1px;border:1px solid #303135;"></div>
<div style="left:410.36px;top:739.48px;width:14.5px;height:14.5px;background:#2a2b2f;border-radius:1px;border:1px solid #303135;"></div>
<div style="left:410.36px;top:757.04px;width:14.5px;height:14.5px;background:#2a2b2f;border-radius:1px;border:1px solid #303135;"></div>
<div style="left:427.91999999999996px;top:599.0px;width:14.5px;height:14.5px;background:#2a2b2f;border-radius:1px;border:1px solid #303135;"></div>
<div style="left:427.91999999999996px;top:616.56px;width:14.5px;height:14.5px;background:#2a2b2f;border-radius:1px;border:1px solid #303135;"></div>
<div style="left:427.91999999999996px;top:634.12px;width:14.5px;height:14.5px;background:#2a2b2f;border-radius:1px;border:1px solid #303135;"></div>
<div style="left:427.91999999999996px;top:651.68px;width:14.5px;height:14.5px;background:#2a2b2f;border-radius:1px;border:1px solid #303135;"></div>
<div style="left:427.91999999999996px;top:669.24px;width:14.5px;height:14.5px;background:#b57a3c;border-radius:2px;border-top:1px solid #e8a868;"></div>
<div style="left:427.91999999999996px;top:686.8px;width:14.5px;height:14.5px;background:#2a2b2f;border-radius:1px;border:1px solid #303135;"></div>
<div style="left:427.91999999999996px;top:704.36px;width:14.5px;height:14.5px;background:#2a2b2f;border-radius:1px;border:1px solid #303135;"></div>
<div style="left:427.91999999999996px;top:721.92px;width:14.5px;height:14.5px;background:#2a2b2f;border-radius:1px;border:1px solid #303135;"></div>
<div style="left:427.91999999999996px;top:739.48px;width:14.5px;height:14.5px;background:#2a2b2f;border-radius:1px;border:1px solid #303135;"></div>
<div style="left:427.91999999999996px;top:757.04px;width:14.5px;height:14.5px;background:#2a2b2f;border-radius:1px;border:1px solid #303135;"></div>
<div style="left:445.48px;top:599.0px;width:14.5px;height:14.5px;background:#25262a;border-radius:1px;border:1px solid #303135;"></div>
<div style="left:445.48px;top:616.56px;width:14.5px;height:14.5px;background:#d88a3e;border-radius:2px;border-top:1px solid #e8a868;"></div>
<div style="left:445.48px;top:634.12px;width:14.5px;height:14.5px;background:#25262a;border-radius:1px;border:1px solid #303135;"></div>
<div style="left:445.48px;top:651.68px;width:14.5px;height:14.5px;background:#25262a;border-radius:1px;border:1px solid #303135;"></div>
<div style="left:445.48px;top:669.24px;width:14.5px;height:14.5px;background:#d88a3e;border-radius:2px;border-top:1px solid #e8a868;"></div>
<div style="left:445.48px;top:686.8px;width:14.5px;height:14.5px;background:#25262a;border-radius:1px;border:1px solid #303135;"></div>
<div style="left:445.48px;top:704.36px;width:14.5px;height:14.5px;background:#25262a;border-radius:1px;border:1px solid #303135;"></div>
<div style="left:445.48px;top:721.92px;width:14.5px;height:14.5px;background:#25262a;border-radius:1px;border:1px solid #303135;"></div>
<div style="left:445.48px;top:739.48px;width:14.5px;height:14.5px;background:#25262a;border-radius:1px;border:1px solid #303135;"></div>
<div style="left:445.48px;top:757.04px;width:14.5px;height:14.5px;background:#d88a3e;border-radius:2px;border-top:1px solid #e8a868;"></div>
<div style="left:463.03999999999996px;top:599.0px;width:14.5px;height:14.5px;background:#25262a;border-radius:1px;border:1px solid #303135;"></div>
<div style="left:463.03999999999996px;top:616.56px;width:14.5px;height:14.5px;background:#25262a;border-radius:1px;border:1px solid #303135;"></div>
<div style="left:463.03999999999996px;top:634.12px;width:14.5px;height:14.5px;background:#25262a;border-radius:1px;border:1px solid #303135;"></div>
<div style="left:463.03999999999996px;top:651.68px;width:14.5px;height:14.5px;background:#25262a;border-radius:1px;border:1px solid #303135;"></div>
<div style="left:463.03999999999996px;top:669.24px;width:14.5px;height:14.5px;background:#b57a3c;border-radius:2px;border-top:1px solid #e8a868;"></div>
<div style="left:463.03999999999996px;top:686.8px;width:14.5px;height:14.5px;background:#d88a3e;border-radius:2px;border-top:1px solid #e8a868;"></div>
<div style="left:463.03999999999996px;top:704.36px;width:14.5px;height:14.5px;background:#25262a;border-radius:1px;border:1px solid #303135;"></div>
<div style="left:463.03999999999996px;top:721.92px;width:14.5px;height:14.5px;background:#25262a;border-radius:1px;border:1px solid #303135;"></div>
<div style="left:463.03999999999996px;top:739.48px;width:14.5px;height:14.5px;background:#25262a;border-radius:1px;border:1px solid #303135;"></div>
<div style="left:463.03999999999996px;top:757.04px;width:14.5px;height:14.5px;background:#25262a;border-radius:1px;border:1px solid #303135;"></div>
<div style="left:480.6px;top:599.0px;width:14.5px;height:14.5px;background:#25262a;border-radius:1px;border:1px solid #303135;"></div>
<div style="left:480.6px;top:616.56px;width:14.5px;height:14.5px;background:#25262a;border-radius:1px;border:1px solid #303135;"></div>
<div style="left:480.6px;top:634.12px;width:14.5px;height:14.5px;background:#25262a;border-radius:1px;border:1px solid #303135;"></div>
<div style="left:480.6px;top:651.68px;width:14.5px;height:14.5px;background:#25262a;border-radius:1px;border:1px solid #303135;"></div>
<div style="left:480.6px;top:669.24px;width:14.5px;height:14.5px;background:#d88a3e;border-radius:2px;border-top:1px solid #e8a868;"></div>
<div style="left:480.6px;top:686.8px;width:14.5px;height:14.5px;background:#25262a;border-radius:1px;border:1px solid #303135;"></div>
<div style="left:480.6px;top:704.36px;width:14.5px;height:14.5px;background:#25262a;border-radius:1px;border:1px solid #303135;"></div>
<div style="left:480.6px;top:721.92px;width:14.5px;height:14.5px;background:#d88a3e;border-radius:2px;border-top:1px solid #e8a868;"></div>
<div style="left:480.6px;top:739.48px;width:14.5px;height:14.5px;background:#25262a;border-radius:1px;border:1px solid #303135;"></div>
<div style="left:480.6px;top:757.04px;width:14.5px;height:14.5px;background:#25262a;border-radius:1px;border:1px solid #303135;"></div>
<div style="left:498.15999999999997px;top:599.0px;width:14.5px;height:14.5px;background:#25262a;border-radius:1px;border:1px solid #303135;"></div>
<div style="left:498.15999999999997px;top:616.56px;width:14.5px;height:14.5px;background:#25262a;border-radius:1px;border:1px solid #303135;"></div>
<div style="left:498.15999999999997px;top:634.12px;width:14.5px;height:14.5px;background:#25262a;border-radius:1px;border:1px solid #303135;"></div>
<div style="left:498.15999999999997px;top:651.68px;width:14.5px;height:14.5px;background:#25262a;border-radius:1px;border:1px solid #303135;"></div>
<div style="left:498.15999999999997px;top:669.24px;width:14.5px;height:14.5px;background:#b57a3c;border-radius:2px;border-top:1px solid #e8a868;"></div>
<div style="left:498.15999999999997px;top:686.8px;width:14.5px;height:14.5px;background:#25262a;border-radius:1px;border:1px solid #303135;"></div>
<div style="left:498.15999999999997px;top:704.36px;width:14.5px;height:14.5px;background:#25262a;border-radius:1px;border:1px solid #303135;"></div>
<div style="left:498.15999999999997px;top:721.92px;width:14.5px;height:14.5px;background:#25262a;border-radius:1px;border:1px solid #303135;"></div>
<div style="left:498.15999999999997px;top:739.48px;width:14.5px;height:14.5px;background:#25262a;border-radius:1px;border:1px solid #303135;"></div>
<div style="left:498.15999999999997px;top:757.04px;width:14.5px;height:14.5px;background:#25262a;border-radius:1px;border:1px solid #303135;"></div>
<div style="left:515.72px;top:599.0px;width:14.5px;height:14.5px;background:#d88a3e;border-radius:2px;border-top:1px solid #e8a868;"></div>
<div style="left:515.72px;top:616.56px;width:14.5px;height:14.5px;background:#d88a3e;border-radius:2px;border-top:1px solid #e8a868;"></div>
<div style="left:515.72px;top:634.12px;width:14.5px;height:14.5px;background:#d88a3e;border-radius:2px;border-top:1px solid #e8a868;"></div>
<div style="left:515.72px;top:651.68px;width:14.5px;height:14.5px;background:#2a2b2f;border-radius:1px;border:1px solid #303135;"></div>
<div style="left:515.72px;top:669.24px;width:14.5px;height:14.5px;background:#d88a3e;border-radius:2px;border-top:1px solid #e8a868;"></div>
<div style="left:515.72px;top:686.8px;width:14.5px;height:14.5px;background:#2a2b2f;border-radius:1px;border:1px solid #303135;"></div>
<div style="left:515.72px;top:704.36px;width:14.5px;height:14.5px;background:#2a2b2f;border-radius:1px;border:1px solid #303135;"></div>
<div style="left:515.72px;top:721.92px;width:14.5px;height:14.5px;background:#2a2b2f;border-radius:1px;border:1px solid #303135;"></div>
<div style="left:515.72px;top:739.48px;width:14.5px;height:14.5px;background:#2a2b2f;border-radius:1px;border:1px solid #303135;"></div>
<div style="left:515.72px;top:757.04px;width:14.5px;height:14.5px;background:#d88a3e;border-radius:2px;border-top:1px solid #e8a868;"></div>
<div style="left:533.28px;top:599.0px;width:14.5px;height:14.5px;background:#2a2b2f;border-radius:1px;border:1px solid #303135;"></div>
<div style="left:533.28px;top:616.56px;width:14.5px;height:14.5px;background:#2a2b2f;border-radius:1px;border:1px solid #303135;"></div>
<div style="left:533.28px;top:634.12px;width:14.5px;height:14.5px;background:#2a2b2f;border-radius:1px;border:1px solid #303135;"></div>
<div style="left:533.28px;top:651.68px;width:14.5px;height:14.5px;background:#2a2b2f;border-radius:1px;border:1px solid #303135;"></div>
<div style="left:533.28px;top:669.24px;width:14.5px;height:14.5px;background:#b57a3c;border-radius:2px;border-top:1px solid #e8a868;"></div>
<div style="left:533.28px;top:686.8px;width:14.5px;height:14.5px;background:#2a2b2f;border-radius:1px;border:1px solid #303135;"></div>
<div style="left:533.28px;top:704.36px;width:14.5px;height:14.5px;background:#2a2b2f;border-radius:1px;border:1px solid #303135;"></div>
<div style="left:533.28px;top:721.92px;width:14.5px;height:14.5px;background:#2a2b2f;border-radius:1px;border:1px solid #303135;"></div>
<div style="left:533.28px;top:739.48px;width:14.5px;height:14.5px;background:#2a2b2f;border-radius:1px;border:1px solid #303135;"></div>
<div style="left:533.28px;top:757.04px;width:14.5px;height:14.5px;background:#2a2b2f;border-radius:1px;border:1px solid #303135;"></div>
<div style="left:550.8399999999999px;top:599.0px;width:14.5px;height:14.5px;background:#2a2b2f;border-radius:1px;border:1px solid #303135;"></div>
<div style="left:550.8399999999999px;top:616.56px;width:14.5px;height:14.5px;background:#2a2b2f;border-radius:1px;border:1px solid #303135;"></div>
<div style="left:550.8399999999999px;top:634.12px;width:14.5px;height:14.5px;background:#2a2b2f;border-radius:1px;border:1px solid #303135;"></div>
<div style="left:550.8399999999999px;top:651.68px;width:14.5px;height:14.5px;background:#2a2b2f;border-radius:1px;border:1px solid #303135;"></div>
<div style="left:550.8399999999999px;top:669.24px;width:14.5px;height:14.5px;background:#d88a3e;border-radius:2px;border-top:1px solid #e8a868;"></div>
<div style="left:550.8399999999999px;top:686.8px;width:14.5px;height:14.5px;background:#2a2b2f;border-radius:1px;border:1px solid #303135;"></div>
<div style="left:550.8399999999999px;top:704.36px;width:14.5px;height:14.5px;background:#2a2b2f;border-radius:1px;border:1px solid #303135;"></div>
<div style="left:550.8399999999999px;top:721.92px;width:14.5px;height:14.5px;background:#2a2b2f;border-radius:1px;border:1px solid #303135;"></div>
<div style="left:550.8399999999999px;top:739.48px;width:14.5px;height:14.5px;background:#2a2b2f;border-radius:1px;border:1px solid #303135;"></div>
<div style="left:550.8399999999999px;top:757.04px;width:14.5px;height:14.5px;background:#2a2b2f;border-radius:1px;border:1px solid #303135;"></div>
<div style="left:568.4px;top:599.0px;width:14.5px;height:14.5px;background:#2a2b2f;border-radius:1px;border:1px solid #303135;"></div>
<div style="left:568.4px;top:616.56px;width:14.5px;height:14.5px;background:#2a2b2f;border-radius:1px;border:1px solid #303135;"></div>
<div style="left:568.4px;top:634.12px;width:14.5px;height:14.5px;background:#2a2b2f;border-radius:1px;border:1px solid #303135;"></div>
<div style="left:568.4px;top:651.68px;width:14.5px;height:14.5px;background:#2a2b2f;border-radius:1px;border:1px solid #303135;"></div>
<div style="left:568.4px;top:669.24px;width:14.5px;height:14.5px;background:#b57a3c;border-radius:2px;border-top:1px solid #e8a868;"></div>
<div style="left:568.4px;top:686.8px;width:14.5px;height:14.5px;background:#2a2b2f;border-radius:1px;border:1px solid #303135;"></div>
<div style="left:568.4px;top:704.36px;width:14.5px;height:14.5px;background:#2a2b2f;border-radius:1px;border:1px solid #303135;"></div>
<div style="left:568.4px;top:721.92px;width:14.5px;height:14.5px;background:#2a2b2f;border-radius:1px;border:1px solid #303135;"></div>
<div style="left:568.4px;top:739.48px;width:14.5px;height:14.5px;background:#2a2b2f;border-radius:1px;border:1px solid #303135;"></div>
<div style="left:568.4px;top:757.04px;width:14.5px;height:14.5px;background:#2a2b2f;border-radius:1px;border:1px solid #303135;"></div>
<div style="left:585.96px;top:599.0px;width:14.5px;height:14.5px;background:#25262a;border-radius:1px;border:1px solid #303135;"></div>
<div style="left:585.96px;top:616.56px;width:14.5px;height:14.5px;background:#d88a3e;border-radius:2px;border-top:1px solid #e8a868;"></div>
<div style="left:585.96px;top:634.12px;width:14.5px;height:14.5px;background:#25262a;border-radius:1px;border:1px solid #303135;"></div>
<div style="left:585.96px;top:651.68px;width:14.5px;height:14.5px;background:#25262a;border-radius:1px;border:1px solid #303135;"></div>
<div style="left:585.96px;top:669.24px;width:14.5px;height:14.5px;background:#d88a3e;border-radius:2px;border-top:1px solid #e8a868;"></div>
<div style="left:585.96px;top:686.8px;width:14.5px;height:14.5px;background:#25262a;border-radius:1px;border:1px solid #303135;"></div>
<div style="left:585.96px;top:704.36px;width:14.5px;height:14.5px;background:#25262a;border-radius:1px;border:1px solid #303135;"></div>
<div style="left:585.96px;top:721.92px;width:14.5px;height:14.5px;background:#25262a;border-radius:1px;border:1px solid #303135;"></div>
<div style="left:585.96px;top:739.48px;width:14.5px;height:14.5px;background:#25262a;border-radius:1px;border:1px solid #303135;"></div>
<div style="left:585.96px;top:757.04px;width:14.5px;height:14.5px;background:#d88a3e;border-radius:2px;border-top:1px solid #e8a868;"></div>
<div style="left:603.52px;top:599.0px;width:14.5px;height:14.5px;background:#25262a;border-radius:1px;border:1px solid #303135;"></div>
<div style="left:603.52px;top:616.56px;width:14.5px;height:14.5px;background:#25262a;border-radius:1px;border:1px solid #303135;"></div>
<div style="left:603.52px;top:634.12px;width:14.5px;height:14.5px;background:#25262a;border-radius:1px;border:1px solid #303135;"></div>
<div style="left:603.52px;top:651.68px;width:14.5px;height:14.5px;background:#25262a;border-radius:1px;border:1px solid #303135;"></div>
<div style="left:603.52px;top:669.24px;width:14.5px;height:14.5px;background:#b57a3c;border-radius:2px;border-top:1px solid #e8a868;"></div>
<div style="left:603.52px;top:686.8px;width:14.5px;height:14.5px;background:#25262a;border-radius:1px;border:1px solid #303135;"></div>
<div style="left:603.52px;top:704.36px;width:14.5px;height:14.5px;background:#25262a;border-radius:1px;border:1px solid #303135;"></div>
<div style="left:603.52px;top:721.92px;width:14.5px;height:14.5px;background:#25262a;border-radius:1px;border:1px solid #303135;"></div>
<div style="left:603.52px;top:739.48px;width:14.5px;height:14.5px;background:#25262a;border-radius:1px;border:1px solid #303135;"></div>
<div style="left:603.52px;top:757.04px;width:14.5px;height:14.5px;background:#25262a;border-radius:1px;border:1px solid #303135;"></div>
<div style="left:621.0799999999999px;top:599.0px;width:14.5px;height:14.5px;background:#25262a;border-radius:1px;border:1px solid #303135;"></div>
<div style="left:621.0799999999999px;top:616.56px;width:14.5px;height:14.5px;background:#25262a;border-radius:1px;border:1px solid #303135;"></div>
<div style="left:621.0799999999999px;top:634.12px;width:14.5px;height:14.5px;background:#25262a;border-radius:1px;border:1px solid #303135;"></div>
<div style="left:621.0799999999999px;top:651.68px;width:14.5px;height:14.5px;background:#25262a;border-radius:1px;border:1px solid #303135;"></div>
<div style="left:621.0799999999999px;top:669.24px;width:14.5px;height:14.5px;background:#d88a3e;border-radius:2px;border-top:1px solid #e8a868;"></div>
<div style="left:621.0799999999999px;top:686.8px;width:14.5px;height:14.5px;background:#25262a;border-radius:1px;border:1px solid #303135;"></div>
<div style="left:621.0799999999999px;top:704.36px;width:14.5px;height:14.5px;background:#25262a;border-radius:1px;border:1px solid #303135;"></div>
<div style="left:621.0799999999999px;top:721.92px;width:14.5px;height:14.5px;background:#25262a;border-radius:1px;border:1px solid #303135;"></div>
<div style="left:621.0799999999999px;top:739.48px;width:14.5px;height:14.5px;background:#25262a;border-radius:1px;border:1px solid #303135;"></div>
<div style="left:621.0799999999999px;top:757.04px;width:14.5px;height:14.5px;background:#25262a;border-radius:1px;border:1px solid #303135;"></div>
<div style="left:638.64px;top:599.0px;width:14.5px;height:14.5px;background:#25262a;border-radius:1px;border:1px solid #303135;"></div>
<div style="left:638.64px;top:616.56px;width:14.5px;height:14.5px;background:#25262a;border-radius:1px;border:1px solid #303135;"></div>
<div style="left:638.64px;top:634.12px;width:14.5px;height:14.5px;background:#25262a;border-radius:1px;border:1px solid #303135;"></div>
<div style="left:638.64px;top:651.68px;width:14.5px;height:14.5px;background:#25262a;border-radius:1px;border:1px solid #303135;"></div>
<div style="left:638.64px;top:669.24px;width:14.5px;height:14.5px;background:#b57a3c;border-radius:2px;border-top:1px solid #e8a868;"></div>
<div style="left:638.64px;top:686.8px;width:14.5px;height:14.5px;background:#25262a;border-radius:1px;border:1px solid #303135;"></div>
<div style="left:638.64px;top:704.36px;width:14.5px;height:14.5px;background:#25262a;border-radius:1px;border:1px solid #303135;"></div>
<div style="left:638.64px;top:721.92px;width:14.5px;height:14.5px;background:#25262a;border-radius:1px;border:1px solid #303135;"></div>
<div style="left:638.64px;top:739.48px;width:14.5px;height:14.5px;background:#25262a;border-radius:1px;border:1px solid #303135;"></div>
<div style="left:638.64px;top:757.04px;width:14.5px;height:14.5px;background:#25262a;border-radius:1px;border:1px solid #303135;"></div>
<div style="left:656.2px;top:599.0px;width:14.5px;height:14.5px;background:#2a2b2f;border-radius:1px;border:1px solid #303135;"></div>
<div style="left:656.2px;top:616.56px;width:14.5px;height:14.5px;background:#d88a3e;border-radius:2px;border-top:1px solid #e8a868;"></div>
<div style="left:656.2px;top:634.12px;width:14.5px;height:14.5px;background:#d88a3e;border-radius:2px;border-top:1px solid #e8a868;"></div>
<div style="left:656.2px;top:651.68px;width:14.5px;height:14.5px;background:#2a2b2f;border-radius:1px;border:1px solid #303135;"></div>
<div style="left:656.2px;top:669.24px;width:14.5px;height:14.5px;background:#d88a3e;border-radius:2px;border-top:1px solid #e8a868;"></div>
<div style="left:656.2px;top:686.8px;width:14.5px;height:14.5px;background:#2a2b2f;border-radius:1px;border:1px solid #303135;"></div>
<div style="left:656.2px;top:704.36px;width:14.5px;height:14.5px;background:#2a2b2f;border-radius:1px;border:1px solid #303135;"></div>
<div style="left:656.2px;top:721.92px;width:14.5px;height:14.5px;background:#2a2b2f;border-radius:1px;border:1px solid #303135;"></div>
<div style="left:656.2px;top:739.48px;width:14.5px;height:14.5px;background:#2a2b2f;border-radius:1px;border:1px solid #303135;"></div>
<div style="left:656.2px;top:757.04px;width:14.5px;height:14.5px;background:#d88a3e;border-radius:2px;border-top:1px solid #e8a868;"></div>
<div style="left:673.76px;top:599.0px;width:14.5px;height:14.5px;background:#2a2b2f;border-radius:1px;border:1px solid #303135;"></div>
<div style="left:673.76px;top:616.56px;width:14.5px;height:14.5px;background:#2a2b2f;border-radius:1px;border:1px solid #303135;"></div>
<div style="left:673.76px;top:634.12px;width:14.5px;height:14.5px;background:#2a2b2f;border-radius:1px;border:1px solid #303135;"></div>
<div style="left:673.76px;top:651.68px;width:14.5px;height:14.5px;background:#2a2b2f;border-radius:1px;border:1px solid #303135;"></div>
<div style="left:673.76px;top:669.24px;width:14.5px;height:14.5px;background:#b57a3c;border-radius:2px;border-top:1px solid #e8a868;"></div>
<div style="left:673.76px;top:686.8px;width:14.5px;height:14.5px;background:#2a2b2f;border-radius:1px;border:1px solid #303135;"></div>
<div style="left:673.76px;top:704.36px;width:14.5px;height:14.5px;background:#2a2b2f;border-radius:1px;border:1px solid #303135;"></div>
<div style="left:673.76px;top:721.92px;width:14.5px;height:14.5px;background:#2a2b2f;border-radius:1px;border:1px solid #303135;"></div>
<div style="left:673.76px;top:739.48px;width:14.5px;height:14.5px;background:#2a2b2f;border-radius:1px;border:1px solid #303135;"></div>
<div style="left:673.76px;top:757.04px;width:14.5px;height:14.5px;background:#2a2b2f;border-radius:1px;border:1px solid #303135;"></div>
<div style="left:691.3199999999999px;top:599.0px;width:14.5px;height:14.5px;background:#2a2b2f;border-radius:1px;border:1px solid #303135;"></div>
<div style="left:691.3199999999999px;top:616.56px;width:14.5px;height:14.5px;background:#2a2b2f;border-radius:1px;border:1px solid #303135;"></div>
<div style="left:691.3199999999999px;top:634.12px;width:14.5px;height:14.5px;background:#2a2b2f;border-radius:1px;border:1px solid #303135;"></div>
<div style="left:691.3199999999999px;top:651.68px;width:14.5px;height:14.5px;background:#2a2b2f;border-radius:1px;border:1px solid #303135;"></div>
<div style="left:691.3199999999999px;top:669.24px;width:14.5px;height:14.5px;background:#d88a3e;border-radius:2px;border-top:1px solid #e8a868;"></div>
<div style="left:691.3199999999999px;top:686.8px;width:14.5px;height:14.5px;background:#2a2b2f;border-radius:1px;border:1px solid #303135;"></div>
<div style="left:691.3199999999999px;top:704.36px;width:14.5px;height:14.5px;background:#2a2b2f;border-radius:1px;border:1px solid #303135;"></div>
<div style="left:691.3199999999999px;top:721.92px;width:14.5px;height:14.5px;background:#2a2b2f;border-radius:1px;border:1px solid #303135;"></div>
<div style="left:691.3199999999999px;top:739.48px;width:14.5px;height:14.5px;background:#2a2b2f;border-radius:1px;border:1px solid #303135;"></div>
<div style="left:691.3199999999999px;top:757.04px;width:14.5px;height:14.5px;background:#2a2b2f;border-radius:1px;border:1px solid #303135;"></div>
<div style="left:708.88px;top:599.0px;width:14.5px;height:14.5px;background:#2a2b2f;border-radius:1px;border:1px solid #303135;"></div>
<div style="left:708.88px;top:616.56px;width:14.5px;height:14.5px;background:#2a2b2f;border-radius:1px;border:1px solid #303135;"></div>
<div style="left:708.88px;top:634.12px;width:14.5px;height:14.5px;background:#2a2b2f;border-radius:1px;border:1px solid #303135;"></div>
<div style="left:708.88px;top:651.68px;width:14.5px;height:14.5px;background:#2a2b2f;border-radius:1px;border:1px solid #303135;"></div>
<div style="left:708.88px;top:669.24px;width:14.5px;height:14.5px;background:#b57a3c;border-radius:2px;border-top:1px solid #e8a868;"></div>
<div style="left:708.88px;top:686.8px;width:14.5px;height:14.5px;background:#2a2b2f;border-radius:1px;border:1px solid #303135;"></div>
<div style="left:708.88px;top:704.36px;width:14.5px;height:14.5px;background:#2a2b2f;border-radius:1px;border:1px solid #303135;"></div>
<div style="left:708.88px;top:721.92px;width:14.5px;height:14.5px;background:#2a2b2f;border-radius:1px;border:1px solid #303135;"></div>
<div style="left:708.88px;top:739.48px;width:14.5px;height:14.5px;background:#2a2b2f;border-radius:1px;border:1px solid #303135;"></div>
<div style="left:708.88px;top:757.04px;width:14.5px;height:14.5px;background:#2a2b2f;border-radius:1px;border:1px solid #303135;"></div>
<div style="left:726.4399999999999px;top:599.0px;width:14.5px;height:14.5px;background:#d88a3e;border-radius:2px;border-top:1px solid #e8a868;"></div>
<div style="left:726.4399999999999px;top:616.56px;width:14.5px;height:14.5px;background:#d88a3e;border-radius:2px;border-top:1px solid #e8a868;"></div>
<div style="left:726.4399999999999px;top:634.12px;width:14.5px;height:14.5px;background:#25262a;border-radius:1px;border:1px solid #303135;"></div>
<div style="left:726.4399999999999px;top:651.68px;width:14.5px;height:14.5px;background:#25262a;border-radius:1px;border:1px solid #303135;"></div>
<div style="left:726.4399999999999px;top:669.24px;width:14.5px;height:14.5px;background:#d88a3e;border-radius:2px;border-top:1px solid #e8a868;"></div>
<div style="left:726.4399999999999px;top:686.8px;width:14.5px;height:14.5px;background:#25262a;border-radius:1px;border:1px solid #303135;"></div>
<div style="left:726.4399999999999px;top:704.36px;width:14.5px;height:14.5px;background:#25262a;border-radius:1px;border:1px solid #303135;"></div>
<div style="left:726.4399999999999px;top:721.92px;width:14.5px;height:14.5px;background:#25262a;border-radius:1px;border:1px solid #303135;"></div>
<div style="left:726.4399999999999px;top:739.48px;width:14.5px;height:14.5px;background:#25262a;border-radius:1px;border:1px solid #303135;"></div>
<div style="left:726.4399999999999px;top:757.04px;width:14.5px;height:14.5px;background:#d88a3e;border-radius:2px;border-top:1px solid #e8a868;"></div>
<div style="left:303px;top:774px;width:444px;height:14px;background:#1c1d20;"></div>
<div style="left:116px;top:776px;width:187px;height:12px;background:#1c1d20;"></div>
<svg style="left:120px;top:778px;" width="10" height="8" viewBox="0 0 10 8"><path d="M0.5,7 L3,3 L5,5 L9,0.5" stroke="#ddd" fill="none" stroke-width="1"/></svg>
<svg style="left:296px;top:779px;" width="4" height="6" viewBox="0 0 4 6"><polygon points="4,0 4,6 0,3" fill="#888"/></svg>
<div style="left:747px;top:336px;width:510px;height:451px;background:#1f2023;"></div>
<div style="left:747px;top:336px;width:510px;height:11.5px;background:linear-gradient(#1e1f23,#2a2b2f 50%,#38393d);"></div>
<div class="t" style="left:751px;top:336.5px;font-size:9px;color:#eee;">+</div>
<div class="t" style="left:765px;top:338px;font-size:6.5px;color:#eee;">Instruments</div>
<svg style="left:1230px;top:338px;" width="7" height="8" viewBox="0 0 7 8"><rect x="1" y="0" width="5" height="4" fill="#ddd"/><path d="M0,4.5 H7 M3.5,4.5 V8" stroke="#ddd"/></svg>
<svg style="left:1245px;top:338px;" width="7" height="7" viewBox="0 0 7 7"><path d="M0.5,0.5 L6.5,6.5 M6.5,0.5 L0.5,6.5" stroke="#fff" stroke-width="1.5"/></svg>
<div style="left:747px;top:347px;width:58px;height:13px;background:#232428;"></div>
<div class="t" style="left:752px;top:350px;font-size:6.5px;color:#f0f0f0;">1 - Impact XT</div>
<svg style="left:796px;top:352px;" width="6" height="4" viewBox="0 0 6 4"><polygon points="0,0 5,0 2.5,3" fill="#eee"/></svg>
<div style="left:747px;top:361px;width:13px;height:11px;background:#58b35a;"></div>
<svg style="left:750px;top:362.5px;" width="8" height="8" viewBox="0 0 8 8"><path d="M2.3,2 A3,3 0 1 0 5.7,2" stroke="#fff" fill="none" stroke-width="1.2"/><path d="M4,0.5 V4" stroke="#fff" stroke-width="1.2"/></svg>
<div style="left:760px;top:361px;width:17px;height:11px;background:#2f3034;"></div>
<svg style="left:763px;top:363px;" width="10" height="6" viewBox="0 0 10 6"><path d="M1,6 A4,4 0 0 1 9,6" stroke="#ddd" fill="none" stroke-width="1.2"/><path d="M5,5 L6.5,2.5" stroke="#ddd"/></svg>
<svg style="left:778px;top:363px;" width="6" height="8" viewBox="0 0 6 8"><rect x="0.5" y="0.5" width="5" height="7" fill="none" stroke="#aaa"/></svg>
<svg style="left:790px;top:364px;" width="5" height="6" viewBox="0 0 5 6"><polygon points="5,0 5,6 0,3" fill="#ddd"/></svg>
<svg style="left:798px;top:364px;" width="5" height="6" viewBox="0 0 5 6"><polygon points="0,0 0,6 5,3" fill="#ddd"/></svg>
<div style="left:806px;top:361px;width:100px;height:12px;background:#26272b;"></div>
<div class="t" style="left:827px;top:364px;font-size:6.5px;color:#e8e8e8;">Analog Noise Kit</div>
<svg style="left:897px;top:365px;" width="6" height="4" viewBox="0 0 6 4"><polygon points="0,0 5,0 2.5,3" fill="#ccc"/></svg>
<div style="left:909px;top:361px;width:20px;height:12px;background:#2c2d31;"></div>
<div style="left:930px;top:361px;width:20px;height:12px;background:#2c2d31;"></div>
<svg style="left:914px;top:363px;" width="10" height="8" viewBox="0 0 10 8"><path d="M1,0 V8" stroke="#ddd" stroke-width="1.2"/><path d="M3,4 H7 M5,2 L8,4 L5,6" stroke="#ddd" fill="none" stroke-width="1.3"/></svg>
<svg style="left:935px;top:363px;" width="10" height="8" viewBox="0 0 10 8"><path d="M9,0 V8" stroke="#ddd" stroke-width="1.2"/><path d="M1,4 H6 M4,2 L7,4 L4,6" stroke="#ddd" fill="none" stroke-width="1.3"/></svg>
<div style="left:950px;top:361px;width:63px;height:12px;background:#26272b;"></div>
<div class="t" style="left:967px;top:364px;font-size:6.5px;color:#e8e8e8;">None</div>
<svg style="left:1005px;top:365px;" width="6" height="4" viewBox="0 0 6 4"><polygon points="0,0 5,0 2.5,3" fill="#ccc"/></svg>
<div style="left:747px;top:373px;width:30px;height:9.5px;background:#3b3c40;"></div>
<div class="t" style="left:749px;top:375px;font-size:6px;color:#9a9a9e;">Auto: Off</div>
<div style="left:780px;top:373px;width:37px;height:9.5px;background:#232428;"></div>
<div class="t" style="left:787px;top:375px;font-size:6px;color:#6a6b70;">Compare</div>
<div style="left:820px;top:373px;width:40px;height:9.5px;background:#26272b;"></div>
<div class="t" style="left:834px;top:375px;font-size:6.5px;color:#e8e8e8;">Copy</div>
<div style="left:863px;top:373px;width:40px;height:9.5px;background:#232428;"></div>
<div class="t" style="left:875px;top:375px;font-size:6px;color:#6a6b70;">Paste</div>
<svg style="left:1183px;top:374px;" width="8" height="8" viewBox="0 0 8 8"><circle cx="4" cy="4" r="2.2" fill="none" stroke="#ccc" stroke-width="1.6"/><circle cx="4" cy="4" r="3.6" fill="none" stroke="#ccc" stroke-width="1.2" stroke-dasharray="1.2,1.2"/></svg>
<svg style="left:1195px;top:376px;" width="5" height="4" viewBox="0 0 5 4"><polygon points="0,0 4,0 2,3" fill="#888"/></svg>
<div style="left:1204px;top:373.5px;width:53px;height:9px;background:#f2d75e;"></div>
<div class="t" style="left:1204px;top:375px;font-size:6.5px;color:#2a2a20;width:53px;text-align:center;">ATOM</div>
<div style="left:747px;top:383px;width:510px;height:19px;background:linear-gradient(90deg,#4ba6de,#5cb6ea 40%,#4ea9e0);"></div>
<div class="t" style="left:754px;top:387px;font-size:11px;color:#15202a;letter-spacing:0.3px"><b>IM</b><span style="font-weight:normal;color:#1d3b55">PACT</span>&nbsp;&nbsp;<b>XT</b></div>
<div style="left:1083px;top:386.5px;width:46px;height:11px;background:#2b2d30;border:1px solid #1a1a1a;"></div>
<div class="t" style="left:1083px;top:389px;font-size:6px;color:#eeeeee;width:46px;text-align:center;">Pad Focus</div>
<svg style="left:1233px;top:385px;" width="18" height="15" viewBox="0 0 18 15"><ellipse cx="9" cy="7.5" rx="8.5" ry="7" fill="#1a2a3a"/><path d="M3,11 L5,4 L7,9 L9,3 L11,9 L13,4 L15,11" stroke="#5cb6ea" stroke-width="1.3" fill="none"/></svg>
<div style="left:747px;top:402px;width:333px;height:98px;background:#141518;"></div>
<svg style="left:0px;top:0px;" width="1500" height="819" viewBox="0 0 1500 819"><polygon points="749,415.7 751,418.5 753,417.8 755,418.2 757,416.6 759,417.1 761,416.6 763,419.5 765,418.6 767,420.0 769,419.6 771,419.0 773,420.4 775,420.1 777,419.2 779,419.6 781,420.5 783,419.8 785,419.6 787,421.3 789,419.9 791,420.2 793,421.0 795,421.4 797,420.2 799,421.3 801,421.7 803,421.8 805,420.8 807,421.3 809,421.1 811,421.3 813,421.6 815,421.2 817,421.9 819,421.8 821,421.6 823,421.9 825,421.7 827,422.0 829,422.0 831,422.6 833,422.5 835,422.5 837,422.7 839,422.6 841,422.7 843,422.6 845,422.4 847,422.6 849,422.7 851,422.8 853,422.8 855,422.4 857,422.6 859,422.7 861,422.9 863,422.7 865,423.0 867,422.9 869,422.6 871,422.8 873,422.9 875,422.8 877,422.8 879,422.9 881,423.1 883,423.2 885,423.1 887,423.1 889,423.1 891,422.9 893,422.9 895,423.1 897,423.0 899,423.1 901,423.0 903,423.1 905,423.2 907,423.2 909,423.1 911,423.2 913,423.1 915,423.1 917,423.2 919,423.3 921,423.1 923,423.2 925,423.3 927,423.3 929,423.3 931,423.2 933,423.2 935,423.3 937,423.3 939,423.3 941,423.1 943,423.3 945,423.2 947,423.2 949,423.4 951,423.2 953,423.2 955,423.3 957,423.3 959,423.3 961,423.4 963,423.3 965,423.3 967,423.2 969,423.2 971,423.4 973,423.3 975,423.4 977,423.2 979,423.2 981,423.4 983,423.3 985,423.3 987,423.4 989,423.3 991,423.3 993,423.3 995,423.3 997,423.4 999,423.4 1001,423.4 1003,423.3 1005,423.3 1007,423.3 1009,423.4 1011,423.4 1013,423.3 1015,423.3 1017,423.4 1019,423.3 1021,423.4 1023,423.3 1025,423.3 1027,423.4 1029,423.3 1031,423.3 1033,423.4 1035,423.3 1037,423.4 1039,423.4 1041,423.3 1043,423.3 1045,423.4 1047,423.4 1049,423.3 1051,423.3 1053,423.4 1055,423.3 1057,423.4 1059,423.4 1061,423.4 1063,423.3 1065,423.4 1067,423.4 1069,423.4 1071,423.3 1073,423.4 1075,423.3 1077,423.3 1077,424.7 1075,424.7 1073,424.6 1071,424.7 1069,424.6 1067,424.6 1065,424.6 1063,424.7 1061,424.6 1059,424.6 1057,424.6 1055,424.7 1053,424.6 1051,424.7 1049,424.7 1047,424.6 1045,424.6 1043,424.7 1041,424.7 1039,424.6 1037,424.6 1035,424.7 1033,424.6 1031,424.7 1029,424.7 1027,424.6 1025,424.7 1023,424.7 1021,424.6 1019,424.7 1017,424.6 1015,424.7 1013,424.7 1011,424.6 1009,424.6 1007,424.7 1005,424.7 1003,424.7 1001,424.6 999,424.6 997,424.6 995,424.7 993,424.7 991,424.7 989,424.7 987,424.6 985,424.7 983,424.7 981,424.6 979,424.8 977,424.8 975,424.6 973,424.7 971,424.6 969,424.8 967,424.8 965,424.7 963,424.7 961,424.6 959,424.7 957,424.7 955,424.7 953,424.8 951,424.8 949,424.6 947,424.8 945,424.8 943,424.7 941,424.9 939,424.7 937,424.7 935,424.7 933,424.8 931,424.8 929,424.7 927,424.7 925,424.7 923,424.8 921,424.9 919,424.7 917,424.8 915,424.9 913,424.9 911,424.8 909,424.9 907,424.8 905,424.8 903,424.9 901,425.0 899,424.9 897,425.0 895,424.9 893,425.1 891,425.1 889,424.9 887,424.9 885,424.9 883,424.8 881,424.9 879,425.1 877,425.2 875,425.2 873,425.1 871,425.2 869,425.4 867,425.1 865,425.0 863,425.3 861,425.1 859,425.3 857,425.4 855,425.6 853,425.2 851,425.2 849,425.3 847,425.4 845,425.6 843,425.4 841,425.3 839,425.4 837,425.3 835,425.5 833,425.5 831,425.4 829,426.0 827,426.0 825,426.3 823,426.1 821,426.4 819,426.2 817,426.1 815,426.8 813,426.4 811,426.7 809,426.9 807,426.7 805,427.2 803,426.2 801,426.3 799,426.7 797,427.8 795,426.6 793,427.0 791,427.8 789,428.1 787,426.7 785,428.4 783,428.2 781,427.5 779,428.4 777,428.8 775,427.9 773,427.6 771,429.0 769,428.4 767,428.0 765,429.4 763,428.5 761,431.4 759,430.9 757,431.4 755,429.8 753,430.2 751,429.5 749,432.3" fill="#5fb8e6"/></svg>
<div style="left:749px;top:423.7px;width:330px;height:0.7px;background:rgba(140,170,190,0.6);"></div>
<svg style="left:0px;top:0px;" width="1500" height="819" viewBox="0 0 1500 819"><polygon points="749,461.1 751,460.7 753,459.2 755,461.2 757,461.8 759,459.2 761,460.7 763,461.3 765,460.5 767,460.7 769,462.7 771,463.1 773,462.4 775,462.6 777,462.6 779,462.2 781,462.5 783,462.0 785,464.0 787,463.5 789,463.7 791,462.9 793,464.1 795,464.3 797,464.0 799,464.1 801,464.5 803,464.6 805,463.7 807,464.5 809,464.0 811,464.5 813,465.2 815,464.2 817,464.4 819,464.4 821,464.5 823,464.7 825,465.4 827,465.1 829,465.4 831,465.3 833,465.6 835,465.4 837,465.0 839,465.6 841,465.2 843,465.5 845,465.6 847,465.3 849,465.3 851,465.6 853,465.5 855,465.9 857,465.8 859,465.5 861,465.7 863,465.8 865,465.7 867,466.0 869,465.8 871,465.9 873,465.8 875,466.1 877,465.8 879,466.1 881,466.1 883,466.0 885,465.9 887,466.1 889,466.2 891,465.9 893,466.2 895,466.0 897,466.1 899,466.1 901,466.1 903,466.1 905,466.0 907,466.2 909,466.1 911,466.2 913,466.2 915,466.1 917,466.2 919,466.2 921,466.1 923,466.3 925,466.2 927,466.1 929,466.1 931,466.3 933,466.3 935,466.3 937,466.1 939,466.2 941,466.2 943,466.3 945,466.3 947,466.2 949,466.2 951,466.3 953,466.2 955,466.3 957,466.4 959,466.2 961,466.3 963,466.3 965,466.2 967,466.4 969,466.4 971,466.4 973,466.3 975,466.4 977,466.3 979,466.3 981,466.4 983,466.3 985,466.4 987,466.3 989,466.2 991,466.3 993,466.4 995,466.3 997,466.4 999,466.4 1001,466.3 1003,466.3 1005,466.4 1007,466.3 1009,466.3 1011,466.3 1013,466.4 1015,466.4 1017,466.3 1019,466.3 1021,466.3 1023,466.3 1025,466.3 1027,466.4 1029,466.4 1031,466.4 1033,466.3 1035,466.3 1037,466.3 1039,466.3 1041,466.4 1043,466.4 1045,466.4 1047,466.3 1049,466.3 1051,466.4 1053,466.3 1055,466.4 1057,466.3 1059,466.3 1061,466.3 1063,466.3 1065,466.3 1067,466.4 1069,466.3 1071,466.4 1073,466.3 1075,466.3 1077,466.3 1077,467.7 1075,467.7 1073,467.7 1071,467.6 1069,467.7 1067,467.6 1065,467.7 1063,467.7 1061,467.7 1059,467.7 1057,467.7 1055,467.6 1053,467.7 1051,467.6 1049,467.7 1047,467.7 1045,467.6 1043,467.6 1041,467.6 1039,467.7 1037,467.7 1035,467.7 1033,467.7 1031,467.6 1029,467.6 1027,467.6 1025,467.7 1023,467.7 1021,467.7 1019,467.7 1017,467.7 1015,467.6 1013,467.6 1011,467.7 1009,467.7 1007,467.7 1005,467.6 1003,467.7 1001,467.7 999,467.6 997,467.6 995,467.7 993,467.6 991,467.7 989,467.8 987,467.7 985,467.6 983,467.7 981,467.6 979,467.7 977,467.7 975,467.6 973,467.7 971,467.6 969,467.6 967,467.6 965,467.8 963,467.7 961,467.7 959,467.8 957,467.6 955,467.7 953,467.8 951,467.7 949,467.8 947,467.8 945,467.7 943,467.7 941,467.8 939,467.8 937,467.9 935,467.7 933,467.7 931,467.7 929,467.9 927,467.9 925,467.8 923,467.7 921,467.9 919,467.8 917,467.8 915,467.9 913,467.8 911,467.8 909,467.9 907,467.8 905,468.0 903,467.9 901,467.9 899,467.9 897,467.9 895,468.0 893,467.8 891,468.1 889,467.8 887,467.9 885,468.1 883,468.0 881,467.9 879,467.9 877,468.2 875,467.9 873,468.2 871,468.1 869,468.2 867,468.0 865,468.3 863,468.2 861,468.3 859,468.5 857,468.2 855,468.1 853,468.5 851,468.4 849,468.7 847,468.7 845,468.4 843,468.5 841,468.8 839,468.4 837,469.0 835,468.6 833,468.4 831,468.7 829,468.6 827,468.9 825,468.6 823,469.3 821,469.5 819,469.6 817,469.6 815,469.8 813,468.8 811,469.5 809,470.0 807,469.5 805,470.3 803,469.4 801,469.5 799,469.9 797,470.0 795,469.7 793,469.9 791,471.1 789,470.3 787,470.5 785,470.0 783,472.0 781,471.5 779,471.8 777,471.4 775,471.4 773,471.6 771,470.9 769,471.3 767,473.3 765,473.5 763,472.7 761,473.3 759,474.8 757,472.2 755,472.8 753,474.8 751,473.3 749,472.9" fill="#5fb8e6"/></svg>
<div style="left:749px;top:466.7px;width:330px;height:0.7px;background:rgba(140,170,190,0.6);"></div>
<svg style="left:749px;top:478px;" width="9" height="9" viewBox="0 0 9 9"><polygon points="0,0 0,9 9,9" fill="#eee"/></svg>
<svg style="left:752px;top:490.5px;" width="4" height="5" viewBox="0 0 4 5"><polygon points="4,0 4,5 0,2.5" fill="#888"/></svg>
<div style="left:758px;top:492px;width:65px;height:2.5px;background:#6a6b6e;border-radius:1px;"></div>
<svg style="left:968px;top:487px;" width="4" height="6" viewBox="0 0 4 6"><polygon points="0,0 0,6 4,3" fill="#aaa"/></svg>
<div class="t" style="left:976px;top:486px;font-size:7px;color:#ccc;">L</div>
<div class="t" style="left:987px;top:486px;font-size:7px;color:#ccc;">R</div>
<svg style="left:995px;top:486px;" width="8" height="8" viewBox="0 0 8 8"><circle cx="3.2" cy="3.2" r="2.5" fill="none" stroke="#ccc" stroke-width="1.1"/><path d="M5,5 L7.5,7.5" stroke="#ccc" stroke-width="1.2"/></svg>
<svg style="left:1007px;top:488px;" width="6" height="5" viewBox="0 0 6 5"><polygon points="3,0 6,5 0,5" fill="#ccc"/></svg>
<div style="left:1015px;top:490px;width:36px;height:1px;background:#aaa;"></div>
<div style="left:1017px;top:487px;width:2px;height:7px;background:#ccc;"></div>
<svg style="left:1054px;top:486px;" width="9" height="7" viewBox="0 0 9 7"><polygon points="4.5,0 9,7 0,7" fill="#ccc"/></svg>
<div style="left:1068px;top:486px;width:3px;height:2px;background:#aaa;"></div>
<div style="left:1068px;top:489px;width:3px;height:2px;background:#aaa;"></div>
<div style="left:747px;top:500px;width:333px;height:12px;background:#1e2024;"></div>
<div class="t" style="left:751px;top:500px;font-size:10px;color:#4aa3e8;">+</div>
<div style="left:766px;top:501px;width:33px;height:10px;background:#24272c;border:1px solid #2f3338;"></div>
<div class="t" style="left:766px;top:503px;font-size:6px;color:#6aa8e0;width:33px;text-align:center;">Reverse</div>
<div style="left:804px;top:501px;width:43px;height:10px;background:#24272c;border:1px solid #2f3338;"></div>
<div class="t" style="left:804px;top:503px;font-size:6px;color:#6aa8e0;width:43px;text-align:center;">Normalize</div>
<div class="t" style="left:874px;top:502px;font-size:7px;color:#f0f0f0;">Noise Analog Env</div>
<div style="left:957px;top:501px;width:35px;height:10px;background:#24272c;"></div>
<svg style="left:962px;top:503px;" width="6" height="6" viewBox="0 0 6 6"><polygon points="5,0 5,6 0,3" fill="#4aa3e8"/></svg>
<svg style="left:974px;top:503px;" width="6" height="6" viewBox="0 0 6 6"><polygon points="0,0 0,6 5,3" fill="#4aa3e8"/></svg>
<div class="t" style="left:989px;top:502px;font-size:6.5px;color:#ddd;">Start</div>
<div class="t" style="left:1003px;top:502px;font-size:6.5px;color:#6aa8e0;">0</div>
<div class="t" style="left:1033px;top:502px;font-size:6.5px;color:#ddd;">End</div>
<div class="t" style="left:1049px;top:502px;font-size:6.5px;color:#6aa8e0;">98759</div>
<div style="left:1080px;top:402px;width:177px;height:110px;background:#1f2023;"></div>
<div style="left:1080px;top:402px;width:2px;height:110px;background:#111;"></div>
<div style="left:1087px;top:409px;width:16px;height:12px;background:#8a1c24;border:1px solid #d0505a;"></div>
<div class="t" style="left:1113px;top:412px;font-size:7.5px;color:#f4f4f4;font-weight:bold;">BD body</div>
<div class="t" style="left:1185px;top:412px;font-size:6.5px;color:#ddd;">1st</div>
<div class="t" style="left:1202px;top:412px;font-size:6.5px;color:#7fb6f0;">C 1</div>
<div class="t" style="left:1220px;top:412px;font-size:6.5px;color:#ddd;">2nd</div>
<div class="t" style="left:1247px;top:412px;font-size:6.5px;color:#ddd;">-</div>
<div class="t" style="left:1085px;top:431px;font-size:6.5px;color:#ddd;">Trigger</div>
<div style="left:1113px;top:428px;width:37px;height:10px;background:#22252b;border:1px solid #2f3540;"></div>
<div class="t" style="left:1113px;top:430px;font-size:6.2px;color:#7ab2ec;width:37px;text-align:center;">One Shot</div>
<div style="left:1150px;top:428px;width:28px;height:10px;background:#22252b;border:1px solid #2f3540;"></div>
<div class="t" style="left:1150px;top:430px;font-size:6.2px;color:#7ab2ec;width:28px;text-align:center;">Loop</div>
<div style="left:1178px;top:428px;width:31px;height:10px;background:#415e92;border:1px solid #4a6aa0;"></div>
<div class="t" style="left:1178px;top:430px;font-size:6.2px;color:#f0f0f0;width:31px;text-align:center;">Normal</div>
<div style="left:1216px;top:428px;width:34px;height:10px;background:#1e2024;border:1px solid #2a2d32;"></div>
<div class="t" style="left:1216px;top:430px;font-size:6.2px;color:#4a4d52;width:34px;text-align:center;">Toggle</div>
<div class="t" style="left:1085px;top:449px;font-size:6.5px;color:#ddd;">Layer Mode</div>
<div style="left:1128px;top:446px;width:53px;height:10px;background:#1e2024;border:1px solid #2a2d32;"></div>
<div class="t" style="left:1128px;top:448px;font-size:6.2px;color:#4a4d52;width:53px;text-align:center;">Velocity</div>
<div class="t" style="left:1191px;top:449px;font-size:6.5px;color:#ddd;">Choke</div>
<div style="left:1216px;top:446px;width:34px;height:10px;background:#3a5a98;border:1px solid #3a5a98;"></div>
<div class="t" style="left:1216px;top:448px;font-size:6.2px;color:#f0f0f0;width:34px;text-align:center;">3</div>
<svg style="left:1242px;top:449px;" width="5" height="4" viewBox="0 0 5 4"><polygon points="0,0 4,0 2,3" fill="#fff"/></svg>
<div class="t" style="left:1085px;top:467px;font-size:6.5px;color:#ddd;">Quantize</div>
<div style="left:1129px;top:464px;width:53px;height:10px;background:#22252b;border:1px solid #2f3540;"></div>
<div class="t" style="left:1129px;top:466px;font-size:6.2px;color:#7ab2ec;width:53px;text-align:center;">Off</div>
<svg style="left:1171px;top:467px;" width="5" height="4" viewBox="0 0 5 4"><polygon points="0,0 4,0 2,3" fill="#7ab2ec"/></svg>
<div style="left:1189px;top:464px;width:61px;height:10px;background:#22252b;border:1px solid #2f3540;"></div>
<div class="t" style="left:1189px;top:466px;font-size:6.2px;color:#7ab2ec;width:61px;text-align:center;">Follow Tempo</div>
<div class="t" style="left:1085px;top:485px;font-size:6.5px;color:#ddd;">Offsets</div>
<div class="t" style="left:1128px;top:485px;font-size:6.5px;color:#ddd;">Start</div>
<svg style="left:1147px;top:482px;" width="9" height="9" viewBox="0 0 9 9"><circle cx="4.5" cy="4.5" r="4" fill="#ccc"/><path d="M4.5,4.5 L2,2" stroke="#222" stroke-width="1.2"/></svg>
<div class="t" style="left:1161px;top:485px;font-size:6.5px;color:#7ab2ec;">0 s</div>
<div class="t" style="left:1198px;top:485px;font-size:6.5px;color:#ddd;">End</div>
<svg style="left:1215px;top:482px;" width="9" height="9" viewBox="0 0 9 9"><circle cx="4.5" cy="4.5" r="4" fill="#ccc"/><path d="M4.5,4.5 L2,2" stroke="#222" stroke-width="1.2"/></svg>
<div class="t" style="left:1229px;top:485px;font-size:6.5px;color:#7ab2ec;">0 s</div>
<div style="left:1083px;top:500px;width:60px;height:10px;background:#22252b;border:1px solid #2f3540;"></div>
<div class="t" style="left:1083px;top:502px;font-size:6.2px;color:#7ab2ec;width:60px;text-align:center;">All Notes Off</div>
<div style="left:1145px;top:500px;width:63px;height:10px;background:#1e2024;border:1px solid #2a2d32;"></div>
<div class="t" style="left:1145px;top:502px;font-size:6.2px;color:#4a4d52;width:63px;text-align:center;">Edit Sample</div>
<div style="left:1211px;top:500px;width:43px;height:10px;background:#22252b;border:1px solid #2f3540;"></div>
<div class="t" style="left:1211px;top:502px;font-size:6.2px;color:#7ab2ec;width:43px;text-align:center;">Reset</div>
<div style="left:747px;top:512px;width:333px;height:263px;background:#1e1f22;"></div>
<div style="left:771px;top:512px;width:309px;height:263px;background:#3b3c40;"></div>
<div style="left:747px;top:513.0px;width:23px;height:32px;background:#1d1e21;"></div>
<div style="left:769px;top:513.0px;width:2px;height:32px;background:#e8f4fb;"></div>
<div class="t" style="left:747px;top:524.0px;font-size:9px;color:#fff;width:23px;text-align:center;font-weight:bold;">A</div>
<div style="left:747px;top:545.6px;width:23px;height:31.5px;background:#4aa6d8;border-top:1px solid #1e3b52;"></div>
<div class="t" style="left:747px;top:556.6px;font-size:8px;color:#123048;width:23px;text-align:center;font-weight:bold;">B</div>
<div style="left:747px;top:578.2px;width:23px;height:31.5px;background:#4aa6d8;border-top:1px solid #1e3b52;"></div>
<div class="t" style="left:747px;top:589.2px;font-size:8px;color:#123048;width:23px;text-align:center;font-weight:bold;">C</div>
<div style="left:747px;top:610.8px;width:23px;height:31.5px;background:#4aa6d8;border-top:1px solid #1e3b52;"></div>
<div class="t" style="left:747px;top:621.8px;font-size:8px;color:#123048;width:23px;text-align:center;font-weight:bold;">D</div>
<div style="left:747px;top:643.4px;width:23px;height:31.5px;background:#4aa6d8;border-top:1px solid #1e3b52;"></div>
<div class="t" style="left:747px;top:654.4px;font-size:8px;color:#123048;width:23px;text-align:center;font-weight:bold;">E</div>
<div style="left:747px;top:676.0px;width:23px;height:31.5px;background:#4aa6d8;border-top:1px solid #1e3b52;"></div>
<div class="t" style="left:747px;top:687.0px;font-size:8px;color:#123048;width:23px;text-align:center;font-weight:bold;">F</div>
<div style="left:747px;top:708.6px;width:23px;height:31.5px;background:#4aa6d8;border-top:1px solid #1e3b52;"></div>
<div class="t" style="left:747px;top:719.6px;font-size:8px;color:#123048;width:23px;text-align:center;font-weight:bold;">G</div>
<div style="left:747px;top:741.2px;width:23px;height:31.5px;background:#4aa6d8;border-top:1px solid #1e3b52;"></div>
<div class="t" style="left:747px;top:752.2px;font-size:8px;color:#123048;width:23px;text-align:center;font-weight:bold;">H</div>
<div style="left:778.0px;top:519.0px;width:69.5px;height:55.5px;background:#1f2024;border:1.5px solid #8f8a4e;border-radius:2px;"></div>
<div class="t" style="left:784.0px;top:524.0px;font-size:6px;color:#e8e8e8;">C# 1</div>
<div class="t" style="left:778.0px;top:542.5px;font-size:7.2px;color:#f0f0f0;width:69.5px;text-align:center;">Clave</div>
<div class="t" style="left:784.0px;top:563.5px;font-size:6.8px;color:#b0b0b0;">S&nbsp;&nbsp;&nbsp;M</div>
<div class="t" style="left:839.0px;top:563.5px;font-size:6.8px;color:#b0b0b0;">4</div>
<svg style="left:821.0px;top:564.5px;" width="10" height="6" viewBox="0 0 10 6"><circle cx="3" cy="3" r="2.6" fill="#c8c8c8"/><circle cx="6.5" cy="3" r="2.4" fill="none" stroke="#c8c8c8" stroke-width="1"/></svg>
<div style="left:853.1px;top:519.0px;width:69.5px;height:55.5px;background:#1f2024;border:1.5px solid #4a4555;border-radius:2px;"></div>
<div class="t" style="left:859.1px;top:524.0px;font-size:6px;color:#e8e8e8;">C# 2</div>
<div class="t" style="left:853.1px;top:542.5px;font-size:7.2px;color:#f0f0f0;width:69.5px;text-align:center;">Crash cymbal</div>
<div class="t" style="left:859.1px;top:563.5px;font-size:6.8px;color:#b0b0b0;">S&nbsp;&nbsp;&nbsp;M</div>
<div class="t" style="left:914.1px;top:563.5px;font-size:6.8px;color:#b0b0b0;">3</div>
<svg style="left:896.1px;top:564.5px;" width="10" height="6" viewBox="0 0 10 6"><circle cx="3" cy="3" r="2.6" fill="#c8c8c8"/><circle cx="6.5" cy="3" r="2.4" fill="none" stroke="#c8c8c8" stroke-width="1"/></svg>
<div style="left:928.2px;top:519.0px;width:69.5px;height:55.5px;background:#1f2024;border:1.5px solid #8f8a4e;border-radius:2px;"></div>
<div class="t" style="left:934.2px;top:524.0px;font-size:6px;color:#e8e8e8;">D 2</div>
<div class="t" style="left:928.2px;top:542.5px;font-size:7.2px;color:#f0f0f0;width:69.5px;text-align:center;">Tom 1</div>
<div class="t" style="left:934.2px;top:563.5px;font-size:6.8px;color:#b0b0b0;">S&nbsp;&nbsp;&nbsp;M</div>
<div class="t" style="left:989.2px;top:563.5px;font-size:6.8px;color:#b0b0b0;">4</div>
<svg style="left:971.2px;top:564.5px;" width="10" height="6" viewBox="0 0 10 6"><circle cx="3" cy="3" r="2.6" fill="#c8c8c8"/><circle cx="6.5" cy="3" r="2.4" fill="none" stroke="#c8c8c8" stroke-width="1"/></svg>
<div style="left:1003.3px;top:519.0px;width:69.5px;height:55.5px;background:#1f2024;border:1.5px solid #4a4555;border-radius:2px;"></div>
<div class="t" style="left:1009.3px;top:524.0px;font-size:6px;color:#e8e8e8;">D# 2</div>
<div class="t" style="left:1003.3px;top:542.5px;font-size:7.2px;color:#f0f0f0;width:69.5px;text-align:center;">Ride cymbal</div>
<div class="t" style="left:1009.3px;top:563.5px;font-size:6.8px;color:#b0b0b0;">S&nbsp;&nbsp;&nbsp;M</div>
<div class="t" style="left:1064.3px;top:563.5px;font-size:6.8px;color:#b0b0b0;">3</div>
<svg style="left:1046.3px;top:564.5px;" width="10" height="6" viewBox="0 0 10 6"><circle cx="3" cy="3" r="2.6" fill="#c8c8c8"/><circle cx="6.5" cy="3" r="2.4" fill="none" stroke="#c8c8c8" stroke-width="1"/></svg>
<div style="left:778.0px;top:582.8px;width:69.5px;height:55.5px;background:#1f2024;border:1.5px solid #4a4555;border-radius:2px;"></div>
<div class="t" style="left:784.0px;top:587.8px;font-size:6px;color:#e8e8e8;">G# 1</div>
<div class="t" style="left:778.0px;top:606.3px;font-size:7.2px;color:#f0f0f0;width:69.5px;text-align:center;">HiHat pedal</div>
<div class="t" style="left:784.0px;top:627.3px;font-size:6.8px;color:#b0b0b0;">S&nbsp;&nbsp;&nbsp;M</div>
<div class="t" style="left:839.0px;top:627.3px;font-size:6.8px;color:#b0b0b0;">3</div>
<svg style="left:821.0px;top:628.3px;" width="10" height="6" viewBox="0 0 10 6"><circle cx="3" cy="3" r="2.6" fill="#c8c8c8"/><circle cx="6.5" cy="3" r="2.4" fill="none" stroke="#c8c8c8" stroke-width="1"/></svg>
<div style="left:853.1px;top:582.8px;width:69.5px;height:55.5px;background:#1f2024;border:1.5px solid #8f8a4e;border-radius:2px;"></div>
<div class="t" style="left:859.1px;top:587.8px;font-size:6px;color:#e8e8e8;">A 1</div>
<div class="t" style="left:853.1px;top:606.3px;font-size:7.2px;color:#f0f0f0;width:69.5px;text-align:center;">Tom 4</div>
<div class="t" style="left:859.1px;top:627.3px;font-size:6.8px;color:#b0b0b0;">S&nbsp;&nbsp;&nbsp;M</div>
<div class="t" style="left:914.1px;top:627.3px;font-size:6.8px;color:#b0b0b0;">4</div>
<svg style="left:896.1px;top:628.3px;" width="10" height="6" viewBox="0 0 10 6"><circle cx="3" cy="3" r="2.6" fill="#c8c8c8"/><circle cx="6.5" cy="3" r="2.4" fill="none" stroke="#c8c8c8" stroke-width="1"/></svg>
<div style="left:928.2px;top:582.8px;width:69.5px;height:55.5px;background:#1f2024;border:1.5px solid #4a4555;border-radius:2px;"></div>
<div class="t" style="left:934.2px;top:587.8px;font-size:6px;color:#e8e8e8;">A# 1</div>
<div class="t" style="left:928.2px;top:606.3px;font-size:7.2px;color:#f0f0f0;width:69.5px;text-align:center;">HiHat open</div>
<div class="t" style="left:934.2px;top:627.3px;font-size:6.8px;color:#b0b0b0;">S&nbsp;&nbsp;&nbsp;M</div>
<div class="t" style="left:989.2px;top:627.3px;font-size:6.8px;color:#b0b0b0;">3</div>
<svg style="left:971.2px;top:628.3px;" width="10" height="6" viewBox="0 0 10 6"><circle cx="3" cy="3" r="2.6" fill="#c8c8c8"/><circle cx="6.5" cy="3" r="2.4" fill="none" stroke="#c8c8c8" stroke-width="1"/></svg>
<div style="left:1003.3px;top:582.8px;width:69.5px;height:55.5px;background:radial-gradient(ellipse at center,#8f8a55 30%,#a8a36a 100%);border:1.5px solid #c9c387;border-radius:2px;"></div>
<div class="t" style="left:1009.3px;top:587.8px;font-size:6px;color:rgba(255,255,255,0.55);">B 1</div>
<div class="t" style="left:1003.3px;top:606.3px;font-size:7.2px;color:rgba(255,255,255,0.75);width:69.5px;text-align:center;">Tom 3</div>
<svg style="left:1046.3px;top:628.3px;" width="10" height="6" viewBox="0 0 10 6"><circle cx="3" cy="3" r="2.6" fill="#c8c8c8"/><circle cx="6.5" cy="3" r="2.4" fill="none" stroke="#c8c8c8" stroke-width="1"/></svg>
<div style="left:778.0px;top:646.6px;width:69.5px;height:55.5px;background:#1f2024;border:1.5px solid #3e5a5c;border-radius:2px;"></div>
<div class="t" style="left:784.0px;top:651.6px;font-size:6px;color:#e8e8e8;">E 1</div>
<div class="t" style="left:778.0px;top:670.1px;font-size:7.2px;color:#f0f0f0;width:69.5px;text-align:center;">Snare 2 body</div>
<div class="t" style="left:784.0px;top:691.1px;font-size:6.8px;color:#b0b0b0;">S&nbsp;&nbsp;&nbsp;M</div>
<div class="t" style="left:839.0px;top:691.1px;font-size:6.8px;color:#b0b0b0;">2</div>
<svg style="left:821.0px;top:692.1px;" width="10" height="6" viewBox="0 0 10 6"><circle cx="3" cy="3" r="2.6" fill="#c8c8c8"/><circle cx="6.5" cy="3" r="2.4" fill="none" stroke="#c8c8c8" stroke-width="1"/></svg>
<div style="left:853.1px;top:646.6px;width:69.5px;height:55.5px;background:#1f2024;border:1.5px solid #3e5a5c;border-radius:2px;"></div>
<div class="t" style="left:859.1px;top:651.6px;font-size:6px;color:#e8e8e8;">E 1</div>
<div class="t" style="left:853.1px;top:670.1px;font-size:7.2px;color:#f0f0f0;width:69.5px;text-align:center;">Snare 2 noise</div>
<div class="t" style="left:859.1px;top:691.1px;font-size:6.8px;color:#b0b0b0;">S&nbsp;&nbsp;&nbsp;M</div>
<div class="t" style="left:914.1px;top:691.1px;font-size:6.8px;color:#b0b0b0;">2</div>
<svg style="left:896.1px;top:692.1px;" width="10" height="6" viewBox="0 0 10 6"><circle cx="3" cy="3" r="2.6" fill="#c8c8c8"/><circle cx="6.5" cy="3" r="2.4" fill="none" stroke="#c8c8c8" stroke-width="1"/></svg>
<div style="left:928.2px;top:646.6px;width:69.5px;height:55.5px;background:radial-gradient(ellipse at center,#8a5a9c 30%,#a272b4 100%);border:1.5px solid #c690dc;border-radius:2px;"></div>
<div class="t" style="left:934.2px;top:651.6px;font-size:6px;color:rgba(255,255,255,0.55);">F# 1</div>
<div class="t" style="left:928.2px;top:670.1px;font-size:7.2px;color:rgba(255,255,255,0.75);width:69.5px;text-align:center;">HiHat closed</div>
<svg style="left:971.2px;top:692.1px;" width="10" height="6" viewBox="0 0 10 6"><circle cx="3" cy="3" r="2.6" fill="#c8c8c8"/><circle cx="6.5" cy="3" r="2.4" fill="none" stroke="#c8c8c8" stroke-width="1"/></svg>
<div style="left:1003.3px;top:646.6px;width:69.5px;height:55.5px;background:#1f2024;border:1.5px solid #8f8a4e;border-radius:2px;"></div>
<div class="t" style="left:1009.3px;top:651.6px;font-size:6px;color:#e8e8e8;">G 1</div>
<div class="t" style="left:1003.3px;top:670.1px;font-size:7.2px;color:#f0f0f0;width:69.5px;text-align:center;">Tom 5</div>
<div class="t" style="left:1009.3px;top:691.1px;font-size:6.8px;color:#b0b0b0;">S&nbsp;&nbsp;&nbsp;M</div>
<div class="t" style="left:1064.3px;top:691.1px;font-size:6.8px;color:#b0b0b0;">4</div>
<svg style="left:1046.3px;top:692.1px;" width="10" height="6" viewBox="0 0 10 6"><circle cx="3" cy="3" r="2.6" fill="#c8c8c8"/><circle cx="6.5" cy="3" r="2.4" fill="none" stroke="#c8c8c8" stroke-width="1"/></svg>
<div style="left:778.0px;top:710.4px;width:69.5px;height:55.5px;background:#1f2024;border:1.5px solid #d0566a;border-radius:2px;"></div>
<div class="t" style="left:784.0px;top:715.4px;font-size:6px;color:#e8e8e8;font-weight:bold;">C 1</div>
<div class="t" style="left:778.0px;top:733.9px;font-size:7.2px;color:#f0f0f0;width:69.5px;text-align:center;font-weight:bold;">BD body</div>
<div class="t" style="left:784.0px;top:754.9px;font-size:6.8px;color:#b0b0b0;">S&nbsp;&nbsp;&nbsp;M</div>
<div class="t" style="left:839.0px;top:754.9px;font-size:6.8px;color:#b0b0b0;">1</div>
<svg style="left:821.0px;top:755.9px;" width="10" height="6" viewBox="0 0 10 6"><circle cx="3" cy="3" r="2.6" fill="#c8c8c8"/><circle cx="6.5" cy="3" r="2.4" fill="none" stroke="#c8c8c8" stroke-width="1"/></svg>
<div style="left:853.1px;top:710.4px;width:69.5px;height:55.5px;background:radial-gradient(ellipse at center,#4f7c82 30%,#64959a 100%);border:1.5px solid #7eb2b8;border-radius:2px;"></div>
<div class="t" style="left:859.1px;top:715.4px;font-size:6px;color:rgba(255,255,255,0.55);">D 1</div>
<div class="t" style="left:853.1px;top:733.9px;font-size:7.2px;color:rgba(255,255,255,0.75);width:69.5px;text-align:center;">Snare 1 body</div>
<svg style="left:896.1px;top:755.9px;" width="10" height="6" viewBox="0 0 10 6"><circle cx="3" cy="3" r="2.6" fill="#c8c8c8"/><circle cx="6.5" cy="3" r="2.4" fill="none" stroke="#c8c8c8" stroke-width="1"/></svg>
<div style="left:928.2px;top:710.4px;width:69.5px;height:55.5px;background:radial-gradient(ellipse at center,#4f7c82 30%,#64959a 100%);border:1.5px solid #7eb2b8;border-radius:2px;"></div>
<div class="t" style="left:934.2px;top:715.4px;font-size:6px;color:rgba(255,255,255,0.55);">D 1</div>
<div class="t" style="left:928.2px;top:733.9px;font-size:7.2px;color:rgba(255,255,255,0.75);width:69.5px;text-align:center;">Snare 1 noise</div>
<svg style="left:971.2px;top:755.9px;" width="10" height="6" viewBox="0 0 10 6"><circle cx="3" cy="3" r="2.6" fill="#c8c8c8"/><circle cx="6.5" cy="3" r="2.4" fill="none" stroke="#c8c8c8" stroke-width="1"/></svg>
<div style="left:1003.3px;top:710.4px;width:69.5px;height:55.5px;background:#1f2024;border:1.5px solid #3e5a5c;border-radius:2px;"></div>
<div class="t" style="left:1009.3px;top:715.4px;font-size:6px;color:#e8e8e8;">D# 1</div>
<div class="t" style="left:1003.3px;top:733.9px;font-size:7.2px;color:#f0f0f0;width:69.5px;text-align:center;">Clap</div>
<div class="t" style="left:1009.3px;top:754.9px;font-size:6.8px;color:#b0b0b0;">S&nbsp;&nbsp;&nbsp;M</div>
<div class="t" style="left:1064.3px;top:754.9px;font-size:6.8px;color:#b0b0b0;">2</div>
<svg style="left:1046.3px;top:755.9px;" width="10" height="6" viewBox="0 0 10 6"><circle cx="3" cy="3" r="2.6" fill="#c8c8c8"/><circle cx="6.5" cy="3" r="2.4" fill="none" stroke="#c8c8c8" stroke-width="1"/></svg>
<div style="left:1080px;top:512px;width:177px;height:263px;background:#1e2a33;"></div>
<div style="left:1081px;top:513px;width:176px;height:71px;background:#4ba8dc;"></div>
<div style="left:1081px;top:586px;width:176px;height:115px;background:#4ba8dc;"></div>
<div style="left:1081px;top:703px;width:176px;height:71.5px;background:#4ba8dc;"></div>
<div style="left:1081px;top:513px;width:44px;height:14px;background:#56b3e4;"></div>
<div class="t" style="left:1097px;top:516px;font-size:9px;color:#1d3a52;">Pitch</div>
<div style="left:1081px;top:586px;width:44px;height:14px;background:#56b3e4;"></div>
<svg style="left:1086px;top:589px;" width="7" height="7" viewBox="0 0 7 7"><circle cx="3.5" cy="3.5" r="2.6" fill="none" stroke="#e8f6ff" stroke-width="1.3"/></svg>
<div class="t" style="left:1096px;top:589px;font-size:9px;color:#1d3a52;">Filter</div>
<div style="left:1081px;top:703px;width:44px;height:14px;background:#56b3e4;"></div>
<div class="t" style="left:1097px;top:706px;font-size:9px;color:#1d3a52;">Amp</div>
<svg style="left:1091px;top:532px;" width="34" height="34" viewBox="0 0 34 34"><circle cx="17" cy="17" r="15" fill="#1d1d1e" stroke="#0f1a22" stroke-width="1"/><path d="M18.0,11.1 L19.0,5.9" stroke="#f4f4f4" stroke-width="1.6"/></svg>
<div class="t" style="left:1088px;top:569px;font-size:7px;color:#0a1824;width:40px;text-align:center;">Transpose</div>
<svg style="left:1134px;top:539px;" width="26" height="26" viewBox="0 0 26 26"><circle cx="13" cy="13" r="11" fill="#1d1d1e" stroke="#0f1a22" stroke-width="1"/><path d="M13.0,8.6 L13.0,4.8" stroke="#f4f4f4" stroke-width="1.6"/></svg>
<div class="t" style="left:1127px;top:569px;font-size:7px;color:#0a1824;width:40px;text-align:center;">Tune</div>
<div style="left:1174.5px;top:522px;width:3px;height:44px;background:#18191a;border-radius:1px;"></div>
<div style="left:1172px;top:560px;width:8px;height:7px;background:#4a4a4a;border:1px solid #151515;"></div>
<div style="left:1173px;top:563px;width:6px;height:1px;background:#999;"></div>
<div style="left:1186.5px;top:522px;width:3px;height:44px;background:#18191a;border-radius:1px;"></div>
<div style="left:1184px;top:553px;width:8px;height:7px;background:#4a4a4a;border:1px solid #151515;"></div>
<div style="left:1185px;top:556px;width:6px;height:1px;background:#999;"></div>
<div style="left:1198.5px;top:522px;width:3px;height:44px;background:#18191a;border-radius:1px;"></div>
<div style="left:1196px;top:545px;width:8px;height:7px;background:#4a4a4a;border:1px solid #151515;"></div>
<div style="left:1197px;top:548px;width:6px;height:1px;background:#999;"></div>
<div style="left:1210.5px;top:522px;width:3px;height:44px;background:#18191a;border-radius:1px;"></div>
<div style="left:1208px;top:559px;width:8px;height:7px;background:#4a4a4a;border:1px solid #151515;"></div>
<div style="left:1209px;top:562px;width:6px;height:1px;background:#999;"></div>
<div class="t" style="left:1166px;top:570px;font-size:7px;color:#0a1824;width:20px;text-align:center;">A</div>
<div class="t" style="left:1178px;top:570px;font-size:7px;color:#0a1824;width:20px;text-align:center;">D</div>
<div class="t" style="left:1190px;top:570px;font-size:7px;color:#0a1824;width:20px;text-align:center;">S</div>
<div class="t" style="left:1202px;top:570px;font-size:7px;color:#0a1824;width:20px;text-align:center;">R</div>
<svg style="left:1227px;top:518px;" width="20" height="20" viewBox="0 0 20 20"><circle cx="10" cy="10" r="8" fill="#1d1d1e" stroke="#0f1a22" stroke-width="1"/><path d="M10.6,6.8 L11.0,4.1" stroke="#f4f4f4" stroke-width="1.6"/></svg>
<div class="t" style="left:1217px;top:540px;font-size:7px;color:#0a1824;width:40px;text-align:center;">Env</div>
<svg style="left:1227px;top:548px;" width="20" height="20" viewBox="0 0 20 20"><circle cx="10" cy="10" r="8" fill="#1d1d1e" stroke="#0f1a22" stroke-width="1"/><path d="M10.0,6.8 L10.0,4.0" stroke="#f4f4f4" stroke-width="1.6"/></svg>
<div class="t" style="left:1217px;top:570px;font-size:7px;color:#0a1824;width:40px;text-align:center;">Vel</div>
<svg style="left:1091px;top:605px;" width="34" height="34" viewBox="0 0 34 34"><circle cx="17" cy="17" r="16" fill="none" stroke="#d8eef8" stroke-width="1"/><circle cx="17" cy="17" r="15" fill="#1d1d1e" stroke="#0f1a22" stroke-width="1"/><path d="M12.4,20.9 L8.4,24.2" stroke="#f4f4f4" stroke-width="1.6"/></svg>
<div class="t" style="left:1088px;top:642px;font-size:7px;color:#0a1824;width:40px;text-align:center;">Cutoff</div>
<svg style="left:1134px;top:611px;" width="26" height="26" viewBox="0 0 26 26"><circle cx="13" cy="13" r="12" fill="none" stroke="#d8eef8" stroke-width="1"/><circle cx="13" cy="13" r="11" fill="#1d1d1e" stroke="#0f1a22" stroke-width="1"/><path d="M16.4,15.8 L19.3,18.3" stroke="#f4f4f4" stroke-width="1.6"/></svg>
<div class="t" style="left:1127px;top:643px;font-size:7px;color:#0a1824;width:40px;text-align:center;">Res</div>
<div style="left:1174.5px;top:597px;width:3px;height:44px;background:#18191a;border-radius:1px;"></div>
<div style="left:1172px;top:633px;width:8px;height:7px;background:#4a4a4a;border:1px solid #151515;"></div>
<div style="left:1173px;top:636px;width:6px;height:1px;background:#999;"></div>
<div style="left:1186.5px;top:597px;width:3px;height:44px;background:#18191a;border-radius:1px;"></div>
<div style="left:1184px;top:617px;width:8px;height:7px;background:#4a4a4a;border:1px solid #151515;"></div>
<div style="left:1185px;top:620px;width:6px;height:1px;background:#999;"></div>
<div style="left:1198.5px;top:597px;width:3px;height:44px;background:#18191a;border-radius:1px;"></div>
<div style="left:1196px;top:633px;width:8px;height:7px;background:#4a4a4a;border:1px solid #151515;"></div>
<div style="left:1197px;top:636px;width:6px;height:1px;background:#999;"></div>
<div style="left:1210.5px;top:597px;width:3px;height:44px;background:#18191a;border-radius:1px;"></div>
<div style="left:1208px;top:608px;width:8px;height:7px;background:#4a4a4a;border:1px solid #151515;"></div>
<div style="left:1209px;top:611px;width:6px;height:1px;background:#999;"></div>
<div class="t" style="left:1166px;top:644px;font-size:7px;color:#0a1824;width:20px;text-align:center;">A</div>
<div class="t" style="left:1178px;top:644px;font-size:7px;color:#0a1824;width:20px;text-align:center;">D</div>
<div class="t" style="left:1190px;top:644px;font-size:7px;color:#0a1824;width:20px;text-align:center;">S</div>
<div class="t" style="left:1202px;top:644px;font-size:7px;color:#0a1824;width:20px;text-align:center;">R</div>
<svg style="left:1227px;top:592px;" width="20" height="20" viewBox="0 0 20 20"><circle cx="10" cy="10" r="8" fill="#1d1d1e" stroke="#0f1a22" stroke-width="1"/><path d="M12.1,7.5 L13.9,5.4" stroke="#f4f4f4" stroke-width="1.6"/></svg>
<div class="t" style="left:1217px;top:614px;font-size:7px;color:#0a1824;width:40px;text-align:center;">Env</div>
<svg style="left:1227px;top:622px;" width="20" height="20" viewBox="0 0 20 20"><circle cx="10" cy="10" r="8" fill="#1d1d1e" stroke="#0f1a22" stroke-width="1"/><path d="M10.0,6.8 L10.0,4.0" stroke="#f4f4f4" stroke-width="1.6"/></svg>
<div class="t" style="left:1217px;top:644px;font-size:7px;color:#0a1824;width:40px;text-align:center;">Vel</div>
<div style="left:1093px;top:664px;width:31px;height:17px;background:#1d3550;border:1px solid #16283a;"></div>
<svg style="left:1097px;top:668px;" width="22" height="9" viewBox="0 0 22 9"><path d="M0.5,7 H5 L9,1 L13,7" stroke="#9ccbec" fill="none" stroke-width="1.2"/><path d="M0.5,4 H6" stroke="#9ccbec"/><polygon points="17,3 21,3 19,6" fill="#9ccbec"/></svg>
<svg style="left:1134px;top:659px;" width="26" height="26" viewBox="0 0 26 26"><circle cx="13" cy="13" r="11" fill="#1d1d1e" stroke="#0f1a22" stroke-width="1"/><path d="M9.9,16.1 L7.2,18.8" stroke="#f4f4f4" stroke-width="1.6"/></svg>
<div class="t" style="left:1127px;top:687px;font-size:7px;color:#0a1824;width:40px;text-align:center;">Drive</div>
<svg style="left:1167px;top:661px;" width="26" height="26" viewBox="0 0 26 26"><circle cx="13" cy="13" r="12" fill="none" stroke="#d8eef8" stroke-width="1"/><circle cx="13" cy="13" r="11" fill="#1d1d1e" stroke="#0f1a22" stroke-width="1"/><path d="M17.3,13.8 L21.1,14.4" stroke="#f4f4f4" stroke-width="1.6"/></svg>
<div class="t" style="left:1160px;top:687px;font-size:7px;color:#0a1824;width:40px;text-align:center;">Punch</div>
<div style="left:1215px;top:667px;width:30px;height:11px;background:#2a2b2d;border:1px solid #111;"></div>
<div class="t" style="left:1215px;top:669.5px;font-size:6px;color:#bbb;width:30px;text-align:center;">Soft</div>
<svg style="left:1091px;top:722px;" width="34" height="34" viewBox="0 0 34 34"><circle cx="17" cy="17" r="16" fill="none" stroke="#d8eef8" stroke-width="1"/><circle cx="17" cy="17" r="15" fill="#1d1d1e" stroke="#0f1a22" stroke-width="1"/><path d="M23.0,17.5 L28.2,18.0" stroke="#f4f4f4" stroke-width="1.6"/></svg>
<div class="t" style="left:1088px;top:759px;font-size:7px;color:#0a1824;width:40px;text-align:center;">Gain</div>
<svg style="left:1134px;top:729px;" width="26" height="26" viewBox="0 0 26 26"><circle cx="13" cy="13" r="11" fill="#1d1d1e" stroke="#0f1a22" stroke-width="1"/><path d="M13.0,8.6 L13.0,4.8" stroke="#f4f4f4" stroke-width="1.6"/></svg>
<div class="t" style="left:1127px;top:759px;font-size:7px;color:#0a1824;width:40px;text-align:center;">Pan</div>
<div style="left:1174.5px;top:713px;width:3px;height:44px;background:#18191a;border-radius:1px;"></div>
<div style="left:1172px;top:749px;width:8px;height:7px;background:#4a4a4a;border:1px solid #151515;"></div>
<div style="left:1173px;top:752px;width:6px;height:1px;background:#999;"></div>
<div style="left:1186.5px;top:713px;width:3px;height:44px;background:#18191a;border-radius:1px;"></div>
<div style="left:1184px;top:733px;width:8px;height:7px;background:#4a4a4a;border:1px solid #151515;"></div>
<div style="left:1185px;top:736px;width:6px;height:1px;background:#999;"></div>
<div style="left:1198.5px;top:713px;width:3px;height:44px;background:#18191a;border-radius:1px;"></div>
<div style="left:1196px;top:749px;width:8px;height:7px;background:#4a4a4a;border:1px solid #151515;"></div>
<div style="left:1197px;top:752px;width:6px;height:1px;background:#999;"></div>
<div style="left:1210.5px;top:713px;width:3px;height:44px;background:#18191a;border-radius:1px;"></div>
<div style="left:1208px;top:732px;width:8px;height:7px;background:#4a4a4a;border:1px solid #151515;"></div>
<div style="left:1209px;top:735px;width:6px;height:1px;background:#999;"></div>
<div class="t" style="left:1166px;top:760px;font-size:7px;color:#0a1824;width:20px;text-align:center;">A</div>
<div class="t" style="left:1178px;top:760px;font-size:7px;color:#0a1824;width:20px;text-align:center;">D</div>
<div class="t" style="left:1190px;top:760px;font-size:7px;color:#0a1824;width:20px;text-align:center;">S</div>
<div class="t" style="left:1202px;top:760px;font-size:7px;color:#0a1824;width:20px;text-align:center;">R</div>
<svg style="left:1227px;top:740px;" width="20" height="20" viewBox="0 0 20 20"><circle cx="10" cy="10" r="8" fill="#1d1d1e" stroke="#0f1a22" stroke-width="1"/><path d="M7.7,12.3 L5.8,14.2" stroke="#f4f4f4" stroke-width="1.6"/></svg>
<div class="t" style="left:1217px;top:760px;font-size:7px;color:#0a1824;width:40px;text-align:center;">Vel</div>
<div style="left:747px;top:775px;width:526px;height:13px;background:#1e1f22;"></div>
<svg style="left:1172px;top:780px;" width="5" height="7" viewBox="0 0 5 7"><polygon points="0,0 0,6.5 5,3.25" fill="#888"/></svg>
<svg style="left:1184px;top:780px;" width="7" height="6" viewBox="0 0 7 6"><polygon points="3.5,0 7,5.5 0,5.5" fill="#999"/></svg>
<div style="left:1192px;top:779px;width:1.8px;height:8px;background:#aaa;"></div>
<div style="left:1194px;top:782.3px;width:37px;height:1.2px;background:#bbb;"></div>
<svg style="left:1233px;top:778px;" width="10" height="8" viewBox="0 0 10 8"><polygon points="5,0 10,7.5 0,7.5" fill="#999"/></svg>
<div style="left:1246px;top:784px;width:1.5px;height:1.5px;background:#888;"></div>
<div style="left:1246px;top:786px;width:1.5px;height:1.5px;background:#888;"></div>
<div style="left:1251px;top:779px;width:3.5px;height:1.2px;background:#aaa;"></div>
<div style="left:1251px;top:781px;width:3.5px;height:1.2px;background:#aaa;"></div>
<svg style="left:1258px;top:778px;" width="6" height="9" viewBox="0 0 6 9"><rect x="0.5" y="3.5" width="5" height="5" fill="#cfeefa"/><path d="M1.5,3.5 V2 A1.5,1.5 0 0 1 4.5,2 V3.5" stroke="#cfeefa" fill="none" stroke-width="1"/></svg>
<div style="left:1257px;top:336px;width:6px;height:7.699999999999989px;background:#66da90;"></div>
<div style="left:1257px;top:344.5px;width:6px;height:23.80000000000001px;background:#90f4a8;"></div>
<div style="left:1257px;top:369.1px;width:6px;height:23.80000000000001px;background:#90f4a8;"></div>
<div style="left:1257px;top:393.70000000000005px;width:6px;height:23.80000000000001px;background:#6a5cb2;"></div>
<div style="left:1257px;top:418.3px;width:6px;height:23.80000000000001px;background:#62e2c7;"></div>
<div style="left:1257px;top:442.90000000000003px;width:6px;height:23.80000000000001px;background:#93f3a2;"></div>
<div style="left:1257px;top:467.5px;width:6px;height:23.80000000000001px;background:#2e60d6;"></div>
<div style="left:1257px;top:492.1px;width:6px;height:23.800000000000068px;background:#74f3f3;"></div>
<div style="left:1257px;top:516.7px;width:6px;height:23.800000000000068px;background:#3ea0e0;"></div>
<div style="left:1257px;top:541px;width:16px;height:12px;background:#1c1d20;"></div>
<svg style="left:1267px;top:543px;" width="5" height="4" viewBox="0 0 5 4"><polygon points="0,0 5,0 2.5,4" fill="#777"/></svg>
<div style="left:1266px;top:548px;width:3px;height:2px;background:#e8d44a;"></div>
<div style="left:1269px;top:545px;width:3px;height:2px;background:#e8d44a;"></div>
<div style="left:1263px;top:551px;width:3px;height:2px;background:#e8d44a;"></div>
<div style="left:1257px;top:553px;width:16px;height:222px;background:#1e1f22;"></div>
<div style="left:1258px;top:557px;width:14px;height:20px;background:#727377;"></div>
<svg style="left:1261px;top:562px;" width="8" height="8" viewBox="0 0 8 8"><path d="M0.5,0.5 L7.5,7.5 M7.5,0.5 L0.5,7.5" stroke="#fff" stroke-width="1.6"/></svg>
<svg style="left:1265px;top:582px;" width="6" height="4" viewBox="0 0 6 4"><polygon points="3,0 6,4 0,4" fill="#666"/></svg>
<div style="left:1266px;top:590px;width:4px;height:130px;background:#7a7b7e;border-radius:2px;"></div>
<svg style="left:1265px;top:769px;" width="6" height="4" viewBox="0 0 6 4"><polygon points="0,0 6,0 3,4" fill="#666"/></svg>
<div style="left:1277px;top:28px;width:223px;height:761px;background:#27282c;"></div>
<div style="left:1277px;top:29px;width:223px;height:18px;background:#1f2023;"></div>
<svg style="left:1281px;top:34px;" width="9" height="8" viewBox="0 0 9 8"><path d="M0,4 L4.5,0 L9,4 V8 H6 V5.5 H3 V8 H0 Z" fill="#ddd"/></svg>
<div style="left:1334px;top:29px;width:29px;height:18px;background:#3a3b3f;"></div>
<div class="t" style="left:1295px;top:34.5px;font-size:7px;color:#e8e8e8;">Instruments</div>
<div class="t" style="left:1338px;top:34.5px;font-size:7px;color:#e8e8e8;">Effects</div>
<div class="t" style="left:1367px;top:34.5px;font-size:7px;color:#e8e8e8;">Loops</div>
<div class="t" style="left:1394px;top:34.5px;font-size:7px;color:#e8e8e8;">Files</div>
<div class="t" style="left:1415.5px;top:34.5px;font-size:7px;color:#e8e8e8;">Cloud</div>
<div class="t" style="left:1441px;top:34.5px;font-size:7px;color:#e8e8e8;">Shop</div>
<div class="t" style="left:1466px;top:34.5px;font-size:7px;color:#e8e8e8;">Pool</div>
<svg style="left:1486px;top:35px;" width="8" height="8" viewBox="0 0 8 8"><circle cx="3.2" cy="3.2" r="2.5" fill="none" stroke="#ddd" stroke-width="1.2"/><path d="M5,5 L7.5,7.5" stroke="#ddd" stroke-width="1.4"/></svg>
<div style="left:1277px;top:47px;width:223px;height:11.5px;background:#3b3c40;"></div>
<div class="t" style="left:1280px;top:49.5px;font-size:6.5px;color:#d8d8d8;">Sort by:</div>
<div class="t" style="left:1318px;top:49.5px;font-size:6.5px;color:#8a8b8f;">Flat</div>
<div class="t" style="left:1337px;top:49.5px;font-size:6.5px;color:#8a8b8f;">Folder</div>
<div class="t" style="left:1364px;top:49.5px;font-size:6.5px;color:#f4f4f4;">Vendor</div>
<div class="t" style="left:1393px;top:49.5px;font-size:6.5px;color:#8a8b8f;">Type</div>
<svg style="left:1488px;top:49px;" width="9" height="8" viewBox="0 0 9 8"><path d="M0,1 H8 M2,3.5 H8 M4,6 H8" stroke="#ddd" stroke-width="1.2"/></svg>
<div style="left:1277px;top:58.5px;width:223px;height:12.5px;background:#2e2f33;"></div>
<div class="t" style="left:1280px;top:61.5px;font-size:6.5px;color:#f4f4f4;font-weight:bold;">Effects</div>
<div class="t" style="left:1309px;top:61.5px;font-size:6.5px;color:#888;">&gt;</div>
<svg style="left:1489px;top:61px;" width="8" height="8" viewBox="0 0 8 8"><rect x="0" y="0" width="3.3" height="3.3" fill="#fff"/><rect x="4.6" y="0" width="3.3" height="3.3" fill="#fff"/><rect x="0" y="4.6" width="3.3" height="3.3" fill="#fff"/><rect x="4.6" y="4.6" width="3.3" height="3.3" fill="#fff"/></svg>
<div style="left:1277px;top:71px;width:223px;height:23px;background:#1f2023;"></div>
<svg style="left:1287px;top:77px;" width="6" height="11" viewBox="0 0 6 11"><path d="M5,0.5 L0.8,5.5 L5,10.5" stroke="#ddd" fill="none" stroke-width="1.3"/></svg>
<div class="t" style="left:1306px;top:78px;font-size:9px;color:#e0e0e0;">PreSonus</div>
<svg style="left:1475px;top:76px;" width="16" height="14" viewBox="0 0 16 14"><ellipse cx="8" cy="7" rx="7.8" ry="6.8" fill="#f0f0f0"/><path d="M2,10 L4,4 L6,9 L8,3 L10,9 L12,4 L14,10" stroke="#1f2023" stroke-width="1.3" fill="none"/></svg>
<div style="left:1277px;top:94px;width:223px;height:1px;background:#1a1b1e;"></div>
<svg style="left:1290px;top:97.8px;" width="80" height="87" viewBox="0 0 80 87"><rect x="1" y="0.8" width="78" height="85" rx="3" fill="#2a2b2f" stroke="#4a8ed0" stroke-width="1.6"/><polygon points="22,0.8 78,0.8 78,5 26,5" fill="#4a8ed0"/></svg>
<div style="left:1293px;top:103.8px;width:74px;height:59px;background:#27282c;"></div>
<div style="left:1291.5px;top:162.8px;width:77px;height:20px;background:#4a8ed0;border-radius:0 0 3px 3px;"></div>
<div class="t" style="left:1290px;top:169.3px;font-size:7.2px;color:#f4f4f4;width:80px;text-align:center;">Ampire</div>
<div style="left:1301px;top:111.8px;width:57px;height:39px;background:#121212;"></div>
<div style="left:1311px;top:113.8px;width:21px;height:7px;background:#e8e4d0;border:1px solid #999;"></div>
<div style="left:1312.5px;top:115.3px;width:18px;height:4px;background:#161616;"></div>
<div style="left:1343px;top:113.8px;width:6px;height:7px;background:#bdbdbd;"></div>
<div style="left:1302px;top:124.8px;width:55px;height:8px;background:linear-gradient(90deg,#b8a878,#dccb9a,#b8a070);"></div>
<svg style="left:1302px;top:124.8px;" width="55" height="8" viewBox="0 0 55 8"><circle cx="16" cy="4" r="1.8" fill="none" stroke="#7a6a48" stroke-width="0.7"/><circle cx="22" cy="4" r="1.8" fill="none" stroke="#7a6a48" stroke-width="0.7"/><circle cx="28" cy="4" r="1.8" fill="none" stroke="#7a6a48" stroke-width="0.7"/><circle cx="34" cy="4" r="1.8" fill="none" stroke="#7a6a48" stroke-width="0.7"/><circle cx="40" cy="4" r="1.8" fill="none" stroke="#7a6a48" stroke-width="0.7"/><circle cx="46" cy="4" r="1.8" fill="none" stroke="#7a6a48" stroke-width="0.7"/></svg>
<div style="left:1303px;top:135.8px;width:8px;height:14px;background:#6cc8a2;border-radius:1px;"></div>
<div style="left:1305px;top:144.8px;width:4px;height:3px;background:#e8f8f0;"></div>
<div style="left:1312px;top:135.8px;width:10px;height:14px;background:#cbbfc4;"></div>
<div style="left:1314px;top:141.8px;width:6px;height:6px;background:#181818;"></div>
<div style="left:1323px;top:135.8px;width:20px;height:14px;background:#d8d8d8;"></div>
<div style="left:1324px;top:143.8px;width:18px;height:5px;background:#9a9a9a;"></div>
<svg style="left:1323px;top:135.8px;" width="20" height="8" viewBox="0 0 20 8"><circle cx="5" cy="4" r="1.6" fill="#222"/><circle cx="10" cy="4" r="1.6" fill="#222"/><circle cx="15" cy="4" r="1.6" fill="#222"/></svg>
<div style="left:1347px;top:135.8px;width:9px;height:14px;background:#a52a2a;"></div>
<div style="left:1349px;top:136.8px;width:5px;height:3px;background:#ddd;"></div>
<svg style="left:1396px;top:97.8px;" width="80" height="87" viewBox="0 0 80 87"><rect x="1" y="0.8" width="78" height="85" rx="3" fill="#2a2b2f" stroke="#2e2f33" stroke-width="1.2"/><polygon points="22,0.8 78,0.8 78,5 26,5" fill="#323337"/></svg>
<div style="left:1399px;top:103.8px;width:74px;height:59px;background:#262629;"></div>
<div style="left:1397.5px;top:162.8px;width:77px;height:20px;background:#2d2e32;border-radius:0 0 3px 3px;"></div>
<div class="t" style="left:1396px;top:169.3px;font-size:7.2px;color:#f4f4f4;width:80px;text-align:center;">Analog Delay</div>
<div style="left:1408px;top:115.8px;width:55px;height:30px;background:#141418;border:1px solid #4a4a4a;"></div>
<div style="left:1411px;top:118.3px;width:18px;height:1.2px;background:#5a6cf0;"></div>
<div style="left:1429px;top:118.3px;width:18px;height:1.2px;background:#7ad06a;"></div>
<svg style="left:1410px;top:120.8px;" width="36" height="8" viewBox="0 0 36 8"><circle cx="4.0" cy="4" r="3" fill="#25303a" stroke="#ddd" stroke-width="0.8"/><circle cx="12.5" cy="4" r="3" fill="#25303a" stroke="#ddd" stroke-width="0.8"/><circle cx="21.0" cy="4" r="3" fill="#25303a" stroke="#ddd" stroke-width="0.8"/><circle cx="29.5" cy="4" r="3" fill="#25303a" stroke="#ddd" stroke-width="0.8"/></svg>
<div style="left:1447px;top:118.8px;width:14px;height:4px;background:#ddd;"></div>
<div style="left:1447px;top:124.8px;width:14px;height:6px;background:repeating-linear-gradient(#e8a050 0 1.5px,#e8d060 1.5px 3px,#e86a8a 3px 4.5px,#6a9ae0 4.5px 6px);"></div>
<div style="left:1411px;top:131.8px;width:12px;height:1px;background:#e0d040;"></div>
<div style="left:1423px;top:131.8px;width:12px;height:1px;background:#e0a040;"></div>
<div style="left:1435px;top:131.8px;width:12px;height:1px;background:#e07040;"></div>
<div style="left:1447px;top:131.8px;width:13px;height:1px;background:#e04040;"></div>
<div style="left:1413px;top:134.8px;width:2.5px;height:2.5px;background:#eee;border-radius:1px;"></div>
<div style="left:1421px;top:134.8px;width:2.5px;height:2.5px;background:#eee;border-radius:1px;"></div>
<div style="left:1429px;top:134.8px;width:2.5px;height:2.5px;background:#eee;border-radius:1px;"></div>
<div style="left:1437px;top:134.8px;width:2.5px;height:2.5px;background:#eee;border-radius:1px;"></div>
<div style="left:1414px;top:139.8px;width:2px;height:2px;background:#aaa;"></div>
<div style="left:1422px;top:139.8px;width:2px;height:2px;background:#eee;"></div>
<div style="left:1438px;top:139.8px;width:3px;height:2px;background:#aaa;"></div>
<svg style="left:1451px;top:134.8px;" width="9" height="9" viewBox="0 0 9 9"><circle cx="4.5" cy="4.5" r="3.2" fill="#333" stroke="#c33" stroke-width="1"/><circle cx="4.5" cy="4.5" r="1.6" fill="#ddd"/></svg>
<svg style="left:1290px;top:189.8px;" width="80" height="87" viewBox="0 0 80 87"><rect x="1" y="0.8" width="78" height="85" rx="3" fill="#2a2b2f" stroke="#2e2f33" stroke-width="1.2"/><polygon points="22,0.8 78,0.8 78,5 26,5" fill="#323337"/></svg>
<div style="left:1293px;top:195.8px;width:74px;height:59px;background:#262629;"></div>
<div style="left:1291.5px;top:254.8px;width:77px;height:20px;background:#2d2e32;border-radius:0 0 3px 3px;"></div>
<div class="t" style="left:1290px;top:261.3px;font-size:7.2px;color:#f4f4f4;width:80px;text-align:center;">Autofilter</div>
<div style="left:1301px;top:214.8px;width:56px;height:16px;background:#68696c;border:1px solid #3a3a3a;"></div>
<div style="left:1322.28px;top:215.8px;width:14.56px;height:14px;background:#151515;"></div>
<svg style="left:1303px;top:219.8px;" width="58" height="6" viewBox="0 0 58 6"><circle cx="3" cy="3" r="2" fill="#1e1e1e"/><circle cx="10" cy="3" r="2" fill="#1e1e1e"/><circle cx="17" cy="3" r="2" fill="#1e1e1e"/><circle cx="24" cy="3" r="2" fill="#1e1e1e"/><circle cx="31" cy="3" r="2" fill="#1e1e1e"/><circle cx="38" cy="3" r="2" fill="#1e1e1e"/><circle cx="45" cy="3" r="2" fill="#1e1e1e"/><circle cx="52" cy="3" r="2" fill="#1e1e1e"/></svg>
<svg style="left:1396px;top:189.8px;" width="80" height="87" viewBox="0 0 80 87"><rect x="1" y="0.8" width="78" height="85" rx="3" fill="#2a2b2f" stroke="#2e2f33" stroke-width="1.2"/><polygon points="22,0.8 78,0.8 78,5 26,5" fill="#323337"/></svg>
<div style="left:1399px;top:195.8px;width:74px;height:59px;background:#262629;"></div>
<div style="left:1397.5px;top:254.8px;width:77px;height:20px;background:#2d2e32;border-radius:0 0 3px 3px;"></div>
<div class="t" style="left:1396px;top:261.3px;font-size:7.2px;color:#f4f4f4;width:80px;text-align:center;">Beat Delay</div>
<div style="left:1407.5px;top:217.8px;width:56px;height:10px;background:#68696c;border:1px solid #3a3a3a;"></div>
<svg style="left:1409.5px;top:219.8px;" width="58" height="6" viewBox="0 0 58 6"><circle cx="3" cy="3" r="2" fill="#1e1e1e"/><circle cx="10" cy="3" r="2" fill="#1e1e1e"/><circle cx="17" cy="3" r="2" fill="#1e1e1e"/><circle cx="24" cy="3" r="2" fill="#1e1e1e"/><circle cx="31" cy="3" r="2" fill="#1e1e1e"/><circle cx="38" cy="3" r="2" fill="#1e1e1e"/><circle cx="45" cy="3" r="2" fill="#1e1e1e"/><circle cx="52" cy="3" r="2" fill="#1e1e1e"/></svg>
<svg style="left:1290px;top:281.8px;" width="80" height="87" viewBox="0 0 80 87"><rect x="1" y="0.8" width="78" height="85" rx="3" fill="#2a2b2f" stroke="#2e2f33" stroke-width="1.2"/><polygon points="22,0.8 78,0.8 78,5 26,5" fill="#323337"/></svg>
<div style="left:1293px;top:287.8px;width:74px;height:59px;background:#262629;"></div>
<div style="left:1291.5px;top:346.8px;width:77px;height:20px;background:#2d2e32;border-radius:0 0 3px 3px;"></div>
<div class="t" style="left:1290px;top:353.3px;font-size:7.2px;color:#f4f4f4;width:80px;text-align:center;">Binaural Pan</div>
<div style="left:1314px;top:309.8px;width:32px;height:10px;background:#68696c;border:1px solid #3a3a3a;"></div>
<svg style="left:1316px;top:311.8px;" width="30" height="6" viewBox="0 0 30 6"><circle cx="3" cy="3" r="2" fill="#1e1e1e"/><circle cx="10" cy="3" r="2" fill="#1e1e1e"/><circle cx="17" cy="3" r="2" fill="#1e1e1e"/><circle cx="24" cy="3" r="2" fill="#1e1e1e"/></svg>
<svg style="left:1396px;top:281.8px;" width="80" height="87" viewBox="0 0 80 87"><rect x="1" y="0.8" width="78" height="85" rx="3" fill="#2a2b2f" stroke="#2e2f33" stroke-width="1.2"/><polygon points="22,0.8 78,0.8 78,5 26,5" fill="#323337"/></svg>
<div style="left:1399px;top:287.8px;width:74px;height:59px;background:#262629;"></div>
<div style="left:1397.5px;top:346.8px;width:77px;height:20px;background:#2d2e32;border-radius:0 0 3px 3px;"></div>
<div class="t" style="left:1396px;top:353.3px;font-size:7.2px;color:#f4f4f4;width:80px;text-align:center;">Bitcrusher</div>
<div style="left:1407.5px;top:308.8px;width:56px;height:12px;background:#68696c;border:1px solid #3a3a3a;"></div>
<div style="left:1428.78px;top:309.8px;width:14.56px;height:10px;background:#151515;"></div>
<svg style="left:1409.5px;top:311.8px;" width="58" height="6" viewBox="0 0 58 6"><circle cx="3" cy="3" r="2" fill="#1e1e1e"/><circle cx="10" cy="3" r="2" fill="#1e1e1e"/><circle cx="17" cy="3" r="2" fill="#1e1e1e"/><circle cx="24" cy="3" r="2" fill="#1e1e1e"/><circle cx="31" cy="3" r="2" fill="#1e1e1e"/><circle cx="38" cy="3" r="2" fill="#1e1e1e"/><circle cx="45" cy="3" r="2" fill="#1e1e1e"/><circle cx="52" cy="3" r="2" fill="#1e1e1e"/></svg>
<svg style="left:1290px;top:373.8px;" width="80" height="87" viewBox="0 0 80 87"><rect x="1" y="0.8" width="78" height="85" rx="3" fill="#2a2b2f" stroke="#2e2f33" stroke-width="1.2"/><polygon points="22,0.8 78,0.8 78,5 26,5" fill="#323337"/></svg>
<div style="left:1293px;top:379.8px;width:74px;height:59px;background:#262629;"></div>
<div style="left:1291.5px;top:438.8px;width:77px;height:20px;background:#2d2e32;border-radius:0 0 3px 3px;"></div>
<div class="t" style="left:1290px;top:445.3px;font-size:7.2px;color:#f4f4f4;width:80px;text-align:center;">Channel Strip</div>
<div style="left:1301px;top:401.5px;width:57px;height:11px;background:#68696c;border:1px solid #3a3a3a;"></div>
<div style="left:1322.66px;top:402.5px;width:14.82px;height:9px;background:#151515;"></div>
<svg style="left:1303px;top:404.0px;" width="58" height="6" viewBox="0 0 58 6"><circle cx="3" cy="3" r="2" fill="#1e1e1e"/><circle cx="10" cy="3" r="2" fill="#1e1e1e"/><circle cx="17" cy="3" r="2" fill="#1e1e1e"/><circle cx="24" cy="3" r="2" fill="#1e1e1e"/><circle cx="31" cy="3" r="2" fill="#1e1e1e"/><circle cx="38" cy="3" r="2" fill="#1e1e1e"/><circle cx="45" cy="3" r="2" fill="#1e1e1e"/><circle cx="52" cy="3" r="2" fill="#1e1e1e"/></svg>
<svg style="left:1396px;top:373.8px;" width="80" height="87" viewBox="0 0 80 87"><rect x="1" y="0.8" width="78" height="85" rx="3" fill="#2a2b2f" stroke="#2e2f33" stroke-width="1.2"/><polygon points="22,0.8 78,0.8 78,5 26,5" fill="#323337"/></svg>
<div style="left:1399px;top:379.8px;width:74px;height:59px;background:#262629;"></div>
<div style="left:1397.5px;top:438.8px;width:77px;height:20px;background:#2d2e32;border-radius:0 0 3px 3px;"></div>
<div class="t" style="left:1396px;top:445.3px;font-size:7.2px;color:#f4f4f4;width:80px;text-align:center;">Chorus</div>
<div style="left:1408px;top:396.8px;width:55px;height:21px;background:#1c2424;border:1px solid #a8c8c8;"></div>
<div style="left:1411px;top:399.8px;width:49px;height:15px;background:#2a4a4a;"></div>
<svg style="left:1412px;top:408.8px;" width="51" height="6" viewBox="0 0 51 6"><circle cx="3" cy="3" r="1.5" fill="#ddd"/><circle cx="10" cy="3" r="1.5" fill="#ddd"/><circle cx="17" cy="3" r="1.5" fill="#ddd"/><circle cx="24" cy="3" r="1.5" fill="#ddd"/><circle cx="31" cy="3" r="1.5" fill="#ddd"/><circle cx="38" cy="3" r="1.5" fill="#ddd"/><circle cx="45" cy="3" r="1.5" fill="#ddd"/></svg>
<svg style="left:1290px;top:465.8px;" width="80" height="87" viewBox="0 0 80 87"><rect x="1" y="0.8" width="78" height="85" rx="3" fill="#2a2b2f" stroke="#2e2f33" stroke-width="1.2"/><polygon points="22,0.8 78,0.8 78,5 26,5" fill="#323337"/></svg>
<div style="left:1293px;top:471.8px;width:74px;height:59px;background:#262629;"></div>
<div style="left:1291.5px;top:530.8px;width:77px;height:20px;background:#2d2e32;border-radius:0 0 3px 3px;"></div>
<div class="t" style="left:1290px;top:537.3px;font-size:7.2px;color:#f4f4f4;width:80px;text-align:center;">Compressor</div>
<div style="left:1301px;top:487.8px;width:57px;height:23px;background:#68696c;border:1px solid #3a3a3a;"></div>
<div style="left:1308px;top:489.8px;width:23.939999999999998px;height:19px;background:#151515;"></div>
<svg style="left:1308px;top:489.8px;" width="23" height="19" viewBox="0 0 23 19"><path d="M1,17 L21,2" stroke="#888" stroke-width="0.8"/></svg>
<svg style="left:1334.06px;top:490.8px;" width="20" height="6" viewBox="0 0 20 6"><circle cx="3" cy="3" r="2" fill="#1e1e1e"/><circle cx="9" cy="3" r="2" fill="#1e1e1e"/><circle cx="15" cy="3" r="2" fill="#1e1e1e"/></svg>
<svg style="left:1334.06px;top:501.8px;" width="20" height="6" viewBox="0 0 20 6"><circle cx="3" cy="3" r="2" fill="#1e1e1e"/><circle cx="9" cy="3" r="2" fill="#1e1e1e"/><circle cx="15" cy="3" r="2" fill="#1e1e1e"/></svg>
<svg style="left:1396px;top:465.8px;" width="80" height="87" viewBox="0 0 80 87"><rect x="1" y="0.8" width="78" height="85" rx="3" fill="#2a2b2f" stroke="#2e2f33" stroke-width="1.2"/><polygon points="22,0.8 78,0.8 78,5 26,5" fill="#323337"/></svg>
<div style="left:1399px;top:471.8px;width:74px;height:59px;background:#262629;"></div>
<div style="left:1397.5px;top:530.8px;width:77px;height:20px;background:#2d2e32;border-radius:0 0 3px 3px;"></div>
<div class="t" style="left:1396px;top:537.3px;font-size:7.2px;color:#f4f4f4;width:80px;text-align:center;">Dual Pan</div>
<div style="left:1421px;top:489.8px;width:30px;height:18px;background:#68696c;border:1px solid #3a3a3a;"></div>
<svg style="left:1423px;top:495.8px;" width="30" height="6" viewBox="0 0 30 6"><circle cx="3" cy="3" r="2" fill="#1e1e1e"/><circle cx="10" cy="3" r="2" fill="#1e1e1e"/><circle cx="17" cy="3" r="2" fill="#1e1e1e"/><circle cx="24" cy="3" r="2" fill="#1e1e1e"/></svg>
<svg style="left:1290px;top:557.8px;" width="80" height="87" viewBox="0 0 80 87"><rect x="1" y="0.8" width="78" height="85" rx="3" fill="#2a2b2f" stroke="#2e2f33" stroke-width="1.2"/><polygon points="22,0.8 78,0.8 78,5 26,5" fill="#323337"/></svg>
<div style="left:1293px;top:563.8px;width:74px;height:59px;background:#262629;"></div>
<div style="left:1291.5px;top:622.8px;width:77px;height:20px;background:#2d2e32;border-radius:0 0 3px 3px;"></div>
<div class="t" style="left:1290px;top:629.3px;font-size:7.2px;color:#f4f4f4;width:80px;text-align:center;">Expander</div>
<div style="left:1305px;top:577.8px;width:50px;height:27px;background:#68696c;border:1px solid #3a3a3a;"></div>
<div style="left:1312px;top:579.8px;width:21.0px;height:23px;background:#151515;"></div>
<svg style="left:1312px;top:579.8px;" width="21" height="23" viewBox="0 0 21 23"><path d="M1,21 L19,2" stroke="#888" stroke-width="0.8"/></svg>
<svg style="left:1334.0px;top:580.8px;" width="20" height="6" viewBox="0 0 20 6"><circle cx="3" cy="3" r="2" fill="#1e1e1e"/><circle cx="9" cy="3" r="2" fill="#1e1e1e"/><circle cx="15" cy="3" r="2" fill="#1e1e1e"/></svg>
<svg style="left:1334.0px;top:595.8px;" width="20" height="6" viewBox="0 0 20 6"><circle cx="3" cy="3" r="2" fill="#1e1e1e"/><circle cx="9" cy="3" r="2" fill="#1e1e1e"/><circle cx="15" cy="3" r="2" fill="#1e1e1e"/></svg>
<svg style="left:1396px;top:557.8px;" width="80" height="87" viewBox="0 0 80 87"><rect x="1" y="0.8" width="78" height="85" rx="3" fill="#2a2b2f" stroke="#2e2f33" stroke-width="1.2"/><polygon points="22,0.8 78,0.8 78,5 26,5" fill="#323337"/></svg>
<div style="left:1399px;top:563.8px;width:74px;height:59px;background:#262629;"></div>
<div style="left:1397.5px;top:622.8px;width:77px;height:20px;background:#2d2e32;border-radius:0 0 3px 3px;"></div>
<div class="t" style="left:1396px;top:629.3px;font-size:7.2px;color:#f4f4f4;width:80px;text-align:center;">Fat Channel</div>
<div style="left:1407.5px;top:562.8px;width:56px;height:22px;background:#222326;border:1px solid #555;"></div>
<svg style="left:1411.5px;top:570.8px;" width="44" height="6" viewBox="0 0 44 6"><circle cx="3" cy="3" r="2" fill="#777"/><circle cx="10" cy="3" r="2" fill="#777"/><circle cx="17" cy="3" r="2" fill="#777"/><circle cx="24" cy="3" r="2" fill="#777"/><circle cx="31" cy="3" r="2" fill="#777"/><circle cx="38" cy="3" r="2" fill="#777"/></svg>
<div style="left:1445.5px;top:565.8px;width:15px;height:15px;background:#111;"></div>
<div style="left:1407.5px;top:584.8px;width:56px;height:30px;background:linear-gradient(#e0e0e0,#a0a0a0);border:1px solid #666;"></div>
<div style="left:1429.5px;top:588.8px;width:11px;height:6px;background:#e8c060;"></div>
<svg style="left:1411.5px;top:598.8px;" width="51" height="6" viewBox="0 0 51 6"><circle cx="3" cy="3" r="2.4" fill="#222"/><circle cx="10" cy="3" r="2.4" fill="#222"/><circle cx="17" cy="3" r="2.4" fill="#222"/><circle cx="24" cy="3" r="2.4" fill="#222"/><circle cx="31" cy="3" r="2.4" fill="#222"/><circle cx="38" cy="3" r="2.4" fill="#222"/><circle cx="45" cy="3" r="2.4" fill="#222"/></svg>
<svg style="left:1290px;top:649.8px;" width="80" height="87" viewBox="0 0 80 87"><rect x="1" y="0.8" width="78" height="85" rx="3" fill="#2a2b2f" stroke="#2e2f33" stroke-width="1.2"/><polygon points="22,0.8 78,0.8 78,5 26,5" fill="#323337"/></svg>
<div style="left:1293px;top:655.8px;width:74px;height:59px;background:#262629;"></div>
<div style="left:1291.5px;top:714.8px;width:77px;height:20px;background:#2d2e32;border-radius:0 0 3px 3px;"></div>
<div class="t" style="left:1290px;top:721.3px;font-size:7.2px;color:#f4f4f4;width:80px;text-align:center;">Flanger</div>
<div style="left:1310px;top:675.8px;width:39px;height:13px;background:#68696c;border:1px solid #3a3a3a;"></div>
<svg style="left:1312px;top:679.3px;" width="37" height="6" viewBox="0 0 37 6"><circle cx="3" cy="3" r="2" fill="#1e1e1e"/><circle cx="10" cy="3" r="2" fill="#1e1e1e"/><circle cx="17" cy="3" r="2" fill="#1e1e1e"/><circle cx="24" cy="3" r="2" fill="#1e1e1e"/><circle cx="31" cy="3" r="2" fill="#1e1e1e"/></svg>
<svg style="left:1396px;top:649.8px;" width="80" height="87" viewBox="0 0 80 87"><rect x="1" y="0.8" width="78" height="85" rx="3" fill="#2a2b2f" stroke="#2e2f33" stroke-width="1.2"/><polygon points="22,0.8 78,0.8 78,5 26,5" fill="#323337"/></svg>
<div style="left:1399px;top:655.8px;width:74px;height:59px;background:#262629;"></div>
<div style="left:1397.5px;top:714.8px;width:77px;height:20px;background:#2d2e32;border-radius:0 0 3px 3px;"></div>
<div class="t" style="left:1396px;top:721.3px;font-size:7.2px;color:#f4f4f4;width:80px;text-align:center;">Gate</div>
<div style="left:1410px;top:670.8px;width:51px;height:24px;background:#68696c;border:1px solid #3a3a3a;"></div>
<div style="left:1417px;top:672.8px;width:21.419999999999998px;height:20px;background:#151515;"></div>
<svg style="left:1417px;top:672.8px;" width="21" height="20" viewBox="0 0 21 20"><path d="M1,18 L19,2" stroke="#888" stroke-width="0.8"/></svg>
<svg style="left:1439.58px;top:673.8px;" width="20" height="6" viewBox="0 0 20 6"><circle cx="3" cy="3" r="2" fill="#1e1e1e"/><circle cx="9" cy="3" r="2" fill="#1e1e1e"/><circle cx="15" cy="3" r="2" fill="#1e1e1e"/></svg>
<svg style="left:1439.58px;top:685.8px;" width="20" height="6" viewBox="0 0 20 6"><circle cx="3" cy="3" r="2" fill="#1e1e1e"/><circle cx="9" cy="3" r="2" fill="#1e1e1e"/><circle cx="15" cy="3" r="2" fill="#1e1e1e"/></svg>
<div style="left:1491px;top:97px;width:6px;height:632px;background:#1f2023;"></div>
<svg style="left:1491px;top:99px;" width="6" height="5" viewBox="0 0 6 5"><polygon points="3,0 6,5 0,5" fill="#777"/></svg>
<div style="left:1493px;top:106px;width:3px;height:209px;background:#555659;border-radius:2px;"></div>
<svg style="left:1491px;top:722px;" width="6" height="5" viewBox="0 0 6 5"><polygon points="0,0 6,0 3,5" fill="#aaa"/></svg>
<div style="left:1277px;top:728.5px;width:223px;height:59px;background:#36373b;"></div>
<div style="left:1282.5px;top:736px;width:18.5px;height:18px;background:#46474b;"></div>
<div class="t" style="left:1282.5px;top:740px;font-size:9.5px;color:#f4f4f4;width:18.5px;text-align:center;font-weight:bold;">FX</div>
<div class="t" style="left:1307px;top:734px;font-size:9px;color:#e6e6e6;">Ampire</div>
<div class="t" style="left:1307px;top:746px;font-size:6.5px;color:#e0e0e0;">Vendor:</div>
<div class="t" style="left:1342px;top:746px;font-size:6.5px;color:#e0e0e0;">PreSonus</div>
<div class="t" style="left:1307px;top:756.5px;font-size:6.5px;color:#e0e0e0;">Category:</div>
<div class="t" style="left:1342px;top:756.5px;font-size:6.5px;color:#e0e0e0;">(Native) - Distortion</div>
<div class="t" style="left:1307px;top:777px;font-size:6.5px;color:#f4f4f4;">Visit Website</div>
<div style="left:0px;top:787px;width:1500px;height:2px;background:#131416;"></div>
<div style="left:0px;top:789px;width:1500px;height:27px;background:#5b5d62;"></div>
<div style="left:0px;top:815.5px;width:1500px;height:3.5px;background:#3a3b3f;"></div>
<svg style="left:0px;top:789px;" width="1500" height="27" viewBox="0 0 1500 27"><polygon points="271,0 1128,0 1123,26.5 276,26.5" fill="#0e0f11"/></svg>
<svg style="left:312px;top:792px;" width="20" height="12" viewBox="0 0 20 12"><path d="M1,4 L3,6 L1,8" stroke="#888" fill="none"/><circle cx="10" cy="6" r="4.5" fill="none" stroke="#999" stroke-width="1"/><path d="M6,6 H14 M10,2 V10" stroke="#666" stroke-width="0.6"/><polygon points="17,3 20,6 17,9" fill="#e8d0a0"/></svg>
<div class="t" style="left:314px;top:805.5px;font-size:5.5px;color:#a8a8a8;">MIDI</div>
<div style="left:336px;top:793px;width:37px;height:3px;background:#2e3034;"></div>
<div style="left:336px;top:793px;width:20px;height:3px;background:#8ccdf2;"></div>
<div style="left:336px;top:798px;width:37px;height:2.5px;background:#3a3b3e;"></div>
<div class="t" style="left:337px;top:805.5px;font-size:5.5px;color:#a8a8a8;">Performance</div>
<svg style="left:383px;top:795px;" width="14" height="14" viewBox="0 0 14 14"><circle cx="12.6" cy="7.0" r="0.9" fill="#ddd"/><circle cx="11.5" cy="10.3" r="0.9" fill="#ddd"/><circle cx="8.7" cy="12.3" r="0.9" fill="#ddd"/><circle cx="5.3" cy="12.3" r="0.9" fill="#ddd"/><circle cx="2.5" cy="10.3" r="0.9" fill="#ddd"/><circle cx="1.4" cy="7.0" r="0.9" fill="#ddd"/><circle cx="2.5" cy="3.7" r="0.9" fill="#ddd"/><circle cx="5.3" cy="1.7" r="0.9" fill="#ddd"/><circle cx="8.7" cy="1.7" r="0.9" fill="#ddd"/><circle cx="11.5" cy="3.7" r="0.9" fill="#ddd"/></svg>
<div class="t" style="left:404px;top:794px;font-size:7.5px;color:#f0f0f0;">44.1 kHz</div>
<div class="t" style="left:404px;top:804px;font-size:7.5px;color:#f0f0f0;">34.8 ms</div>
<div class="t" style="left:445px;top:794px;font-size:7.5px;color:#f0f0f0;">1:10 days</div>
<div class="t" style="left:445px;top:806px;font-size:5.5px;color:#a0a0a0;">Record Max</div>
<div class="t" style="left:493px;top:794.5px;font-size:8px;color:#f0f0f0;">00:01:02.012</div>
<div class="t" style="left:502px;top:806px;font-size:5.5px;color:#a0a0a0;">Seconds</div>
<div class="t" style="left:556.5px;top:793px;font-size:11.3px;color:#ffffff;font-weight:bold;">00025.03.01.74</div>
<div class="t" style="left:587px;top:806px;font-size:5.5px;color:#a0a0a0;">Bars</div>
<svg style="left:650px;top:799px;" width="7" height="8" viewBox="0 0 7 8"><polygon points="6,0 6,8 0,4" fill="#eee"/></svg>
<svg style="left:661px;top:799px;" width="12" height="8" viewBox="0 0 12 8"><polygon points="6,0 6,8 0,4" fill="#eee"/><polygon points="12,0 12,8 6,4" fill="#eee"/></svg>
<svg style="left:678px;top:799px;" width="12" height="8" viewBox="0 0 12 8"><polygon points="0,0 0,8 6,4" fill="#eee"/><polygon points="6,0 6,8 12,4" fill="#eee"/></svg>
<svg style="left:697px;top:799px;" width="7" height="8" viewBox="0 0 7 8"><polygon points="0,0 0,8 6,4" fill="#eee"/></svg>
<svg style="left:709px;top:798px;" width="8" height="9" viewBox="0 0 8 9"><rect x="0" y="0" width="1.6" height="9" fill="#eee"/><polygon points="7.5,0 7.5,9 1.6,4.5" fill="#eee"/></svg>
<div style="left:728px;top:796px;width:13px;height:13px;background:linear-gradient(#e0e0e0,#b0b0b0);"></div>
<svg style="left:750px;top:796px;" width="12" height="13" viewBox="0 0 12 13"><polygon points="0,0 0,13 12,6.5" fill="#7ed957"/></svg>
<div style="left:769px;top:796px;width:12px;height:12px;background:linear-gradient(#f0f0f0,#c8c8c8);border-radius:6px;"></div>
<svg style="left:789px;top:796px;" width="21" height="12" viewBox="0 0 21 12"><path d="M8,11 H6 A5,5 0 0 1 6,1 H15 A5,5 0 0 1 15,11 H11 L8,8" stroke="#eee" fill="none" stroke-width="1.5"/></svg>
<div class="t" style="left:821px;top:795px;font-size:7px;color:#aaa;">L</div>
<div class="t" style="left:830px;top:794.5px;font-size:8.2px;color:#f0f0f0;">00025.01.01.00</div>
<div class="t" style="left:821px;top:804.5px;font-size:7px;color:#aaa;">R</div>
<div class="t" style="left:830px;top:804px;font-size:8.2px;color:#f0f0f0;">00031.01.01.00</div>
<svg style="left:895px;top:796px;" width="10" height="5" viewBox="0 0 10 5"><path d="M0,2 Q3,0 5,2 T10,2" stroke="#ccc" fill="none"/></svg>
<svg style="left:895px;top:804px;" width="8" height="8" viewBox="0 0 8 8"><circle cx="4" cy="4" r="2.5" fill="none" stroke="#ccc" stroke-width="1.5" stroke-dasharray="1.5,1"/></svg>
<svg style="left:910px;top:795px;" width="10" height="6" viewBox="0 0 10 6"><path d="M0.5,0 V6" stroke="#ddd"/><polygon points="3,1 9,3 3,5" fill="#ddd"/></svg>
<svg style="left:911px;top:804px;" width="9" height="7" viewBox="0 0 9 7"><path d="M0,0 L4.5,3.5 L0,7 M9,0 L4.5,3.5 L9,7" stroke="#e04848" stroke-width="1.4" fill="none"/></svg>
<div style="left:928px;top:796px;width:6px;height:6px;background:#ccc;border-radius:3px;"></div>
<svg style="left:940px;top:795px;" width="8" height="8" viewBox="0 0 8 8"><path d="M1,7 L5,3" stroke="#ddd" stroke-width="1.3"/><circle cx="5.5" cy="2.5" r="1.8" fill="none" stroke="#ddd"/></svg>
<svg style="left:953px;top:795px;" width="8" height="8" viewBox="0 0 8 8"><polygon points="4,0 8,8 0,8" fill="none" stroke="#ddd"/><path d="M4,7 L6,2" stroke="#ddd"/></svg>
<div class="t" style="left:929px;top:806px;font-size:5.5px;color:#a0a0a0;">Metronome</div>
<div class="t" style="left:970px;top:794.5px;font-size:8px;color:#f0f0f0;">4 / 4</div>
<div class="t" style="left:970px;top:806px;font-size:5.5px;color:#a0a0a0;">Timing</div>
<div class="t" style="left:999px;top:794.5px;font-size:8px;color:#f0f0f0;">95.00</div>
<div class="t" style="left:1001px;top:806px;font-size:5.5px;color:#a0a0a0;">Tempo</div>
<div style="left:1032px;top:795px;width:39px;height:2px;background:#8ccdf2;"></div>
<div style="left:1032px;top:798px;width:39px;height:1.5px;background:#8ccdf2;"></div>
<div style="left:1066px;top:795px;width:5px;height:4px;background:#6a5050;"></div>
<div style="left:1032px;top:802px;width:38px;height:4px;background:#2e3034;"></div>
<div style="left:1032px;top:802px;width:29px;height:4px;background:repeating-linear-gradient(90deg,#6a95b8 0 2px,#5a7fa0 2px 3px);"></div>
<svg style="left:1076px;top:801px;" width="10" height="6" viewBox="0 0 10 6"><circle cx="3" cy="3" r="2.8" fill="#8ccdf2"/><circle cx="7" cy="3" r="2.5" fill="none" stroke="#8ccdf2" stroke-width="1"/></svg>
<div style="left:1397px;top:789px;width:33px;height:26.5px;background:#4a90d8;"></div>
<div class="t" style="left:1397px;top:800.5px;font-size:7.5px;color:#fff;width:33px;text-align:center;">Edit</div>
<div style="left:1430px;top:789px;width:32px;height:26.5px;background:#5e6065;"></div>
<div class="t" style="left:1430px;top:800.5px;font-size:7.5px;color:#fff;width:32px;text-align:center;">Mix</div>
<div style="left:1462px;top:789px;width:38px;height:26.5px;background:#4a90d8;"></div>
<div class="t" style="left:1462px;top:800.5px;font-size:7.5px;color:#fff;width:38px;text-align:center;">Browse</div>
</body></html>
